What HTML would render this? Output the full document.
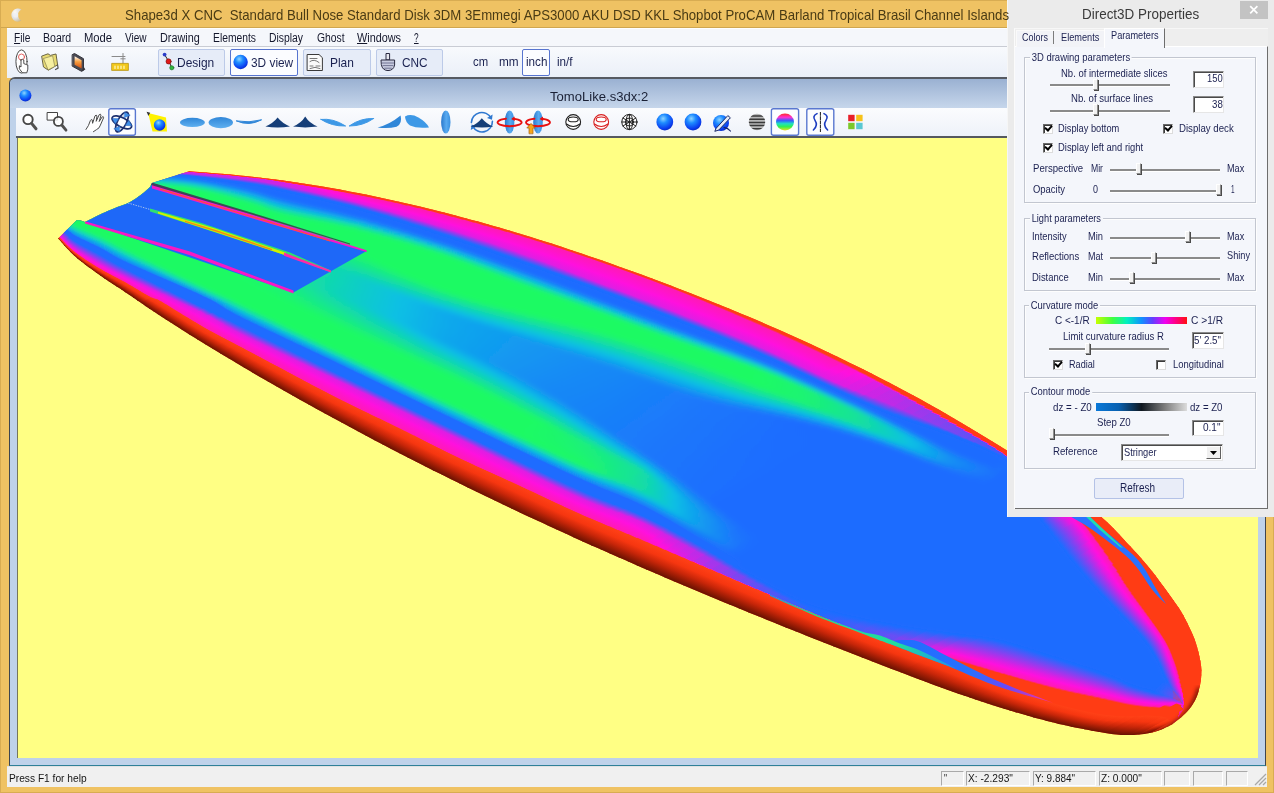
<!DOCTYPE html>
<html lang="en">
<head>
<meta charset="utf-8">
<title>Shape3d X CNC</title>
<style>
*{box-sizing:border-box;margin:0;padding:0}
html,body{width:1274px;height:793px;overflow:hidden;background:#efc263}
body{position:relative;font-family:"Liberation Sans",sans-serif;color:#1c2452;font-size:12px}
.abs{position:absolute}
.t{position:absolute;white-space:nowrap;line-height:1;transform-origin:0 50%}
#title{left:0;top:0;width:1274px;height:28px;background:#efc263;border-top:1px solid #d9ad52;border-left:1px solid #d9ad52;border-bottom:1px solid #cfa650}
#menubar{left:7px;top:28px;width:1260px;height:19px;background:#f5f7fb;border-bottom:1px solid #c9ccd4;border-top:1px solid #fff}
#tb{left:7px;top:47px;width:1260px;height:31px;background:linear-gradient(#f8fafd,#eaeff8)}
.btn{position:absolute;border:1px solid #bccae8;background:#e6ecf8;border-radius:2px}
.btn.sel{border:1.5px solid #5774cf;background:#fbfcff}
#mdi{left:9px;top:77px;width:1257px;height:689px;background:#bfd2ea;border:1px solid #3f454e;border-top:2px solid #565a62;border-radius:6px 6px 0 0;border-bottom:1.5px solid #2f8098}
#mdititle{left:0;top:0;width:1255px;height:29px;background:linear-gradient(#9ab1d2,#c6d6eb);border-radius:5px 5px 0 0}
#mditb{left:6px;top:29px;width:1243px;height:30px;background:linear-gradient(#fbfcfe,#eef2f9);border-bottom:2px solid #55595f}
#view{left:17px;top:138px;width:1241px;height:620px;background:#ffff84;overflow:hidden;border-left:1px solid #77775a}
#status{left:7px;top:766px;width:1260px;height:21px;background:#f0f0f0;border-top:1px solid #e2e2e2}
.pane{position:absolute;top:771px;height:15px;border:1px solid #fff;border-left-color:#a9a9a9;border-top-color:#a9a9a9}
/* panel */
#panel{left:1007px;top:0;width:267px;height:517px;background:#ebebeb;border-left:1px solid #f6f6f6}
#close{left:1240px;top:1px;width:28px;height:18px;background:#c3c3c3}
#dlg{left:1014px;top:28px;width:254px;height:481px;background:#eeeeee;border-left:1px solid #fbfbfb;border-top:1px solid #f7f7f7}
#page{left:1015px;top:46px;width:253px;height:463px;background:#f4f6fb;border-top:1px solid #fff;border-right:1px solid #6d6d6d;border-bottom:1px solid #6d6d6d}
.grp{position:absolute;border:1px solid #c2c6d0;left:1023.5px;width:232.5px;box-shadow:inset 1px 1px 0 #fdfdfd,1px 1px 0 #fdfdfd}
.edit{position:absolute;background:#fff;border:1px solid #8a8a8a;border-right-color:#e6e6e6;border-bottom-color:#e6e6e6;box-shadow:inset 1px 1px 0 #4a4a4a}
.sl{position:absolute;height:2px;background:#8a8a8a;border-bottom:1px solid #fff;box-sizing:content-box}
.th{position:absolute;width:5px;height:11px;background:#f2f2f2;border:1px solid #8e8e8e;border-left-color:#fff;border-top-color:#fff;box-shadow:1px 1px 0 #4a4a4a}
.cb{position:absolute;width:10px;height:10px;background:#fff;border:1px solid #6a6a6a;border-right-color:#dcdcdc;border-bottom-color:#dcdcdc;box-shadow:inset 1px 1px 0 #3a3a3a}
.cb.on:after{content:"";position:absolute;left:1.4px;top:.8px;width:5px;height:3px;border-left:2px solid #000;border-bottom:2px solid #000;transform:rotate(-48deg)}
</style>
</head>
<body>
<div id="title" class="abs">
  <svg class="abs" style="left:8px;top:6px" width="18" height="16" viewBox="0 0 18 16"><defs><radialGradient id="ico" cx=".35" cy=".3" r=".8"><stop offset="0" stop-color="#ffffff"/><stop offset=".6" stop-color="#dde2ee"/><stop offset="1" stop-color="#cdbb8c"/></radialGradient></defs><path d="M12.6 2.6 A6.6 6.6 0 1 0 12.6 13.600 A6 6 0 0 1 12.600 2.600Z" fill="url(#ico)" opacity=".92"/><circle cx="6.800" cy="8" r="2.600" fill="#eef1f7" opacity=".7"/></svg>
</div>
<div id="menubar" class="abs"></div>
<div id="tb" class="abs"></div>
<div class="btn" style="left:157.5px;top:48.5px;width:67px;height:27px"></div>
<div class="btn sel" style="left:230px;top:48.5px;width:68px;height:27px"></div>
<div class="btn" style="left:303px;top:48.5px;width:67.5px;height:27px"></div>
<div class="btn" style="left:375.5px;top:48.5px;width:67px;height:27px"></div>
<div class="btn sel" style="left:522.3px;top:48.5px;width:27.6px;height:27px"></div>
<!-- MDI child -->
<div id="mdi" class="abs">
  <div id="mdititle" class="abs"></div>
  <div id="mditb" class="abs"></div>
</div>
<div id="view" class="abs">
<svg class="abs" style="left:-18px;top:-138px" width="1274" height="793" viewBox="0 0 1274 793">
<defs>
<clipPath id="sil"><path d="M190.0 171.3 L195.4 171.7 L203.0 172.3 L211.9 173.0 L221.5 173.7 L231.1 174.6 L240.0 175.4 L248.3 176.3 L256.7 177.2 L265.0 178.2 L273.3 179.2 L281.7 180.3 L290.0 181.5 L298.2 182.7 L306.3 183.9 L314.4 185.2 L322.6 186.5 L331.1 188.0 L340.0 189.6 L349.4 191.4 L359.3 193.3 L369.4 195.3 L379.6 197.5 L389.9 199.7 L400.0 201.9 L410.0 204.2 L420.0 206.6 L430.0 209.0 L440.0 211.5 L450.0 214.1 L460.0 216.7 L470.0 219.4 L480.0 222.1 L490.0 224.9 L500.0 227.8 L510.0 230.7 L520.0 233.7 L530.0 236.8 L540.0 239.9 L550.0 243.1 L560.0 246.3 L570.0 249.7 L580.0 253.0 L590.0 256.4 L600.0 259.8 L610.0 263.3 L620.0 266.9 L630.0 270.5 L640.0 274.1 L650.0 277.8 L660.0 281.5 L670.0 285.3 L680.0 289.2 L690.0 293.1 L700.0 297.0 L710.0 301.0 L720.0 305.0 L730.0 309.1 L740.0 313.2 L750.0 317.3 L760.0 321.6 L770.0 325.9 L780.0 330.3 L790.0 334.8 L800.0 339.3 L810.0 343.8 L820.0 348.5 L830.0 353.2 L840.0 358.0 L850.0 362.9 L860.0 367.8 L870.0 372.8 L880.0 377.9 L889.9 383.0 L899.7 388.2 L909.6 393.4 L919.5 398.8 L929.6 404.4 L940.0 410.3 L951.0 416.7 L962.5 423.5 L974.2 430.5 L985.8 437.5 L996.9 444.3 L1007.0 450.6 L1016.1 456.4 L1024.5 461.9 L1032.4 467.1 L1039.9 472.2 L1047.4 477.4 L1055.0 482.7 L1062.9 488.3 L1071.0 494.0 L1079.1 499.8 L1086.8 505.5 L1094.0 511.0 L1100.4 516.2 L1105.9 521.0 L1110.6 525.4 L1114.8 529.7 L1118.6 533.8 L1122.5 538.0 L1126.5 542.4 L1130.7 546.8 L1134.7 551.2 L1138.8 555.6 L1142.8 560.2 L1146.9 565.0 L1151.0 570.0 L1155.4 575.6 L1160.1 581.9 L1164.8 588.3 L1169.3 594.5 L1173.4 600.2 L1176.7 605.0 L1179.2 608.6 L1180.9 611.3 L1182.2 613.4 L1183.3 615.3 L1184.4 617.4 L1185.7 620.0 L1187.3 623.1 L1188.9 626.5 L1190.6 630.0 L1192.2 633.6 L1193.7 637.1 L1195.0 640.5 L1196.1 643.8 L1197.1 647.2 L1198.0 650.4 L1198.8 653.6 L1199.4 656.6 L1200.0 659.4 L1200.5 661.8 L1200.8 664.0 L1201.1 666.0 L1201.3 667.9 L1201.4 669.9 L1201.4 672.0 L1201.3 674.3 L1201.2 676.6 L1201.0 679.0 L1200.7 681.4 L1200.3 683.8 L1199.8 686.2 L1199.2 688.6 L1198.6 691.0 L1197.9 693.4 L1197.1 695.8 L1196.1 698.1 L1195.0 700.4 L1193.8 702.6 L1192.4 704.8 L1190.9 706.9 L1189.3 708.9 L1187.6 711.0 L1185.7 713.0 L1183.5 715.1 L1181.0 717.4 L1178.3 719.6 L1175.7 721.6 L1173.5 723.3 L1172.0 724.6 L1172.0 724.6 L1170.4 725.3 L1168.2 726.4 L1165.6 727.6 L1162.8 728.9 L1160.0 730.0 L1157.3 731.0 L1154.7 731.8 L1152.1 732.4 L1149.5 733.0 L1146.8 733.5 L1144.1 733.9 L1141.5 734.3 L1138.9 734.6 L1136.3 734.8 L1133.7 734.9 L1131.0 735.0 L1128.4 735.0 L1125.8 735.0 L1123.4 735.0 L1121.3 734.9 L1119.1 734.8 L1116.7 734.6 L1113.7 734.2 L1110.0 733.7 L1105.3 733.0 L1099.7 732.0 L1093.6 731.0 L1087.2 729.8 L1080.9 728.6 L1075.0 727.4 L1069.5 726.2 L1064.2 725.1 L1058.9 723.9 L1053.6 722.6 L1048.0 721.2 L1042.0 719.6 L1035.6 717.9 L1029.0 716.1 L1022.1 714.1 L1014.9 712.0 L1007.6 709.8 L1000.0 707.5 L992.1 705.0 L983.9 702.3 L975.5 699.5 L967.0 696.6 L958.4 693.7 L950.0 690.7 L941.7 687.7 L933.3 684.7 L925.0 681.6 L916.7 678.4 L908.3 675.3 L900.0 672.1 L891.7 668.9 L883.3 665.7 L875.0 662.5 L866.7 659.3 L858.3 656.0 L850.0 652.8 L841.7 649.5 L833.3 646.3 L825.0 643.0 L816.7 639.7 L808.3 636.4 L800.0 633.1 L791.7 629.8 L783.3 626.4 L775.0 623.1 L766.7 619.7 L758.3 616.3 L750.0 612.9 L741.7 609.5 L733.3 606.1 L725.0 602.7 L716.7 599.2 L708.3 595.8 L700.0 592.3 L691.7 588.8 L683.3 585.3 L675.0 581.7 L666.7 578.2 L658.3 574.6 L650.0 571.0 L641.7 567.4 L633.3 563.8 L625.0 560.1 L616.7 556.5 L608.3 552.8 L600.0 549.1 L591.7 545.4 L583.3 541.7 L575.0 537.9 L566.7 534.1 L558.3 530.3 L550.0 526.5 L541.7 522.6 L533.3 518.8 L525.0 514.9 L516.7 510.9 L508.3 507.0 L500.0 503.0 L491.7 499.0 L483.3 495.0 L475.0 491.0 L466.7 486.9 L458.3 482.8 L450.0 478.7 L441.7 474.6 L433.3 470.4 L425.0 466.2 L416.7 462.0 L408.3 457.8 L400.0 453.5 L391.7 449.2 L383.3 444.8 L375.0 440.4 L366.7 436.0 L358.3 431.6 L350.0 427.1 L341.7 422.6 L333.3 418.1 L325.0 413.5 L316.7 409.0 L308.3 404.3 L300.0 399.7 L291.7 395.0 L283.3 390.3 L275.0 385.6 L266.7 380.8 L258.3 376.0 L250.0 371.1 L241.4 366.0 L232.4 360.6 L223.4 355.2 L214.8 350.0 L206.9 345.2 L200.0 341.0 L194.4 337.6 L189.8 334.7 L185.9 332.3 L182.4 330.0 L178.9 327.8 L175.0 325.3 L170.8 322.6 L166.7 319.9 L162.5 317.2 L158.3 314.5 L154.2 311.8 L150.0 309.0 L145.8 306.2 L141.7 303.3 L137.5 300.5 L133.3 297.6 L129.2 294.7 L125.0 291.9 L120.8 289.1 L116.7 286.4 L112.5 283.7 L108.3 281.0 L104.2 278.2 L100.0 275.3 L95.7 272.3 L91.4 269.1 L87.0 265.9 L82.7 262.6 L78.7 259.4 L75.0 256.3 L71.5 253.0 L68.2 249.6 L65.0 246.2 L62.3 243.0 L59.9 240.3 L58.2 238.4 L76.5 220.3 L80.0 220.2 L85.0 222.0 L86.6 221.2 L88.9 220.0 L91.6 218.7 L94.4 217.2 L97.3 215.8 L100.0 214.5 L102.5 213.3 L105.1 212.2 L107.6 211.1 L110.1 210.0 L112.6 209.0 L115.0 208.0 L117.3 207.1 L119.5 206.3 L121.7 205.6 L123.8 204.8 L125.9 204.0 L128.0 203.0 L130.1 201.9 L132.1 200.7 L134.2 199.5 L136.2 198.2 L138.1 196.8 L140.0 195.5 L141.9 194.0 L143.9 192.4 L145.8 190.8 L147.5 189.2 L148.9 187.9 L150.0 187.0 L152.0 183.0 L190.0 171.1 Z"/></clipPath>
<filter id="bl" x="-5%" y="-5%" width="110%" height="110%"><feGaussianBlur stdDeviation="2.2"/></filter>
<filter id="b2" x="-2%" y="-2%" width="104%" height="104%"><feGaussianBlur stdDeviation="2.5"/></filter>
<linearGradient id="g1" gradientUnits="userSpaceOnUse" x1="152.9" y1="169.4" x2="152.7" y2="173.7"><stop offset="0" stop-color="#ff3c14"/><stop offset="0.114" stop-color="#ff3c14"/><stop offset="0.207" stop-color="#ff10de"/><stop offset="0.229" stop-color="#c926e6"/><stop offset="0.545" stop-color="#c926e6"/><stop offset="1" stop-color="#1e6cff"/></linearGradient>
<linearGradient id="g2" gradientUnits="userSpaceOnUse" x1="145.5" y1="173.5" x2="120.6" y2="245.3"><stop offset="0" stop-color="#1e6cff"/><stop offset="0.062" stop-color="#1e6cff"/><stop offset="0.12" stop-color="#08c0e4"/><stop offset="0.185" stop-color="#1efa64"/><stop offset="0.248" stop-color="#1efa64"/><stop offset="0.434" stop-color="#1efa64"/><stop offset="0.803" stop-color="#1efa64"/><stop offset="0.891" stop-color="#1efa64"/><stop offset="0.942" stop-color="#1efa64"/><stop offset="0.973" stop-color="#08c0e4"/><stop offset="1" stop-color="#1e6cff"/></linearGradient>
<linearGradient id="g3" gradientUnits="userSpaceOnUse" x1="55.9" y1="222.8" x2="51.1" y2="228.3"><stop offset="0" stop-color="#1e6cff"/><stop offset="0.287" stop-color="#1e6cff"/><stop offset="0.774" stop-color="#df1de3"/><stop offset="0.849" stop-color="#ff10de"/><stop offset="0.956" stop-color="#ff19b6"/><stop offset="1" stop-color="#ff3c14"/></linearGradient>
<linearGradient id="g4" gradientUnits="userSpaceOnUse" x1="49.1" y1="226.5" x2="48.6" y2="226.9"><stop offset="0" stop-color="#ff4016"/><stop offset="0.3" stop-color="#f63610"/><stop offset="0.58" stop-color="#c82609"/><stop offset="0.82" stop-color="#921a04"/><stop offset="1" stop-color="#681202"/></linearGradient>
<linearGradient id="g5" gradientUnits="userSpaceOnUse" x1="161.3" y1="169.8" x2="161.1" y2="174.0"><stop offset="0" stop-color="#ff3c14"/><stop offset="0.108" stop-color="#ff3c14"/><stop offset="0.202" stop-color="#ff10de"/><stop offset="0.225" stop-color="#c926e6"/><stop offset="0.541" stop-color="#c926e6"/><stop offset="1" stop-color="#1e6cff"/></linearGradient>
<linearGradient id="g6" gradientUnits="userSpaceOnUse" x1="154.1" y1="173.8" x2="137.0" y2="244.2"><stop offset="0" stop-color="#1e6cff"/><stop offset="0.06" stop-color="#1e6cff"/><stop offset="0.116" stop-color="#08c0e4"/><stop offset="0.179" stop-color="#1efa64"/><stop offset="0.23" stop-color="#1efa64"/><stop offset="0.397" stop-color="#1efa64"/><stop offset="0.771" stop-color="#1efa64"/><stop offset="0.883" stop-color="#1efa64"/><stop offset="0.939" stop-color="#1efa64"/><stop offset="0.972" stop-color="#08c0e4"/><stop offset="1" stop-color="#1e6cff"/></linearGradient>
<linearGradient id="g7" gradientUnits="userSpaceOnUse" x1="60.0" y1="225.5" x2="54.4" y2="231.9"><stop offset="0" stop-color="#1e6cff"/><stop offset="0.274" stop-color="#1e6cff"/><stop offset="0.773" stop-color="#df1de3"/><stop offset="0.847" stop-color="#ff10de"/><stop offset="0.952" stop-color="#ff19b6"/><stop offset="1" stop-color="#ff3c14"/></linearGradient>
<linearGradient id="g8" gradientUnits="userSpaceOnUse" x1="52.0" y1="229.9" x2="51.4" y2="230.4"><stop offset="0" stop-color="#ff4016"/><stop offset="0.3" stop-color="#f63610"/><stop offset="0.58" stop-color="#c82609"/><stop offset="0.82" stop-color="#921a04"/><stop offset="1" stop-color="#681202"/></linearGradient>
<linearGradient id="g9" gradientUnits="userSpaceOnUse" x1="169.7" y1="170.2" x2="169.5" y2="174.4"><stop offset="0" stop-color="#ff3c14"/><stop offset="0.103" stop-color="#ff3c14"/><stop offset="0.198" stop-color="#ff10de"/><stop offset="0.22" stop-color="#c926e6"/><stop offset="0.538" stop-color="#c926e6"/><stop offset="1" stop-color="#1e6cff"/></linearGradient>
<linearGradient id="g10" gradientUnits="userSpaceOnUse" x1="162.6" y1="174.1" x2="144.1" y2="248.2"><stop offset="0" stop-color="#1e6cff"/><stop offset="0.059" stop-color="#1e6cff"/><stop offset="0.112" stop-color="#08c0e4"/><stop offset="0.173" stop-color="#1efa64"/><stop offset="0.222" stop-color="#1efa64"/><stop offset="0.382" stop-color="#1efa64"/><stop offset="0.751" stop-color="#1efa64"/><stop offset="0.873" stop-color="#1efa64"/><stop offset="0.935" stop-color="#1efa64"/><stop offset="0.97" stop-color="#08c0e4"/><stop offset="1" stop-color="#1e6cff"/></linearGradient>
<linearGradient id="g11" gradientUnits="userSpaceOnUse" x1="64.0" y1="228.3" x2="57.7" y2="235.6"><stop offset="0" stop-color="#1e6cff"/><stop offset="0.267" stop-color="#1e6cff"/><stop offset="0.774" stop-color="#df1de3"/><stop offset="0.847" stop-color="#ff10de"/><stop offset="0.951" stop-color="#ff19b6"/><stop offset="1" stop-color="#ff3c14"/></linearGradient>
<linearGradient id="g12" gradientUnits="userSpaceOnUse" x1="55.0" y1="233.2" x2="54.3" y2="233.8"><stop offset="0" stop-color="#ff4016"/><stop offset="0.3" stop-color="#f63610"/><stop offset="0.58" stop-color="#c82609"/><stop offset="0.82" stop-color="#921a04"/><stop offset="1" stop-color="#681202"/></linearGradient>
<linearGradient id="g13" gradientUnits="userSpaceOnUse" x1="178.0" y1="170.6" x2="177.8" y2="174.8"><stop offset="0" stop-color="#ff3c14"/><stop offset="0.104" stop-color="#ff3c14"/><stop offset="0.197" stop-color="#ff10de"/><stop offset="0.219" stop-color="#c926e6"/><stop offset="0.537" stop-color="#c926e6"/><stop offset="1" stop-color="#1e6cff"/></linearGradient>
<linearGradient id="g14" gradientUnits="userSpaceOnUse" x1="171.0" y1="174.5" x2="149.9" y2="253.0"><stop offset="0" stop-color="#1e6cff"/><stop offset="0.057" stop-color="#1e6cff"/><stop offset="0.108" stop-color="#08c0e4"/><stop offset="0.166" stop-color="#1efa64"/><stop offset="0.22" stop-color="#1efa64"/><stop offset="0.377" stop-color="#1efa64"/><stop offset="0.737" stop-color="#1efa64"/><stop offset="0.854" stop-color="#1efa64"/><stop offset="0.93" stop-color="#1efa64"/><stop offset="0.967" stop-color="#08c0e4"/><stop offset="1" stop-color="#1e6cff"/></linearGradient>
<linearGradient id="g15" gradientUnits="userSpaceOnUse" x1="68.1" y1="231.1" x2="61.0" y2="239.1"><stop offset="0" stop-color="#1e6cff"/><stop offset="0.267" stop-color="#1e6cff"/><stop offset="0.774" stop-color="#df1de3"/><stop offset="0.847" stop-color="#ff10de"/><stop offset="0.95" stop-color="#ff19b6"/><stop offset="1" stop-color="#ff3c14"/></linearGradient>
<linearGradient id="g16" gradientUnits="userSpaceOnUse" x1="58.0" y1="236.6" x2="57.2" y2="237.3"><stop offset="0" stop-color="#ff4016"/><stop offset="0.3" stop-color="#f63610"/><stop offset="0.58" stop-color="#c82609"/><stop offset="0.82" stop-color="#921a04"/><stop offset="1" stop-color="#681202"/></linearGradient>
<linearGradient id="g17" gradientUnits="userSpaceOnUse" x1="186.3" y1="171.1" x2="186.0" y2="175.4"><stop offset="0" stop-color="#ff3c14"/><stop offset="0.109" stop-color="#ff3c14"/><stop offset="0.201" stop-color="#ff10de"/><stop offset="0.223" stop-color="#c926e6"/><stop offset="0.538" stop-color="#c926e6"/><stop offset="1" stop-color="#1e6cff"/></linearGradient>
<linearGradient id="g18" gradientUnits="userSpaceOnUse" x1="179.2" y1="175.0" x2="153.8" y2="258.9"><stop offset="0" stop-color="#1e6cff"/><stop offset="0.055" stop-color="#1e6cff"/><stop offset="0.104" stop-color="#08c0e4"/><stop offset="0.16" stop-color="#1efa64"/><stop offset="0.219" stop-color="#1efa64"/><stop offset="0.374" stop-color="#1efa64"/><stop offset="0.722" stop-color="#1efa64"/><stop offset="0.825" stop-color="#1efa64"/><stop offset="0.918" stop-color="#1efa64"/><stop offset="0.962" stop-color="#08c0e4"/><stop offset="1" stop-color="#1e6cff"/></linearGradient>
<linearGradient id="g19" gradientUnits="userSpaceOnUse" x1="71.6" y1="234.1" x2="63.8" y2="242.4"><stop offset="0" stop-color="#1e6cff"/><stop offset="0.263" stop-color="#1e6cff"/><stop offset="0.768" stop-color="#df1de3"/><stop offset="0.843" stop-color="#ff10de"/><stop offset="0.95" stop-color="#ff19b6"/><stop offset="1" stop-color="#ff3c14"/></linearGradient>
<linearGradient id="g20" gradientUnits="userSpaceOnUse" x1="61.1" y1="239.9" x2="60.2" y2="240.7"><stop offset="0" stop-color="#ff4016"/><stop offset="0.3" stop-color="#f63610"/><stop offset="0.58" stop-color="#c82609"/><stop offset="0.82" stop-color="#921a04"/><stop offset="1" stop-color="#681202"/></linearGradient>
<linearGradient id="g21" gradientUnits="userSpaceOnUse" x1="194.4" y1="171.6" x2="194.0" y2="176.1"><stop offset="0" stop-color="#ff3c14"/><stop offset="0.119" stop-color="#ff3c14"/><stop offset="0.209" stop-color="#ff10de"/><stop offset="0.23" stop-color="#c926e6"/><stop offset="0.541" stop-color="#c926e6"/><stop offset="1" stop-color="#1e6cff"/></linearGradient>
<linearGradient id="g22" gradientUnits="userSpaceOnUse" x1="187.2" y1="175.6" x2="166.4" y2="259.2"><stop offset="0" stop-color="#1e6cff"/><stop offset="0.054" stop-color="#1e6cff"/><stop offset="0.101" stop-color="#08c0e4"/><stop offset="0.155" stop-color="#1efa64"/><stop offset="0.219" stop-color="#1efa64"/><stop offset="0.375" stop-color="#1efa64"/><stop offset="0.714" stop-color="#1efa64"/><stop offset="0.809" stop-color="#1efa64"/><stop offset="0.912" stop-color="#1efa64"/><stop offset="0.959" stop-color="#08c0e4"/><stop offset="1" stop-color="#1e6cff"/></linearGradient>
<linearGradient id="g23" gradientUnits="userSpaceOnUse" x1="75.9" y1="236.8" x2="68.8" y2="246.5"><stop offset="0" stop-color="#1e6cff"/><stop offset="0.347" stop-color="#1e6cff"/><stop offset="0.785" stop-color="#df1de3"/><stop offset="0.856" stop-color="#ff10de"/><stop offset="0.957" stop-color="#ff19b6"/><stop offset="1" stop-color="#ff3c14"/></linearGradient>
<linearGradient id="g24" gradientUnits="userSpaceOnUse" x1="64.3" y1="243.2" x2="63.2" y2="244.1"><stop offset="0" stop-color="#ff4016"/><stop offset="0.3" stop-color="#f63610"/><stop offset="0.58" stop-color="#c82609"/><stop offset="0.82" stop-color="#921a04"/><stop offset="1" stop-color="#681202"/></linearGradient>
<linearGradient id="g25" gradientUnits="userSpaceOnUse" x1="202.4" y1="172.2" x2="202.0" y2="176.9"><stop offset="0" stop-color="#ff3c14"/><stop offset="0.131" stop-color="#ff3c14"/><stop offset="0.218" stop-color="#ff10de"/><stop offset="0.239" stop-color="#c926e6"/><stop offset="0.546" stop-color="#c926e6"/><stop offset="1" stop-color="#1e6cff"/></linearGradient>
<linearGradient id="g26" gradientUnits="userSpaceOnUse" x1="194.9" y1="176.3" x2="173.6" y2="262.2"><stop offset="0" stop-color="#1e6cff"/><stop offset="0.054" stop-color="#1e6cff"/><stop offset="0.099" stop-color="#08c0e4"/><stop offset="0.15" stop-color="#1efa64"/><stop offset="0.219" stop-color="#1efa64"/><stop offset="0.378" stop-color="#1efa64"/><stop offset="0.71" stop-color="#1efa64"/><stop offset="0.805" stop-color="#1efa64"/><stop offset="0.91" stop-color="#1efa64"/><stop offset="0.958" stop-color="#08c0e4"/><stop offset="1" stop-color="#1e6cff"/></linearGradient>
<linearGradient id="g27" gradientUnits="userSpaceOnUse" x1="80.7" y1="239.1" x2="73.2" y2="250.2"><stop offset="0" stop-color="#1e6cff"/><stop offset="0.369" stop-color="#1e6cff"/><stop offset="0.801" stop-color="#df1de3"/><stop offset="0.869" stop-color="#ff10de"/><stop offset="0.965" stop-color="#ff19b6"/><stop offset="1" stop-color="#ff3c14"/></linearGradient>
<linearGradient id="g28" gradientUnits="userSpaceOnUse" x1="67.5" y1="246.4" x2="66.2" y2="247.6"><stop offset="0" stop-color="#ff4016"/><stop offset="0.3" stop-color="#f63610"/><stop offset="0.58" stop-color="#c82609"/><stop offset="0.82" stop-color="#921a04"/><stop offset="1" stop-color="#681202"/></linearGradient>
<linearGradient id="g29" gradientUnits="userSpaceOnUse" x1="210.4" y1="172.8" x2="209.9" y2="177.9"><stop offset="0" stop-color="#ff3c14"/><stop offset="0.14" stop-color="#ff3c14"/><stop offset="0.224" stop-color="#ff10de"/><stop offset="0.244" stop-color="#c926e6"/><stop offset="0.546" stop-color="#c926e6"/><stop offset="1" stop-color="#1e6cff"/></linearGradient>
<linearGradient id="g30" gradientUnits="userSpaceOnUse" x1="202.5" y1="177.1" x2="180.2" y2="265.4"><stop offset="0" stop-color="#1e6cff"/><stop offset="0.054" stop-color="#1e6cff"/><stop offset="0.098" stop-color="#08c0e4"/><stop offset="0.148" stop-color="#1efa64"/><stop offset="0.219" stop-color="#1efa64"/><stop offset="0.38" stop-color="#1efa64"/><stop offset="0.706" stop-color="#1efa64"/><stop offset="0.809" stop-color="#1efa64"/><stop offset="0.91" stop-color="#1efa64"/><stop offset="0.958" stop-color="#08c0e4"/><stop offset="1" stop-color="#1e6cff"/></linearGradient>
<linearGradient id="g31" gradientUnits="userSpaceOnUse" x1="85.6" y1="241.4" x2="77.7" y2="253.9"><stop offset="0" stop-color="#1e6cff"/><stop offset="0.364" stop-color="#1e6cff"/><stop offset="0.802" stop-color="#df1de3"/><stop offset="0.871" stop-color="#ff10de"/><stop offset="0.97" stop-color="#ff19b6"/><stop offset="1" stop-color="#ff3c14"/></linearGradient>
<linearGradient id="g32" gradientUnits="userSpaceOnUse" x1="70.9" y1="249.5" x2="69.4" y2="251.0"><stop offset="0" stop-color="#ff4016"/><stop offset="0.3" stop-color="#f63610"/><stop offset="0.58" stop-color="#c82609"/><stop offset="0.82" stop-color="#921a04"/><stop offset="1" stop-color="#681202"/></linearGradient>
<linearGradient id="g33" gradientUnits="userSpaceOnUse" x1="218.3" y1="173.4" x2="217.7" y2="178.9"><stop offset="0" stop-color="#ff3c14"/><stop offset="0.145" stop-color="#ff3c14"/><stop offset="0.227" stop-color="#ff10de"/><stop offset="0.246" stop-color="#c926e6"/><stop offset="0.543" stop-color="#c926e6"/><stop offset="1" stop-color="#1e6cff"/></linearGradient>
<linearGradient id="g34" gradientUnits="userSpaceOnUse" x1="210.0" y1="178.0" x2="186.4" y2="268.6"><stop offset="0" stop-color="#1e6cff"/><stop offset="0.056" stop-color="#1e6cff"/><stop offset="0.099" stop-color="#08c0e4"/><stop offset="0.148" stop-color="#1efa64"/><stop offset="0.218" stop-color="#1efa64"/><stop offset="0.382" stop-color="#1efa64"/><stop offset="0.703" stop-color="#1efa64"/><stop offset="0.813" stop-color="#1efa64"/><stop offset="0.911" stop-color="#1efa64"/><stop offset="0.958" stop-color="#08c0e4"/><stop offset="1" stop-color="#1e6cff"/></linearGradient>
<linearGradient id="g35" gradientUnits="userSpaceOnUse" x1="90.5" y1="243.7" x2="82.3" y2="257.3"><stop offset="0" stop-color="#1e6cff"/><stop offset="0.356" stop-color="#1e6cff"/><stop offset="0.795" stop-color="#df1de3"/><stop offset="0.868" stop-color="#ff10de"/><stop offset="0.972" stop-color="#ff19b6"/><stop offset="1" stop-color="#ff3c14"/></linearGradient>
<linearGradient id="g36" gradientUnits="userSpaceOnUse" x1="74.5" y1="252.5" x2="72.8" y2="254.3"><stop offset="0" stop-color="#ff4016"/><stop offset="0.3" stop-color="#f63610"/><stop offset="0.58" stop-color="#c82609"/><stop offset="0.82" stop-color="#921a04"/><stop offset="1" stop-color="#681202"/></linearGradient>
<linearGradient id="g37" gradientUnits="userSpaceOnUse" x1="226.2" y1="174.1" x2="225.5" y2="179.9"><stop offset="0" stop-color="#ff3c14"/><stop offset="0.146" stop-color="#ff3c14"/><stop offset="0.225" stop-color="#ff10de"/><stop offset="0.244" stop-color="#c926e6"/><stop offset="0.538" stop-color="#c926e6"/><stop offset="1" stop-color="#1e6cff"/></linearGradient>
<linearGradient id="g38" gradientUnits="userSpaceOnUse" x1="217.4" y1="178.9" x2="192.3" y2="272.1"><stop offset="0" stop-color="#1e6cff"/><stop offset="0.058" stop-color="#1e6cff"/><stop offset="0.101" stop-color="#08c0e4"/><stop offset="0.15" stop-color="#1efa64"/><stop offset="0.217" stop-color="#1efa64"/><stop offset="0.384" stop-color="#1efa64"/><stop offset="0.7" stop-color="#1efa64"/><stop offset="0.815" stop-color="#1efa64"/><stop offset="0.913" stop-color="#1efa64"/><stop offset="0.96" stop-color="#08c0e4"/><stop offset="1" stop-color="#1e6cff"/></linearGradient>
<linearGradient id="g39" gradientUnits="userSpaceOnUse" x1="95.4" y1="246.0" x2="86.9" y2="260.4"><stop offset="0" stop-color="#1e6cff"/><stop offset="0.347" stop-color="#1e6cff"/><stop offset="0.786" stop-color="#df1de3"/><stop offset="0.863" stop-color="#ff10de"/><stop offset="0.971" stop-color="#ff19b6"/><stop offset="1" stop-color="#ff3c14"/></linearGradient>
<linearGradient id="g40" gradientUnits="userSpaceOnUse" x1="78.4" y1="255.4" x2="76.5" y2="257.6"><stop offset="0" stop-color="#ff4016"/><stop offset="0.3" stop-color="#f63610"/><stop offset="0.58" stop-color="#c82609"/><stop offset="0.82" stop-color="#921a04"/><stop offset="1" stop-color="#681202"/></linearGradient>
<linearGradient id="g41" gradientUnits="userSpaceOnUse" x1="234.0" y1="174.8" x2="233.2" y2="180.9"><stop offset="0" stop-color="#ff3c14"/><stop offset="0.142" stop-color="#ff3c14"/><stop offset="0.218" stop-color="#ff10de"/><stop offset="0.237" stop-color="#c926e6"/><stop offset="0.532" stop-color="#c926e6"/><stop offset="1" stop-color="#1e6cff"/></linearGradient>
<linearGradient id="g42" gradientUnits="userSpaceOnUse" x1="224.7" y1="179.9" x2="197.3" y2="276.1"><stop offset="0" stop-color="#1e6cff"/><stop offset="0.06" stop-color="#1e6cff"/><stop offset="0.103" stop-color="#08c0e4"/><stop offset="0.153" stop-color="#1efa64"/><stop offset="0.216" stop-color="#1efa64"/><stop offset="0.386" stop-color="#1efa64"/><stop offset="0.696" stop-color="#1efa64"/><stop offset="0.813" stop-color="#1efa64"/><stop offset="0.916" stop-color="#1efa64"/><stop offset="0.961" stop-color="#08c0e4"/><stop offset="1" stop-color="#1e6cff"/></linearGradient>
<linearGradient id="g43" gradientUnits="userSpaceOnUse" x1="100.2" y1="248.4" x2="91.2" y2="263.5"><stop offset="0" stop-color="#1e6cff"/><stop offset="0.337" stop-color="#1e6cff"/><stop offset="0.777" stop-color="#df1de3"/><stop offset="0.856" stop-color="#ff10de"/><stop offset="0.97" stop-color="#ff19b6"/><stop offset="1" stop-color="#ff3c14"/></linearGradient>
<linearGradient id="g44" gradientUnits="userSpaceOnUse" x1="82.3" y1="258.2" x2="80.3" y2="260.7"><stop offset="0" stop-color="#ff4016"/><stop offset="0.3" stop-color="#f63610"/><stop offset="0.58" stop-color="#c82609"/><stop offset="0.82" stop-color="#921a04"/><stop offset="1" stop-color="#681202"/></linearGradient>
<linearGradient id="g45" gradientUnits="userSpaceOnUse" x1="241.7" y1="175.6" x2="240.9" y2="182.0"><stop offset="0" stop-color="#ff3c14"/><stop offset="0.133" stop-color="#ff3c14"/><stop offset="0.208" stop-color="#ff10de"/><stop offset="0.226" stop-color="#c926e6"/><stop offset="0.524" stop-color="#c926e6"/><stop offset="1" stop-color="#1e6cff"/></linearGradient>
<linearGradient id="g46" gradientUnits="userSpaceOnUse" x1="232.0" y1="180.9" x2="200.9" y2="280.8"><stop offset="0" stop-color="#1e6cff"/><stop offset="0.063" stop-color="#1e6cff"/><stop offset="0.107" stop-color="#08c0e4"/><stop offset="0.157" stop-color="#1efa64"/><stop offset="0.216" stop-color="#1efa64"/><stop offset="0.386" stop-color="#1efa64"/><stop offset="0.691" stop-color="#1efa64"/><stop offset="0.807" stop-color="#1efa64"/><stop offset="0.917" stop-color="#1efa64"/><stop offset="0.961" stop-color="#08c0e4"/><stop offset="1" stop-color="#1e6cff"/></linearGradient>
<linearGradient id="g47" gradientUnits="userSpaceOnUse" x1="104.7" y1="250.9" x2="95.0" y2="266.3"><stop offset="0" stop-color="#1e6cff"/><stop offset="0.323" stop-color="#1e6cff"/><stop offset="0.765" stop-color="#df1de3"/><stop offset="0.849" stop-color="#ff10de"/><stop offset="0.968" stop-color="#ff19b6"/><stop offset="1" stop-color="#ff3c14"/></linearGradient>
<linearGradient id="g48" gradientUnits="userSpaceOnUse" x1="86.4" y1="261.0" x2="84.2" y2="263.8"><stop offset="0" stop-color="#ff4016"/><stop offset="0.3" stop-color="#f63610"/><stop offset="0.58" stop-color="#c82609"/><stop offset="0.82" stop-color="#921a04"/><stop offset="1" stop-color="#681202"/></linearGradient>
<linearGradient id="g49" gradientUnits="userSpaceOnUse" x1="249.3" y1="176.4" x2="248.4" y2="183.1"><stop offset="0" stop-color="#ff3c14"/><stop offset="0.122" stop-color="#ff3c14"/><stop offset="0.195" stop-color="#ff10de"/><stop offset="0.213" stop-color="#c926e6"/><stop offset="0.517" stop-color="#c926e6"/><stop offset="1" stop-color="#1e6cff"/></linearGradient>
<linearGradient id="g50" gradientUnits="userSpaceOnUse" x1="239.3" y1="181.9" x2="206.6" y2="284.6"><stop offset="0" stop-color="#1e6cff"/><stop offset="0.065" stop-color="#1e6cff"/><stop offset="0.11" stop-color="#08c0e4"/><stop offset="0.161" stop-color="#1efa64"/><stop offset="0.215" stop-color="#1efa64"/><stop offset="0.387" stop-color="#1efa64"/><stop offset="0.685" stop-color="#1efa64"/><stop offset="0.798" stop-color="#1efa64"/><stop offset="0.915" stop-color="#1efa64"/><stop offset="0.961" stop-color="#08c0e4"/><stop offset="1" stop-color="#1e6cff"/></linearGradient>
<linearGradient id="g51" gradientUnits="userSpaceOnUse" x1="108.9" y1="253.6" x2="99.3" y2="269.0"><stop offset="0" stop-color="#1e6cff"/><stop offset="0.306" stop-color="#1e6cff"/><stop offset="0.75" stop-color="#df1de3"/><stop offset="0.839" stop-color="#ff10de"/><stop offset="0.966" stop-color="#ff19b6"/><stop offset="1" stop-color="#ff3c14"/></linearGradient>
<linearGradient id="g52" gradientUnits="userSpaceOnUse" x1="90.6" y1="263.6" x2="88.3" y2="266.8"><stop offset="0" stop-color="#ff4016"/><stop offset="0.3" stop-color="#f63610"/><stop offset="0.58" stop-color="#c82609"/><stop offset="0.82" stop-color="#921a04"/><stop offset="1" stop-color="#681202"/></linearGradient>
<linearGradient id="g53" gradientUnits="userSpaceOnUse" x1="256.8" y1="177.2" x2="255.9" y2="184.2"><stop offset="0" stop-color="#ff3c14"/><stop offset="0.111" stop-color="#ff3c14"/><stop offset="0.182" stop-color="#ff10de"/><stop offset="0.199" stop-color="#c926e6"/><stop offset="0.512" stop-color="#c926e6"/><stop offset="1" stop-color="#1e6cff"/></linearGradient>
<linearGradient id="g54" gradientUnits="userSpaceOnUse" x1="246.5" y1="182.9" x2="214.8" y2="287.0"><stop offset="0" stop-color="#1e6cff"/><stop offset="0.067" stop-color="#1e6cff"/><stop offset="0.113" stop-color="#08c0e4"/><stop offset="0.166" stop-color="#1efa64"/><stop offset="0.215" stop-color="#1efa64"/><stop offset="0.387" stop-color="#1efa64"/><stop offset="0.679" stop-color="#1efa64"/><stop offset="0.789" stop-color="#1efa64"/><stop offset="0.914" stop-color="#1efa64"/><stop offset="0.96" stop-color="#08c0e4"/><stop offset="1" stop-color="#1e6cff"/></linearGradient>
<linearGradient id="g55" gradientUnits="userSpaceOnUse" x1="113.3" y1="256.2" x2="104.2" y2="271.8"><stop offset="0" stop-color="#1e6cff"/><stop offset="0.301" stop-color="#1e6cff"/><stop offset="0.738" stop-color="#df1de3"/><stop offset="0.831" stop-color="#ff10de"/><stop offset="0.964" stop-color="#ff19b6"/><stop offset="1" stop-color="#ff3c14"/></linearGradient>
<linearGradient id="g56" gradientUnits="userSpaceOnUse" x1="94.9" y1="266.3" x2="92.3" y2="269.8"><stop offset="0" stop-color="#ff4016"/><stop offset="0.3" stop-color="#f63610"/><stop offset="0.58" stop-color="#c82609"/><stop offset="0.82" stop-color="#921a04"/><stop offset="1" stop-color="#681202"/></linearGradient>
<linearGradient id="g57" gradientUnits="userSpaceOnUse" x1="264.3" y1="178.1" x2="263.3" y2="185.3"><stop offset="0" stop-color="#ff3c14"/><stop offset="0.104" stop-color="#ff3c14"/><stop offset="0.17" stop-color="#ff10de"/><stop offset="0.185" stop-color="#c926e6"/><stop offset="0.507" stop-color="#c926e6"/><stop offset="1" stop-color="#1e6cff"/></linearGradient>
<linearGradient id="g58" gradientUnits="userSpaceOnUse" x1="253.6" y1="184.0" x2="223.0" y2="289.2"><stop offset="0" stop-color="#1e6cff"/><stop offset="0.07" stop-color="#1e6cff"/><stop offset="0.117" stop-color="#08c0e4"/><stop offset="0.171" stop-color="#1efa64"/><stop offset="0.215" stop-color="#1efa64"/><stop offset="0.388" stop-color="#1efa64"/><stop offset="0.676" stop-color="#1efa64"/><stop offset="0.781" stop-color="#1efa64"/><stop offset="0.915" stop-color="#1efa64"/><stop offset="0.96" stop-color="#08c0e4"/><stop offset="1" stop-color="#1e6cff"/></linearGradient>
<linearGradient id="g59" gradientUnits="userSpaceOnUse" x1="118.0" y1="258.6" x2="109.2" y2="274.5"><stop offset="0" stop-color="#1e6cff"/><stop offset="0.305" stop-color="#1e6cff"/><stop offset="0.731" stop-color="#df1de3"/><stop offset="0.827" stop-color="#ff10de"/><stop offset="0.963" stop-color="#ff19b6"/><stop offset="1" stop-color="#ff3c14"/></linearGradient>
<linearGradient id="g60" gradientUnits="userSpaceOnUse" x1="99.2" y1="268.9" x2="96.5" y2="272.8"><stop offset="0" stop-color="#ff4016"/><stop offset="0.3" stop-color="#f63610"/><stop offset="0.58" stop-color="#c82609"/><stop offset="0.82" stop-color="#921a04"/><stop offset="1" stop-color="#681202"/></linearGradient>
<linearGradient id="g61" gradientUnits="userSpaceOnUse" x1="271.7" y1="179.0" x2="270.6" y2="186.6"><stop offset="0" stop-color="#ff3c14"/><stop offset="0.124" stop-color="#ff3c14"/><stop offset="0.184" stop-color="#ff10de"/><stop offset="0.199" stop-color="#c926e6"/><stop offset="0.527" stop-color="#c926e6"/><stop offset="1" stop-color="#1e6cff"/></linearGradient>
<linearGradient id="g62" gradientUnits="userSpaceOnUse" x1="260.8" y1="185.1" x2="229.2" y2="292.3"><stop offset="0" stop-color="#1e6cff"/><stop offset="0.073" stop-color="#1e6cff"/><stop offset="0.121" stop-color="#08c0e4"/><stop offset="0.177" stop-color="#1efa64"/><stop offset="0.217" stop-color="#1efa64"/><stop offset="0.39" stop-color="#1efa64"/><stop offset="0.673" stop-color="#1efa64"/><stop offset="0.774" stop-color="#1efa64"/><stop offset="0.916" stop-color="#1efa64"/><stop offset="0.961" stop-color="#08c0e4"/><stop offset="1" stop-color="#1e6cff"/></linearGradient>
<linearGradient id="g63" gradientUnits="userSpaceOnUse" x1="122.8" y1="261.0" x2="114.4" y2="277.1"><stop offset="0" stop-color="#1e6cff"/><stop offset="0.31" stop-color="#1e6cff"/><stop offset="0.727" stop-color="#df1de3"/><stop offset="0.824" stop-color="#ff10de"/><stop offset="0.962" stop-color="#ff19b6"/><stop offset="1" stop-color="#ff3c14"/></linearGradient>
<linearGradient id="g64" gradientUnits="userSpaceOnUse" x1="103.6" y1="271.5" x2="100.6" y2="275.7"><stop offset="0" stop-color="#ff4016"/><stop offset="0.3" stop-color="#f63610"/><stop offset="0.58" stop-color="#c82609"/><stop offset="0.82" stop-color="#921a04"/><stop offset="1" stop-color="#681202"/></linearGradient>
<linearGradient id="g65" gradientUnits="userSpaceOnUse" x1="279.1" y1="180.0" x2="277.6" y2="188.2"><stop offset="0" stop-color="#ff3c14"/><stop offset="0.143" stop-color="#ff3c14"/><stop offset="0.202" stop-color="#ff10de"/><stop offset="0.215" stop-color="#c926e6"/><stop offset="0.561" stop-color="#c926e6"/><stop offset="1" stop-color="#1e6cff"/></linearGradient>
<linearGradient id="g66" gradientUnits="userSpaceOnUse" x1="267.5" y1="186.4" x2="232.6" y2="296.6"><stop offset="0" stop-color="#1e6cff"/><stop offset="0.075" stop-color="#1e6cff"/><stop offset="0.124" stop-color="#08c0e4"/><stop offset="0.18" stop-color="#1efa64"/><stop offset="0.217" stop-color="#1efa64"/><stop offset="0.391" stop-color="#1efa64"/><stop offset="0.67" stop-color="#1efa64"/><stop offset="0.768" stop-color="#1efa64"/><stop offset="0.918" stop-color="#1efa64"/><stop offset="0.962" stop-color="#08c0e4"/><stop offset="1" stop-color="#1e6cff"/></linearGradient>
<linearGradient id="g67" gradientUnits="userSpaceOnUse" x1="127.7" y1="263.3" x2="119.6" y2="279.6"><stop offset="0" stop-color="#1e6cff"/><stop offset="0.318" stop-color="#1e6cff"/><stop offset="0.722" stop-color="#df1de3"/><stop offset="0.821" stop-color="#ff10de"/><stop offset="0.962" stop-color="#ff19b6"/><stop offset="1" stop-color="#ff3c14"/></linearGradient>
<linearGradient id="g68" gradientUnits="userSpaceOnUse" x1="108.2" y1="274.0" x2="104.9" y2="278.7"><stop offset="0" stop-color="#ff4016"/><stop offset="0.3" stop-color="#f63610"/><stop offset="0.58" stop-color="#c82609"/><stop offset="0.82" stop-color="#921a04"/><stop offset="1" stop-color="#681202"/></linearGradient>
<linearGradient id="g69" gradientUnits="userSpaceOnUse" x1="286.4" y1="181.0" x2="284.7" y2="189.8"><stop offset="0" stop-color="#ff3c14"/><stop offset="0.153" stop-color="#ff3c14"/><stop offset="0.211" stop-color="#ff10de"/><stop offset="0.223" stop-color="#cf23e5"/><stop offset="0.583" stop-color="#c926e6"/><stop offset="1" stop-color="#1e6cff"/></linearGradient>
<linearGradient id="g70" gradientUnits="userSpaceOnUse" x1="274.0" y1="187.8" x2="238.2" y2="299.4"><stop offset="0" stop-color="#1e6cff"/><stop offset="0.079" stop-color="#1e6cff"/><stop offset="0.127" stop-color="#08c0e4"/><stop offset="0.182" stop-color="#1efa64"/><stop offset="0.217" stop-color="#1efa64"/><stop offset="0.391" stop-color="#1efa64"/><stop offset="0.667" stop-color="#1efa64"/><stop offset="0.762" stop-color="#1efa64"/><stop offset="0.92" stop-color="#1efa64"/><stop offset="0.963" stop-color="#08c0e4"/><stop offset="1" stop-color="#1e6cff"/></linearGradient>
<linearGradient id="g71" gradientUnits="userSpaceOnUse" x1="132.7" y1="265.5" x2="124.7" y2="282.1"><stop offset="0" stop-color="#1e6cff"/><stop offset="0.328" stop-color="#1e6cff"/><stop offset="0.719" stop-color="#df1de3"/><stop offset="0.819" stop-color="#ff10de"/><stop offset="0.962" stop-color="#ff19b6"/><stop offset="1" stop-color="#ff3c14"/></linearGradient>
<linearGradient id="g72" gradientUnits="userSpaceOnUse" x1="112.9" y1="276.4" x2="109.4" y2="281.7"><stop offset="0" stop-color="#ff4016"/><stop offset="0.3" stop-color="#f63610"/><stop offset="0.58" stop-color="#c82609"/><stop offset="0.82" stop-color="#921a04"/><stop offset="1" stop-color="#681202"/></linearGradient>
<linearGradient id="g73" gradientUnits="userSpaceOnUse" x1="293.6" y1="182.0" x2="291.8" y2="191.4"><stop offset="0" stop-color="#ff3c14"/><stop offset="0.157" stop-color="#ff3c14"/><stop offset="0.216" stop-color="#ff10de"/><stop offset="0.225" stop-color="#db1fe3"/><stop offset="0.598" stop-color="#cb25e6"/><stop offset="1" stop-color="#1e6cff"/></linearGradient>
<linearGradient id="g74" gradientUnits="userSpaceOnUse" x1="280.5" y1="189.2" x2="244.6" y2="301.9"><stop offset="0" stop-color="#1e6cff"/><stop offset="0.084" stop-color="#1e6cff"/><stop offset="0.131" stop-color="#08c0e4"/><stop offset="0.185" stop-color="#1efa64"/><stop offset="0.217" stop-color="#1efa64"/><stop offset="0.392" stop-color="#1efa64"/><stop offset="0.664" stop-color="#1efa64"/><stop offset="0.757" stop-color="#1efa64"/><stop offset="0.923" stop-color="#1efa64"/><stop offset="0.964" stop-color="#08c0e4"/><stop offset="1" stop-color="#1e6cff"/></linearGradient>
<linearGradient id="g75" gradientUnits="userSpaceOnUse" x1="137.7" y1="267.8" x2="129.6" y2="284.6"><stop offset="0" stop-color="#1e6cff"/><stop offset="0.339" stop-color="#1e6cff"/><stop offset="0.717" stop-color="#df1de3"/><stop offset="0.818" stop-color="#ff10de"/><stop offset="0.963" stop-color="#ff19b6"/><stop offset="1" stop-color="#ff3c14"/></linearGradient>
<linearGradient id="g76" gradientUnits="userSpaceOnUse" x1="117.6" y1="278.8" x2="113.8" y2="284.6"><stop offset="0" stop-color="#ff4016"/><stop offset="0.3" stop-color="#f63610"/><stop offset="0.58" stop-color="#c82609"/><stop offset="0.82" stop-color="#921a04"/><stop offset="1" stop-color="#681202"/></linearGradient>
<linearGradient id="g77" gradientUnits="userSpaceOnUse" x1="300.8" y1="183.1" x2="298.8" y2="193.0"><stop offset="0" stop-color="#ff3c14"/><stop offset="0.157" stop-color="#ff3c14"/><stop offset="0.218" stop-color="#ff10de"/><stop offset="0.226" stop-color="#e51be2"/><stop offset="0.611" stop-color="#ce24e5"/><stop offset="1" stop-color="#1e6cff"/></linearGradient>
<linearGradient id="g78" gradientUnits="userSpaceOnUse" x1="287.0" y1="190.7" x2="250.9" y2="304.3"><stop offset="0" stop-color="#1e6cff"/><stop offset="0.088" stop-color="#1e6cff"/><stop offset="0.135" stop-color="#08c0e4"/><stop offset="0.19" stop-color="#1efa64"/><stop offset="0.22" stop-color="#1efa64"/><stop offset="0.393" stop-color="#1efa64"/><stop offset="0.661" stop-color="#1efa64"/><stop offset="0.754" stop-color="#1efa64"/><stop offset="0.925" stop-color="#1efa64"/><stop offset="0.965" stop-color="#08c0e4"/><stop offset="1" stop-color="#1e6cff"/></linearGradient>
<linearGradient id="g79" gradientUnits="userSpaceOnUse" x1="142.7" y1="270.0" x2="134.4" y2="287.2"><stop offset="0" stop-color="#1e6cff"/><stop offset="0.348" stop-color="#1e6cff"/><stop offset="0.713" stop-color="#df1de3"/><stop offset="0.816" stop-color="#ff10de"/><stop offset="0.964" stop-color="#ff19b6"/><stop offset="1" stop-color="#ff3c14"/></linearGradient>
<linearGradient id="g80" gradientUnits="userSpaceOnUse" x1="122.2" y1="281.3" x2="118.2" y2="287.4"><stop offset="0" stop-color="#ff4016"/><stop offset="0.3" stop-color="#f63610"/><stop offset="0.58" stop-color="#c82609"/><stop offset="0.82" stop-color="#921a04"/><stop offset="1" stop-color="#681202"/></linearGradient>
<linearGradient id="g81" gradientUnits="userSpaceOnUse" x1="307.9" y1="184.1" x2="305.8" y2="194.6"><stop offset="0" stop-color="#ff3c14"/><stop offset="0.156" stop-color="#ff3c14"/><stop offset="0.219" stop-color="#ff10de"/><stop offset="0.224" stop-color="#ee17e1"/><stop offset="0.622" stop-color="#d023e5"/><stop offset="1" stop-color="#1e6cff"/></linearGradient>
<linearGradient id="g82" gradientUnits="userSpaceOnUse" x1="293.4" y1="192.1" x2="257.1" y2="306.8"><stop offset="0" stop-color="#1e6cff"/><stop offset="0.089" stop-color="#1e6cff"/><stop offset="0.14" stop-color="#08c0e4"/><stop offset="0.198" stop-color="#1efa64"/><stop offset="0.223" stop-color="#1efa64"/><stop offset="0.394" stop-color="#1efa64"/><stop offset="0.659" stop-color="#1efa64"/><stop offset="0.751" stop-color="#1efa64"/><stop offset="0.928" stop-color="#1efa64"/><stop offset="0.966" stop-color="#08c0e4"/><stop offset="1" stop-color="#1e6cff"/></linearGradient>
<linearGradient id="g83" gradientUnits="userSpaceOnUse" x1="147.8" y1="272.2" x2="139.0" y2="289.9"><stop offset="0" stop-color="#1e6cff"/><stop offset="0.356" stop-color="#1e6cff"/><stop offset="0.704" stop-color="#df1de3"/><stop offset="0.812" stop-color="#ff10de"/><stop offset="0.965" stop-color="#ff19b6"/><stop offset="1" stop-color="#ff3c14"/></linearGradient>
<linearGradient id="g84" gradientUnits="userSpaceOnUse" x1="126.8" y1="283.8" x2="122.5" y2="290.2"><stop offset="0" stop-color="#ff4016"/><stop offset="0.3" stop-color="#f63610"/><stop offset="0.58" stop-color="#c82609"/><stop offset="0.82" stop-color="#921a04"/><stop offset="1" stop-color="#681202"/></linearGradient>
<linearGradient id="g85" gradientUnits="userSpaceOnUse" x1="315.0" y1="185.3" x2="312.8" y2="196.2"><stop offset="0" stop-color="#ff3c14"/><stop offset="0.153" stop-color="#ff3c14"/><stop offset="0.218" stop-color="#ff10de"/><stop offset="0.22" stop-color="#f713df"/><stop offset="0.631" stop-color="#d223e5"/><stop offset="1" stop-color="#1e6cff"/></linearGradient>
<linearGradient id="g86" gradientUnits="userSpaceOnUse" x1="299.9" y1="193.6" x2="263.1" y2="309.4"><stop offset="0" stop-color="#1e6cff"/><stop offset="0.089" stop-color="#1e6cff"/><stop offset="0.143" stop-color="#08c0e4"/><stop offset="0.205" stop-color="#1efa64"/><stop offset="0.227" stop-color="#1efa64"/><stop offset="0.396" stop-color="#1efa64"/><stop offset="0.657" stop-color="#1efa64"/><stop offset="0.75" stop-color="#1efa64"/><stop offset="0.93" stop-color="#1efa64"/><stop offset="0.967" stop-color="#08c0e4"/><stop offset="1" stop-color="#1e6cff"/></linearGradient>
<linearGradient id="g87" gradientUnits="userSpaceOnUse" x1="152.9" y1="274.4" x2="143.6" y2="292.7"><stop offset="0" stop-color="#1e6cff"/><stop offset="0.361" stop-color="#1e6cff"/><stop offset="0.691" stop-color="#df1de3"/><stop offset="0.804" stop-color="#ff10de"/><stop offset="0.965" stop-color="#ff19b6"/><stop offset="1" stop-color="#ff3c14"/></linearGradient>
<linearGradient id="g88" gradientUnits="userSpaceOnUse" x1="131.2" y1="286.4" x2="126.7" y2="293.0"><stop offset="0" stop-color="#ff4016"/><stop offset="0.3" stop-color="#f63610"/><stop offset="0.58" stop-color="#c82609"/><stop offset="0.82" stop-color="#921a04"/><stop offset="1" stop-color="#681202"/></linearGradient>
<linearGradient id="g89" gradientUnits="userSpaceOnUse" x1="322.0" y1="186.4" x2="319.6" y2="197.8"><stop offset="0" stop-color="#ff3c14"/><stop offset="0.147" stop-color="#ff3c14"/><stop offset="0.215" stop-color="#ff10de"/><stop offset="0.218" stop-color="#ff10de"/><stop offset="0.639" stop-color="#d422e4"/><stop offset="1" stop-color="#1e6cff"/></linearGradient>
<linearGradient id="g90" gradientUnits="userSpaceOnUse" x1="306.3" y1="195.0" x2="269.0" y2="312.0"><stop offset="0" stop-color="#1e6cff"/><stop offset="0.089" stop-color="#1e6cff"/><stop offset="0.144" stop-color="#08c0e4"/><stop offset="0.207" stop-color="#1efa64"/><stop offset="0.232" stop-color="#1efa64"/><stop offset="0.398" stop-color="#1efa64"/><stop offset="0.655" stop-color="#1efa64"/><stop offset="0.751" stop-color="#1efa64"/><stop offset="0.933" stop-color="#1efa64"/><stop offset="0.969" stop-color="#08c0e4"/><stop offset="1" stop-color="#1e6cff"/></linearGradient>
<linearGradient id="g91" gradientUnits="userSpaceOnUse" x1="158.0" y1="276.6" x2="148.3" y2="295.5"><stop offset="0" stop-color="#1e6cff"/><stop offset="0.365" stop-color="#1e6cff"/><stop offset="0.677" stop-color="#df1de3"/><stop offset="0.796" stop-color="#ff10de"/><stop offset="0.965" stop-color="#ff19b6"/><stop offset="1" stop-color="#ff3c14"/></linearGradient>
<linearGradient id="g92" gradientUnits="userSpaceOnUse" x1="135.5" y1="289.0" x2="130.8" y2="295.9"><stop offset="0" stop-color="#ff4016"/><stop offset="0.3" stop-color="#f63610"/><stop offset="0.58" stop-color="#c82609"/><stop offset="0.82" stop-color="#921a04"/><stop offset="1" stop-color="#681202"/></linearGradient>
<linearGradient id="g93" gradientUnits="userSpaceOnUse" x1="328.9" y1="187.6" x2="326.4" y2="199.4"><stop offset="0" stop-color="#ff3c14"/><stop offset="0.14" stop-color="#ff3c14"/><stop offset="0.208" stop-color="#ff12d6"/><stop offset="0.284" stop-color="#ff10de"/><stop offset="0.645" stop-color="#d521e4"/><stop offset="1" stop-color="#1e6cff"/></linearGradient>
<linearGradient id="g94" gradientUnits="userSpaceOnUse" x1="312.7" y1="196.5" x2="274.9" y2="314.6"><stop offset="0" stop-color="#1e6cff"/><stop offset="0.088" stop-color="#1e6cff"/><stop offset="0.143" stop-color="#08c0e4"/><stop offset="0.207" stop-color="#1efa64"/><stop offset="0.238" stop-color="#1efa64"/><stop offset="0.401" stop-color="#1ef966"/><stop offset="0.653" stop-color="#1efa64"/><stop offset="0.753" stop-color="#1efa64"/><stop offset="0.935" stop-color="#1efa64"/><stop offset="0.97" stop-color="#08c0e4"/><stop offset="1" stop-color="#1e6cff"/></linearGradient>
<linearGradient id="g95" gradientUnits="userSpaceOnUse" x1="163.1" y1="278.8" x2="153.1" y2="298.3"><stop offset="0" stop-color="#1e6cff"/><stop offset="0.368" stop-color="#1e6cff"/><stop offset="0.663" stop-color="#df1de3"/><stop offset="0.787" stop-color="#ff10de"/><stop offset="0.964" stop-color="#ff19b6"/><stop offset="1" stop-color="#ff3c14"/></linearGradient>
<linearGradient id="g96" gradientUnits="userSpaceOnUse" x1="139.9" y1="291.6" x2="135.0" y2="298.7"><stop offset="0" stop-color="#ff4016"/><stop offset="0.3" stop-color="#f63610"/><stop offset="0.58" stop-color="#c82609"/><stop offset="0.82" stop-color="#921a04"/><stop offset="1" stop-color="#681202"/></linearGradient>
<linearGradient id="g97" gradientUnits="userSpaceOnUse" x1="335.8" y1="188.8" x2="333.1" y2="201.0"><stop offset="0" stop-color="#ff3c14"/><stop offset="0.132" stop-color="#ff3c14"/><stop offset="0.201" stop-color="#ff13cf"/><stop offset="0.335" stop-color="#ff10de"/><stop offset="0.651" stop-color="#d720e4"/><stop offset="1" stop-color="#1e6cff"/></linearGradient>
<linearGradient id="g98" gradientUnits="userSpaceOnUse" x1="319.1" y1="198.0" x2="280.6" y2="317.3"><stop offset="0" stop-color="#1e6cff"/><stop offset="0.087" stop-color="#1e6cff"/><stop offset="0.142" stop-color="#08c0e4"/><stop offset="0.205" stop-color="#1efa64"/><stop offset="0.244" stop-color="#1efa64"/><stop offset="0.404" stop-color="#1df76b"/><stop offset="0.651" stop-color="#1efa64"/><stop offset="0.756" stop-color="#1efa64"/><stop offset="0.937" stop-color="#1efa64"/><stop offset="0.971" stop-color="#08c0e4"/><stop offset="1" stop-color="#1e6cff"/></linearGradient>
<linearGradient id="g99" gradientUnits="userSpaceOnUse" x1="168.1" y1="281.0" x2="157.9" y2="301.2"><stop offset="0" stop-color="#1e6cff"/><stop offset="0.371" stop-color="#1e6cff"/><stop offset="0.649" stop-color="#df1de3"/><stop offset="0.778" stop-color="#ff10de"/><stop offset="0.962" stop-color="#ff19b6"/><stop offset="1" stop-color="#ff3c14"/></linearGradient>
<linearGradient id="g100" gradientUnits="userSpaceOnUse" x1="144.2" y1="294.2" x2="139.1" y2="301.6"><stop offset="0" stop-color="#ff4016"/><stop offset="0.3" stop-color="#f63610"/><stop offset="0.58" stop-color="#c82609"/><stop offset="0.82" stop-color="#921a04"/><stop offset="1" stop-color="#681202"/></linearGradient>
<linearGradient id="g101" gradientUnits="userSpaceOnUse" x1="342.6" y1="190.1" x2="339.8" y2="202.7"><stop offset="0" stop-color="#ff3c14"/><stop offset="0.124" stop-color="#ff3c14"/><stop offset="0.193" stop-color="#ff15c7"/><stop offset="0.378" stop-color="#ff10de"/><stop offset="0.656" stop-color="#d920e4"/><stop offset="1" stop-color="#1e6cff"/></linearGradient>
<linearGradient id="g102" gradientUnits="userSpaceOnUse" x1="325.5" y1="199.5" x2="286.2" y2="320.1"><stop offset="0" stop-color="#1e6cff"/><stop offset="0.086" stop-color="#1e6cff"/><stop offset="0.139" stop-color="#08c0e4"/><stop offset="0.201" stop-color="#1efa64"/><stop offset="0.251" stop-color="#1efa64"/><stop offset="0.408" stop-color="#1cf56f"/><stop offset="0.649" stop-color="#1efa64"/><stop offset="0.761" stop-color="#1efa64"/><stop offset="0.94" stop-color="#1efa64"/><stop offset="0.972" stop-color="#08c0e4"/><stop offset="1" stop-color="#1e6cff"/></linearGradient>
<linearGradient id="g103" gradientUnits="userSpaceOnUse" x1="173.2" y1="283.2" x2="163.1" y2="303.8"><stop offset="0" stop-color="#1e6cff"/><stop offset="0.375" stop-color="#1e6cff"/><stop offset="0.639" stop-color="#df1de3"/><stop offset="0.772" stop-color="#ff10de"/><stop offset="0.962" stop-color="#ff19b6"/><stop offset="1" stop-color="#ff3c14"/></linearGradient>
<linearGradient id="g104" gradientUnits="userSpaceOnUse" x1="148.6" y1="296.8" x2="143.3" y2="304.5"><stop offset="0" stop-color="#ff4016"/><stop offset="0.3" stop-color="#f63610"/><stop offset="0.58" stop-color="#c82609"/><stop offset="0.82" stop-color="#921a04"/><stop offset="1" stop-color="#681202"/></linearGradient>
<linearGradient id="g105" gradientUnits="userSpaceOnUse" x1="349.3" y1="191.4" x2="346.4" y2="204.3"><stop offset="0" stop-color="#ff3c14"/><stop offset="0.118" stop-color="#ff3c14"/><stop offset="0.185" stop-color="#ff17c0"/><stop offset="0.414" stop-color="#ff10de"/><stop offset="0.661" stop-color="#db1fe3"/><stop offset="1" stop-color="#1e6cff"/></linearGradient>
<linearGradient id="g106" gradientUnits="userSpaceOnUse" x1="331.8" y1="201.0" x2="291.6" y2="322.8"><stop offset="0" stop-color="#1e6cff"/><stop offset="0.084" stop-color="#1e6cff"/><stop offset="0.137" stop-color="#08c0e4"/><stop offset="0.197" stop-color="#1efa64"/><stop offset="0.257" stop-color="#1efa64"/><stop offset="0.412" stop-color="#1bf374"/><stop offset="0.647" stop-color="#1efa64"/><stop offset="0.766" stop-color="#1efa64"/><stop offset="0.942" stop-color="#1efa64"/><stop offset="0.973" stop-color="#08c0e4"/><stop offset="1" stop-color="#1e6cff"/></linearGradient>
<linearGradient id="g107" gradientUnits="userSpaceOnUse" x1="178.3" y1="285.4" x2="171.2" y2="305.0"><stop offset="0" stop-color="#1e6cff"/><stop offset="0.393" stop-color="#1e6cff"/><stop offset="0.654" stop-color="#df1de3"/><stop offset="0.797" stop-color="#ff10de"/><stop offset="1" stop-color="#ff19b6"/><stop offset="1" stop-color="#ff3c14"/></linearGradient>
<linearGradient id="g108" gradientUnits="userSpaceOnUse" x1="154.0" y1="298.8" x2="148.0" y2="307.6"><stop offset="0" stop-color="#ff4016"/><stop offset="0.3" stop-color="#f63610"/><stop offset="0.58" stop-color="#c82609"/><stop offset="0.82" stop-color="#921a04"/><stop offset="1" stop-color="#681202"/></linearGradient>
<linearGradient id="g109" gradientUnits="userSpaceOnUse" x1="356.1" y1="192.7" x2="353.0" y2="206.0"><stop offset="0" stop-color="#ff3c14"/><stop offset="0.112" stop-color="#ff3c14"/><stop offset="0.179" stop-color="#ff18b8"/><stop offset="0.447" stop-color="#ff10de"/><stop offset="0.666" stop-color="#dc1ee3"/><stop offset="1" stop-color="#1e6cff"/></linearGradient>
<linearGradient id="g110" gradientUnits="userSpaceOnUse" x1="338.1" y1="202.6" x2="296.9" y2="325.6"><stop offset="0" stop-color="#1e6cff"/><stop offset="0.083" stop-color="#1e6cff"/><stop offset="0.134" stop-color="#08c0e4"/><stop offset="0.192" stop-color="#1efa64"/><stop offset="0.264" stop-color="#1efa64"/><stop offset="0.417" stop-color="#1bf178"/><stop offset="0.645" stop-color="#1efa64"/><stop offset="0.771" stop-color="#1efa64"/><stop offset="0.944" stop-color="#1efa64"/><stop offset="0.974" stop-color="#08c0e4"/><stop offset="1" stop-color="#1e6cff"/></linearGradient>
<linearGradient id="g111" gradientUnits="userSpaceOnUse" x1="183.4" y1="287.7" x2="173.1" y2="308.5"><stop offset="0" stop-color="#1e6cff"/><stop offset="0.396" stop-color="#1e6cff"/><stop offset="0.645" stop-color="#df1de3"/><stop offset="0.791" stop-color="#ff10de"/><stop offset="1" stop-color="#ff19b6"/><stop offset="1" stop-color="#ff3c14"/></linearGradient>
<linearGradient id="g112" gradientUnits="userSpaceOnUse" x1="158.5" y1="301.3" x2="152.3" y2="310.5"><stop offset="0" stop-color="#ff4016"/><stop offset="0.3" stop-color="#f63610"/><stop offset="0.58" stop-color="#c82609"/><stop offset="0.82" stop-color="#921a04"/><stop offset="1" stop-color="#681202"/></linearGradient>
<linearGradient id="g113" gradientUnits="userSpaceOnUse" x1="362.7" y1="194.0" x2="359.5" y2="207.7"><stop offset="0" stop-color="#ff3c14"/><stop offset="0.108" stop-color="#ff3c14"/><stop offset="0.174" stop-color="#ff19b6"/><stop offset="0.461" stop-color="#ff10de"/><stop offset="0.671" stop-color="#de1de3"/><stop offset="1" stop-color="#1e6cff"/></linearGradient>
<linearGradient id="g114" gradientUnits="userSpaceOnUse" x1="344.3" y1="204.1" x2="301.9" y2="328.6"><stop offset="0" stop-color="#1e6cff"/><stop offset="0.081" stop-color="#1e6cff"/><stop offset="0.131" stop-color="#08c0e4"/><stop offset="0.187" stop-color="#1efa64"/><stop offset="0.27" stop-color="#1efa64"/><stop offset="0.422" stop-color="#1aef7d"/><stop offset="0.643" stop-color="#1efa64"/><stop offset="0.776" stop-color="#1efa64"/><stop offset="0.945" stop-color="#1efa64"/><stop offset="0.974" stop-color="#08c0e4"/><stop offset="1" stop-color="#1e6cff"/></linearGradient>
<linearGradient id="g115" gradientUnits="userSpaceOnUse" x1="188.4" y1="289.9" x2="177.4" y2="311.3"><stop offset="0" stop-color="#1e6cff"/><stop offset="0.399" stop-color="#1e6cff"/><stop offset="0.635" stop-color="#df1de3"/><stop offset="0.785" stop-color="#ff10de"/><stop offset="1" stop-color="#ff19b6"/><stop offset="1" stop-color="#ff3c14"/></linearGradient>
<linearGradient id="g116" gradientUnits="userSpaceOnUse" x1="162.9" y1="303.9" x2="156.6" y2="313.4"><stop offset="0" stop-color="#ff4016"/><stop offset="0.3" stop-color="#f63610"/><stop offset="0.58" stop-color="#c82609"/><stop offset="0.82" stop-color="#921a04"/><stop offset="1" stop-color="#681202"/></linearGradient>
<linearGradient id="g117" gradientUnits="userSpaceOnUse" x1="369.4" y1="195.3" x2="365.9" y2="209.5"><stop offset="0" stop-color="#ff3c14"/><stop offset="0.104" stop-color="#ff3c14"/><stop offset="0.17" stop-color="#ff19b6"/><stop offset="0.467" stop-color="#ff10de"/><stop offset="0.676" stop-color="#df1de3"/><stop offset="1" stop-color="#1e6cff"/></linearGradient>
<linearGradient id="g118" gradientUnits="userSpaceOnUse" x1="350.5" y1="205.7" x2="306.7" y2="331.5"><stop offset="0" stop-color="#1e6cff"/><stop offset="0.08" stop-color="#1e6cff"/><stop offset="0.127" stop-color="#08c0e4"/><stop offset="0.182" stop-color="#1efa64"/><stop offset="0.276" stop-color="#1efa64"/><stop offset="0.427" stop-color="#19ed81"/><stop offset="0.64" stop-color="#1efa64"/><stop offset="0.78" stop-color="#1efa64"/><stop offset="0.947" stop-color="#1efa64"/><stop offset="0.975" stop-color="#08c0e4"/><stop offset="1" stop-color="#1e6cff"/></linearGradient>
<linearGradient id="g119" gradientUnits="userSpaceOnUse" x1="193.4" y1="292.1" x2="182.0" y2="314.0"><stop offset="0" stop-color="#1e6cff"/><stop offset="0.401" stop-color="#1e6cff"/><stop offset="0.627" stop-color="#df1de3"/><stop offset="0.78" stop-color="#ff10de"/><stop offset="1" stop-color="#ff19b6"/><stop offset="1" stop-color="#ff3c14"/></linearGradient>
<linearGradient id="g120" gradientUnits="userSpaceOnUse" x1="167.4" y1="306.4" x2="160.9" y2="316.2"><stop offset="0" stop-color="#ff4016"/><stop offset="0.3" stop-color="#f63610"/><stop offset="0.58" stop-color="#c82609"/><stop offset="0.82" stop-color="#921a04"/><stop offset="1" stop-color="#681202"/></linearGradient>
<linearGradient id="g121" gradientUnits="userSpaceOnUse" x1="376.0" y1="196.7" x2="372.3" y2="211.3"><stop offset="0" stop-color="#ff3c14"/><stop offset="0.101" stop-color="#ff3c14"/><stop offset="0.164" stop-color="#ff19b6"/><stop offset="0.468" stop-color="#ff10de"/><stop offset="0.681" stop-color="#df1de3"/><stop offset="1" stop-color="#1e6cff"/></linearGradient>
<linearGradient id="g122" gradientUnits="userSpaceOnUse" x1="356.6" y1="207.4" x2="311.2" y2="334.6"><stop offset="0" stop-color="#1e6cff"/><stop offset="0.078" stop-color="#1e6cff"/><stop offset="0.124" stop-color="#08c0e4"/><stop offset="0.177" stop-color="#1efa64"/><stop offset="0.281" stop-color="#1efa64"/><stop offset="0.432" stop-color="#18eb86"/><stop offset="0.638" stop-color="#1df868"/><stop offset="0.784" stop-color="#1efa64"/><stop offset="0.948" stop-color="#1efa64"/><stop offset="0.976" stop-color="#08c0e4"/><stop offset="1" stop-color="#1e6cff"/></linearGradient>
<linearGradient id="g123" gradientUnits="userSpaceOnUse" x1="198.4" y1="294.4" x2="186.5" y2="316.8"><stop offset="0" stop-color="#1e6cff"/><stop offset="0.401" stop-color="#1e6cff"/><stop offset="0.618" stop-color="#df1de3"/><stop offset="0.775" stop-color="#ff10de"/><stop offset="1" stop-color="#ff19b6"/><stop offset="1" stop-color="#ff3c14"/></linearGradient>
<linearGradient id="g124" gradientUnits="userSpaceOnUse" x1="171.9" y1="309.0" x2="165.3" y2="319.1"><stop offset="0" stop-color="#ff4016"/><stop offset="0.3" stop-color="#f63610"/><stop offset="0.58" stop-color="#c82609"/><stop offset="0.82" stop-color="#921a04"/><stop offset="1" stop-color="#681202"/></linearGradient>
<linearGradient id="g125" gradientUnits="userSpaceOnUse" x1="382.6" y1="198.1" x2="378.7" y2="213.2"><stop offset="0" stop-color="#ff3c14"/><stop offset="0.097" stop-color="#ff3c14"/><stop offset="0.159" stop-color="#ff19b6"/><stop offset="0.468" stop-color="#ff10de"/><stop offset="0.685" stop-color="#df1de3"/><stop offset="1" stop-color="#1e6cff"/></linearGradient>
<linearGradient id="g126" gradientUnits="userSpaceOnUse" x1="362.6" y1="209.1" x2="315.5" y2="337.8"><stop offset="0" stop-color="#1e6cff"/><stop offset="0.076" stop-color="#1e6cff"/><stop offset="0.121" stop-color="#08c0e4"/><stop offset="0.171" stop-color="#1efa64"/><stop offset="0.286" stop-color="#1efa64"/><stop offset="0.436" stop-color="#17e98a"/><stop offset="0.636" stop-color="#1df66d"/><stop offset="0.786" stop-color="#1efa64"/><stop offset="0.948" stop-color="#1efa64"/><stop offset="0.976" stop-color="#08c0e4"/><stop offset="1" stop-color="#1e6cff"/></linearGradient>
<linearGradient id="g127" gradientUnits="userSpaceOnUse" x1="203.3" y1="296.7" x2="191.0" y2="319.5"><stop offset="0" stop-color="#1e6cff"/><stop offset="0.401" stop-color="#1e6cff"/><stop offset="0.609" stop-color="#df1de3"/><stop offset="0.77" stop-color="#ff10de"/><stop offset="1" stop-color="#ff19b6"/><stop offset="1" stop-color="#ff3c14"/></linearGradient>
<linearGradient id="g128" gradientUnits="userSpaceOnUse" x1="176.3" y1="311.5" x2="169.6" y2="321.9"><stop offset="0" stop-color="#ff4016"/><stop offset="0.3" stop-color="#f63610"/><stop offset="0.58" stop-color="#c82609"/><stop offset="0.82" stop-color="#921a04"/><stop offset="1" stop-color="#681202"/></linearGradient>
<linearGradient id="g129" gradientUnits="userSpaceOnUse" x1="389.1" y1="199.5" x2="385.0" y2="215.1"><stop offset="0" stop-color="#ff3c14"/><stop offset="0.094" stop-color="#ff3c14"/><stop offset="0.155" stop-color="#ff19b6"/><stop offset="0.469" stop-color="#ff10de"/><stop offset="0.688" stop-color="#df1de3"/><stop offset="1" stop-color="#1e6cff"/></linearGradient>
<linearGradient id="g130" gradientUnits="userSpaceOnUse" x1="368.6" y1="210.8" x2="319.0" y2="341.2"><stop offset="0" stop-color="#1e6cff"/><stop offset="0.075" stop-color="#1e6cff"/><stop offset="0.118" stop-color="#08c0e4"/><stop offset="0.167" stop-color="#1efa64"/><stop offset="0.29" stop-color="#1efa64"/><stop offset="0.441" stop-color="#17e78f"/><stop offset="0.634" stop-color="#1cf471"/><stop offset="0.788" stop-color="#1efa64"/><stop offset="0.947" stop-color="#1efa64"/><stop offset="0.975" stop-color="#08c0e4"/><stop offset="1" stop-color="#1e6cff"/></linearGradient>
<linearGradient id="g131" gradientUnits="userSpaceOnUse" x1="208.2" y1="299.0" x2="195.3" y2="322.1"><stop offset="0" stop-color="#1e6cff"/><stop offset="0.398" stop-color="#1e6cff"/><stop offset="0.6" stop-color="#df1de3"/><stop offset="0.764" stop-color="#ff10de"/><stop offset="1" stop-color="#ff19b6"/><stop offset="1" stop-color="#ff3c14"/></linearGradient>
<linearGradient id="g132" gradientUnits="userSpaceOnUse" x1="180.8" y1="314.1" x2="174.0" y2="324.7"><stop offset="0" stop-color="#ff4016"/><stop offset="0.3" stop-color="#f63610"/><stop offset="0.58" stop-color="#c82609"/><stop offset="0.82" stop-color="#921a04"/><stop offset="1" stop-color="#681202"/></linearGradient>
<linearGradient id="g133" gradientUnits="userSpaceOnUse" x1="395.6" y1="200.9" x2="391.3" y2="217.0"><stop offset="0" stop-color="#ff3c14"/><stop offset="0.091" stop-color="#ff3c14"/><stop offset="0.15" stop-color="#ff19b6"/><stop offset="0.469" stop-color="#ff10de"/><stop offset="0.692" stop-color="#df1de3"/><stop offset="1" stop-color="#1e6cff"/></linearGradient>
<linearGradient id="g134" gradientUnits="userSpaceOnUse" x1="374.6" y1="212.5" x2="321.7" y2="344.9"><stop offset="0" stop-color="#1e6cff"/><stop offset="0.074" stop-color="#1e6cff"/><stop offset="0.115" stop-color="#08c0e4"/><stop offset="0.162" stop-color="#1efa64"/><stop offset="0.293" stop-color="#1efa64"/><stop offset="0.444" stop-color="#16e593"/><stop offset="0.631" stop-color="#1bf276"/><stop offset="0.788" stop-color="#1efa64"/><stop offset="0.945" stop-color="#1efa64"/><stop offset="0.974" stop-color="#08c0e4"/><stop offset="1" stop-color="#1e6cff"/></linearGradient>
<linearGradient id="g135" gradientUnits="userSpaceOnUse" x1="212.9" y1="301.4" x2="199.3" y2="324.9"><stop offset="0" stop-color="#1e6cff"/><stop offset="0.39" stop-color="#1e6cff"/><stop offset="0.585" stop-color="#df1de3"/><stop offset="0.754" stop-color="#ff10de"/><stop offset="0.994" stop-color="#ff19b6"/><stop offset="1" stop-color="#ff3c14"/></linearGradient>
<linearGradient id="g136" gradientUnits="userSpaceOnUse" x1="185.1" y1="316.7" x2="178.2" y2="327.4"><stop offset="0" stop-color="#ff4016"/><stop offset="0.3" stop-color="#f63610"/><stop offset="0.58" stop-color="#c82609"/><stop offset="0.82" stop-color="#921a04"/><stop offset="1" stop-color="#681202"/></linearGradient>
<linearGradient id="g137" gradientUnits="userSpaceOnUse" x1="404.6" y1="203.0" x2="400.1" y2="219.6"><stop offset="0" stop-color="#ff3c14"/><stop offset="0.087" stop-color="#ff3c14"/><stop offset="0.145" stop-color="#ff19b6"/><stop offset="0.468" stop-color="#ff10de"/><stop offset="0.695" stop-color="#df1de3"/><stop offset="1" stop-color="#1e6cff"/></linearGradient>
<linearGradient id="g138" gradientUnits="userSpaceOnUse" x1="382.9" y1="214.9" x2="323.3" y2="350.8"><stop offset="0" stop-color="#1e6cff"/><stop offset="0.072" stop-color="#1e6cff"/><stop offset="0.111" stop-color="#08c0e4"/><stop offset="0.156" stop-color="#1efa64"/><stop offset="0.297" stop-color="#1efa64"/><stop offset="0.448" stop-color="#15e299"/><stop offset="0.626" stop-color="#19ee7e"/><stop offset="0.787" stop-color="#1efa64"/><stop offset="0.939" stop-color="#1efa64"/><stop offset="0.972" stop-color="#08c0e4"/><stop offset="1" stop-color="#1e6cff"/></linearGradient>
<linearGradient id="g139" gradientUnits="userSpaceOnUse" x1="219.0" y1="305.0" x2="204.3" y2="328.6"><stop offset="0" stop-color="#1e6cff"/><stop offset="0.369" stop-color="#1e6cff"/><stop offset="0.561" stop-color="#df1de3"/><stop offset="0.735" stop-color="#ff10de"/><stop offset="0.984" stop-color="#ff19b6"/><stop offset="1" stop-color="#ff3c14"/></linearGradient>
<linearGradient id="g140" gradientUnits="userSpaceOnUse" x1="191.1" y1="320.4" x2="184.2" y2="331.2"><stop offset="0" stop-color="#ff4016"/><stop offset="0.3" stop-color="#f63610"/><stop offset="0.58" stop-color="#c82609"/><stop offset="0.82" stop-color="#921a04"/><stop offset="1" stop-color="#681202"/></linearGradient>
<linearGradient id="g141" gradientUnits="userSpaceOnUse" x1="416.1" y1="205.6" x2="411.2" y2="223.1"><stop offset="0" stop-color="#ff3c14"/><stop offset="0.083" stop-color="#ff3c14"/><stop offset="0.138" stop-color="#ff19b6"/><stop offset="0.468" stop-color="#ff10de"/><stop offset="0.699" stop-color="#df1de3"/><stop offset="1" stop-color="#1e6cff"/></linearGradient>
<linearGradient id="g142" gradientUnits="userSpaceOnUse" x1="393.4" y1="218.1" x2="333.6" y2="356.3"><stop offset="0" stop-color="#1e6cff"/><stop offset="0.069" stop-color="#1e6cff"/><stop offset="0.107" stop-color="#08c0e4"/><stop offset="0.15" stop-color="#1efa64"/><stop offset="0.3" stop-color="#1efa64"/><stop offset="0.452" stop-color="#13dea1"/><stop offset="0.619" stop-color="#18e989"/><stop offset="0.784" stop-color="#1efa64"/><stop offset="0.932" stop-color="#1efa64"/><stop offset="0.968" stop-color="#08c0e4"/><stop offset="1" stop-color="#1e6cff"/></linearGradient>
<linearGradient id="g143" gradientUnits="userSpaceOnUse" x1="226.5" y1="309.9" x2="212.5" y2="333.2"><stop offset="0" stop-color="#1e6cff"/><stop offset="0.33" stop-color="#1e6cff"/><stop offset="0.531" stop-color="#df1de3"/><stop offset="0.713" stop-color="#ff10de"/><stop offset="0.973" stop-color="#ff19b6"/><stop offset="1" stop-color="#ff3c14"/></linearGradient>
<linearGradient id="g144" gradientUnits="userSpaceOnUse" x1="198.9" y1="325.1" x2="192.0" y2="336.1"><stop offset="0" stop-color="#ff4016"/><stop offset="0.3" stop-color="#f63610"/><stop offset="0.58" stop-color="#c82609"/><stop offset="0.82" stop-color="#921a04"/><stop offset="1" stop-color="#681202"/></linearGradient>
<linearGradient id="g145" gradientUnits="userSpaceOnUse" x1="427.5" y1="208.4" x2="422.2" y2="226.6"><stop offset="0" stop-color="#ff3c14"/><stop offset="0.08" stop-color="#ff3c14"/><stop offset="0.132" stop-color="#ff19b6"/><stop offset="0.467" stop-color="#ff10de"/><stop offset="0.702" stop-color="#df1de3"/><stop offset="1" stop-color="#1e6cff"/></linearGradient>
<linearGradient id="g146" gradientUnits="userSpaceOnUse" x1="403.9" y1="221.4" x2="347.4" y2="360.3"><stop offset="0" stop-color="#1e6cff"/><stop offset="0.067" stop-color="#1e6cff"/><stop offset="0.103" stop-color="#08c0e4"/><stop offset="0.144" stop-color="#1efa64"/><stop offset="0.306" stop-color="#1efa64"/><stop offset="0.455" stop-color="#12dba9"/><stop offset="0.616" stop-color="#16e494"/><stop offset="0.783" stop-color="#1efa64"/><stop offset="0.929" stop-color="#1efa64"/><stop offset="0.967" stop-color="#08c0e4"/><stop offset="1" stop-color="#1e6cff"/></linearGradient>
<linearGradient id="g147" gradientUnits="userSpaceOnUse" x1="234.6" y1="314.4" x2="221.9" y2="337.9"><stop offset="0" stop-color="#1e6cff"/><stop offset="0.302" stop-color="#1e6cff"/><stop offset="0.532" stop-color="#df1de3"/><stop offset="0.711" stop-color="#ff10de"/><stop offset="0.966" stop-color="#ff19b6"/><stop offset="1" stop-color="#ff3c14"/></linearGradient>
<linearGradient id="g148" gradientUnits="userSpaceOnUse" x1="206.9" y1="329.7" x2="199.9" y2="341.0"><stop offset="0" stop-color="#ff4016"/><stop offset="0.3" stop-color="#f63610"/><stop offset="0.58" stop-color="#c82609"/><stop offset="0.82" stop-color="#921a04"/><stop offset="1" stop-color="#681202"/></linearGradient>
<linearGradient id="g149" gradientUnits="userSpaceOnUse" x1="438.7" y1="211.2" x2="433.2" y2="230.2"><stop offset="0" stop-color="#ff3c14"/><stop offset="0.077" stop-color="#ff3c14"/><stop offset="0.129" stop-color="#ff19b6"/><stop offset="0.467" stop-color="#ff10de"/><stop offset="0.704" stop-color="#df1de3"/><stop offset="1" stop-color="#1e6cff"/></linearGradient>
<linearGradient id="g150" gradientUnits="userSpaceOnUse" x1="414.3" y1="224.6" x2="358.7" y2="364.6"><stop offset="0" stop-color="#1e6cff"/><stop offset="0.065" stop-color="#1e6cff"/><stop offset="0.1" stop-color="#08c0e4"/><stop offset="0.139" stop-color="#1efa64"/><stop offset="0.312" stop-color="#1efa64"/><stop offset="0.458" stop-color="#11d7b1"/><stop offset="0.615" stop-color="#14df9f"/><stop offset="0.784" stop-color="#1efa64"/><stop offset="0.929" stop-color="#1efa64"/><stop offset="0.967" stop-color="#08c0e4"/><stop offset="1" stop-color="#1e6cff"/></linearGradient>
<linearGradient id="g151" gradientUnits="userSpaceOnUse" x1="243.2" y1="318.8" x2="231.0" y2="342.4"><stop offset="0" stop-color="#1e6cff"/><stop offset="0.29" stop-color="#1e6cff"/><stop offset="0.55" stop-color="#df1de3"/><stop offset="0.72" stop-color="#ff10de"/><stop offset="0.964" stop-color="#ff19b6"/><stop offset="1" stop-color="#ff3c14"/></linearGradient>
<linearGradient id="g152" gradientUnits="userSpaceOnUse" x1="215.1" y1="334.2" x2="208.0" y2="345.9"><stop offset="0" stop-color="#ff4016"/><stop offset="0.3" stop-color="#f63610"/><stop offset="0.58" stop-color="#c82609"/><stop offset="0.82" stop-color="#921a04"/><stop offset="1" stop-color="#681202"/></linearGradient>
<linearGradient id="g153" gradientUnits="userSpaceOnUse" x1="449.9" y1="214.1" x2="444.0" y2="233.7"><stop offset="0" stop-color="#ff3c14"/><stop offset="0.076" stop-color="#ff3c14"/><stop offset="0.125" stop-color="#ff19b6"/><stop offset="0.467" stop-color="#ff10de"/><stop offset="0.707" stop-color="#df1de3"/><stop offset="1" stop-color="#1e6cff"/></linearGradient>
<linearGradient id="g154" gradientUnits="userSpaceOnUse" x1="424.7" y1="227.9" x2="368.9" y2="369.2"><stop offset="0" stop-color="#1e6cff"/><stop offset="0.064" stop-color="#1e6cff"/><stop offset="0.097" stop-color="#08c0e4"/><stop offset="0.136" stop-color="#1efa64"/><stop offset="0.317" stop-color="#1efa64"/><stop offset="0.461" stop-color="#10d4b8"/><stop offset="0.615" stop-color="#12dba9"/><stop offset="0.785" stop-color="#1efa64"/><stop offset="0.929" stop-color="#1efa64"/><stop offset="0.967" stop-color="#08c0e4"/><stop offset="1" stop-color="#1e6cff"/></linearGradient>
<linearGradient id="g155" gradientUnits="userSpaceOnUse" x1="251.8" y1="323.0" x2="239.9" y2="346.8"><stop offset="0" stop-color="#1e6cff"/><stop offset="0.288" stop-color="#1e6cff"/><stop offset="0.556" stop-color="#df1de3"/><stop offset="0.724" stop-color="#ff10de"/><stop offset="0.964" stop-color="#ff19b6"/><stop offset="1" stop-color="#ff3c14"/></linearGradient>
<linearGradient id="g156" gradientUnits="userSpaceOnUse" x1="223.4" y1="338.6" x2="216.0" y2="350.8"><stop offset="0" stop-color="#ff4016"/><stop offset="0.3" stop-color="#f63610"/><stop offset="0.58" stop-color="#c82609"/><stop offset="0.82" stop-color="#921a04"/><stop offset="1" stop-color="#681202"/></linearGradient>
<linearGradient id="g157" gradientUnits="userSpaceOnUse" x1="461.0" y1="217.0" x2="454.8" y2="237.3"><stop offset="0" stop-color="#ff3c14"/><stop offset="0.074" stop-color="#ff3c14"/><stop offset="0.123" stop-color="#ff19b6"/><stop offset="0.468" stop-color="#ff10de"/><stop offset="0.709" stop-color="#df1de3"/><stop offset="1" stop-color="#1e6cff"/></linearGradient>
<linearGradient id="g158" gradientUnits="userSpaceOnUse" x1="435.0" y1="231.3" x2="378.7" y2="373.8"><stop offset="0" stop-color="#1e6cff"/><stop offset="0.063" stop-color="#1e6cff"/><stop offset="0.095" stop-color="#08c0e4"/><stop offset="0.133" stop-color="#1efa64"/><stop offset="0.323" stop-color="#1efa64"/><stop offset="0.463" stop-color="#0ed1bf"/><stop offset="0.615" stop-color="#11d7b2"/><stop offset="0.787" stop-color="#1efa64"/><stop offset="0.93" stop-color="#1efa64"/><stop offset="0.967" stop-color="#08c0e4"/><stop offset="1" stop-color="#1e6cff"/></linearGradient>
<linearGradient id="g159" gradientUnits="userSpaceOnUse" x1="260.6" y1="327.2" x2="248.6" y2="351.3"><stop offset="0" stop-color="#1e6cff"/><stop offset="0.289" stop-color="#1e6cff"/><stop offset="0.557" stop-color="#df1de3"/><stop offset="0.726" stop-color="#ff10de"/><stop offset="0.967" stop-color="#ff19b6"/><stop offset="1" stop-color="#ff3c14"/></linearGradient>
<linearGradient id="g160" gradientUnits="userSpaceOnUse" x1="231.9" y1="343.0" x2="224.2" y2="355.7"><stop offset="0" stop-color="#ff4016"/><stop offset="0.3" stop-color="#f63610"/><stop offset="0.58" stop-color="#c82609"/><stop offset="0.82" stop-color="#921a04"/><stop offset="1" stop-color="#681202"/></linearGradient>
<linearGradient id="g161" gradientUnits="userSpaceOnUse" x1="472.0" y1="219.9" x2="465.5" y2="240.9"><stop offset="0" stop-color="#ff3c14"/><stop offset="0.072" stop-color="#ff3c14"/><stop offset="0.12" stop-color="#ff19b6"/><stop offset="0.468" stop-color="#ff10de"/><stop offset="0.711" stop-color="#df1de3"/><stop offset="1" stop-color="#1e6cff"/></linearGradient>
<linearGradient id="g162" gradientUnits="userSpaceOnUse" x1="445.3" y1="234.6" x2="388.2" y2="378.5"><stop offset="0" stop-color="#1e6cff"/><stop offset="0.062" stop-color="#1e6cff"/><stop offset="0.094" stop-color="#08c0e4"/><stop offset="0.13" stop-color="#1efa64"/><stop offset="0.328" stop-color="#1efa64"/><stop offset="0.465" stop-color="#0dcdc7"/><stop offset="0.616" stop-color="#0fd3ba"/><stop offset="0.789" stop-color="#1efa64"/><stop offset="0.931" stop-color="#1efa64"/><stop offset="0.968" stop-color="#08c0e4"/><stop offset="1" stop-color="#1e6cff"/></linearGradient>
<linearGradient id="g163" gradientUnits="userSpaceOnUse" x1="269.3" y1="331.4" x2="257.1" y2="355.8"><stop offset="0" stop-color="#1e6cff"/><stop offset="0.291" stop-color="#1e6cff"/><stop offset="0.554" stop-color="#df1de3"/><stop offset="0.724" stop-color="#ff10de"/><stop offset="0.968" stop-color="#ff19b6"/><stop offset="1" stop-color="#ff3c14"/></linearGradient>
<linearGradient id="g164" gradientUnits="userSpaceOnUse" x1="240.3" y1="347.3" x2="232.3" y2="360.6"><stop offset="0" stop-color="#ff4016"/><stop offset="0.3" stop-color="#f63610"/><stop offset="0.58" stop-color="#c82609"/><stop offset="0.82" stop-color="#921a04"/><stop offset="1" stop-color="#681202"/></linearGradient>
<linearGradient id="g165" gradientUnits="userSpaceOnUse" x1="482.9" y1="222.9" x2="476.1" y2="244.5"><stop offset="0" stop-color="#ff3c14"/><stop offset="0.07" stop-color="#ff3c14"/><stop offset="0.117" stop-color="#ff19b6"/><stop offset="0.468" stop-color="#ff10de"/><stop offset="0.713" stop-color="#df1de3"/><stop offset="1" stop-color="#1e6cff"/></linearGradient>
<linearGradient id="g166" gradientUnits="userSpaceOnUse" x1="455.5" y1="238.0" x2="397.5" y2="383.2"><stop offset="0" stop-color="#1e6cff"/><stop offset="0.061" stop-color="#1e6cff"/><stop offset="0.092" stop-color="#08c0e4"/><stop offset="0.128" stop-color="#1efa64"/><stop offset="0.333" stop-color="#1efa64"/><stop offset="0.467" stop-color="#0ccace"/><stop offset="0.616" stop-color="#0ed0c1"/><stop offset="0.79" stop-color="#1efa64"/><stop offset="0.933" stop-color="#1efa64"/><stop offset="0.969" stop-color="#08c0e4"/><stop offset="1" stop-color="#1e6cff"/></linearGradient>
<linearGradient id="g167" gradientUnits="userSpaceOnUse" x1="278.1" y1="335.5" x2="265.7" y2="360.3"><stop offset="0" stop-color="#1e6cff"/><stop offset="0.293" stop-color="#1e6cff"/><stop offset="0.548" stop-color="#df1de3"/><stop offset="0.721" stop-color="#ff10de"/><stop offset="0.968" stop-color="#ff19b6"/><stop offset="1" stop-color="#ff3c14"/></linearGradient>
<linearGradient id="g168" gradientUnits="userSpaceOnUse" x1="248.6" y1="351.8" x2="240.4" y2="365.4"><stop offset="0" stop-color="#ff4016"/><stop offset="0.3" stop-color="#f63610"/><stop offset="0.58" stop-color="#c82609"/><stop offset="0.82" stop-color="#921a04"/><stop offset="1" stop-color="#681202"/></linearGradient>
<linearGradient id="g169" gradientUnits="userSpaceOnUse" x1="493.7" y1="226.0" x2="486.5" y2="248.2"><stop offset="0" stop-color="#ff3c14"/><stop offset="0.067" stop-color="#ff3c14"/><stop offset="0.113" stop-color="#ff19b6"/><stop offset="0.467" stop-color="#ff10de"/><stop offset="0.715" stop-color="#df1de3"/><stop offset="1" stop-color="#1e6cff"/></linearGradient>
<linearGradient id="g170" gradientUnits="userSpaceOnUse" x1="465.6" y1="241.4" x2="406.8" y2="387.8"><stop offset="0" stop-color="#1e6cff"/><stop offset="0.06" stop-color="#1e6cff"/><stop offset="0.091" stop-color="#08c0e4"/><stop offset="0.127" stop-color="#1efa64"/><stop offset="0.337" stop-color="#1efa64"/><stop offset="0.468" stop-color="#0bc7d5"/><stop offset="0.617" stop-color="#0dcdc8"/><stop offset="0.791" stop-color="#1efa64"/><stop offset="0.934" stop-color="#1efa64"/><stop offset="0.969" stop-color="#08c0e4"/><stop offset="1" stop-color="#1e6cff"/></linearGradient>
<linearGradient id="g171" gradientUnits="userSpaceOnUse" x1="287.0" y1="339.7" x2="274.3" y2="364.9"><stop offset="0" stop-color="#1e6cff"/><stop offset="0.295" stop-color="#1e6cff"/><stop offset="0.541" stop-color="#df1de3"/><stop offset="0.717" stop-color="#ff10de"/><stop offset="0.969" stop-color="#ff19b6"/><stop offset="1" stop-color="#ff3c14"/></linearGradient>
<linearGradient id="g172" gradientUnits="userSpaceOnUse" x1="256.9" y1="356.2" x2="248.5" y2="370.3"><stop offset="0" stop-color="#ff4016"/><stop offset="0.3" stop-color="#f63610"/><stop offset="0.58" stop-color="#c82609"/><stop offset="0.82" stop-color="#921a04"/><stop offset="1" stop-color="#681202"/></linearGradient>
<linearGradient id="g173" gradientUnits="userSpaceOnUse" x1="504.4" y1="229.1" x2="497.0" y2="251.9"><stop offset="0" stop-color="#ff3c14"/><stop offset="0.064" stop-color="#ff3c14"/><stop offset="0.109" stop-color="#ff19b6"/><stop offset="0.467" stop-color="#ff10de"/><stop offset="0.717" stop-color="#df1de3"/><stop offset="1" stop-color="#1e6cff"/></linearGradient>
<linearGradient id="g174" gradientUnits="userSpaceOnUse" x1="475.7" y1="244.9" x2="416.1" y2="392.4"><stop offset="0" stop-color="#1e6cff"/><stop offset="0.06" stop-color="#1e6cff"/><stop offset="0.091" stop-color="#08c0e4"/><stop offset="0.127" stop-color="#1efa64"/><stop offset="0.339" stop-color="#1efa64"/><stop offset="0.469" stop-color="#09c4dc"/><stop offset="0.617" stop-color="#0ccace"/><stop offset="0.792" stop-color="#1efa64"/><stop offset="0.935" stop-color="#1efa64"/><stop offset="0.97" stop-color="#08c0e4"/><stop offset="1" stop-color="#1e6cff"/></linearGradient>
<linearGradient id="g175" gradientUnits="userSpaceOnUse" x1="295.8" y1="343.8" x2="282.9" y2="369.5"><stop offset="0" stop-color="#1e6cff"/><stop offset="0.297" stop-color="#1e6cff"/><stop offset="0.535" stop-color="#df1de3"/><stop offset="0.714" stop-color="#ff10de"/><stop offset="0.969" stop-color="#ff19b6"/><stop offset="1" stop-color="#ff3c14"/></linearGradient>
<linearGradient id="g176" gradientUnits="userSpaceOnUse" x1="265.2" y1="360.6" x2="256.7" y2="375.1"><stop offset="0" stop-color="#ff4016"/><stop offset="0.3" stop-color="#f63610"/><stop offset="0.58" stop-color="#c82609"/><stop offset="0.82" stop-color="#921a04"/><stop offset="1" stop-color="#681202"/></linearGradient>
<linearGradient id="g177" gradientUnits="userSpaceOnUse" x1="515.1" y1="232.2" x2="507.3" y2="255.5"><stop offset="0" stop-color="#ff3c14"/><stop offset="0.061" stop-color="#ff3c14"/><stop offset="0.105" stop-color="#ff19b6"/><stop offset="0.467" stop-color="#ff10de"/><stop offset="0.719" stop-color="#df1de3"/><stop offset="1" stop-color="#1e6cff"/></linearGradient>
<linearGradient id="g178" gradientUnits="userSpaceOnUse" x1="485.7" y1="248.4" x2="425.3" y2="397.0"><stop offset="0" stop-color="#1e6cff"/><stop offset="0.059" stop-color="#1e6cff"/><stop offset="0.091" stop-color="#08c0e4"/><stop offset="0.128" stop-color="#1efa64"/><stop offset="0.341" stop-color="#1efa64"/><stop offset="0.47" stop-color="#08c0e3"/><stop offset="0.618" stop-color="#0bc7d5"/><stop offset="0.793" stop-color="#1efa64"/><stop offset="0.936" stop-color="#1efa64"/><stop offset="0.97" stop-color="#08c0e4"/><stop offset="1" stop-color="#1e6cff"/></linearGradient>
<linearGradient id="g179" gradientUnits="userSpaceOnUse" x1="304.6" y1="348.0" x2="291.5" y2="374.1"><stop offset="0" stop-color="#1e6cff"/><stop offset="0.299" stop-color="#1e6cff"/><stop offset="0.528" stop-color="#df1de3"/><stop offset="0.71" stop-color="#ff10de"/><stop offset="0.97" stop-color="#ff19b6"/><stop offset="1" stop-color="#ff3c14"/></linearGradient>
<linearGradient id="g180" gradientUnits="userSpaceOnUse" x1="273.5" y1="365.1" x2="264.9" y2="379.8"><stop offset="0" stop-color="#ff4016"/><stop offset="0.3" stop-color="#f63610"/><stop offset="0.58" stop-color="#c82609"/><stop offset="0.82" stop-color="#921a04"/><stop offset="1" stop-color="#681202"/></linearGradient>
<linearGradient id="g181" gradientUnits="userSpaceOnUse" x1="525.6" y1="235.4" x2="517.6" y2="259.2"><stop offset="0" stop-color="#ff3c14"/><stop offset="0.058" stop-color="#ff3c14"/><stop offset="0.101" stop-color="#ff19b6"/><stop offset="0.467" stop-color="#ff10de"/><stop offset="0.723" stop-color="#df1de3"/><stop offset="1" stop-color="#1e6cff"/></linearGradient>
<linearGradient id="g182" gradientUnits="userSpaceOnUse" x1="495.7" y1="251.9" x2="434.7" y2="401.6"><stop offset="0" stop-color="#1e6cff"/><stop offset="0.059" stop-color="#1e6cff"/><stop offset="0.092" stop-color="#08c0e4"/><stop offset="0.129" stop-color="#1efa64"/><stop offset="0.341" stop-color="#1efa64"/><stop offset="0.464" stop-color="#08c0e4"/><stop offset="0.469" stop-color="#09bce5"/><stop offset="0.529" stop-color="#08c0e4"/><stop offset="0.619" stop-color="#09c4db"/><stop offset="0.794" stop-color="#1efa64"/><stop offset="0.937" stop-color="#1efa64"/><stop offset="0.97" stop-color="#08c0e4"/><stop offset="1" stop-color="#1e6cff"/></linearGradient>
<linearGradient id="g183" gradientUnits="userSpaceOnUse" x1="313.4" y1="352.1" x2="300.1" y2="378.6"><stop offset="0" stop-color="#1e6cff"/><stop offset="0.3" stop-color="#1e6cff"/><stop offset="0.521" stop-color="#df1de3"/><stop offset="0.707" stop-color="#ff10de"/><stop offset="0.971" stop-color="#ff19b6"/><stop offset="1" stop-color="#ff3c14"/></linearGradient>
<linearGradient id="g184" gradientUnits="userSpaceOnUse" x1="281.8" y1="369.5" x2="273.1" y2="384.5"><stop offset="0" stop-color="#ff4016"/><stop offset="0.3" stop-color="#f63610"/><stop offset="0.58" stop-color="#c82609"/><stop offset="0.82" stop-color="#921a04"/><stop offset="1" stop-color="#681202"/></linearGradient>
<linearGradient id="g185" gradientUnits="userSpaceOnUse" x1="536.1" y1="238.7" x2="527.9" y2="262.9"><stop offset="0" stop-color="#ff3c14"/><stop offset="0.056" stop-color="#ff3c14"/><stop offset="0.098" stop-color="#ff19b6"/><stop offset="0.468" stop-color="#ff10de"/><stop offset="0.726" stop-color="#df1de3"/><stop offset="1" stop-color="#1e6cff"/></linearGradient>
<linearGradient id="g186" gradientUnits="userSpaceOnUse" x1="505.7" y1="255.4" x2="444.0" y2="406.2"><stop offset="0" stop-color="#1e6cff"/><stop offset="0.059" stop-color="#1e6cff"/><stop offset="0.092" stop-color="#08c0e4"/><stop offset="0.13" stop-color="#1efa64"/><stop offset="0.34" stop-color="#1efa64"/><stop offset="0.457" stop-color="#08c0e4"/><stop offset="0.469" stop-color="#0ab7e7"/><stop offset="0.596" stop-color="#08c0e4"/><stop offset="0.62" stop-color="#08c1e2"/><stop offset="0.794" stop-color="#1efa64"/><stop offset="0.937" stop-color="#1efa64"/><stop offset="0.971" stop-color="#08c0e4"/><stop offset="1" stop-color="#1e6cff"/></linearGradient>
<linearGradient id="g187" gradientUnits="userSpaceOnUse" x1="322.2" y1="356.3" x2="308.6" y2="383.2"><stop offset="0" stop-color="#1e6cff"/><stop offset="0.301" stop-color="#1e6cff"/><stop offset="0.515" stop-color="#df1de3"/><stop offset="0.703" stop-color="#ff10de"/><stop offset="0.971" stop-color="#ff19b6"/><stop offset="1" stop-color="#ff3c14"/></linearGradient>
<linearGradient id="g188" gradientUnits="userSpaceOnUse" x1="290.1" y1="373.9" x2="281.4" y2="389.2"><stop offset="0" stop-color="#ff4016"/><stop offset="0.3" stop-color="#f63610"/><stop offset="0.58" stop-color="#c82609"/><stop offset="0.82" stop-color="#921a04"/><stop offset="1" stop-color="#681202"/></linearGradient>
<linearGradient id="g189" gradientUnits="userSpaceOnUse" x1="546.4" y1="242.0" x2="538.1" y2="266.5"><stop offset="0" stop-color="#ff3c14"/><stop offset="0.054" stop-color="#ff3c14"/><stop offset="0.095" stop-color="#ff19b6"/><stop offset="0.47" stop-color="#ff10de"/><stop offset="0.732" stop-color="#df1de3"/><stop offset="1" stop-color="#1e6cff"/></linearGradient>
<linearGradient id="g190" gradientUnits="userSpaceOnUse" x1="515.7" y1="258.9" x2="453.3" y2="410.7"><stop offset="0" stop-color="#1e6cff"/><stop offset="0.059" stop-color="#1e6cff"/><stop offset="0.093" stop-color="#08c0e4"/><stop offset="0.131" stop-color="#1efa64"/><stop offset="0.337" stop-color="#1efa64"/><stop offset="0.451" stop-color="#08c0e4"/><stop offset="0.468" stop-color="#0cb2e9"/><stop offset="0.621" stop-color="#09bde5"/><stop offset="0.626" stop-color="#08c0e4"/><stop offset="0.794" stop-color="#1efa64"/><stop offset="0.938" stop-color="#1efa64"/><stop offset="0.971" stop-color="#08c0e4"/><stop offset="1" stop-color="#1e6cff"/></linearGradient>
<linearGradient id="g191" gradientUnits="userSpaceOnUse" x1="330.9" y1="360.5" x2="317.1" y2="387.8"><stop offset="0" stop-color="#1e6cff"/><stop offset="0.3" stop-color="#1e6cff"/><stop offset="0.508" stop-color="#df1de3"/><stop offset="0.698" stop-color="#ff10de"/><stop offset="0.971" stop-color="#ff19b6"/><stop offset="1" stop-color="#ff3c14"/></linearGradient>
<linearGradient id="g192" gradientUnits="userSpaceOnUse" x1="298.4" y1="378.4" x2="289.6" y2="393.9"><stop offset="0" stop-color="#ff4016"/><stop offset="0.3" stop-color="#f63610"/><stop offset="0.58" stop-color="#c82609"/><stop offset="0.82" stop-color="#921a04"/><stop offset="1" stop-color="#681202"/></linearGradient>
<linearGradient id="g193" gradientUnits="userSpaceOnUse" x1="556.8" y1="245.3" x2="548.2" y2="270.2"><stop offset="0" stop-color="#ff3c14"/><stop offset="0.053" stop-color="#ff3c14"/><stop offset="0.093" stop-color="#ff19b6"/><stop offset="0.473" stop-color="#ff10de"/><stop offset="0.739" stop-color="#df1de3"/><stop offset="1" stop-color="#1e6cff"/></linearGradient>
<linearGradient id="g194" gradientUnits="userSpaceOnUse" x1="525.6" y1="262.4" x2="462.5" y2="415.3"><stop offset="0" stop-color="#1e6cff"/><stop offset="0.059" stop-color="#1e6cff"/><stop offset="0.093" stop-color="#08c0e4"/><stop offset="0.132" stop-color="#1efa64"/><stop offset="0.333" stop-color="#1efa64"/><stop offset="0.444" stop-color="#08c0e4"/><stop offset="0.466" stop-color="#0dadea"/><stop offset="0.622" stop-color="#0ab8e6"/><stop offset="0.635" stop-color="#08c0e4"/><stop offset="0.794" stop-color="#1efa64"/><stop offset="0.938" stop-color="#1efa64"/><stop offset="0.971" stop-color="#08c0e4"/><stop offset="1" stop-color="#1e6cff"/></linearGradient>
<linearGradient id="g195" gradientUnits="userSpaceOnUse" x1="339.7" y1="364.7" x2="325.7" y2="392.4"><stop offset="0" stop-color="#1e6cff"/><stop offset="0.299" stop-color="#1e6cff"/><stop offset="0.501" stop-color="#df1de3"/><stop offset="0.694" stop-color="#ff10de"/><stop offset="0.969" stop-color="#ff19b6"/><stop offset="1" stop-color="#ff3c14"/></linearGradient>
<linearGradient id="g196" gradientUnits="userSpaceOnUse" x1="306.7" y1="382.8" x2="297.9" y2="398.5"><stop offset="0" stop-color="#ff4016"/><stop offset="0.3" stop-color="#f63610"/><stop offset="0.58" stop-color="#c82609"/><stop offset="0.82" stop-color="#921a04"/><stop offset="1" stop-color="#681202"/></linearGradient>
<linearGradient id="g197" gradientUnits="userSpaceOnUse" x1="567.0" y1="248.7" x2="558.2" y2="273.8"><stop offset="0" stop-color="#ff3c14"/><stop offset="0.052" stop-color="#ff3c14"/><stop offset="0.092" stop-color="#ff19b6"/><stop offset="0.478" stop-color="#ff10de"/><stop offset="0.748" stop-color="#df1de3"/><stop offset="1" stop-color="#1e6cff"/></linearGradient>
<linearGradient id="g198" gradientUnits="userSpaceOnUse" x1="535.6" y1="265.9" x2="471.8" y2="420.0"><stop offset="0" stop-color="#1e6cff"/><stop offset="0.06" stop-color="#1e6cff"/><stop offset="0.094" stop-color="#08c0e4"/><stop offset="0.132" stop-color="#1efa64"/><stop offset="0.328" stop-color="#1efa64"/><stop offset="0.437" stop-color="#08c0e4"/><stop offset="0.464" stop-color="#0ea9ec"/><stop offset="0.623" stop-color="#0bb4e8"/><stop offset="0.643" stop-color="#08c0e4"/><stop offset="0.793" stop-color="#1efa64"/><stop offset="0.938" stop-color="#1efa64"/><stop offset="0.971" stop-color="#08c0e4"/><stop offset="1" stop-color="#1e6cff"/></linearGradient>
<linearGradient id="g199" gradientUnits="userSpaceOnUse" x1="348.4" y1="368.9" x2="334.3" y2="396.9"><stop offset="0" stop-color="#1e6cff"/><stop offset="0.297" stop-color="#1e6cff"/><stop offset="0.495" stop-color="#df1de3"/><stop offset="0.689" stop-color="#ff10de"/><stop offset="0.968" stop-color="#ff19b6"/><stop offset="1" stop-color="#ff3c14"/></linearGradient>
<linearGradient id="g200" gradientUnits="userSpaceOnUse" x1="315.1" y1="387.2" x2="306.1" y2="403.1"><stop offset="0" stop-color="#ff4016"/><stop offset="0.3" stop-color="#f63610"/><stop offset="0.58" stop-color="#c82609"/><stop offset="0.82" stop-color="#921a04"/><stop offset="1" stop-color="#681202"/></linearGradient>
<linearGradient id="g201" gradientUnits="userSpaceOnUse" x1="577.2" y1="252.1" x2="568.3" y2="277.4"><stop offset="0" stop-color="#ff3c14"/><stop offset="0.052" stop-color="#ff3c14"/><stop offset="0.091" stop-color="#ff19b6"/><stop offset="0.483" stop-color="#ff10de"/><stop offset="0.757" stop-color="#df1de3"/><stop offset="1" stop-color="#1e6cff"/></linearGradient>
<linearGradient id="g202" gradientUnits="userSpaceOnUse" x1="545.5" y1="269.5" x2="481.0" y2="424.6"><stop offset="0" stop-color="#1e6cff"/><stop offset="0.06" stop-color="#1e6cff"/><stop offset="0.094" stop-color="#08c0e4"/><stop offset="0.132" stop-color="#1efa64"/><stop offset="0.321" stop-color="#1efa64"/><stop offset="0.431" stop-color="#08c0e4"/><stop offset="0.461" stop-color="#0fa6ec"/><stop offset="0.625" stop-color="#0dafea"/><stop offset="0.65" stop-color="#08c0e4"/><stop offset="0.793" stop-color="#1efa64"/><stop offset="0.938" stop-color="#1efa64"/><stop offset="0.971" stop-color="#08c0e4"/><stop offset="1" stop-color="#1e6cff"/></linearGradient>
<linearGradient id="g203" gradientUnits="userSpaceOnUse" x1="357.2" y1="373.1" x2="343.0" y2="401.4"><stop offset="0" stop-color="#1e6cff"/><stop offset="0.295" stop-color="#1e6cff"/><stop offset="0.489" stop-color="#df1de3"/><stop offset="0.686" stop-color="#ff10de"/><stop offset="0.967" stop-color="#ff19b6"/><stop offset="1" stop-color="#ff3c14"/></linearGradient>
<linearGradient id="g204" gradientUnits="userSpaceOnUse" x1="323.4" y1="391.6" x2="314.4" y2="407.8"><stop offset="0" stop-color="#ff4016"/><stop offset="0.3" stop-color="#f63610"/><stop offset="0.58" stop-color="#c82609"/><stop offset="0.82" stop-color="#921a04"/><stop offset="1" stop-color="#681202"/></linearGradient>
<linearGradient id="g205" gradientUnits="userSpaceOnUse" x1="587.3" y1="255.5" x2="578.3" y2="281.1"><stop offset="0" stop-color="#ff3c14"/><stop offset="0.052" stop-color="#ff3c14"/><stop offset="0.091" stop-color="#ff19b6"/><stop offset="0.488" stop-color="#ff10de"/><stop offset="0.766" stop-color="#df1de3"/><stop offset="1" stop-color="#1e6cff"/></linearGradient>
<linearGradient id="g206" gradientUnits="userSpaceOnUse" x1="555.4" y1="273.0" x2="490.2" y2="429.2"><stop offset="0" stop-color="#1e6cff"/><stop offset="0.061" stop-color="#1e6cff"/><stop offset="0.094" stop-color="#08c0e4"/><stop offset="0.132" stop-color="#1efa64"/><stop offset="0.313" stop-color="#1efa64"/><stop offset="0.424" stop-color="#08c0e4"/><stop offset="0.457" stop-color="#0fa4ed"/><stop offset="0.626" stop-color="#0eaaeb"/><stop offset="0.657" stop-color="#08c0e4"/><stop offset="0.792" stop-color="#1efa64"/><stop offset="0.938" stop-color="#1efa64"/><stop offset="0.971" stop-color="#08c0e4"/><stop offset="1" stop-color="#1e6cff"/></linearGradient>
<linearGradient id="g207" gradientUnits="userSpaceOnUse" x1="365.9" y1="377.3" x2="351.7" y2="405.8"><stop offset="0" stop-color="#1e6cff"/><stop offset="0.292" stop-color="#1e6cff"/><stop offset="0.485" stop-color="#df1de3"/><stop offset="0.683" stop-color="#ff10de"/><stop offset="0.966" stop-color="#ff19b6"/><stop offset="1" stop-color="#ff3c14"/></linearGradient>
<linearGradient id="g208" gradientUnits="userSpaceOnUse" x1="331.9" y1="396.0" x2="322.8" y2="412.4"><stop offset="0" stop-color="#ff4016"/><stop offset="0.3" stop-color="#f63610"/><stop offset="0.58" stop-color="#c82609"/><stop offset="0.82" stop-color="#921a04"/><stop offset="1" stop-color="#681202"/></linearGradient>
<linearGradient id="g209" gradientUnits="userSpaceOnUse" x1="597.4" y1="258.9" x2="588.2" y2="284.8"><stop offset="0" stop-color="#ff3c14"/><stop offset="0.052" stop-color="#ff3c14"/><stop offset="0.09" stop-color="#ff19b6"/><stop offset="0.493" stop-color="#ff10de"/><stop offset="0.775" stop-color="#df1de3"/><stop offset="1" stop-color="#1e6cff"/></linearGradient>
<linearGradient id="g210" gradientUnits="userSpaceOnUse" x1="565.3" y1="276.6" x2="499.4" y2="433.8"><stop offset="0" stop-color="#1e6cff"/><stop offset="0.062" stop-color="#1e6cff"/><stop offset="0.094" stop-color="#08c0e4"/><stop offset="0.131" stop-color="#1efa64"/><stop offset="0.304" stop-color="#1efa64"/><stop offset="0.418" stop-color="#08c0e4"/><stop offset="0.453" stop-color="#10a2ee"/><stop offset="0.627" stop-color="#0fa6ec"/><stop offset="0.662" stop-color="#08c0e4"/><stop offset="0.792" stop-color="#1efa64"/><stop offset="0.938" stop-color="#1efa64"/><stop offset="0.971" stop-color="#08c0e4"/><stop offset="1" stop-color="#1e6cff"/></linearGradient>
<linearGradient id="g211" gradientUnits="userSpaceOnUse" x1="374.6" y1="381.5" x2="360.5" y2="410.2"><stop offset="0" stop-color="#1e6cff"/><stop offset="0.29" stop-color="#1e6cff"/><stop offset="0.482" stop-color="#df1de3"/><stop offset="0.682" stop-color="#ff10de"/><stop offset="0.967" stop-color="#ff19b6"/><stop offset="1" stop-color="#ff3c14"/></linearGradient>
<linearGradient id="g212" gradientUnits="userSpaceOnUse" x1="340.4" y1="400.3" x2="331.2" y2="417.0"><stop offset="0" stop-color="#ff4016"/><stop offset="0.3" stop-color="#f63610"/><stop offset="0.58" stop-color="#c82609"/><stop offset="0.82" stop-color="#921a04"/><stop offset="1" stop-color="#681202"/></linearGradient>
<linearGradient id="g213" gradientUnits="userSpaceOnUse" x1="607.4" y1="262.4" x2="598.1" y2="288.4"><stop offset="0" stop-color="#ff3c14"/><stop offset="0.052" stop-color="#ff3c14"/><stop offset="0.09" stop-color="#ff19b6"/><stop offset="0.497" stop-color="#ff10de"/><stop offset="0.783" stop-color="#df1de3"/><stop offset="1" stop-color="#1e6cff"/></linearGradient>
<linearGradient id="g214" gradientUnits="userSpaceOnUse" x1="575.1" y1="280.2" x2="508.6" y2="438.4"><stop offset="0" stop-color="#1e6cff"/><stop offset="0.062" stop-color="#1e6cff"/><stop offset="0.094" stop-color="#08c0e4"/><stop offset="0.13" stop-color="#1efa64"/><stop offset="0.295" stop-color="#1efa64"/><stop offset="0.41" stop-color="#08c0e4"/><stop offset="0.449" stop-color="#10a0ee"/><stop offset="0.628" stop-color="#0fa4ed"/><stop offset="0.665" stop-color="#08c0e4"/><stop offset="0.792" stop-color="#1efa64"/><stop offset="0.938" stop-color="#1efa64"/><stop offset="0.971" stop-color="#08c0e4"/><stop offset="1" stop-color="#1e6cff"/></linearGradient>
<linearGradient id="g215" gradientUnits="userSpaceOnUse" x1="383.3" y1="385.7" x2="369.3" y2="414.4"><stop offset="0" stop-color="#1e6cff"/><stop offset="0.289" stop-color="#1e6cff"/><stop offset="0.48" stop-color="#df1de3"/><stop offset="0.682" stop-color="#ff10de"/><stop offset="0.97" stop-color="#ff19b6"/><stop offset="1" stop-color="#ff3c14"/></linearGradient>
<linearGradient id="g216" gradientUnits="userSpaceOnUse" x1="349.0" y1="404.5" x2="339.7" y2="421.6"><stop offset="0" stop-color="#ff4016"/><stop offset="0.3" stop-color="#f63610"/><stop offset="0.58" stop-color="#c82609"/><stop offset="0.82" stop-color="#921a04"/><stop offset="1" stop-color="#681202"/></linearGradient>
<linearGradient id="g217" gradientUnits="userSpaceOnUse" x1="617.4" y1="265.9" x2="607.9" y2="292.1"><stop offset="0" stop-color="#ff3c14"/><stop offset="0.051" stop-color="#ff3c14"/><stop offset="0.088" stop-color="#ff19b6"/><stop offset="0.501" stop-color="#ff10de"/><stop offset="0.789" stop-color="#df1de3"/><stop offset="1" stop-color="#1e6cff"/></linearGradient>
<linearGradient id="g218" gradientUnits="userSpaceOnUse" x1="585.0" y1="283.8" x2="517.8" y2="443.0"><stop offset="0" stop-color="#1e6cff"/><stop offset="0.063" stop-color="#1e6cff"/><stop offset="0.094" stop-color="#08c0e4"/><stop offset="0.129" stop-color="#1efa64"/><stop offset="0.286" stop-color="#1efa64"/><stop offset="0.403" stop-color="#08c0e4"/><stop offset="0.444" stop-color="#119eef"/><stop offset="0.629" stop-color="#10a1ee"/><stop offset="0.668" stop-color="#08c0e4"/><stop offset="0.791" stop-color="#1efa64"/><stop offset="0.938" stop-color="#1efa64"/><stop offset="0.971" stop-color="#08c0e4"/><stop offset="1" stop-color="#1e6cff"/></linearGradient>
<linearGradient id="g219" gradientUnits="userSpaceOnUse" x1="392.0" y1="389.9" x2="378.1" y2="418.6"><stop offset="0" stop-color="#1e6cff"/><stop offset="0.288" stop-color="#1e6cff"/><stop offset="0.479" stop-color="#df1de3"/><stop offset="0.683" stop-color="#ff10de"/><stop offset="0.975" stop-color="#ff19b6"/><stop offset="1" stop-color="#ff3c14"/></linearGradient>
<linearGradient id="g220" gradientUnits="userSpaceOnUse" x1="357.7" y1="408.8" x2="348.3" y2="426.2"><stop offset="0" stop-color="#ff4016"/><stop offset="0.3" stop-color="#f63610"/><stop offset="0.58" stop-color="#c82609"/><stop offset="0.82" stop-color="#921a04"/><stop offset="1" stop-color="#681202"/></linearGradient>
<linearGradient id="g221" gradientUnits="userSpaceOnUse" x1="627.3" y1="269.5" x2="617.6" y2="295.8"><stop offset="0" stop-color="#ff3c14"/><stop offset="0.05" stop-color="#ff3c14"/><stop offset="0.087" stop-color="#ff19b6"/><stop offset="0.503" stop-color="#ff10de"/><stop offset="0.794" stop-color="#df1de3"/><stop offset="1" stop-color="#1e6cff"/></linearGradient>
<linearGradient id="g222" gradientUnits="userSpaceOnUse" x1="594.8" y1="287.4" x2="526.9" y2="447.6"><stop offset="0" stop-color="#1e6cff"/><stop offset="0.063" stop-color="#1e6cff"/><stop offset="0.093" stop-color="#08c0e4"/><stop offset="0.128" stop-color="#1efa64"/><stop offset="0.276" stop-color="#1efa64"/><stop offset="0.395" stop-color="#08c0e4"/><stop offset="0.439" stop-color="#119cf0"/><stop offset="0.629" stop-color="#119eef"/><stop offset="0.671" stop-color="#08c0e4"/><stop offset="0.791" stop-color="#1efa64"/><stop offset="0.938" stop-color="#1efa64"/><stop offset="0.971" stop-color="#08c0e4"/><stop offset="1" stop-color="#1e6cff"/></linearGradient>
<linearGradient id="g223" gradientUnits="userSpaceOnUse" x1="400.7" y1="394.1" x2="386.9" y2="422.8"><stop offset="0" stop-color="#1e6cff"/><stop offset="0.287" stop-color="#1e6cff"/><stop offset="0.478" stop-color="#df1de3"/><stop offset="0.685" stop-color="#ff10de"/><stop offset="0.98" stop-color="#ff19b6"/><stop offset="1" stop-color="#ff3c14"/></linearGradient>
<linearGradient id="g224" gradientUnits="userSpaceOnUse" x1="366.5" y1="412.9" x2="356.8" y2="430.8"><stop offset="0" stop-color="#ff4016"/><stop offset="0.3" stop-color="#f63610"/><stop offset="0.58" stop-color="#c82609"/><stop offset="0.82" stop-color="#921a04"/><stop offset="1" stop-color="#681202"/></linearGradient>
<linearGradient id="g225" gradientUnits="userSpaceOnUse" x1="637.2" y1="273.1" x2="627.4" y2="299.5"><stop offset="0" stop-color="#ff3c14"/><stop offset="0.05" stop-color="#ff3c14"/><stop offset="0.086" stop-color="#ff19b6"/><stop offset="0.504" stop-color="#ff10de"/><stop offset="0.796" stop-color="#df1de3"/><stop offset="1" stop-color="#1e6cff"/></linearGradient>
<linearGradient id="g226" gradientUnits="userSpaceOnUse" x1="604.5" y1="291.0" x2="536.0" y2="452.1"><stop offset="0" stop-color="#1e6cff"/><stop offset="0.064" stop-color="#1e6cff"/><stop offset="0.093" stop-color="#08c0e4"/><stop offset="0.126" stop-color="#1efa64"/><stop offset="0.266" stop-color="#1efa64"/><stop offset="0.387" stop-color="#08c0e4"/><stop offset="0.434" stop-color="#129af0"/><stop offset="0.63" stop-color="#119cf0"/><stop offset="0.675" stop-color="#08c0e4"/><stop offset="0.791" stop-color="#1efa64"/><stop offset="0.937" stop-color="#1efa64"/><stop offset="0.971" stop-color="#08c0e4"/><stop offset="1" stop-color="#1e6cff"/></linearGradient>
<linearGradient id="g227" gradientUnits="userSpaceOnUse" x1="409.4" y1="398.3" x2="395.7" y2="427.0"><stop offset="0" stop-color="#1e6cff"/><stop offset="0.286" stop-color="#1e6cff"/><stop offset="0.478" stop-color="#df1de3"/><stop offset="0.687" stop-color="#ff10de"/><stop offset="0.985" stop-color="#ff19b6"/><stop offset="1" stop-color="#ff3c14"/></linearGradient>
<linearGradient id="g228" gradientUnits="userSpaceOnUse" x1="375.2" y1="417.1" x2="365.4" y2="435.4"><stop offset="0" stop-color="#ff4016"/><stop offset="0.3" stop-color="#f63610"/><stop offset="0.58" stop-color="#c82609"/><stop offset="0.82" stop-color="#921a04"/><stop offset="1" stop-color="#681202"/></linearGradient>
<linearGradient id="g229" gradientUnits="userSpaceOnUse" x1="647.0" y1="276.7" x2="637.0" y2="303.2"><stop offset="0" stop-color="#ff3c14"/><stop offset="0.049" stop-color="#ff3c14"/><stop offset="0.086" stop-color="#ff19b6"/><stop offset="0.504" stop-color="#ff10de"/><stop offset="0.796" stop-color="#df1de3"/><stop offset="1" stop-color="#1e6cff"/></linearGradient>
<linearGradient id="g230" gradientUnits="userSpaceOnUse" x1="614.2" y1="294.7" x2="545.1" y2="456.7"><stop offset="0" stop-color="#1e6cff"/><stop offset="0.063" stop-color="#1e6cff"/><stop offset="0.092" stop-color="#08c0e4"/><stop offset="0.125" stop-color="#1efa64"/><stop offset="0.257" stop-color="#1efa64"/><stop offset="0.379" stop-color="#08c0e4"/><stop offset="0.429" stop-color="#1298f1"/><stop offset="0.631" stop-color="#1299f1"/><stop offset="0.678" stop-color="#08c0e4"/><stop offset="0.792" stop-color="#1efa64"/><stop offset="0.937" stop-color="#1efa64"/><stop offset="0.971" stop-color="#08c0e4"/><stop offset="1" stop-color="#1e6cff"/></linearGradient>
<linearGradient id="g231" gradientUnits="userSpaceOnUse" x1="418.2" y1="402.5" x2="404.4" y2="431.1"><stop offset="0" stop-color="#1e6cff"/><stop offset="0.286" stop-color="#1e6cff"/><stop offset="0.479" stop-color="#df1de3"/><stop offset="0.689" stop-color="#ff10de"/><stop offset="0.99" stop-color="#ff19b6"/><stop offset="1" stop-color="#ff3c14"/></linearGradient>
<linearGradient id="g232" gradientUnits="userSpaceOnUse" x1="384.0" y1="421.3" x2="374.0" y2="439.9"><stop offset="0" stop-color="#ff4016"/><stop offset="0.3" stop-color="#f63610"/><stop offset="0.58" stop-color="#c82609"/><stop offset="0.82" stop-color="#921a04"/><stop offset="1" stop-color="#681202"/></linearGradient>
<linearGradient id="g233" gradientUnits="userSpaceOnUse" x1="656.7" y1="280.3" x2="646.6" y2="306.9"><stop offset="0" stop-color="#ff3c14"/><stop offset="0.05" stop-color="#ff3c14"/><stop offset="0.087" stop-color="#ff19b6"/><stop offset="0.504" stop-color="#ff10de"/><stop offset="0.796" stop-color="#df1de3"/><stop offset="1" stop-color="#1e6cff"/></linearGradient>
<linearGradient id="g234" gradientUnits="userSpaceOnUse" x1="623.9" y1="298.3" x2="554.2" y2="461.2"><stop offset="0" stop-color="#1e6cff"/><stop offset="0.063" stop-color="#1e6cff"/><stop offset="0.091" stop-color="#08c0e4"/><stop offset="0.123" stop-color="#1efa64"/><stop offset="0.248" stop-color="#1efa64"/><stop offset="0.371" stop-color="#08c0e4"/><stop offset="0.424" stop-color="#1396f1"/><stop offset="0.633" stop-color="#1396f1"/><stop offset="0.681" stop-color="#08c0e4"/><stop offset="0.793" stop-color="#1efa64"/><stop offset="0.937" stop-color="#1efa64"/><stop offset="0.971" stop-color="#08c0e4"/><stop offset="1" stop-color="#1e6cff"/></linearGradient>
<linearGradient id="g235" gradientUnits="userSpaceOnUse" x1="426.9" y1="406.7" x2="413.0" y2="435.4"><stop offset="0" stop-color="#1e6cff"/><stop offset="0.285" stop-color="#1e6cff"/><stop offset="0.478" stop-color="#df1de3"/><stop offset="0.69" stop-color="#ff10de"/><stop offset="0.993" stop-color="#ff19b6"/><stop offset="1" stop-color="#ff3c14"/></linearGradient>
<linearGradient id="g236" gradientUnits="userSpaceOnUse" x1="392.7" y1="425.5" x2="382.6" y2="444.5"><stop offset="0" stop-color="#ff4016"/><stop offset="0.3" stop-color="#f63610"/><stop offset="0.58" stop-color="#c82609"/><stop offset="0.82" stop-color="#921a04"/><stop offset="1" stop-color="#681202"/></linearGradient>
<linearGradient id="g237" gradientUnits="userSpaceOnUse" x1="666.4" y1="284.0" x2="656.2" y2="310.7"><stop offset="0" stop-color="#ff3c14"/><stop offset="0.051" stop-color="#ff3c14"/><stop offset="0.088" stop-color="#ff19b6"/><stop offset="0.504" stop-color="#ff10de"/><stop offset="0.795" stop-color="#df1de3"/><stop offset="1" stop-color="#1e6cff"/></linearGradient>
<linearGradient id="g238" gradientUnits="userSpaceOnUse" x1="633.6" y1="302.0" x2="563.3" y2="465.7"><stop offset="0" stop-color="#1e6cff"/><stop offset="0.063" stop-color="#1e6cff"/><stop offset="0.09" stop-color="#08c0e4"/><stop offset="0.122" stop-color="#1efa64"/><stop offset="0.239" stop-color="#1efa64"/><stop offset="0.363" stop-color="#08c0e4"/><stop offset="0.419" stop-color="#1394f2"/><stop offset="0.635" stop-color="#1494f2"/><stop offset="0.685" stop-color="#08c0e4"/><stop offset="0.794" stop-color="#1efa64"/><stop offset="0.937" stop-color="#1efa64"/><stop offset="0.97" stop-color="#08c0e4"/><stop offset="1" stop-color="#1e6cff"/></linearGradient>
<linearGradient id="g239" gradientUnits="userSpaceOnUse" x1="435.6" y1="410.9" x2="421.6" y2="439.6"><stop offset="0" stop-color="#1e6cff"/><stop offset="0.283" stop-color="#1e6cff"/><stop offset="0.477" stop-color="#df1de3"/><stop offset="0.69" stop-color="#ff10de"/><stop offset="0.994" stop-color="#ff19b6"/><stop offset="1" stop-color="#ff3c14"/></linearGradient>
<linearGradient id="g240" gradientUnits="userSpaceOnUse" x1="401.3" y1="429.8" x2="391.2" y2="449.0"><stop offset="0" stop-color="#ff4016"/><stop offset="0.3" stop-color="#f63610"/><stop offset="0.58" stop-color="#c82609"/><stop offset="0.82" stop-color="#921a04"/><stop offset="1" stop-color="#681202"/></linearGradient>
<linearGradient id="g241" gradientUnits="userSpaceOnUse" x1="676.1" y1="287.7" x2="665.7" y2="314.4"><stop offset="0" stop-color="#ff3c14"/><stop offset="0.052" stop-color="#ff3c14"/><stop offset="0.09" stop-color="#ff19b6"/><stop offset="0.504" stop-color="#ff10de"/><stop offset="0.793" stop-color="#df1de3"/><stop offset="1" stop-color="#1e6cff"/></linearGradient>
<linearGradient id="g242" gradientUnits="userSpaceOnUse" x1="643.2" y1="305.7" x2="572.3" y2="470.3"><stop offset="0" stop-color="#1e6cff"/><stop offset="0.062" stop-color="#1e6cff"/><stop offset="0.089" stop-color="#08c0e4"/><stop offset="0.12" stop-color="#1efa64"/><stop offset="0.231" stop-color="#1efa64"/><stop offset="0.355" stop-color="#08c0e4"/><stop offset="0.414" stop-color="#1492f3"/><stop offset="0.637" stop-color="#1491f3"/><stop offset="0.689" stop-color="#08c0e4"/><stop offset="0.796" stop-color="#1efa64"/><stop offset="0.936" stop-color="#1efa64"/><stop offset="0.97" stop-color="#08c0e4"/><stop offset="1" stop-color="#1e6cff"/></linearGradient>
<linearGradient id="g243" gradientUnits="userSpaceOnUse" x1="444.4" y1="415.1" x2="430.1" y2="444.0"><stop offset="0" stop-color="#1e6cff"/><stop offset="0.282" stop-color="#1e6cff"/><stop offset="0.476" stop-color="#df1de3"/><stop offset="0.688" stop-color="#ff10de"/><stop offset="0.992" stop-color="#ff19b6"/><stop offset="1" stop-color="#ff3c14"/></linearGradient>
<linearGradient id="g244" gradientUnits="userSpaceOnUse" x1="409.9" y1="434.0" x2="399.8" y2="453.4"><stop offset="0" stop-color="#ff4016"/><stop offset="0.3" stop-color="#f63610"/><stop offset="0.58" stop-color="#c82609"/><stop offset="0.82" stop-color="#921a04"/><stop offset="1" stop-color="#681202"/></linearGradient>
<linearGradient id="g245" gradientUnits="userSpaceOnUse" x1="685.7" y1="291.4" x2="675.2" y2="318.2"><stop offset="0" stop-color="#ff3c14"/><stop offset="0.053" stop-color="#ff3c14"/><stop offset="0.093" stop-color="#ff19b6"/><stop offset="0.504" stop-color="#ff10de"/><stop offset="0.792" stop-color="#df1de3"/><stop offset="1" stop-color="#1e6cff"/></linearGradient>
<linearGradient id="g246" gradientUnits="userSpaceOnUse" x1="652.8" y1="309.5" x2="581.3" y2="474.7"><stop offset="0" stop-color="#1e6cff"/><stop offset="0.061" stop-color="#1e6cff"/><stop offset="0.088" stop-color="#08c0e4"/><stop offset="0.119" stop-color="#1efa64"/><stop offset="0.225" stop-color="#1efa64"/><stop offset="0.347" stop-color="#08c0e4"/><stop offset="0.408" stop-color="#1590f3"/><stop offset="0.64" stop-color="#158ff4"/><stop offset="0.694" stop-color="#08c0e4"/><stop offset="0.798" stop-color="#1efa64"/><stop offset="0.936" stop-color="#1efa64"/><stop offset="0.97" stop-color="#08c0e4"/><stop offset="1" stop-color="#1e6cff"/></linearGradient>
<linearGradient id="g247" gradientUnits="userSpaceOnUse" x1="453.1" y1="419.3" x2="438.7" y2="448.4"><stop offset="0" stop-color="#1e6cff"/><stop offset="0.28" stop-color="#1e6cff"/><stop offset="0.473" stop-color="#df1de3"/><stop offset="0.685" stop-color="#ff10de"/><stop offset="0.987" stop-color="#ff19b6"/><stop offset="1" stop-color="#ff3c14"/></linearGradient>
<linearGradient id="g248" gradientUnits="userSpaceOnUse" x1="418.4" y1="438.4" x2="408.3" y2="457.8"><stop offset="0" stop-color="#ff4016"/><stop offset="0.3" stop-color="#f63610"/><stop offset="0.58" stop-color="#c82609"/><stop offset="0.82" stop-color="#921a04"/><stop offset="1" stop-color="#681202"/></linearGradient>
<linearGradient id="g249" gradientUnits="userSpaceOnUse" x1="695.2" y1="295.1" x2="684.6" y2="322.0"><stop offset="0" stop-color="#ff3c14"/><stop offset="0.055" stop-color="#ff3c14"/><stop offset="0.097" stop-color="#ff19b6"/><stop offset="0.506" stop-color="#ff10de"/><stop offset="0.791" stop-color="#df1de3"/><stop offset="1" stop-color="#1e6cff"/></linearGradient>
<linearGradient id="g250" gradientUnits="userSpaceOnUse" x1="662.3" y1="313.2" x2="590.3" y2="479.2"><stop offset="0" stop-color="#1e6cff"/><stop offset="0.06" stop-color="#1e6cff"/><stop offset="0.087" stop-color="#08c0e4"/><stop offset="0.117" stop-color="#1efa64"/><stop offset="0.218" stop-color="#1efa64"/><stop offset="0.34" stop-color="#08c0e4"/><stop offset="0.403" stop-color="#158ef4"/><stop offset="0.644" stop-color="#168cf5"/><stop offset="0.699" stop-color="#08c0e4"/><stop offset="0.8" stop-color="#1efa64"/><stop offset="0.936" stop-color="#1efa64"/><stop offset="0.97" stop-color="#08c0e4"/><stop offset="1" stop-color="#1e6cff"/></linearGradient>
<linearGradient id="g251" gradientUnits="userSpaceOnUse" x1="461.9" y1="423.5" x2="447.4" y2="452.8"><stop offset="0" stop-color="#1e6cff"/><stop offset="0.278" stop-color="#1e6cff"/><stop offset="0.471" stop-color="#df1de3"/><stop offset="0.681" stop-color="#ff10de"/><stop offset="0.981" stop-color="#ff19b6"/><stop offset="1" stop-color="#ff3c14"/></linearGradient>
<linearGradient id="g252" gradientUnits="userSpaceOnUse" x1="426.9" y1="442.7" x2="416.9" y2="462.2"><stop offset="0" stop-color="#ff4016"/><stop offset="0.3" stop-color="#f63610"/><stop offset="0.58" stop-color="#c82609"/><stop offset="0.82" stop-color="#921a04"/><stop offset="1" stop-color="#681202"/></linearGradient>
<linearGradient id="g253" gradientUnits="userSpaceOnUse" x1="704.8" y1="298.9" x2="694.1" y2="325.8"><stop offset="0" stop-color="#ff3c14"/><stop offset="0.057" stop-color="#ff3c14"/><stop offset="0.102" stop-color="#ff19b6"/><stop offset="0.508" stop-color="#ff10de"/><stop offset="0.792" stop-color="#df1de3"/><stop offset="1" stop-color="#1e6cff"/></linearGradient>
<linearGradient id="g254" gradientUnits="userSpaceOnUse" x1="671.9" y1="317.0" x2="599.2" y2="483.7"><stop offset="0" stop-color="#1e6cff"/><stop offset="0.059" stop-color="#1e6cff"/><stop offset="0.085" stop-color="#08c0e4"/><stop offset="0.115" stop-color="#1efa64"/><stop offset="0.213" stop-color="#1efa64"/><stop offset="0.333" stop-color="#08c0e4"/><stop offset="0.398" stop-color="#168cf5"/><stop offset="0.648" stop-color="#168af5"/><stop offset="0.704" stop-color="#08c0e4"/><stop offset="0.802" stop-color="#1efa64"/><stop offset="0.936" stop-color="#1efa64"/><stop offset="0.97" stop-color="#08c0e4"/><stop offset="1" stop-color="#1e6cff"/></linearGradient>
<linearGradient id="g255" gradientUnits="userSpaceOnUse" x1="470.6" y1="427.7" x2="456.1" y2="457.2"><stop offset="0" stop-color="#1e6cff"/><stop offset="0.277" stop-color="#1e6cff"/><stop offset="0.469" stop-color="#df1de3"/><stop offset="0.678" stop-color="#ff10de"/><stop offset="0.976" stop-color="#ff19b6"/><stop offset="1" stop-color="#ff3c14"/></linearGradient>
<linearGradient id="g256" gradientUnits="userSpaceOnUse" x1="435.4" y1="447.0" x2="425.5" y2="466.5"><stop offset="0" stop-color="#ff4016"/><stop offset="0.3" stop-color="#f63610"/><stop offset="0.58" stop-color="#c82609"/><stop offset="0.82" stop-color="#921a04"/><stop offset="1" stop-color="#681202"/></linearGradient>
<linearGradient id="g257" gradientUnits="userSpaceOnUse" x1="714.2" y1="302.7" x2="703.5" y2="329.6"><stop offset="0" stop-color="#ff3c14"/><stop offset="0.058" stop-color="#ff3c14"/><stop offset="0.107" stop-color="#ff19b6"/><stop offset="0.51" stop-color="#ff10de"/><stop offset="0.792" stop-color="#df1de3"/><stop offset="1" stop-color="#1e6cff"/></linearGradient>
<linearGradient id="g258" gradientUnits="userSpaceOnUse" x1="681.3" y1="320.8" x2="608.3" y2="488.1"><stop offset="0" stop-color="#1e6cff"/><stop offset="0.058" stop-color="#1e6cff"/><stop offset="0.084" stop-color="#08c0e4"/><stop offset="0.113" stop-color="#1efa64"/><stop offset="0.207" stop-color="#1efa64"/><stop offset="0.326" stop-color="#08c0e4"/><stop offset="0.394" stop-color="#168af5"/><stop offset="0.653" stop-color="#1788f6"/><stop offset="0.709" stop-color="#08c0e4"/><stop offset="0.805" stop-color="#1efa64"/><stop offset="0.936" stop-color="#1efa64"/><stop offset="0.97" stop-color="#08c0e4"/><stop offset="1" stop-color="#1e6cff"/></linearGradient>
<linearGradient id="g259" gradientUnits="userSpaceOnUse" x1="479.4" y1="431.8" x2="464.9" y2="461.6"><stop offset="0" stop-color="#1e6cff"/><stop offset="0.276" stop-color="#1e6cff"/><stop offset="0.468" stop-color="#df1de3"/><stop offset="0.675" stop-color="#ff10de"/><stop offset="0.971" stop-color="#ff19b6"/><stop offset="1" stop-color="#ff3c14"/></linearGradient>
<linearGradient id="g260" gradientUnits="userSpaceOnUse" x1="443.9" y1="451.3" x2="434.1" y2="470.8"><stop offset="0" stop-color="#ff4016"/><stop offset="0.3" stop-color="#f63610"/><stop offset="0.58" stop-color="#c82609"/><stop offset="0.82" stop-color="#921a04"/><stop offset="1" stop-color="#681202"/></linearGradient>
<linearGradient id="g261" gradientUnits="userSpaceOnUse" x1="723.7" y1="306.5" x2="712.9" y2="333.4"><stop offset="0" stop-color="#ff3c14"/><stop offset="0.061" stop-color="#ff3c14"/><stop offset="0.112" stop-color="#ff19b6"/><stop offset="0.512" stop-color="#ff10de"/><stop offset="0.793" stop-color="#df1de3"/><stop offset="1" stop-color="#1e6cff"/></linearGradient>
<linearGradient id="g262" gradientUnits="userSpaceOnUse" x1="690.8" y1="324.5" x2="617.5" y2="492.5"><stop offset="0" stop-color="#1e6cff"/><stop offset="0.057" stop-color="#1e6cff"/><stop offset="0.082" stop-color="#08c0e4"/><stop offset="0.111" stop-color="#1efa64"/><stop offset="0.202" stop-color="#1efa64"/><stop offset="0.321" stop-color="#08c0e4"/><stop offset="0.389" stop-color="#1788f6"/><stop offset="0.658" stop-color="#1787f6"/><stop offset="0.714" stop-color="#08c0e4"/><stop offset="0.807" stop-color="#1efa64"/><stop offset="0.935" stop-color="#1efa64"/><stop offset="0.97" stop-color="#08c0e4"/><stop offset="1" stop-color="#1e6cff"/></linearGradient>
<linearGradient id="g263" gradientUnits="userSpaceOnUse" x1="488.2" y1="436.0" x2="473.8" y2="465.8"><stop offset="0" stop-color="#1e6cff"/><stop offset="0.277" stop-color="#1e6cff"/><stop offset="0.47" stop-color="#df1de3"/><stop offset="0.675" stop-color="#ff10de"/><stop offset="0.968" stop-color="#ff19b6"/><stop offset="1" stop-color="#ff3c14"/></linearGradient>
<linearGradient id="g264" gradientUnits="userSpaceOnUse" x1="452.5" y1="455.6" x2="442.7" y2="475.1"><stop offset="0" stop-color="#ff4016"/><stop offset="0.3" stop-color="#f63610"/><stop offset="0.58" stop-color="#c82609"/><stop offset="0.82" stop-color="#921a04"/><stop offset="1" stop-color="#681202"/></linearGradient>
<linearGradient id="g265" gradientUnits="userSpaceOnUse" x1="733.1" y1="310.3" x2="722.2" y2="337.2"><stop offset="0" stop-color="#ff3c14"/><stop offset="0.063" stop-color="#ff3c14"/><stop offset="0.118" stop-color="#ff19b6"/><stop offset="0.515" stop-color="#ff10de"/><stop offset="0.794" stop-color="#df1de3"/><stop offset="1" stop-color="#1e6cff"/></linearGradient>
<linearGradient id="g266" gradientUnits="userSpaceOnUse" x1="700.3" y1="328.3" x2="626.6" y2="496.9"><stop offset="0" stop-color="#1e6cff"/><stop offset="0.055" stop-color="#1e6cff"/><stop offset="0.08" stop-color="#08c0e4"/><stop offset="0.108" stop-color="#1efa64"/><stop offset="0.198" stop-color="#1efa64"/><stop offset="0.316" stop-color="#08c0e4"/><stop offset="0.386" stop-color="#1787f6"/><stop offset="0.664" stop-color="#1786f7"/><stop offset="0.719" stop-color="#08c0e4"/><stop offset="0.809" stop-color="#1efa64"/><stop offset="0.935" stop-color="#1efa64"/><stop offset="0.97" stop-color="#08c0e4"/><stop offset="1" stop-color="#1e6cff"/></linearGradient>
<linearGradient id="g267" gradientUnits="userSpaceOnUse" x1="496.9" y1="440.2" x2="482.8" y2="470.0"><stop offset="0" stop-color="#1e6cff"/><stop offset="0.279" stop-color="#1e6cff"/><stop offset="0.473" stop-color="#df1de3"/><stop offset="0.677" stop-color="#ff10de"/><stop offset="0.967" stop-color="#ff19b6"/><stop offset="1" stop-color="#ff3c14"/></linearGradient>
<linearGradient id="g268" gradientUnits="userSpaceOnUse" x1="461.3" y1="459.8" x2="451.5" y2="479.5"><stop offset="0" stop-color="#ff4016"/><stop offset="0.3" stop-color="#f63610"/><stop offset="0.58" stop-color="#c82609"/><stop offset="0.82" stop-color="#921a04"/><stop offset="1" stop-color="#681202"/></linearGradient>
<linearGradient id="g269" gradientUnits="userSpaceOnUse" x1="742.4" y1="314.2" x2="731.4" y2="341.0"><stop offset="0" stop-color="#ff3c14"/><stop offset="0.065" stop-color="#ff3c14"/><stop offset="0.123" stop-color="#ff19b6"/><stop offset="0.518" stop-color="#ff10de"/><stop offset="0.795" stop-color="#df1de3"/><stop offset="1" stop-color="#1e6cff"/></linearGradient>
<linearGradient id="g270" gradientUnits="userSpaceOnUse" x1="709.7" y1="332.1" x2="635.5" y2="501.3"><stop offset="0" stop-color="#1e6cff"/><stop offset="0.054" stop-color="#1e6cff"/><stop offset="0.078" stop-color="#08c0e4"/><stop offset="0.105" stop-color="#1efa64"/><stop offset="0.193" stop-color="#1efa64"/><stop offset="0.311" stop-color="#08c0e4"/><stop offset="0.383" stop-color="#1785f7"/><stop offset="0.671" stop-color="#1884f7"/><stop offset="0.725" stop-color="#08c0e4"/><stop offset="0.81" stop-color="#1ef966"/><stop offset="0.935" stop-color="#1efa64"/><stop offset="0.97" stop-color="#08c0e4"/><stop offset="1" stop-color="#1e6cff"/></linearGradient>
<linearGradient id="g271" gradientUnits="userSpaceOnUse" x1="505.7" y1="444.4" x2="491.8" y2="474.0"><stop offset="0" stop-color="#1e6cff"/><stop offset="0.282" stop-color="#1e6cff"/><stop offset="0.479" stop-color="#df1de3"/><stop offset="0.681" stop-color="#ff10de"/><stop offset="0.969" stop-color="#ff19b6"/><stop offset="1" stop-color="#ff3c14"/></linearGradient>
<linearGradient id="g272" gradientUnits="userSpaceOnUse" x1="470.2" y1="463.9" x2="460.3" y2="483.8"><stop offset="0" stop-color="#ff4016"/><stop offset="0.3" stop-color="#f63610"/><stop offset="0.58" stop-color="#c82609"/><stop offset="0.82" stop-color="#921a04"/><stop offset="1" stop-color="#681202"/></linearGradient>
<linearGradient id="g273" gradientUnits="userSpaceOnUse" x1="751.7" y1="318.1" x2="740.6" y2="344.8"><stop offset="0" stop-color="#ff3c14"/><stop offset="0.067" stop-color="#ff3c14"/><stop offset="0.127" stop-color="#ff19b6"/><stop offset="0.521" stop-color="#ff10de"/><stop offset="0.796" stop-color="#df1de3"/><stop offset="1" stop-color="#1e6cff"/></linearGradient>
<linearGradient id="g274" gradientUnits="userSpaceOnUse" x1="719.1" y1="336.0" x2="644.4" y2="505.7"><stop offset="0" stop-color="#1e6cff"/><stop offset="0.052" stop-color="#1e6cff"/><stop offset="0.075" stop-color="#08c0e4"/><stop offset="0.102" stop-color="#1efa64"/><stop offset="0.189" stop-color="#1efa64"/><stop offset="0.306" stop-color="#08c0e4"/><stop offset="0.38" stop-color="#1883f8"/><stop offset="0.677" stop-color="#1883f8"/><stop offset="0.731" stop-color="#08c0e4"/><stop offset="0.812" stop-color="#1df76a"/><stop offset="0.935" stop-color="#1efa64"/><stop offset="0.969" stop-color="#08c0e4"/><stop offset="1" stop-color="#1e6cff"/></linearGradient>
<linearGradient id="g275" gradientUnits="userSpaceOnUse" x1="514.5" y1="448.5" x2="500.8" y2="478.1"><stop offset="0" stop-color="#1e6cff"/><stop offset="0.286" stop-color="#1e6cff"/><stop offset="0.486" stop-color="#df1de3"/><stop offset="0.686" stop-color="#ff10de"/><stop offset="0.973" stop-color="#ff19b6"/><stop offset="1" stop-color="#ff3c14"/></linearGradient>
<linearGradient id="g276" gradientUnits="userSpaceOnUse" x1="479.1" y1="468.0" x2="469.2" y2="488.2"><stop offset="0" stop-color="#ff4016"/><stop offset="0.3" stop-color="#f63610"/><stop offset="0.58" stop-color="#c82609"/><stop offset="0.82" stop-color="#921a04"/><stop offset="1" stop-color="#681202"/></linearGradient>
<linearGradient id="g277" gradientUnits="userSpaceOnUse" x1="760.9" y1="322.0" x2="749.7" y2="348.7"><stop offset="0" stop-color="#ff3c14"/><stop offset="0.069" stop-color="#ff3c14"/><stop offset="0.131" stop-color="#ff19b6"/><stop offset="0.523" stop-color="#ff10de"/><stop offset="0.797" stop-color="#df1de3"/><stop offset="1" stop-color="#1e6cff"/></linearGradient>
<linearGradient id="g278" gradientUnits="userSpaceOnUse" x1="728.5" y1="339.8" x2="653.2" y2="510.2"><stop offset="0" stop-color="#1e6cff"/><stop offset="0.049" stop-color="#1e6cff"/><stop offset="0.072" stop-color="#08c0e4"/><stop offset="0.098" stop-color="#1efa64"/><stop offset="0.185" stop-color="#1efa64"/><stop offset="0.301" stop-color="#08c0e4"/><stop offset="0.377" stop-color="#1881f8"/><stop offset="0.684" stop-color="#1882f8"/><stop offset="0.737" stop-color="#08c0e4"/><stop offset="0.813" stop-color="#1cf56e"/><stop offset="0.934" stop-color="#1efa64"/><stop offset="0.969" stop-color="#08c0e4"/><stop offset="1" stop-color="#1e6cff"/></linearGradient>
<linearGradient id="g279" gradientUnits="userSpaceOnUse" x1="523.3" y1="452.7" x2="509.7" y2="482.0"><stop offset="0" stop-color="#1e6cff"/><stop offset="0.29" stop-color="#1e6cff"/><stop offset="0.494" stop-color="#df1de3"/><stop offset="0.693" stop-color="#ff10de"/><stop offset="0.977" stop-color="#ff19b6"/><stop offset="1" stop-color="#ff3c14"/></linearGradient>
<linearGradient id="g280" gradientUnits="userSpaceOnUse" x1="488.1" y1="472.1" x2="478.1" y2="492.5"><stop offset="0" stop-color="#ff4016"/><stop offset="0.3" stop-color="#f63610"/><stop offset="0.58" stop-color="#c82609"/><stop offset="0.82" stop-color="#921a04"/><stop offset="1" stop-color="#681202"/></linearGradient>
<linearGradient id="g281" gradientUnits="userSpaceOnUse" x1="770.1" y1="326.0" x2="758.8" y2="352.6"><stop offset="0" stop-color="#ff3c14"/><stop offset="0.072" stop-color="#ff3c14"/><stop offset="0.135" stop-color="#ff19b6"/><stop offset="0.525" stop-color="#ff10de"/><stop offset="0.798" stop-color="#df1de3"/><stop offset="1" stop-color="#1e6cff"/></linearGradient>
<linearGradient id="g282" gradientUnits="userSpaceOnUse" x1="737.8" y1="343.7" x2="661.8" y2="514.6"><stop offset="0" stop-color="#1e6cff"/><stop offset="0.047" stop-color="#1e6cff"/><stop offset="0.069" stop-color="#08c0e4"/><stop offset="0.095" stop-color="#1efa64"/><stop offset="0.181" stop-color="#1efa64"/><stop offset="0.296" stop-color="#08c0e4"/><stop offset="0.374" stop-color="#197ff9"/><stop offset="0.691" stop-color="#1980f8"/><stop offset="0.744" stop-color="#08c0e4"/><stop offset="0.814" stop-color="#1bf373"/><stop offset="0.934" stop-color="#1efa64"/><stop offset="0.969" stop-color="#08c0e4"/><stop offset="1" stop-color="#1e6cff"/></linearGradient>
<linearGradient id="g283" gradientUnits="userSpaceOnUse" x1="532.1" y1="456.9" x2="518.6" y2="486.0"><stop offset="0" stop-color="#1e6cff"/><stop offset="0.295" stop-color="#1e6cff"/><stop offset="0.503" stop-color="#df1de3"/><stop offset="0.7" stop-color="#ff10de"/><stop offset="0.981" stop-color="#ff19b6"/><stop offset="1" stop-color="#ff3c14"/></linearGradient>
<linearGradient id="g284" gradientUnits="userSpaceOnUse" x1="497.1" y1="476.1" x2="487.0" y2="496.8"><stop offset="0" stop-color="#ff4016"/><stop offset="0.3" stop-color="#f63610"/><stop offset="0.58" stop-color="#c82609"/><stop offset="0.82" stop-color="#921a04"/><stop offset="1" stop-color="#681202"/></linearGradient>
<linearGradient id="g285" gradientUnits="userSpaceOnUse" x1="779.2" y1="329.9" x2="767.7" y2="356.5"><stop offset="0" stop-color="#ff3c14"/><stop offset="0.075" stop-color="#ff3c14"/><stop offset="0.138" stop-color="#ff19b6"/><stop offset="0.527" stop-color="#ff10de"/><stop offset="0.8" stop-color="#df1de3"/><stop offset="1" stop-color="#1e6cff"/></linearGradient>
<linearGradient id="g286" gradientUnits="userSpaceOnUse" x1="747.1" y1="347.6" x2="670.3" y2="519.0"><stop offset="0" stop-color="#1e6cff"/><stop offset="0.045" stop-color="#1e6cff"/><stop offset="0.066" stop-color="#08c0e4"/><stop offset="0.091" stop-color="#1efa64"/><stop offset="0.177" stop-color="#1efa64"/><stop offset="0.291" stop-color="#08c0e4"/><stop offset="0.37" stop-color="#197ef9"/><stop offset="0.698" stop-color="#197ff9"/><stop offset="0.75" stop-color="#08c0e4"/><stop offset="0.815" stop-color="#1bf178"/><stop offset="0.934" stop-color="#1efa64"/><stop offset="0.969" stop-color="#08c0e4"/><stop offset="1" stop-color="#1e6cff"/></linearGradient>
<linearGradient id="g287" gradientUnits="userSpaceOnUse" x1="540.9" y1="461.0" x2="527.5" y2="490.0"><stop offset="0" stop-color="#1e6cff"/><stop offset="0.3" stop-color="#1e6cff"/><stop offset="0.511" stop-color="#df1de3"/><stop offset="0.706" stop-color="#ff10de"/><stop offset="0.985" stop-color="#ff19b6"/><stop offset="1" stop-color="#ff3c14"/></linearGradient>
<linearGradient id="g288" gradientUnits="userSpaceOnUse" x1="506.1" y1="480.2" x2="496.0" y2="501.1"><stop offset="0" stop-color="#ff4016"/><stop offset="0.3" stop-color="#f63610"/><stop offset="0.58" stop-color="#c82609"/><stop offset="0.82" stop-color="#921a04"/><stop offset="1" stop-color="#681202"/></linearGradient>
<linearGradient id="g289" gradientUnits="userSpaceOnUse" x1="788.2" y1="334.0" x2="776.6" y2="360.5"><stop offset="0" stop-color="#ff3c14"/><stop offset="0.078" stop-color="#ff3c14"/><stop offset="0.142" stop-color="#ff19b6"/><stop offset="0.53" stop-color="#ff10de"/><stop offset="0.801" stop-color="#df1de3"/><stop offset="1" stop-color="#1e6cff"/></linearGradient>
<linearGradient id="g290" gradientUnits="userSpaceOnUse" x1="756.2" y1="351.6" x2="678.6" y2="523.4"><stop offset="0" stop-color="#1e6cff"/><stop offset="0.043" stop-color="#1e6cff"/><stop offset="0.063" stop-color="#08c0e4"/><stop offset="0.086" stop-color="#1efa64"/><stop offset="0.174" stop-color="#1efa64"/><stop offset="0.285" stop-color="#08c0e4"/><stop offset="0.365" stop-color="#1a7cfa"/><stop offset="0.706" stop-color="#197ef9"/><stop offset="0.756" stop-color="#08c0e4"/><stop offset="0.815" stop-color="#1aef7d"/><stop offset="0.934" stop-color="#1efa64"/><stop offset="0.969" stop-color="#08c0e4"/><stop offset="1" stop-color="#1e6cff"/></linearGradient>
<linearGradient id="g291" gradientUnits="userSpaceOnUse" x1="549.7" y1="465.2" x2="536.3" y2="494.1"><stop offset="0" stop-color="#1e6cff"/><stop offset="0.304" stop-color="#1e6cff"/><stop offset="0.519" stop-color="#df1de3"/><stop offset="0.712" stop-color="#ff10de"/><stop offset="0.987" stop-color="#ff19b6"/><stop offset="1" stop-color="#ff3c14"/></linearGradient>
<linearGradient id="g292" gradientUnits="userSpaceOnUse" x1="515.0" y1="484.2" x2="504.9" y2="505.4"><stop offset="0" stop-color="#ff4016"/><stop offset="0.3" stop-color="#f63610"/><stop offset="0.58" stop-color="#c82609"/><stop offset="0.82" stop-color="#921a04"/><stop offset="1" stop-color="#681202"/></linearGradient>
<linearGradient id="g293" gradientUnits="userSpaceOnUse" x1="797.2" y1="338.0" x2="785.3" y2="364.6"><stop offset="0" stop-color="#ff3c14"/><stop offset="0.081" stop-color="#ff3c14"/><stop offset="0.144" stop-color="#ff19b6"/><stop offset="0.532" stop-color="#ff10de"/><stop offset="0.804" stop-color="#df1de3"/><stop offset="1" stop-color="#1e6cff"/></linearGradient>
<linearGradient id="g294" gradientUnits="userSpaceOnUse" x1="765.3" y1="355.6" x2="686.4" y2="527.8"><stop offset="0" stop-color="#1e6cff"/><stop offset="0.041" stop-color="#1e6cff"/><stop offset="0.06" stop-color="#08c0e4"/><stop offset="0.082" stop-color="#1efa64"/><stop offset="0.17" stop-color="#1efa64"/><stop offset="0.279" stop-color="#08c0e4"/><stop offset="0.359" stop-color="#1a7afb"/><stop offset="0.713" stop-color="#1a7cfa"/><stop offset="0.762" stop-color="#08c0e4"/><stop offset="0.816" stop-color="#19ec82"/><stop offset="0.933" stop-color="#1efa64"/><stop offset="0.969" stop-color="#08c0e4"/><stop offset="1" stop-color="#1e6cff"/></linearGradient>
<linearGradient id="g295" gradientUnits="userSpaceOnUse" x1="558.6" y1="469.3" x2="545.1" y2="498.2"><stop offset="0" stop-color="#1e6cff"/><stop offset="0.307" stop-color="#1e6cff"/><stop offset="0.526" stop-color="#df1de3"/><stop offset="0.715" stop-color="#ff10de"/><stop offset="0.987" stop-color="#ff19b6"/><stop offset="1" stop-color="#ff3c14"/></linearGradient>
<linearGradient id="g296" gradientUnits="userSpaceOnUse" x1="523.9" y1="488.3" x2="513.8" y2="509.6"><stop offset="0" stop-color="#ff4016"/><stop offset="0.3" stop-color="#f63610"/><stop offset="0.58" stop-color="#c82609"/><stop offset="0.82" stop-color="#921a04"/><stop offset="1" stop-color="#681202"/></linearGradient>
<linearGradient id="g297" gradientUnits="userSpaceOnUse" x1="806.2" y1="342.1" x2="793.9" y2="368.7"><stop offset="0" stop-color="#ff3c14"/><stop offset="0.084" stop-color="#ff3c14"/><stop offset="0.147" stop-color="#ff19b6"/><stop offset="0.535" stop-color="#ff10de"/><stop offset="0.807" stop-color="#df1de3"/><stop offset="1" stop-color="#1e6cff"/></linearGradient>
<linearGradient id="g298" gradientUnits="userSpaceOnUse" x1="774.3" y1="359.7" x2="694.5" y2="532.2"><stop offset="0" stop-color="#1e6cff"/><stop offset="0.04" stop-color="#1e6cff"/><stop offset="0.057" stop-color="#08c0e4"/><stop offset="0.077" stop-color="#1efa64"/><stop offset="0.167" stop-color="#1efa64"/><stop offset="0.272" stop-color="#08c0e4"/><stop offset="0.35" stop-color="#1b78fb"/><stop offset="0.72" stop-color="#1a7bfa"/><stop offset="0.768" stop-color="#08c0e4"/><stop offset="0.817" stop-color="#18ea87"/><stop offset="0.933" stop-color="#1ef966"/><stop offset="0.968" stop-color="#08c0e4"/><stop offset="1" stop-color="#1e6cff"/></linearGradient>
<linearGradient id="g299" gradientUnits="userSpaceOnUse" x1="567.4" y1="473.4" x2="553.9" y2="502.4"><stop offset="0" stop-color="#1e6cff"/><stop offset="0.31" stop-color="#1e6cff"/><stop offset="0.531" stop-color="#df1de3"/><stop offset="0.717" stop-color="#ff10de"/><stop offset="0.983" stop-color="#ff19b6"/><stop offset="1" stop-color="#ff3c14"/></linearGradient>
<linearGradient id="g300" gradientUnits="userSpaceOnUse" x1="532.7" y1="492.5" x2="522.6" y2="513.8"><stop offset="0" stop-color="#ff4016"/><stop offset="0.3" stop-color="#f63610"/><stop offset="0.58" stop-color="#c82609"/><stop offset="0.82" stop-color="#921a04"/><stop offset="1" stop-color="#681202"/></linearGradient>
<linearGradient id="g301" gradientUnits="userSpaceOnUse" x1="815.1" y1="346.2" x2="802.5" y2="372.9"><stop offset="0" stop-color="#ff3c14"/><stop offset="0.086" stop-color="#ff3c14"/><stop offset="0.148" stop-color="#ff19b6"/><stop offset="0.537" stop-color="#ff10de"/><stop offset="0.809" stop-color="#df1de3"/><stop offset="1" stop-color="#1e6cff"/></linearGradient>
<linearGradient id="g302" gradientUnits="userSpaceOnUse" x1="783.1" y1="363.8" x2="703.1" y2="536.3"><stop offset="0" stop-color="#1e6cff"/><stop offset="0.038" stop-color="#1e6cff"/><stop offset="0.055" stop-color="#08c0e4"/><stop offset="0.073" stop-color="#1ef966"/><stop offset="0.164" stop-color="#1efa64"/><stop offset="0.263" stop-color="#08c0e4"/><stop offset="0.34" stop-color="#1b76fc"/><stop offset="0.728" stop-color="#1a7afb"/><stop offset="0.774" stop-color="#08c0e4"/><stop offset="0.817" stop-color="#17e88c"/><stop offset="0.932" stop-color="#1df76b"/><stop offset="0.967" stop-color="#08c0e4"/><stop offset="1" stop-color="#1e6cff"/></linearGradient>
<linearGradient id="g303" gradientUnits="userSpaceOnUse" x1="576.4" y1="477.5" x2="562.8" y2="506.6"><stop offset="0" stop-color="#1e6cff"/><stop offset="0.311" stop-color="#1e6cff"/><stop offset="0.534" stop-color="#df1de3"/><stop offset="0.717" stop-color="#ff10de"/><stop offset="0.978" stop-color="#ff19b6"/><stop offset="1" stop-color="#ff3c14"/></linearGradient>
<linearGradient id="g304" gradientUnits="userSpaceOnUse" x1="541.5" y1="496.7" x2="531.4" y2="517.9"><stop offset="0" stop-color="#ff4016"/><stop offset="0.3" stop-color="#f63610"/><stop offset="0.58" stop-color="#c82609"/><stop offset="0.82" stop-color="#921a04"/><stop offset="1" stop-color="#681202"/></linearGradient>
<linearGradient id="g305" gradientUnits="userSpaceOnUse" x1="823.9" y1="350.3" x2="811.1" y2="377.2"><stop offset="0" stop-color="#ff3c14"/><stop offset="0.088" stop-color="#ff3c14"/><stop offset="0.149" stop-color="#ff19b6"/><stop offset="0.538" stop-color="#ff10de"/><stop offset="0.811" stop-color="#df1de3"/><stop offset="1" stop-color="#1e6cff"/></linearGradient>
<linearGradient id="g306" gradientUnits="userSpaceOnUse" x1="791.9" y1="368.0" x2="712.7" y2="540.1"><stop offset="0" stop-color="#1e6cff"/><stop offset="0.037" stop-color="#1e6cff"/><stop offset="0.052" stop-color="#08c0e4"/><stop offset="0.069" stop-color="#1df869"/><stop offset="0.16" stop-color="#1efa64"/><stop offset="0.254" stop-color="#08c0e4"/><stop offset="0.328" stop-color="#1c75fc"/><stop offset="0.735" stop-color="#1b78fb"/><stop offset="0.779" stop-color="#08c0e4"/><stop offset="0.817" stop-color="#16e591"/><stop offset="0.93" stop-color="#1bf275"/><stop offset="0.965" stop-color="#08c0e4"/><stop offset="1" stop-color="#1e6cff"/></linearGradient>
<linearGradient id="g307" gradientUnits="userSpaceOnUse" x1="585.4" y1="481.5" x2="571.9" y2="510.8"><stop offset="0" stop-color="#1e6cff"/><stop offset="0.313" stop-color="#1e6cff"/><stop offset="0.537" stop-color="#df1de3"/><stop offset="0.716" stop-color="#ff10de"/><stop offset="0.973" stop-color="#ff19b6"/><stop offset="1" stop-color="#ff3c14"/></linearGradient>
<linearGradient id="g308" gradientUnits="userSpaceOnUse" x1="550.2" y1="500.9" x2="540.3" y2="522.0"><stop offset="0" stop-color="#ff4016"/><stop offset="0.3" stop-color="#f63610"/><stop offset="0.58" stop-color="#c82609"/><stop offset="0.82" stop-color="#921a04"/><stop offset="1" stop-color="#681202"/></linearGradient>
<linearGradient id="g309" gradientUnits="userSpaceOnUse" x1="832.7" y1="354.5" x2="819.8" y2="381.4"><stop offset="0" stop-color="#ff3c14"/><stop offset="0.09" stop-color="#ff3c14"/><stop offset="0.15" stop-color="#ff19b6"/><stop offset="0.539" stop-color="#ff10de"/><stop offset="0.811" stop-color="#df1de3"/><stop offset="1" stop-color="#1e6cff"/></linearGradient>
<linearGradient id="g310" gradientUnits="userSpaceOnUse" x1="800.6" y1="372.2" x2="723.3" y2="543.6"><stop offset="0" stop-color="#1e6cff"/><stop offset="0.036" stop-color="#1e6cff"/><stop offset="0.05" stop-color="#08c0e4"/><stop offset="0.066" stop-color="#1df66c"/><stop offset="0.156" stop-color="#1ef967"/><stop offset="0.243" stop-color="#08c0e4"/><stop offset="0.314" stop-color="#1c74fc"/><stop offset="0.744" stop-color="#1b77fb"/><stop offset="0.786" stop-color="#08c0e4"/><stop offset="0.819" stop-color="#15e397"/><stop offset="0.928" stop-color="#19ec83"/><stop offset="0.961" stop-color="#08c0e4"/><stop offset="1" stop-color="#1e6cff"/></linearGradient>
<linearGradient id="g311" gradientUnits="userSpaceOnUse" x1="594.6" y1="485.5" x2="581.4" y2="515.0"><stop offset="0" stop-color="#1e6cff"/><stop offset="0.315" stop-color="#1e6cff"/><stop offset="0.54" stop-color="#df1de3"/><stop offset="0.716" stop-color="#ff10de"/><stop offset="0.968" stop-color="#ff19b6"/><stop offset="1" stop-color="#ff3c14"/></linearGradient>
<linearGradient id="g312" gradientUnits="userSpaceOnUse" x1="559.0" y1="505.0" x2="549.2" y2="526.2"><stop offset="0" stop-color="#ff4016"/><stop offset="0.3" stop-color="#f63610"/><stop offset="0.58" stop-color="#c82609"/><stop offset="0.82" stop-color="#921a04"/><stop offset="1" stop-color="#681202"/></linearGradient>
<linearGradient id="g313" gradientUnits="userSpaceOnUse" x1="841.4" y1="358.7" x2="828.4" y2="385.6"><stop offset="0" stop-color="#ff3c14"/><stop offset="0.091" stop-color="#ff3c14"/><stop offset="0.151" stop-color="#ff19b6"/><stop offset="0.536" stop-color="#ff10de"/><stop offset="0.811" stop-color="#df1de3"/><stop offset="1" stop-color="#1e6cff"/></linearGradient>
<linearGradient id="g314" gradientUnits="userSpaceOnUse" x1="809.3" y1="376.4" x2="733.7" y2="546.9"><stop offset="0" stop-color="#1e6cff"/><stop offset="0.035" stop-color="#1e6cff"/><stop offset="0.049" stop-color="#08c0e4"/><stop offset="0.063" stop-color="#1cf56f"/><stop offset="0.152" stop-color="#1df76a"/><stop offset="0.232" stop-color="#08c0e4"/><stop offset="0.299" stop-color="#1c72fd"/><stop offset="0.753" stop-color="#1b76fc"/><stop offset="0.794" stop-color="#08c0e4"/><stop offset="0.824" stop-color="#14e19b"/><stop offset="0.925" stop-color="#17e88c"/><stop offset="0.958" stop-color="#08c0e4"/><stop offset="1" stop-color="#1e6cff"/></linearGradient>
<linearGradient id="g315" gradientUnits="userSpaceOnUse" x1="603.9" y1="489.4" x2="591.0" y2="519.2"><stop offset="0" stop-color="#1e6cff"/><stop offset="0.316" stop-color="#1e6cff"/><stop offset="0.542" stop-color="#df1de3"/><stop offset="0.716" stop-color="#ff10de"/><stop offset="0.965" stop-color="#ff19b6"/><stop offset="1" stop-color="#ff3c14"/></linearGradient>
<linearGradient id="g316" gradientUnits="userSpaceOnUse" x1="567.9" y1="509.2" x2="558.1" y2="530.3"><stop offset="0" stop-color="#ff4016"/><stop offset="0.3" stop-color="#f63610"/><stop offset="0.58" stop-color="#c82609"/><stop offset="0.82" stop-color="#921a04"/><stop offset="1" stop-color="#681202"/></linearGradient>
<linearGradient id="g317" gradientUnits="userSpaceOnUse" x1="850.1" y1="362.9" x2="837.1" y2="389.8"><stop offset="0" stop-color="#ff3c14"/><stop offset="0.092" stop-color="#ff3c14"/><stop offset="0.153" stop-color="#ff16c3"/><stop offset="0.473" stop-color="#ff10de"/><stop offset="0.808" stop-color="#df1de3"/><stop offset="1" stop-color="#1e6cff"/></linearGradient>
<linearGradient id="g318" gradientUnits="userSpaceOnUse" x1="818.0" y1="380.6" x2="743.7" y2="550.2"><stop offset="0" stop-color="#1e6cff"/><stop offset="0.034" stop-color="#1e6cff"/><stop offset="0.047" stop-color="#08c0e4"/><stop offset="0.061" stop-color="#1cf373"/><stop offset="0.148" stop-color="#1df66d"/><stop offset="0.22" stop-color="#08c0e4"/><stop offset="0.285" stop-color="#1d71fd"/><stop offset="0.763" stop-color="#1c75fc"/><stop offset="0.807" stop-color="#08c0e4"/><stop offset="0.832" stop-color="#12daab"/><stop offset="0.923" stop-color="#16e494"/><stop offset="0.955" stop-color="#08c0e4"/><stop offset="1" stop-color="#1e6cff"/></linearGradient>
<linearGradient id="g319" gradientUnits="userSpaceOnUse" x1="613.4" y1="493.1" x2="600.7" y2="523.3"><stop offset="0" stop-color="#1e6cff"/><stop offset="0.314" stop-color="#1e6cff"/><stop offset="0.539" stop-color="#df1de3"/><stop offset="0.714" stop-color="#ff10de"/><stop offset="0.964" stop-color="#ff19b6"/><stop offset="1" stop-color="#ff3c14"/></linearGradient>
<linearGradient id="g320" gradientUnits="userSpaceOnUse" x1="576.8" y1="513.2" x2="567.1" y2="534.4"><stop offset="0" stop-color="#ff4016"/><stop offset="0.3" stop-color="#f63610"/><stop offset="0.58" stop-color="#c82609"/><stop offset="0.82" stop-color="#921a04"/><stop offset="1" stop-color="#681202"/></linearGradient>
<linearGradient id="g321" gradientUnits="userSpaceOnUse" x1="858.8" y1="367.2" x2="845.9" y2="394.0"><stop offset="0" stop-color="#ff3c14"/><stop offset="0.095" stop-color="#ff3c14"/><stop offset="0.156" stop-color="#ff13d1"/><stop offset="0.362" stop-color="#ff10de"/><stop offset="0.802" stop-color="#df1de3"/><stop offset="1" stop-color="#1e6cff"/></linearGradient>
<linearGradient id="g322" gradientUnits="userSpaceOnUse" x1="826.8" y1="384.8" x2="752.0" y2="554.0"><stop offset="0" stop-color="#1e6cff"/><stop offset="0.034" stop-color="#1e6cff"/><stop offset="0.047" stop-color="#08c0e4"/><stop offset="0.059" stop-color="#1bf178"/><stop offset="0.144" stop-color="#1cf570"/><stop offset="0.209" stop-color="#08c0e4"/><stop offset="0.27" stop-color="#1d70fe"/><stop offset="0.773" stop-color="#1c74fc"/><stop offset="0.822" stop-color="#08c0e4"/><stop offset="0.842" stop-color="#0fd3bb"/><stop offset="0.925" stop-color="#15e19a"/><stop offset="0.955" stop-color="#08c0e4"/><stop offset="1" stop-color="#1e6cff"/></linearGradient>
<linearGradient id="g323" gradientUnits="userSpaceOnUse" x1="622.8" y1="496.9" x2="610.0" y2="527.4"><stop offset="0" stop-color="#1e6cff"/><stop offset="0.307" stop-color="#1e6cff"/><stop offset="0.531" stop-color="#df1de3"/><stop offset="0.71" stop-color="#ff10de"/><stop offset="0.966" stop-color="#ff19b6"/><stop offset="1" stop-color="#ff3c14"/></linearGradient>
<linearGradient id="g324" gradientUnits="userSpaceOnUse" x1="586.0" y1="517.2" x2="576.2" y2="538.5"><stop offset="0" stop-color="#ff4016"/><stop offset="0.3" stop-color="#f63610"/><stop offset="0.58" stop-color="#c82609"/><stop offset="0.82" stop-color="#921a04"/><stop offset="1" stop-color="#681202"/></linearGradient>
<linearGradient id="g325" gradientUnits="userSpaceOnUse" x1="867.3" y1="371.5" x2="854.8" y2="398.0"><stop offset="0" stop-color="#ff3c14"/><stop offset="0.098" stop-color="#ff3c14"/><stop offset="0.16" stop-color="#ff10de"/><stop offset="0.161" stop-color="#fe11de"/><stop offset="0.791" stop-color="#dc1ee3"/><stop offset="1" stop-color="#1e6cff"/></linearGradient>
<linearGradient id="g326" gradientUnits="userSpaceOnUse" x1="835.6" y1="388.9" x2="758.7" y2="558.4"><stop offset="0" stop-color="#1e6cff"/><stop offset="0.034" stop-color="#1e6cff"/><stop offset="0.046" stop-color="#08c0e4"/><stop offset="0.058" stop-color="#19ee7f"/><stop offset="0.141" stop-color="#1bf373"/><stop offset="0.199" stop-color="#08c0e4"/><stop offset="0.255" stop-color="#1d6efe"/><stop offset="0.783" stop-color="#1c73fd"/><stop offset="0.838" stop-color="#08c0e4"/><stop offset="0.852" stop-color="#0cccca"/><stop offset="0.931" stop-color="#12dba9"/><stop offset="0.955" stop-color="#08c0e4"/><stop offset="1" stop-color="#1e6cff"/></linearGradient>
<linearGradient id="g327" gradientUnits="userSpaceOnUse" x1="632.0" y1="500.9" x2="618.7" y2="531.4"><stop offset="0" stop-color="#1e6cff"/><stop offset="0.294" stop-color="#1e6cff"/><stop offset="0.513" stop-color="#df1de3"/><stop offset="0.7" stop-color="#ff10de"/><stop offset="0.967" stop-color="#ff19b6"/><stop offset="1" stop-color="#ff3c14"/></linearGradient>
<linearGradient id="g328" gradientUnits="userSpaceOnUse" x1="595.1" y1="521.2" x2="585.4" y2="542.6"><stop offset="0" stop-color="#ff4016"/><stop offset="0.3" stop-color="#f63610"/><stop offset="0.58" stop-color="#c82609"/><stop offset="0.82" stop-color="#921a04"/><stop offset="1" stop-color="#681202"/></linearGradient>
<linearGradient id="g329" gradientUnits="userSpaceOnUse" x1="875.9" y1="375.8" x2="863.4" y2="402.0"><stop offset="0" stop-color="#ff3c14"/><stop offset="0.104" stop-color="#ff3c14"/><stop offset="0.163" stop-color="#ff10de"/><stop offset="0.168" stop-color="#ed17e1"/><stop offset="0.774" stop-color="#d720e4"/><stop offset="1" stop-color="#1e6cff"/></linearGradient>
<linearGradient id="g330" gradientUnits="userSpaceOnUse" x1="844.5" y1="393.0" x2="763.7" y2="563.3"><stop offset="0" stop-color="#1e6cff"/><stop offset="0.034" stop-color="#1e6cff"/><stop offset="0.046" stop-color="#08c0e4"/><stop offset="0.057" stop-color="#18ea86"/><stop offset="0.138" stop-color="#1af079"/><stop offset="0.189" stop-color="#08c0e4"/><stop offset="0.242" stop-color="#1e6dff"/><stop offset="0.792" stop-color="#1c72fd"/><stop offset="0.854" stop-color="#08c0e4"/><stop offset="0.86" stop-color="#0ac5d9"/><stop offset="0.937" stop-color="#0fd3ba"/><stop offset="0.954" stop-color="#08c0e4"/><stop offset="1" stop-color="#1e6cff"/></linearGradient>
<linearGradient id="g331" gradientUnits="userSpaceOnUse" x1="640.9" y1="505.0" x2="627.1" y2="535.4"><stop offset="0" stop-color="#1e6cff"/><stop offset="0.279" stop-color="#1e6cff"/><stop offset="0.489" stop-color="#df1de3"/><stop offset="0.686" stop-color="#ff10de"/><stop offset="0.968" stop-color="#ff19b6"/><stop offset="1" stop-color="#ff3c14"/></linearGradient>
<linearGradient id="g332" gradientUnits="userSpaceOnUse" x1="604.4" y1="525.1" x2="594.6" y2="546.8"><stop offset="0" stop-color="#ff4016"/><stop offset="0.3" stop-color="#f63610"/><stop offset="0.58" stop-color="#c82609"/><stop offset="0.82" stop-color="#921a04"/><stop offset="1" stop-color="#681202"/></linearGradient>
<linearGradient id="g333" gradientUnits="userSpaceOnUse" x1="884.3" y1="380.1" x2="872.1" y2="405.9"><stop offset="0" stop-color="#ff3c14"/><stop offset="0.11" stop-color="#ff3c14"/><stop offset="0.167" stop-color="#ff10de"/><stop offset="0.175" stop-color="#dd1ee3"/><stop offset="0.749" stop-color="#d123e5"/><stop offset="1" stop-color="#1e6cff"/></linearGradient>
<linearGradient id="g334" gradientUnits="userSpaceOnUse" x1="853.5" y1="397.1" x2="769.7" y2="568.3"><stop offset="0" stop-color="#1e6cff"/><stop offset="0.034" stop-color="#1e6cff"/><stop offset="0.047" stop-color="#08c0e4"/><stop offset="0.056" stop-color="#17e78e"/><stop offset="0.134" stop-color="#19ed81"/><stop offset="0.179" stop-color="#08c0e4"/><stop offset="0.23" stop-color="#1e6cff"/><stop offset="0.8" stop-color="#1d71fd"/><stop offset="0.867" stop-color="#09bde5"/><stop offset="0.877" stop-color="#08c0e4"/><stop offset="0.942" stop-color="#0dccc9"/><stop offset="0.953" stop-color="#08c0e4"/><stop offset="1" stop-color="#1e6cff"/></linearGradient>
<linearGradient id="g335" gradientUnits="userSpaceOnUse" x1="649.3" y1="509.4" x2="635.4" y2="539.1"><stop offset="0" stop-color="#1e6cff"/><stop offset="0.266" stop-color="#1e6cff"/><stop offset="0.467" stop-color="#df1de3"/><stop offset="0.673" stop-color="#ff10de"/><stop offset="0.967" stop-color="#ff19b6"/><stop offset="1" stop-color="#ff3c14"/></linearGradient>
<linearGradient id="g336" gradientUnits="userSpaceOnUse" x1="613.7" y1="529.0" x2="603.9" y2="550.9"><stop offset="0" stop-color="#ff4016"/><stop offset="0.3" stop-color="#f63610"/><stop offset="0.58" stop-color="#c82609"/><stop offset="0.82" stop-color="#921a04"/><stop offset="1" stop-color="#681202"/></linearGradient>
<linearGradient id="g337" gradientUnits="userSpaceOnUse" x1="892.7" y1="384.5" x2="880.8" y2="409.8"><stop offset="0" stop-color="#ff3c14"/><stop offset="0.117" stop-color="#ff3c14"/><stop offset="0.171" stop-color="#ff10de"/><stop offset="0.183" stop-color="#ce24e5"/><stop offset="0.72" stop-color="#cb25e6"/><stop offset="1" stop-color="#1e6cff"/></linearGradient>
<linearGradient id="g338" gradientUnits="userSpaceOnUse" x1="862.5" y1="401.1" x2="777.0" y2="573.2"><stop offset="0" stop-color="#1e6cff"/><stop offset="0.034" stop-color="#1e6cff"/><stop offset="0.047" stop-color="#08c0e4"/><stop offset="0.057" stop-color="#16e495"/><stop offset="0.131" stop-color="#18e989"/><stop offset="0.17" stop-color="#08c0e4"/><stop offset="0.218" stop-color="#1e6cff"/><stop offset="0.807" stop-color="#1d70fe"/><stop offset="0.873" stop-color="#0cb2e8"/><stop offset="0.919" stop-color="#08c0e4"/><stop offset="0.947" stop-color="#0ac5d8"/><stop offset="0.952" stop-color="#08c0e4"/><stop offset="1" stop-color="#1e6cff"/></linearGradient>
<linearGradient id="g339" gradientUnits="userSpaceOnUse" x1="657.6" y1="513.8" x2="643.7" y2="542.8"><stop offset="0" stop-color="#1e6cff"/><stop offset="0.257" stop-color="#1e6cff"/><stop offset="0.456" stop-color="#df1de3"/><stop offset="0.667" stop-color="#ff10de"/><stop offset="0.964" stop-color="#ff19b6"/><stop offset="1" stop-color="#ff3c14"/></linearGradient>
<linearGradient id="g340" gradientUnits="userSpaceOnUse" x1="623.0" y1="532.8" x2="613.2" y2="555.0"><stop offset="0" stop-color="#ff4016"/><stop offset="0.3" stop-color="#f63610"/><stop offset="0.58" stop-color="#c82609"/><stop offset="0.82" stop-color="#921a04"/><stop offset="1" stop-color="#681202"/></linearGradient>
<linearGradient id="g341" gradientUnits="userSpaceOnUse" x1="901.1" y1="388.9" x2="889.8" y2="413.5"><stop offset="0" stop-color="#ff3c14"/><stop offset="0.125" stop-color="#ff3c14"/><stop offset="0.178" stop-color="#ff10de"/><stop offset="0.192" stop-color="#c229e7"/><stop offset="0.696" stop-color="#c528e6"/><stop offset="1" stop-color="#1e6cff"/></linearGradient>
<linearGradient id="g342" gradientUnits="userSpaceOnUse" x1="871.6" y1="405.1" x2="785.6" y2="578.0"><stop offset="0" stop-color="#1e6cff"/><stop offset="0.035" stop-color="#1e6cff"/><stop offset="0.049" stop-color="#08c0e4"/><stop offset="0.058" stop-color="#14e19c"/><stop offset="0.129" stop-color="#16e690"/><stop offset="0.162" stop-color="#08c0e4"/><stop offset="0.207" stop-color="#1e6cff"/><stop offset="0.813" stop-color="#1d6ffe"/><stop offset="0.878" stop-color="#0fa7ec"/><stop offset="0.951" stop-color="#09bee5"/><stop offset="1" stop-color="#1e6cff"/></linearGradient>
<linearGradient id="g343" gradientUnits="userSpaceOnUse" x1="665.7" y1="518.4" x2="651.9" y2="546.4"><stop offset="0" stop-color="#1e6cff"/><stop offset="0.248" stop-color="#1e6cff"/><stop offset="0.453" stop-color="#da1fe3"/><stop offset="0.681" stop-color="#ff10de"/><stop offset="0.961" stop-color="#ff19b6"/><stop offset="1" stop-color="#ff3c14"/></linearGradient>
<linearGradient id="g344" gradientUnits="userSpaceOnUse" x1="632.3" y1="536.7" x2="622.4" y2="559.0"><stop offset="0" stop-color="#ff4016"/><stop offset="0.3" stop-color="#f63610"/><stop offset="0.58" stop-color="#c82609"/><stop offset="0.82" stop-color="#921a04"/><stop offset="1" stop-color="#681202"/></linearGradient>
<linearGradient id="g345" gradientUnits="userSpaceOnUse" x1="909.4" y1="393.3" x2="898.8" y2="417.1"><stop offset="0" stop-color="#ff3c14"/><stop offset="0.133" stop-color="#ff3c14"/><stop offset="0.186" stop-color="#ff10de"/><stop offset="0.202" stop-color="#b72de9"/><stop offset="0.683" stop-color="#c02ae7"/><stop offset="1" stop-color="#1e6cff"/></linearGradient>
<linearGradient id="g346" gradientUnits="userSpaceOnUse" x1="880.9" y1="409.0" x2="795.2" y2="582.9"><stop offset="0" stop-color="#1e6cff"/><stop offset="0.037" stop-color="#1e6cff"/><stop offset="0.052" stop-color="#08c0e4"/><stop offset="0.06" stop-color="#12dba8"/><stop offset="0.127" stop-color="#15e398"/><stop offset="0.156" stop-color="#08c0e4"/><stop offset="0.197" stop-color="#1e6cff"/><stop offset="0.818" stop-color="#1e6dff"/><stop offset="0.882" stop-color="#119fef"/><stop offset="0.954" stop-color="#0cb2e8"/><stop offset="1" stop-color="#1e6cff"/></linearGradient>
<linearGradient id="g347" gradientUnits="userSpaceOnUse" x1="673.6" y1="523.0" x2="660.1" y2="549.9"><stop offset="0" stop-color="#1e6cff"/><stop offset="0.24" stop-color="#1e6cff"/><stop offset="0.455" stop-color="#d621e4"/><stop offset="0.706" stop-color="#ff10de"/><stop offset="0.959" stop-color="#ff18b9"/><stop offset="1" stop-color="#ff3c14"/></linearGradient>
<linearGradient id="g348" gradientUnits="userSpaceOnUse" x1="641.6" y1="540.6" x2="631.7" y2="563.1"><stop offset="0" stop-color="#ff4016"/><stop offset="0.3" stop-color="#f63610"/><stop offset="0.58" stop-color="#c82609"/><stop offset="0.82" stop-color="#921a04"/><stop offset="1" stop-color="#681202"/></linearGradient>
<linearGradient id="g349" gradientUnits="userSpaceOnUse" x1="917.6" y1="397.8" x2="907.8" y2="420.4"><stop offset="0" stop-color="#ff3c14"/><stop offset="0.144" stop-color="#ff3c14"/><stop offset="0.195" stop-color="#ff10de"/><stop offset="0.214" stop-color="#ad32ea"/><stop offset="0.679" stop-color="#b52ee9"/><stop offset="1" stop-color="#1e6cff"/></linearGradient>
<linearGradient id="g350" gradientUnits="userSpaceOnUse" x1="890.3" y1="412.8" x2="806.0" y2="587.8"><stop offset="0" stop-color="#1e6cff"/><stop offset="0.04" stop-color="#1e6cff"/><stop offset="0.056" stop-color="#08c0e4"/><stop offset="0.064" stop-color="#10d6b4"/><stop offset="0.127" stop-color="#13dea1"/><stop offset="0.15" stop-color="#08c0e4"/><stop offset="0.19" stop-color="#1e6cff"/><stop offset="0.823" stop-color="#1e6cff"/><stop offset="0.886" stop-color="#1397f1"/><stop offset="0.955" stop-color="#0fa7ec"/><stop offset="1" stop-color="#1e6cff"/></linearGradient>
<linearGradient id="g351" gradientUnits="userSpaceOnUse" x1="681.4" y1="527.7" x2="668.4" y2="553.5"><stop offset="0" stop-color="#1e6cff"/><stop offset="0.234" stop-color="#1e6cff"/><stop offset="0.462" stop-color="#d123e5"/><stop offset="0.786" stop-color="#ff10de"/><stop offset="0.957" stop-color="#ff15c8"/><stop offset="1" stop-color="#ff3c14"/></linearGradient>
<linearGradient id="g352" gradientUnits="userSpaceOnUse" x1="650.8" y1="544.6" x2="640.9" y2="567.1"><stop offset="0" stop-color="#ff4016"/><stop offset="0.3" stop-color="#f63610"/><stop offset="0.58" stop-color="#c82609"/><stop offset="0.82" stop-color="#921a04"/><stop offset="1" stop-color="#681202"/></linearGradient>
<linearGradient id="g353" gradientUnits="userSpaceOnUse" x1="925.8" y1="402.3" x2="917.1" y2="423.4"><stop offset="0" stop-color="#ff3c14"/><stop offset="0.156" stop-color="#ff3c14"/><stop offset="0.208" stop-color="#ff10de"/><stop offset="0.229" stop-color="#a236ec"/><stop offset="0.685" stop-color="#ab32ea"/><stop offset="1" stop-color="#1e6cff"/></linearGradient>
<linearGradient id="g354" gradientUnits="userSpaceOnUse" x1="900.1" y1="416.4" x2="818.6" y2="592.3"><stop offset="0" stop-color="#1e6cff"/><stop offset="0.044" stop-color="#1e6cff"/><stop offset="0.063" stop-color="#08c0e4"/><stop offset="0.069" stop-color="#0ed0c0"/><stop offset="0.129" stop-color="#11d8ae"/><stop offset="0.147" stop-color="#08c0e4"/><stop offset="0.184" stop-color="#1e6cff"/><stop offset="0.828" stop-color="#1e6cff"/><stop offset="0.89" stop-color="#1590f3"/><stop offset="0.956" stop-color="#119eef"/><stop offset="1" stop-color="#1e6cff"/></linearGradient>
<linearGradient id="g355" gradientUnits="userSpaceOnUse" x1="689.3" y1="532.4" x2="676.8" y2="557.0"><stop offset="0" stop-color="#1e6cff"/><stop offset="0.229" stop-color="#1e6cff"/><stop offset="0.472" stop-color="#cc25e5"/><stop offset="0.901" stop-color="#ff10de"/><stop offset="0.955" stop-color="#ff11d8"/><stop offset="1" stop-color="#ff3c14"/></linearGradient>
<linearGradient id="g356" gradientUnits="userSpaceOnUse" x1="660.0" y1="548.5" x2="650.2" y2="571.1"><stop offset="0" stop-color="#ff4016"/><stop offset="0.3" stop-color="#f63610"/><stop offset="0.58" stop-color="#c82609"/><stop offset="0.82" stop-color="#921a04"/><stop offset="1" stop-color="#681202"/></linearGradient>
<linearGradient id="g357" gradientUnits="userSpaceOnUse" x1="933.9" y1="406.8" x2="926.1" y2="426.3"><stop offset="0" stop-color="#ff3c14"/><stop offset="0.171" stop-color="#ff3c14"/><stop offset="0.224" stop-color="#ff10de"/><stop offset="0.248" stop-color="#983aed"/><stop offset="0.702" stop-color="#a137ec"/><stop offset="1" stop-color="#1e6cff"/></linearGradient>
<linearGradient id="g358" gradientUnits="userSpaceOnUse" x1="910.2" y1="419.9" x2="830.4" y2="597.1"><stop offset="0" stop-color="#1e6cff"/><stop offset="0.05" stop-color="#1e6cff"/><stop offset="0.071" stop-color="#08c0e4"/><stop offset="0.075" stop-color="#0ccbcc"/><stop offset="0.132" stop-color="#0fd3bb"/><stop offset="0.145" stop-color="#08c0e4"/><stop offset="0.181" stop-color="#1e6cff"/><stop offset="0.834" stop-color="#1e6cff"/><stop offset="0.894" stop-color="#1788f6"/><stop offset="0.957" stop-color="#1396f1"/><stop offset="1" stop-color="#1e6cff"/></linearGradient>
<linearGradient id="g359" gradientUnits="userSpaceOnUse" x1="697.1" y1="537.1" x2="685.2" y2="560.5"><stop offset="0" stop-color="#1e6cff"/><stop offset="0.228" stop-color="#1e6cff"/><stop offset="0.485" stop-color="#c727e6"/><stop offset="0.952" stop-color="#f315e0"/><stop offset="0.955" stop-color="#ff10de"/><stop offset="1" stop-color="#ff3c14"/></linearGradient>
<linearGradient id="g360" gradientUnits="userSpaceOnUse" x1="669.2" y1="552.4" x2="659.4" y2="575.1"><stop offset="0" stop-color="#ff4016"/><stop offset="0.3" stop-color="#f63610"/><stop offset="0.58" stop-color="#c82609"/><stop offset="0.82" stop-color="#921a04"/><stop offset="1" stop-color="#681202"/></linearGradient>
<linearGradient id="g361" gradientUnits="userSpaceOnUse" x1="942.0" y1="411.4" x2="934.9" y2="429.1"><stop offset="0" stop-color="#ff3c14"/><stop offset="0.188" stop-color="#ff3c14"/><stop offset="0.243" stop-color="#ff10de"/><stop offset="0.271" stop-color="#8e3eef"/><stop offset="0.728" stop-color="#973bed"/><stop offset="1" stop-color="#1e6cff"/></linearGradient>
<linearGradient id="g362" gradientUnits="userSpaceOnUse" x1="920.4" y1="423.3" x2="839.5" y2="602.5"><stop offset="0" stop-color="#1e6cff"/><stop offset="0.056" stop-color="#1e6cff"/><stop offset="0.08" stop-color="#08c0e4"/><stop offset="0.082" stop-color="#0ac5d9"/><stop offset="0.136" stop-color="#0dcdc8"/><stop offset="0.145" stop-color="#08c0e4"/><stop offset="0.179" stop-color="#1e6cff"/><stop offset="0.839" stop-color="#1e6cff"/><stop offset="0.898" stop-color="#1980f9"/><stop offset="0.957" stop-color="#158ef4"/><stop offset="1" stop-color="#1e6cff"/></linearGradient>
<linearGradient id="g363" gradientUnits="userSpaceOnUse" x1="704.9" y1="541.8" x2="693.5" y2="564.1"><stop offset="0" stop-color="#1e6cff"/><stop offset="0.227" stop-color="#1e6cff"/><stop offset="0.496" stop-color="#c329e7"/><stop offset="0.95" stop-color="#e11ce2"/><stop offset="0.956" stop-color="#ff10de"/><stop offset="1" stop-color="#ff3c14"/></linearGradient>
<linearGradient id="g364" gradientUnits="userSpaceOnUse" x1="678.4" y1="556.4" x2="668.6" y2="579.0"><stop offset="0" stop-color="#ff4016"/><stop offset="0.3" stop-color="#f63610"/><stop offset="0.58" stop-color="#c82609"/><stop offset="0.82" stop-color="#921a04"/><stop offset="1" stop-color="#681202"/></linearGradient>
<linearGradient id="g365" gradientUnits="userSpaceOnUse" x1="949.9" y1="416.0" x2="943.5" y2="431.9"><stop offset="0" stop-color="#ff3c14"/><stop offset="0.21" stop-color="#ff3c14"/><stop offset="0.267" stop-color="#ff10de"/><stop offset="0.299" stop-color="#8442f0"/><stop offset="0.76" stop-color="#8d3fef"/><stop offset="1" stop-color="#1e6cff"/></linearGradient>
<linearGradient id="g366" gradientUnits="userSpaceOnUse" x1="930.6" y1="426.7" x2="847.2" y2="608.3"><stop offset="0" stop-color="#1e6cff"/><stop offset="0.063" stop-color="#1e6cff"/><stop offset="0.089" stop-color="#08bfe4"/><stop offset="0.094" stop-color="#08c0e4"/><stop offset="0.139" stop-color="#0bc7d5"/><stop offset="0.144" stop-color="#08c0e4"/><stop offset="0.179" stop-color="#1e6cff"/><stop offset="0.844" stop-color="#1e6cff"/><stop offset="0.901" stop-color="#1b77fc"/><stop offset="0.956" stop-color="#1786f7"/><stop offset="1" stop-color="#1e6cff"/></linearGradient>
<linearGradient id="g367" gradientUnits="userSpaceOnUse" x1="712.6" y1="546.5" x2="701.8" y2="567.6"><stop offset="0" stop-color="#1e6cff"/><stop offset="0.229" stop-color="#1e6cff"/><stop offset="0.503" stop-color="#bb2ce8"/><stop offset="0.947" stop-color="#cf24e5"/><stop offset="0.956" stop-color="#ff10de"/><stop offset="1" stop-color="#ff3c14"/></linearGradient>
<linearGradient id="g368" gradientUnits="userSpaceOnUse" x1="687.6" y1="560.3" x2="677.9" y2="583.0"><stop offset="0" stop-color="#ff4016"/><stop offset="0.3" stop-color="#f63610"/><stop offset="0.58" stop-color="#c82609"/><stop offset="0.82" stop-color="#921a04"/><stop offset="1" stop-color="#681202"/></linearGradient>
<linearGradient id="g369" gradientUnits="userSpaceOnUse" x1="957.8" y1="420.7" x2="951.8" y2="434.9"><stop offset="0" stop-color="#ff3c14"/><stop offset="0.234" stop-color="#ff3c14"/><stop offset="0.296" stop-color="#ff10de"/><stop offset="0.332" stop-color="#7947f2"/><stop offset="0.796" stop-color="#8343f0"/><stop offset="1" stop-color="#1e6cff"/></linearGradient>
<linearGradient id="g370" gradientUnits="userSpaceOnUse" x1="940.6" y1="430.2" x2="853.2" y2="614.4"><stop offset="0" stop-color="#1e6cff"/><stop offset="0.069" stop-color="#1e6cff"/><stop offset="0.094" stop-color="#0bb5e8"/><stop offset="0.139" stop-color="#08c0e4"/><stop offset="0.142" stop-color="#08c0e3"/><stop offset="0.142" stop-color="#08c0e4"/><stop offset="0.179" stop-color="#1e6cff"/><stop offset="0.849" stop-color="#1e6cff"/><stop offset="0.956" stop-color="#1a7cfa"/><stop offset="1" stop-color="#1e6cff"/></linearGradient>
<linearGradient id="g371" gradientUnits="userSpaceOnUse" x1="720.3" y1="551.3" x2="710.1" y2="571.1"><stop offset="0" stop-color="#1e6cff"/><stop offset="0.235" stop-color="#1e6cff"/><stop offset="0.509" stop-color="#ae31ea"/><stop offset="0.944" stop-color="#be2be8"/><stop offset="0.956" stop-color="#ff10de"/><stop offset="1" stop-color="#ff3c14"/></linearGradient>
<linearGradient id="g372" gradientUnits="userSpaceOnUse" x1="696.8" y1="564.3" x2="687.1" y2="586.9"><stop offset="0" stop-color="#ff4016"/><stop offset="0.3" stop-color="#f63610"/><stop offset="0.58" stop-color="#c82609"/><stop offset="0.82" stop-color="#921a04"/><stop offset="1" stop-color="#681202"/></linearGradient>
<linearGradient id="g373" gradientUnits="userSpaceOnUse" x1="965.7" y1="425.4" x2="960.0" y2="438.1"><stop offset="0" stop-color="#ff3c14"/><stop offset="0.258" stop-color="#ff3c14"/><stop offset="0.323" stop-color="#ff10de"/><stop offset="0.365" stop-color="#6f4bf3"/><stop offset="0.827" stop-color="#7847f2"/><stop offset="1" stop-color="#1e6cff"/></linearGradient>
<linearGradient id="g374" gradientUnits="userSpaceOnUse" x1="950.4" y1="433.8" x2="857.8" y2="620.5"><stop offset="0" stop-color="#1e6cff"/><stop offset="0.073" stop-color="#1e6cff"/><stop offset="0.099" stop-color="#0eaaeb"/><stop offset="0.143" stop-color="#0bb6e7"/><stop offset="0.179" stop-color="#1e6cff"/><stop offset="0.853" stop-color="#1e6cff"/><stop offset="0.955" stop-color="#1d70fe"/><stop offset="1" stop-color="#1e6cff"/></linearGradient>
<linearGradient id="g375" gradientUnits="userSpaceOnUse" x1="728.0" y1="556.1" x2="718.3" y2="574.6"><stop offset="0" stop-color="#1e6cff"/><stop offset="0.243" stop-color="#1e6cff"/><stop offset="0.516" stop-color="#a137ec"/><stop offset="0.94" stop-color="#af31ea"/><stop offset="0.956" stop-color="#ff10de"/><stop offset="1" stop-color="#ff3c14"/></linearGradient>
<linearGradient id="g376" gradientUnits="userSpaceOnUse" x1="706.0" y1="568.2" x2="696.4" y2="590.8"><stop offset="0" stop-color="#ff4016"/><stop offset="0.3" stop-color="#f63610"/><stop offset="0.58" stop-color="#c82609"/><stop offset="0.82" stop-color="#921a04"/><stop offset="1" stop-color="#681202"/></linearGradient>
<linearGradient id="g377" gradientUnits="userSpaceOnUse" x1="973.5" y1="430.0" x2="968.3" y2="441.5"><stop offset="0" stop-color="#ff3c14"/><stop offset="0.279" stop-color="#ff3c14"/><stop offset="0.349" stop-color="#ff10de"/><stop offset="0.396" stop-color="#654ff5"/><stop offset="0.844" stop-color="#6d4cf3"/><stop offset="1" stop-color="#1e6cff"/></linearGradient>
<linearGradient id="g378" gradientUnits="userSpaceOnUse" x1="959.9" y1="437.6" x2="865.3" y2="626.0"><stop offset="0" stop-color="#1e6cff"/><stop offset="0.076" stop-color="#1e6cff"/><stop offset="0.103" stop-color="#119fef"/><stop offset="0.144" stop-color="#0dabeb"/><stop offset="0.179" stop-color="#1e6cff"/><stop offset="0.857" stop-color="#1e6cff"/><stop offset="1" stop-color="#1e6cff"/></linearGradient>
<linearGradient id="g379" gradientUnits="userSpaceOnUse" x1="735.6" y1="560.9" x2="726.6" y2="578.1"><stop offset="0" stop-color="#1e6cff"/><stop offset="0.253" stop-color="#1e6cff"/><stop offset="0.523" stop-color="#943cee"/><stop offset="0.936" stop-color="#a136ec"/><stop offset="0.955" stop-color="#ff10de"/><stop offset="1" stop-color="#ff3c14"/></linearGradient>
<linearGradient id="g380" gradientUnits="userSpaceOnUse" x1="715.2" y1="572.2" x2="705.6" y2="594.7"><stop offset="0" stop-color="#ff4016"/><stop offset="0.3" stop-color="#f63610"/><stop offset="0.58" stop-color="#c82609"/><stop offset="0.82" stop-color="#921a04"/><stop offset="1" stop-color="#681202"/></linearGradient>
<linearGradient id="g381" gradientUnits="userSpaceOnUse" x1="981.3" y1="434.8" x2="976.7" y2="444.8"><stop offset="0" stop-color="#ff3c14"/><stop offset="0.307" stop-color="#ff3c14"/><stop offset="0.381" stop-color="#ff10de"/><stop offset="0.435" stop-color="#5b53f6"/><stop offset="0.855" stop-color="#6250f5"/><stop offset="1" stop-color="#1e6cff"/></linearGradient>
<linearGradient id="g382" gradientUnits="userSpaceOnUse" x1="969.4" y1="441.4" x2="874.5" y2="635.2"><stop offset="0" stop-color="#1e6cff"/><stop offset="0.075" stop-color="#1e6cff"/><stop offset="0.102" stop-color="#1395f2"/><stop offset="0.141" stop-color="#119fee"/><stop offset="0.174" stop-color="#1e6cff"/><stop offset="0.842" stop-color="#1e6cff"/><stop offset="0.979" stop-color="#1e6cff"/><stop offset="1" stop-color="#1e6cff"/></linearGradient>
<linearGradient id="g383" gradientUnits="userSpaceOnUse" x1="738.2" y1="568.5" x2="732.3" y2="580.1"><stop offset="0" stop-color="#1e6cff"/><stop offset="0.363" stop-color="#8741f0"/><stop offset="0.908" stop-color="#933cee"/><stop offset="0.938" stop-color="#ff10de"/><stop offset="1" stop-color="#ff3c14"/></linearGradient>
<linearGradient id="g384" gradientUnits="userSpaceOnUse" x1="724.4" y1="576.1" x2="714.9" y2="598.6"><stop offset="0" stop-color="#ff4016"/><stop offset="0.3" stop-color="#f63610"/><stop offset="0.58" stop-color="#c82609"/><stop offset="0.82" stop-color="#921a04"/><stop offset="1" stop-color="#681202"/></linearGradient>
<linearGradient id="g385" gradientUnits="userSpaceOnUse" x1="989.1" y1="439.5" x2="985.0" y2="448.1"><stop offset="0" stop-color="#ff3c14"/><stop offset="0.347" stop-color="#ff3c14"/><stop offset="0.427" stop-color="#ff10de"/><stop offset="0.488" stop-color="#5157f8"/><stop offset="0.863" stop-color="#5655f7"/><stop offset="1" stop-color="#1e6cff"/></linearGradient>
<linearGradient id="g386" gradientUnits="userSpaceOnUse" x1="978.8" y1="445.2" x2="882.0" y2="640.5"><stop offset="0" stop-color="#1e6cff"/><stop offset="0.075" stop-color="#1e6cff"/><stop offset="0.101" stop-color="#168cf5"/><stop offset="0.139" stop-color="#1494f2"/><stop offset="0.174" stop-color="#1e6cff"/><stop offset="0.846" stop-color="#1e6cff"/><stop offset="1" stop-color="#1e6cff"/></linearGradient>
<linearGradient id="g387" gradientUnits="userSpaceOnUse" x1="746.1" y1="573.1" x2="740.8" y2="583.7"><stop offset="0" stop-color="#1e6cff"/><stop offset="0.365" stop-color="#7a46f1"/><stop offset="0.9" stop-color="#8542f0"/><stop offset="0.935" stop-color="#ff10de"/><stop offset="1" stop-color="#ff3c14"/></linearGradient>
<linearGradient id="g388" gradientUnits="userSpaceOnUse" x1="733.5" y1="580.1" x2="724.2" y2="602.4"><stop offset="0" stop-color="#ff4016"/><stop offset="0.3" stop-color="#f63610"/><stop offset="0.58" stop-color="#c82609"/><stop offset="0.82" stop-color="#921a04"/><stop offset="1" stop-color="#681202"/></linearGradient>
<linearGradient id="g389" gradientUnits="userSpaceOnUse" x1="996.8" y1="444.2" x2="993.0" y2="451.8"><stop offset="0" stop-color="#ff3c14"/><stop offset="0.405" stop-color="#ff3c14"/><stop offset="0.489" stop-color="#ff10de"/><stop offset="0.558" stop-color="#465bf9"/><stop offset="0.868" stop-color="#4b5af8"/><stop offset="1" stop-color="#1e6cff"/></linearGradient>
<linearGradient id="g390" gradientUnits="userSpaceOnUse" x1="987.9" y1="449.2" x2="888.0" y2="645.7"><stop offset="0" stop-color="#1e6cff"/><stop offset="0.073" stop-color="#1e6cff"/><stop offset="0.097" stop-color="#1786f7"/><stop offset="0.133" stop-color="#168bf5"/><stop offset="0.172" stop-color="#1e6cff"/><stop offset="0.85" stop-color="#1e6cff"/><stop offset="1" stop-color="#1e6cff"/></linearGradient>
<linearGradient id="g391" gradientUnits="userSpaceOnUse" x1="754.1" y1="577.7" x2="749.4" y2="587.3"><stop offset="0" stop-color="#1e6cff"/><stop offset="0.369" stop-color="#6d4cf3"/><stop offset="0.891" stop-color="#7748f2"/><stop offset="0.932" stop-color="#ff10de"/><stop offset="1" stop-color="#ff3c14"/></linearGradient>
<linearGradient id="g392" gradientUnits="userSpaceOnUse" x1="742.7" y1="584.0" x2="733.5" y2="606.2"><stop offset="0" stop-color="#ff4016"/><stop offset="0.3" stop-color="#f63610"/><stop offset="0.58" stop-color="#c82609"/><stop offset="0.82" stop-color="#921a04"/><stop offset="1" stop-color="#681202"/></linearGradient>
<linearGradient id="g393" gradientUnits="userSpaceOnUse" x1="1004.5" y1="449.0" x2="1000.7" y2="455.8"><stop offset="0" stop-color="#ff3c14"/><stop offset="0.481" stop-color="#ff3c14"/><stop offset="0.565" stop-color="#ff10de"/><stop offset="0.638" stop-color="#3c60fb"/><stop offset="0.871" stop-color="#3f5ffa"/><stop offset="1" stop-color="#1e6cff"/></linearGradient>
<linearGradient id="g394" gradientUnits="userSpaceOnUse" x1="996.5" y1="453.4" x2="889.0" y2="651.1"><stop offset="0" stop-color="#1e6cff"/><stop offset="0.068" stop-color="#1e6cff"/><stop offset="0.091" stop-color="#197ff9"/><stop offset="0.123" stop-color="#1884f7"/><stop offset="0.169" stop-color="#1e6cff"/><stop offset="0.854" stop-color="#1e6cff"/><stop offset="1" stop-color="#1e6cff"/></linearGradient>
<linearGradient id="g395" gradientUnits="userSpaceOnUse" x1="762.3" y1="582.2" x2="758.1" y2="590.9"><stop offset="0" stop-color="#1e6cff"/><stop offset="0.375" stop-color="#6051f5"/><stop offset="0.881" stop-color="#684ef4"/><stop offset="0.929" stop-color="#ff10de"/><stop offset="1" stop-color="#ff3c14"/></linearGradient>
<linearGradient id="g396" gradientUnits="userSpaceOnUse" x1="751.9" y1="587.9" x2="742.9" y2="610.0"><stop offset="0" stop-color="#ff4016"/><stop offset="0.3" stop-color="#f63610"/><stop offset="0.58" stop-color="#c82609"/><stop offset="0.82" stop-color="#921a04"/><stop offset="1" stop-color="#681202"/></linearGradient>
<linearGradient id="g397" gradientUnits="userSpaceOnUse" x1="1012.1" y1="453.8" x2="1007.6" y2="460.4"><stop offset="0" stop-color="#ff3c14"/><stop offset="0.553" stop-color="#ff3c14"/><stop offset="0.63" stop-color="#ff10de"/><stop offset="0.701" stop-color="#3164fc"/><stop offset="0.862" stop-color="#3364fc"/><stop offset="1" stop-color="#1e6cff"/></linearGradient>
<linearGradient id="g398" gradientUnits="userSpaceOnUse" x1="1004.3" y1="458.1" x2="880.6" y2="655.7"><stop offset="0" stop-color="#1e6cff"/><stop offset="0.059" stop-color="#1e6cff"/><stop offset="0.08" stop-color="#1b79fb"/><stop offset="0.108" stop-color="#1a7dfa"/><stop offset="0.161" stop-color="#1e6cff"/><stop offset="0.857" stop-color="#1e6cff"/><stop offset="1" stop-color="#1e6cff"/></linearGradient>
<linearGradient id="g399" gradientUnits="userSpaceOnUse" x1="770.5" y1="586.7" x2="766.7" y2="594.5"><stop offset="0" stop-color="#1e6cff"/><stop offset="0.378" stop-color="#5555f7"/><stop offset="0.868" stop-color="#5a53f6"/><stop offset="0.924" stop-color="#ff10de"/><stop offset="1" stop-color="#ff3c14"/></linearGradient>
<linearGradient id="g400" gradientUnits="userSpaceOnUse" x1="761.2" y1="591.9" x2="752.2" y2="613.8"><stop offset="0" stop-color="#ff4016"/><stop offset="0.3" stop-color="#f63610"/><stop offset="0.58" stop-color="#c82609"/><stop offset="0.82" stop-color="#921a04"/><stop offset="1" stop-color="#681202"/></linearGradient>
<linearGradient id="g401" gradientUnits="userSpaceOnUse" x1="1019.7" y1="458.7" x2="1013.0" y2="465.8"><stop offset="0" stop-color="#ff3c14"/><stop offset="0.57" stop-color="#ff3c14"/><stop offset="0.635" stop-color="#ff10de"/><stop offset="0.691" stop-color="#3b60fb"/><stop offset="0.817" stop-color="#3c60fb"/><stop offset="1" stop-color="#1e6cff"/></linearGradient>
<linearGradient id="g402" gradientUnits="userSpaceOnUse" x1="1010.7" y1="463.6" x2="860.6" y2="655.4"><stop offset="0" stop-color="#1e6cff"/><stop offset="0.064" stop-color="#1d71fd"/><stop offset="0.088" stop-color="#1c75fc"/><stop offset="0.145" stop-color="#1e6cff"/><stop offset="0.859" stop-color="#1e6cff"/><stop offset="1" stop-color="#1e6cff"/></linearGradient>
<linearGradient id="g403" gradientUnits="userSpaceOnUse" x1="778.6" y1="591.3" x2="775.3" y2="598.1"><stop offset="0" stop-color="#1e6cff"/><stop offset="0.383" stop-color="#4c59f8"/><stop offset="0.852" stop-color="#5057f8"/><stop offset="0.917" stop-color="#ff10de"/><stop offset="1" stop-color="#ff3c14"/></linearGradient>
<linearGradient id="g404" gradientUnits="userSpaceOnUse" x1="770.4" y1="595.8" x2="761.5" y2="617.6"><stop offset="0" stop-color="#ff4016"/><stop offset="0.3" stop-color="#f63610"/><stop offset="0.58" stop-color="#c82609"/><stop offset="0.82" stop-color="#921a04"/><stop offset="1" stop-color="#681202"/></linearGradient>
<linearGradient id="g405" gradientUnits="userSpaceOnUse" x1="1027.1" y1="463.6" x2="1016.0" y2="471.7"><stop offset="0" stop-color="#ff3c14"/><stop offset="0.516" stop-color="#ff3c14"/><stop offset="0.564" stop-color="#ff10de"/><stop offset="0.604" stop-color="#475bf9"/><stop offset="0.729" stop-color="#4d59f8"/><stop offset="1" stop-color="#1e6cff"/></linearGradient>
<linearGradient id="g406" gradientUnits="userSpaceOnUse" x1="1015.0" y1="470.3" x2="839.7" y2="647.9"><stop offset="0" stop-color="#1e6cff"/><stop offset="0.116" stop-color="#1e6cff"/><stop offset="0.859" stop-color="#1e6cff"/><stop offset="1" stop-color="#1e6cff"/></linearGradient>
<linearGradient id="g407" gradientUnits="userSpaceOnUse" x1="786.8" y1="595.7" x2="784.0" y2="601.8"><stop offset="0" stop-color="#1e6cff"/><stop offset="0.394" stop-color="#425dfa"/><stop offset="0.835" stop-color="#455cf9"/><stop offset="0.91" stop-color="#ff10de"/><stop offset="1" stop-color="#ff3c14"/></linearGradient>
<linearGradient id="g408" gradientUnits="userSpaceOnUse" x1="779.6" y1="599.7" x2="770.8" y2="621.4"><stop offset="0" stop-color="#ff4016"/><stop offset="0.3" stop-color="#f63610"/><stop offset="0.58" stop-color="#c82609"/><stop offset="0.82" stop-color="#921a04"/><stop offset="1" stop-color="#681202"/></linearGradient>
<linearGradient id="g409" gradientUnits="userSpaceOnUse" x1="1034.5" y1="468.5" x2="1017.8" y2="478.2"><stop offset="0" stop-color="#ff3c14"/><stop offset="0.45" stop-color="#ff3c14"/><stop offset="0.487" stop-color="#ff10de"/><stop offset="0.516" stop-color="#5356f7"/><stop offset="0.651" stop-color="#5e52f6"/><stop offset="1" stop-color="#1e6cff"/></linearGradient>
<linearGradient id="g410" gradientUnits="userSpaceOnUse" x1="1017.6" y1="477.8" x2="837.0" y2="645.0"><stop offset="0" stop-color="#1e6cff"/><stop offset="0.072" stop-color="#1e6cff"/><stop offset="0.859" stop-color="#1e6cff"/><stop offset="1" stop-color="#1e6cff"/></linearGradient>
<linearGradient id="g411" gradientUnits="userSpaceOnUse" x1="795.4" y1="600.0" x2="792.9" y2="605.5"><stop offset="0" stop-color="#1e6cff"/><stop offset="0.413" stop-color="#3862fb"/><stop offset="0.819" stop-color="#3b60fb"/><stop offset="0.903" stop-color="#ff10de"/><stop offset="1" stop-color="#ff3c14"/></linearGradient>
<linearGradient id="g412" gradientUnits="userSpaceOnUse" x1="788.9" y1="603.6" x2="780.1" y2="625.1"><stop offset="0" stop-color="#ff4016"/><stop offset="0.3" stop-color="#f63610"/><stop offset="0.58" stop-color="#c82609"/><stop offset="0.82" stop-color="#921a04"/><stop offset="1" stop-color="#681202"/></linearGradient>
<linearGradient id="g413" gradientUnits="userSpaceOnUse" x1="1041.8" y1="473.5" x2="1021.0" y2="487.1"><stop offset="0" stop-color="#ff3c14"/><stop offset="0.412" stop-color="#ff3c14"/><stop offset="0.444" stop-color="#ff10de"/><stop offset="0.466" stop-color="#6051f5"/><stop offset="0.612" stop-color="#6f4bf3"/><stop offset="1" stop-color="#1e6cff"/></linearGradient>
<linearGradient id="g414" gradientUnits="userSpaceOnUse" x1="1019.9" y1="485.5" x2="861.0" y2="656.7"><stop offset="0" stop-color="#1e6cff"/><stop offset="1" stop-color="#1e6cff"/></linearGradient>
<linearGradient id="g415" gradientUnits="userSpaceOnUse" x1="804.4" y1="604.1" x2="802.2" y2="609.2"><stop offset="0" stop-color="#1e6cff"/><stop offset="0.439" stop-color="#2e66fd"/><stop offset="0.811" stop-color="#3065fc"/><stop offset="0.901" stop-color="#ff10de"/><stop offset="1" stop-color="#ff3c14"/></linearGradient>
<linearGradient id="g416" gradientUnits="userSpaceOnUse" x1="798.1" y1="607.5" x2="789.5" y2="628.9"><stop offset="0" stop-color="#ff4016"/><stop offset="0.3" stop-color="#f63610"/><stop offset="0.58" stop-color="#c82609"/><stop offset="0.82" stop-color="#921a04"/><stop offset="1" stop-color="#681202"/></linearGradient>
<linearGradient id="g417" gradientUnits="userSpaceOnUse" x1="1049.0" y1="478.5" x2="1027.0" y2="496.7"><stop offset="0" stop-color="#ff3c14"/><stop offset="0.405" stop-color="#ff3c14"/><stop offset="0.434" stop-color="#ff10de"/><stop offset="0.453" stop-color="#6d4cf3"/><stop offset="0.612" stop-color="#8143f0"/><stop offset="1" stop-color="#1e6cff"/></linearGradient>
<linearGradient id="g418" gradientUnits="userSpaceOnUse" x1="1023.5" y1="492.6" x2="895.1" y2="667.4"><stop offset="0" stop-color="#1e6cff"/><stop offset="1" stop-color="#1e6cff"/></linearGradient>
<linearGradient id="g419" gradientUnits="userSpaceOnUse" x1="814.0" y1="607.8" x2="812.0" y2="613.1"><stop offset="0" stop-color="#1e6cff"/><stop offset="0.468" stop-color="#246afe"/><stop offset="0.815" stop-color="#2669fe"/><stop offset="0.906" stop-color="#ff10de"/><stop offset="1" stop-color="#ff3c14"/></linearGradient>
<linearGradient id="g420" gradientUnits="userSpaceOnUse" x1="807.4" y1="611.4" x2="798.9" y2="632.7"><stop offset="0" stop-color="#ff4016"/><stop offset="0.3" stop-color="#f63610"/><stop offset="0.58" stop-color="#c82609"/><stop offset="0.82" stop-color="#921a04"/><stop offset="1" stop-color="#681202"/></linearGradient>
<linearGradient id="g421" gradientUnits="userSpaceOnUse" x1="1056.2" y1="483.6" x2="1032.2" y2="504.4"><stop offset="0" stop-color="#ff3c14"/><stop offset="0.401" stop-color="#ff3c14"/><stop offset="0.428" stop-color="#ff10de"/><stop offset="0.444" stop-color="#7b46f1"/><stop offset="0.608" stop-color="#933cee"/><stop offset="1" stop-color="#1e6cff"/></linearGradient>
<linearGradient id="g422" gradientUnits="userSpaceOnUse" x1="1027.8" y1="499.2" x2="916.3" y2="670.8"><stop offset="0" stop-color="#1e6cff"/><stop offset="1" stop-color="#1e6cff"/></linearGradient>
<linearGradient id="g423" gradientUnits="userSpaceOnUse" x1="824.3" y1="611.1" x2="822.2" y2="617.2"><stop offset="0" stop-color="#1e6cff"/><stop offset="0.495" stop-color="#226afe"/><stop offset="0.834" stop-color="#1f6cff"/><stop offset="0.917" stop-color="#ff10de"/><stop offset="1" stop-color="#ff3c14"/></linearGradient>
<linearGradient id="g424" gradientUnits="userSpaceOnUse" x1="816.8" y1="615.3" x2="808.3" y2="636.4"><stop offset="0" stop-color="#ff4016"/><stop offset="0.3" stop-color="#f63610"/><stop offset="0.58" stop-color="#c82609"/><stop offset="0.82" stop-color="#921a04"/><stop offset="1" stop-color="#681202"/></linearGradient>
<linearGradient id="g425" gradientUnits="userSpaceOnUse" x1="1063.4" y1="488.6" x2="1037.4" y2="511.7"><stop offset="0" stop-color="#ff3c14"/><stop offset="0.392" stop-color="#ff3c14"/><stop offset="0.419" stop-color="#ff10de"/><stop offset="0.431" stop-color="#993aed"/><stop offset="0.605" stop-color="#a435eb"/><stop offset="1" stop-color="#1e6cff"/></linearGradient>
<linearGradient id="g426" gradientUnits="userSpaceOnUse" x1="1032.2" y1="505.8" x2="933.5" y2="672.3"><stop offset="0" stop-color="#1e6cff"/><stop offset="1" stop-color="#1e6cff"/></linearGradient>
<linearGradient id="g427" gradientUnits="userSpaceOnUse" x1="835.3" y1="614.1" x2="833.0" y2="621.3"><stop offset="0" stop-color="#1e6cff"/><stop offset="0.518" stop-color="#2c66fd"/><stop offset="0.865" stop-color="#2968fd"/><stop offset="0.931" stop-color="#ff10de"/><stop offset="1" stop-color="#ff3c14"/></linearGradient>
<linearGradient id="g428" gradientUnits="userSpaceOnUse" x1="826.2" y1="619.1" x2="817.8" y2="640.2"><stop offset="0" stop-color="#ff4016"/><stop offset="0.3" stop-color="#f63610"/><stop offset="0.58" stop-color="#c82609"/><stop offset="0.82" stop-color="#921a04"/><stop offset="1" stop-color="#681202"/></linearGradient>
<linearGradient id="g429" gradientUnits="userSpaceOnUse" x1="1070.6" y1="493.7" x2="1042.6" y2="518.8"><stop offset="0" stop-color="#ff3c14"/><stop offset="0.382" stop-color="#ff3c14"/><stop offset="0.409" stop-color="#ff10de"/><stop offset="0.418" stop-color="#b62ee9"/><stop offset="0.604" stop-color="#b62ee9"/><stop offset="1" stop-color="#1e6cff"/></linearGradient>
<linearGradient id="g430" gradientUnits="userSpaceOnUse" x1="1036.7" y1="512.3" x2="947.0" y2="672.8"><stop offset="0" stop-color="#1e6cff"/><stop offset="1" stop-color="#1e6cff"/></linearGradient>
<linearGradient id="g431" gradientUnits="userSpaceOnUse" x1="846.8" y1="616.7" x2="844.2" y2="625.5"><stop offset="0" stop-color="#1e6cff"/><stop offset="0.534" stop-color="#3662fc"/><stop offset="0.897" stop-color="#3264fc"/><stop offset="0.946" stop-color="#ff10de"/><stop offset="1" stop-color="#ff3c14"/></linearGradient>
<linearGradient id="g432" gradientUnits="userSpaceOnUse" x1="835.6" y1="622.9" x2="827.3" y2="643.9"><stop offset="0" stop-color="#ff4016"/><stop offset="0.3" stop-color="#f63610"/><stop offset="0.58" stop-color="#c82609"/><stop offset="0.82" stop-color="#921a04"/><stop offset="1" stop-color="#681202"/></linearGradient>
<linearGradient id="g433" gradientUnits="userSpaceOnUse" x1="1077.7" y1="498.8" x2="1047.8" y2="526.0"><stop offset="0" stop-color="#ff3c14"/><stop offset="0.372" stop-color="#ff3c14"/><stop offset="0.4" stop-color="#ff10de"/><stop offset="0.406" stop-color="#d322e4"/><stop offset="0.601" stop-color="#c826e6"/><stop offset="1" stop-color="#1e6cff"/></linearGradient>
<linearGradient id="g434" gradientUnits="userSpaceOnUse" x1="1041.3" y1="518.8" x2="959.0" y2="672.8"><stop offset="0" stop-color="#1e6cff"/><stop offset="1" stop-color="#1e6cff"/></linearGradient>
<linearGradient id="g435" gradientUnits="userSpaceOnUse" x1="858.6" y1="619.2" x2="855.6" y2="629.8"><stop offset="0" stop-color="#1e6cff"/><stop offset="0.544" stop-color="#3f5efa"/><stop offset="0.922" stop-color="#3b60fb"/><stop offset="0.958" stop-color="#ff10de"/><stop offset="1" stop-color="#ff3c14"/></linearGradient>
<linearGradient id="g436" gradientUnits="userSpaceOnUse" x1="845.0" y1="626.7" x2="836.8" y2="647.7"><stop offset="0" stop-color="#ff4016"/><stop offset="0.3" stop-color="#f63610"/><stop offset="0.58" stop-color="#c82609"/><stop offset="0.82" stop-color="#921a04"/><stop offset="1" stop-color="#681202"/></linearGradient>
<linearGradient id="g437" gradientUnits="userSpaceOnUse" x1="1084.7" y1="503.9" x2="1054.0" y2="533.3"><stop offset="0" stop-color="#ff3c14"/><stop offset="0.366" stop-color="#ff3c14"/><stop offset="0.396" stop-color="#ff10de"/><stop offset="0.398" stop-color="#f116e0"/><stop offset="0.599" stop-color="#de1ee3"/><stop offset="1" stop-color="#1e6cff"/></linearGradient>
<linearGradient id="g438" gradientUnits="userSpaceOnUse" x1="1046.2" y1="525.1" x2="972.4" y2="672.5"><stop offset="0" stop-color="#1e6cff"/><stop offset="1" stop-color="#1e6cff"/></linearGradient>
<linearGradient id="g439" gradientUnits="userSpaceOnUse" x1="870.7" y1="621.6" x2="867.2" y2="634.1"><stop offset="0" stop-color="#1e6cff"/><stop offset="0.551" stop-color="#495bf9"/><stop offset="0.94" stop-color="#435dfa"/><stop offset="0.967" stop-color="#ff10de"/><stop offset="1" stop-color="#ff3c14"/></linearGradient>
<linearGradient id="g440" gradientUnits="userSpaceOnUse" x1="854.5" y1="630.5" x2="846.3" y2="651.4"><stop offset="0" stop-color="#ff4016"/><stop offset="0.3" stop-color="#f63610"/><stop offset="0.58" stop-color="#c82609"/><stop offset="0.82" stop-color="#921a04"/><stop offset="1" stop-color="#681202"/></linearGradient>
<linearGradient id="g441" gradientUnits="userSpaceOnUse" x1="1091.6" y1="509.1" x2="1058.5" y2="539.5"><stop offset="0" stop-color="#ff3c14"/><stop offset="0.363" stop-color="#ff3c14"/><stop offset="0.393" stop-color="#ff14cd"/><stop offset="0.461" stop-color="#ff10de"/><stop offset="0.576" stop-color="#df1de3"/><stop offset="1" stop-color="#1e6cff"/></linearGradient>
<linearGradient id="g442" gradientUnits="userSpaceOnUse" x1="1051.1" y1="531.4" x2="979.5" y2="672.8"><stop offset="0" stop-color="#1e6cff"/><stop offset="1" stop-color="#1e6cff"/></linearGradient>
<linearGradient id="g443" gradientUnits="userSpaceOnUse" x1="882.9" y1="623.9" x2="878.8" y2="638.5"><stop offset="0" stop-color="#1e6cff"/><stop offset="0.554" stop-color="#5357f7"/><stop offset="0.95" stop-color="#4c59f8"/><stop offset="0.972" stop-color="#ff10de"/><stop offset="1" stop-color="#ff3c14"/></linearGradient>
<linearGradient id="g444" gradientUnits="userSpaceOnUse" x1="864.0" y1="634.3" x2="855.8" y2="655.1"><stop offset="0" stop-color="#ff4016"/><stop offset="0.3" stop-color="#f63610"/><stop offset="0.58" stop-color="#c82609"/><stop offset="0.82" stop-color="#921a04"/><stop offset="1" stop-color="#681202"/></linearGradient>
<linearGradient id="g445" gradientUnits="userSpaceOnUse" x1="1098.3" y1="514.5" x2="1063.1" y2="545.9"><stop offset="0" stop-color="#ff3c14"/><stop offset="0.363" stop-color="#ff3c14"/><stop offset="0.393" stop-color="#ff19b6"/><stop offset="0.482" stop-color="#ff10de"/><stop offset="0.545" stop-color="#df1de3"/><stop offset="1" stop-color="#1e6cff"/></linearGradient>
<linearGradient id="g446" gradientUnits="userSpaceOnUse" x1="1055.9" y1="537.8" x2="986.9" y2="673.0"><stop offset="0" stop-color="#1e6cff"/><stop offset="1" stop-color="#1e6cff"/></linearGradient>
<linearGradient id="g447" gradientUnits="userSpaceOnUse" x1="895.1" y1="626.2" x2="890.4" y2="642.8"><stop offset="0" stop-color="#1e6cff"/><stop offset="0.554" stop-color="#5d52f6"/><stop offset="0.955" stop-color="#5456f7"/><stop offset="0.975" stop-color="#ff10de"/><stop offset="1" stop-color="#ff3c14"/></linearGradient>
<linearGradient id="g448" gradientUnits="userSpaceOnUse" x1="873.5" y1="638.1" x2="865.4" y2="658.8"><stop offset="0" stop-color="#ff4016"/><stop offset="0.3" stop-color="#f63610"/><stop offset="0.58" stop-color="#c82609"/><stop offset="0.82" stop-color="#921a04"/><stop offset="1" stop-color="#681202"/></linearGradient>
<linearGradient id="g449" gradientUnits="userSpaceOnUse" x1="1104.7" y1="519.9" x2="1067.6" y2="552.1"><stop offset="0" stop-color="#ff3c14"/><stop offset="0.37" stop-color="#ff3c14"/><stop offset="0.401" stop-color="#ff19b6"/><stop offset="0.493" stop-color="#ff10de"/><stop offset="0.557" stop-color="#df1de3"/><stop offset="1" stop-color="#1e6cff"/></linearGradient>
<linearGradient id="g450" gradientUnits="userSpaceOnUse" x1="1060.7" y1="544.1" x2="998.3" y2="672.6"><stop offset="0" stop-color="#1e6cff"/><stop offset="1" stop-color="#1e6cff"/></linearGradient>
<linearGradient id="g451" gradientUnits="userSpaceOnUse" x1="907.4" y1="628.4" x2="902.6" y2="646.9"><stop offset="0" stop-color="#1e6cff"/><stop offset="0.556" stop-color="#684ef4"/><stop offset="0.954" stop-color="#5e52f6"/><stop offset="0.97" stop-color="#ff10de"/><stop offset="0.991" stop-color="#ff3c14"/><stop offset="1" stop-color="#ff3c14"/></linearGradient>
<linearGradient id="g452" gradientUnits="userSpaceOnUse" x1="883.0" y1="641.8" x2="875.0" y2="662.5"><stop offset="0" stop-color="#ff4016"/><stop offset="0.3" stop-color="#f63610"/><stop offset="0.58" stop-color="#c82609"/><stop offset="0.82" stop-color="#921a04"/><stop offset="1" stop-color="#681202"/></linearGradient>
<linearGradient id="g453" gradientUnits="userSpaceOnUse" x1="1110.8" y1="525.6" x2="1072.1" y2="558.3"><stop offset="0" stop-color="#ff3c14"/><stop offset="0.385" stop-color="#ff3c14"/><stop offset="0.417" stop-color="#ff19b6"/><stop offset="0.514" stop-color="#ff10de"/><stop offset="0.582" stop-color="#df1de3"/><stop offset="1" stop-color="#1e6cff"/></linearGradient>
<linearGradient id="g454" gradientUnits="userSpaceOnUse" x1="1065.5" y1="550.5" x2="1010.3" y2="671.5"><stop offset="0" stop-color="#1e6cff"/><stop offset="1" stop-color="#1e6cff"/></linearGradient>
<linearGradient id="g455" gradientUnits="userSpaceOnUse" x1="920.2" y1="630.4" x2="915.2" y2="651.0"><stop offset="0" stop-color="#1e6cff"/><stop offset="0.562" stop-color="#7c45f1"/><stop offset="0.946" stop-color="#694df4"/><stop offset="0.966" stop-color="#ff10de"/><stop offset="0.996" stop-color="#ff3c14"/><stop offset="1" stop-color="#ff3c14"/></linearGradient>
<linearGradient id="g456" gradientUnits="userSpaceOnUse" x1="892.7" y1="645.5" x2="884.6" y2="666.3"><stop offset="0" stop-color="#ff4016"/><stop offset="0.3" stop-color="#f63610"/><stop offset="0.58" stop-color="#c82609"/><stop offset="0.82" stop-color="#921a04"/><stop offset="1" stop-color="#681202"/></linearGradient>
<linearGradient id="g457" gradientUnits="userSpaceOnUse" x1="1116.4" y1="531.5" x2="1076.9" y2="564.5"><stop offset="0" stop-color="#ff3c14"/><stop offset="0.401" stop-color="#ff3c14"/><stop offset="0.432" stop-color="#ff19b6"/><stop offset="0.536" stop-color="#ff10de"/><stop offset="0.608" stop-color="#df1de3"/><stop offset="1" stop-color="#1e6cff"/></linearGradient>
<linearGradient id="g458" gradientUnits="userSpaceOnUse" x1="1070.4" y1="556.8" x2="1020.3" y2="670.5"><stop offset="0" stop-color="#1e6cff"/><stop offset="1" stop-color="#1e6cff"/></linearGradient>
<linearGradient id="g459" gradientUnits="userSpaceOnUse" x1="933.4" y1="632.1" x2="928.0" y2="655.1"><stop offset="0" stop-color="#1e6cff"/><stop offset="0.563" stop-color="#953cee"/><stop offset="0.924" stop-color="#8940ef"/><stop offset="0.944" stop-color="#ff10de"/><stop offset="0.981" stop-color="#ff3c14"/><stop offset="1" stop-color="#ff3c14"/></linearGradient>
<linearGradient id="g460" gradientUnits="userSpaceOnUse" x1="902.4" y1="649.2" x2="894.4" y2="670.0"><stop offset="0" stop-color="#ff4016"/><stop offset="0.3" stop-color="#f63610"/><stop offset="0.58" stop-color="#c82609"/><stop offset="0.82" stop-color="#921a04"/><stop offset="1" stop-color="#681202"/></linearGradient>
<linearGradient id="g461" gradientUnits="userSpaceOnUse" x1="1121.9" y1="537.4" x2="1082.1" y2="571.0"><stop offset="0" stop-color="#ff3c14"/><stop offset="0.412" stop-color="#ff3c14"/><stop offset="0.443" stop-color="#ff19b6"/><stop offset="0.555" stop-color="#ff10de"/><stop offset="0.634" stop-color="#df1de3"/><stop offset="1" stop-color="#1e6cff"/></linearGradient>
<linearGradient id="g462" gradientUnits="userSpaceOnUse" x1="1075.4" y1="563.0" x2="1028.1" y2="670.0"><stop offset="0" stop-color="#1e6cff"/><stop offset="1" stop-color="#1e6cff"/></linearGradient>
<linearGradient id="g463" gradientUnits="userSpaceOnUse" x1="946.5" y1="633.9" x2="940.6" y2="659.3"><stop offset="0" stop-color="#1e6cff"/><stop offset="0.558" stop-color="#b030ea"/><stop offset="0.883" stop-color="#b230e9"/><stop offset="0.897" stop-color="#ff10de"/><stop offset="0.939" stop-color="#ff3c14"/><stop offset="1" stop-color="#ff3c14"/></linearGradient>
<linearGradient id="g464" gradientUnits="userSpaceOnUse" x1="912.3" y1="652.7" x2="904.2" y2="673.7"><stop offset="0" stop-color="#ff4016"/><stop offset="0.3" stop-color="#f63610"/><stop offset="0.58" stop-color="#c82609"/><stop offset="0.82" stop-color="#921a04"/><stop offset="1" stop-color="#681202"/></linearGradient>
<linearGradient id="g465" gradientUnits="userSpaceOnUse" x1="1127.4" y1="543.4" x2="1087.6" y2="577.6"><stop offset="0" stop-color="#ff3c14"/><stop offset="0.429" stop-color="#ff3c14"/><stop offset="0.46" stop-color="#ff19b6"/><stop offset="0.574" stop-color="#ff10de"/><stop offset="0.655" stop-color="#df1de3"/><stop offset="1" stop-color="#1e6cff"/></linearGradient>
<linearGradient id="g466" gradientUnits="userSpaceOnUse" x1="1080.5" y1="569.2" x2="1039.1" y2="668.7"><stop offset="0" stop-color="#1e6cff"/><stop offset="1" stop-color="#1e6cff"/></linearGradient>
<linearGradient id="g467" gradientUnits="userSpaceOnUse" x1="959.8" y1="635.6" x2="954.1" y2="662.9"><stop offset="0" stop-color="#1e6cff"/><stop offset="0.556" stop-color="#cc25e5"/><stop offset="0.832" stop-color="#e21ce2"/><stop offset="0.838" stop-color="#ff10de"/><stop offset="0.891" stop-color="#ff3c14"/><stop offset="1" stop-color="#ff3c14"/></linearGradient>
<linearGradient id="g468" gradientUnits="userSpaceOnUse" x1="922.3" y1="656.3" x2="914.2" y2="677.5"><stop offset="0" stop-color="#ff4016"/><stop offset="0.3" stop-color="#f63610"/><stop offset="0.58" stop-color="#c82609"/><stop offset="0.82" stop-color="#921a04"/><stop offset="1" stop-color="#681202"/></linearGradient>
<linearGradient id="g469" gradientUnits="userSpaceOnUse" x1="1133.0" y1="549.3" x2="1093.2" y2="584.1"><stop offset="0" stop-color="#ff3c14"/><stop offset="0.45" stop-color="#ff3c14"/><stop offset="0.481" stop-color="#ff19b6"/><stop offset="0.594" stop-color="#ff10de"/><stop offset="0.673" stop-color="#df1de3"/><stop offset="1" stop-color="#1e6cff"/></linearGradient>
<linearGradient id="g470" gradientUnits="userSpaceOnUse" x1="1085.6" y1="575.4" x2="1046.8" y2="668.0"><stop offset="0" stop-color="#1e6cff"/><stop offset="1" stop-color="#1e6cff"/></linearGradient>
<linearGradient id="g471" gradientUnits="userSpaceOnUse" x1="973.4" y1="637.2" x2="967.6" y2="666.3"><stop offset="0" stop-color="#1e6cff"/><stop offset="0.568" stop-color="#df1de3"/><stop offset="0.711" stop-color="#ff10de"/><stop offset="0.804" stop-color="#ff14cb"/><stop offset="0.867" stop-color="#ff3c14"/><stop offset="1" stop-color="#ff3c14"/></linearGradient>
<linearGradient id="g472" gradientUnits="userSpaceOnUse" x1="932.9" y1="659.4" x2="924.5" y2="681.4"><stop offset="0" stop-color="#ff4016"/><stop offset="0.3" stop-color="#f63610"/><stop offset="0.58" stop-color="#c82609"/><stop offset="0.82" stop-color="#921a04"/><stop offset="1" stop-color="#681202"/></linearGradient>
<linearGradient id="g473" gradientUnits="userSpaceOnUse" x1="1138.5" y1="555.3" x2="1098.7" y2="590.4"><stop offset="0" stop-color="#ff3c14"/><stop offset="0.475" stop-color="#ff3c14"/><stop offset="0.506" stop-color="#ff19b6"/><stop offset="0.614" stop-color="#ff10de"/><stop offset="0.69" stop-color="#df1de3"/><stop offset="1" stop-color="#1e6cff"/></linearGradient>
<linearGradient id="g474" gradientUnits="userSpaceOnUse" x1="1090.9" y1="581.5" x2="1050.7" y2="668.7"><stop offset="0" stop-color="#1e6cff"/><stop offset="1" stop-color="#1e6cff"/></linearGradient>
<linearGradient id="g475" gradientUnits="userSpaceOnUse" x1="986.3" y1="639.0" x2="978.1" y2="671.5"><stop offset="0" stop-color="#1e6cff"/><stop offset="0.57" stop-color="#df1de3"/><stop offset="0.662" stop-color="#ff10de"/><stop offset="0.794" stop-color="#ff19b6"/><stop offset="0.85" stop-color="#ff3c14"/><stop offset="1" stop-color="#ff3c14"/></linearGradient>
<linearGradient id="g476" gradientUnits="userSpaceOnUse" x1="943.2" y1="662.7" x2="934.7" y2="685.2"><stop offset="0" stop-color="#ff4016"/><stop offset="0.3" stop-color="#f63610"/><stop offset="0.58" stop-color="#c82609"/><stop offset="0.82" stop-color="#921a04"/><stop offset="1" stop-color="#681202"/></linearGradient>
<linearGradient id="g477" gradientUnits="userSpaceOnUse" x1="1142.7" y1="560.0" x2="1102.9" y2="595.2"><stop offset="0" stop-color="#ff3c14"/><stop offset="0.495" stop-color="#ff3c14"/><stop offset="0.527" stop-color="#ff19b6"/><stop offset="0.63" stop-color="#ff10de"/><stop offset="0.702" stop-color="#df1de3"/><stop offset="1" stop-color="#1e6cff"/></linearGradient>
<linearGradient id="g478" gradientUnits="userSpaceOnUse" x1="1095.0" y1="586.2" x2="1052.7" y2="669.7"><stop offset="0" stop-color="#1e6cff"/><stop offset="1" stop-color="#1e6cff"/></linearGradient>
<linearGradient id="g479" gradientUnits="userSpaceOnUse" x1="995.7" y1="640.8" x2="985.2" y2="675.9"><stop offset="0" stop-color="#1e6cff"/><stop offset="0.557" stop-color="#df1de3"/><stop offset="0.65" stop-color="#ff10de"/><stop offset="0.783" stop-color="#ff19b6"/><stop offset="0.834" stop-color="#ff3c14"/><stop offset="1" stop-color="#ff3c14"/></linearGradient>
<linearGradient id="g480" gradientUnits="userSpaceOnUse" x1="950.8" y1="665.6" x2="942.3" y2="688.1"><stop offset="0" stop-color="#ff4016"/><stop offset="0.3" stop-color="#f63610"/><stop offset="0.58" stop-color="#c82609"/><stop offset="0.82" stop-color="#921a04"/><stop offset="1" stop-color="#681202"/></linearGradient>
<linearGradient id="g481" gradientUnits="userSpaceOnUse" x1="1145.6" y1="563.4" x2="1106.0" y2="598.5"><stop offset="0" stop-color="#ff3c14"/><stop offset="0.508" stop-color="#ff3c14"/><stop offset="0.54" stop-color="#ff19b6"/><stop offset="0.64" stop-color="#ff10de"/><stop offset="0.709" stop-color="#df1de3"/><stop offset="1" stop-color="#1e6cff"/></linearGradient>
<linearGradient id="g482" gradientUnits="userSpaceOnUse" x1="1098.0" y1="589.6" x2="1055.2" y2="670.5"><stop offset="0" stop-color="#1e6cff"/><stop offset="1" stop-color="#1e6cff"/></linearGradient>
<linearGradient id="g483" gradientUnits="userSpaceOnUse" x1="1002.1" y1="642.4" x2="990.3" y2="678.8"><stop offset="0" stop-color="#1e6cff"/><stop offset="0.544" stop-color="#df1de3"/><stop offset="0.639" stop-color="#ff10de"/><stop offset="0.774" stop-color="#ff19b6"/><stop offset="0.821" stop-color="#ff3c14"/><stop offset="1" stop-color="#ff3c14"/></linearGradient>
<linearGradient id="g484" gradientUnits="userSpaceOnUse" x1="956.0" y1="667.7" x2="947.7" y2="690.0"><stop offset="0" stop-color="#ff4016"/><stop offset="0.3" stop-color="#f63610"/><stop offset="0.58" stop-color="#c82609"/><stop offset="0.82" stop-color="#921a04"/><stop offset="1" stop-color="#681202"/></linearGradient>
<linearGradient id="g485" gradientUnits="userSpaceOnUse" x1="1148.4" y1="566.9" x2="1109.1" y2="601.9"><stop offset="0" stop-color="#ff3c14"/><stop offset="0.522" stop-color="#ff3c14"/><stop offset="0.553" stop-color="#ff19b6"/><stop offset="0.649" stop-color="#ff10de"/><stop offset="0.716" stop-color="#df1de3"/><stop offset="1" stop-color="#1e6cff"/></linearGradient>
<linearGradient id="g486" gradientUnits="userSpaceOnUse" x1="1101.1" y1="592.9" x2="1058.1" y2="671.3"><stop offset="0" stop-color="#1e6cff"/><stop offset="1" stop-color="#1e6cff"/></linearGradient>
<linearGradient id="g487" gradientUnits="userSpaceOnUse" x1="1008.2" y1="644.0" x2="995.4" y2="681.5"><stop offset="0" stop-color="#1e6cff"/><stop offset="0.53" stop-color="#df1de3"/><stop offset="0.626" stop-color="#ff10de"/><stop offset="0.764" stop-color="#ff19b6"/><stop offset="0.808" stop-color="#ff3c14"/><stop offset="1" stop-color="#ff3c14"/></linearGradient>
<linearGradient id="g488" gradientUnits="userSpaceOnUse" x1="961.2" y1="669.8" x2="953.0" y2="691.9"><stop offset="0" stop-color="#ff4016"/><stop offset="0.3" stop-color="#f63610"/><stop offset="0.58" stop-color="#c82609"/><stop offset="0.82" stop-color="#921a04"/><stop offset="1" stop-color="#681202"/></linearGradient>
<linearGradient id="g489" gradientUnits="userSpaceOnUse" x1="1151.2" y1="570.3" x2="1112.2" y2="605.2"><stop offset="0" stop-color="#ff3c14"/><stop offset="0.534" stop-color="#ff3c14"/><stop offset="0.566" stop-color="#ff19b6"/><stop offset="0.658" stop-color="#ff10de"/><stop offset="0.722" stop-color="#df1de3"/><stop offset="1" stop-color="#1e6cff"/></linearGradient>
<linearGradient id="g490" gradientUnits="userSpaceOnUse" x1="1104.2" y1="596.2" x2="1061.7" y2="672.2"><stop offset="0" stop-color="#1e6cff"/><stop offset="1" stop-color="#1e6cff"/></linearGradient>
<linearGradient id="g491" gradientUnits="userSpaceOnUse" x1="1014.2" y1="645.7" x2="1000.7" y2="684.1"><stop offset="0" stop-color="#1e6cff"/><stop offset="0.515" stop-color="#df1de3"/><stop offset="0.614" stop-color="#ff10de"/><stop offset="0.755" stop-color="#ff19b6"/><stop offset="0.796" stop-color="#ff3c14"/><stop offset="1" stop-color="#ff3c14"/></linearGradient>
<linearGradient id="g492" gradientUnits="userSpaceOnUse" x1="966.4" y1="672.0" x2="958.4" y2="693.8"><stop offset="0" stop-color="#ff4016"/><stop offset="0.3" stop-color="#f63610"/><stop offset="0.58" stop-color="#c82609"/><stop offset="0.82" stop-color="#921a04"/><stop offset="1" stop-color="#681202"/></linearGradient>
<linearGradient id="g493" gradientUnits="userSpaceOnUse" x1="1154.0" y1="573.8" x2="1115.2" y2="608.4"><stop offset="0" stop-color="#ff3c14"/><stop offset="0.545" stop-color="#ff3c14"/><stop offset="0.576" stop-color="#ff19b6"/><stop offset="0.665" stop-color="#ff10de"/><stop offset="0.728" stop-color="#df1de3"/><stop offset="1" stop-color="#1e6cff"/></linearGradient>
<linearGradient id="g494" gradientUnits="userSpaceOnUse" x1="1107.3" y1="599.5" x2="1065.5" y2="673.2"><stop offset="0" stop-color="#1e6cff"/><stop offset="1" stop-color="#1e6cff"/></linearGradient>
<linearGradient id="g495" gradientUnits="userSpaceOnUse" x1="1020.1" y1="647.5" x2="1006.0" y2="686.5"><stop offset="0" stop-color="#1e6cff"/><stop offset="0.5" stop-color="#df1de3"/><stop offset="0.601" stop-color="#ff10de"/><stop offset="0.744" stop-color="#ff19b6"/><stop offset="0.783" stop-color="#ff3c14"/><stop offset="1" stop-color="#ff3c14"/></linearGradient>
<linearGradient id="g496" gradientUnits="userSpaceOnUse" x1="971.5" y1="674.2" x2="963.8" y2="695.7"><stop offset="0" stop-color="#ff4016"/><stop offset="0.3" stop-color="#f63610"/><stop offset="0.58" stop-color="#c82609"/><stop offset="0.82" stop-color="#921a04"/><stop offset="1" stop-color="#681202"/></linearGradient>
<linearGradient id="g497" gradientUnits="userSpaceOnUse" x1="1156.7" y1="577.3" x2="1118.2" y2="611.5"><stop offset="0" stop-color="#ff3c14"/><stop offset="0.555" stop-color="#ff3c14"/><stop offset="0.586" stop-color="#ff19b6"/><stop offset="0.672" stop-color="#ff10de"/><stop offset="0.732" stop-color="#df1de3"/><stop offset="1" stop-color="#1e6cff"/></linearGradient>
<linearGradient id="g498" gradientUnits="userSpaceOnUse" x1="1110.4" y1="602.8" x2="1069.5" y2="674.2"><stop offset="0" stop-color="#1e6cff"/><stop offset="1" stop-color="#1e6cff"/></linearGradient>
<linearGradient id="g499" gradientUnits="userSpaceOnUse" x1="1025.9" y1="649.3" x2="1011.4" y2="689.0"><stop offset="0" stop-color="#1e6cff"/><stop offset="0.487" stop-color="#df1de3"/><stop offset="0.588" stop-color="#ff10de"/><stop offset="0.732" stop-color="#ff19b6"/><stop offset="0.769" stop-color="#ff3c14"/><stop offset="1" stop-color="#ff3c14"/></linearGradient>
<linearGradient id="g500" gradientUnits="userSpaceOnUse" x1="976.7" y1="676.3" x2="969.2" y2="697.5"><stop offset="0" stop-color="#ff4016"/><stop offset="0.3" stop-color="#f63610"/><stop offset="0.58" stop-color="#c82609"/><stop offset="0.82" stop-color="#921a04"/><stop offset="1" stop-color="#681202"/></linearGradient>
<linearGradient id="g501" gradientUnits="userSpaceOnUse" x1="1159.3" y1="580.9" x2="1121.2" y2="614.7"><stop offset="0" stop-color="#ff3c14"/><stop offset="0.564" stop-color="#ff3c14"/><stop offset="0.595" stop-color="#ff19b6"/><stop offset="0.678" stop-color="#ff10de"/><stop offset="0.736" stop-color="#df1de3"/><stop offset="1" stop-color="#1e6cff"/></linearGradient>
<linearGradient id="g502" gradientUnits="userSpaceOnUse" x1="1113.6" y1="606.0" x2="1073.7" y2="675.3"><stop offset="0" stop-color="#1e6cff"/><stop offset="1" stop-color="#1e6cff"/></linearGradient>
<linearGradient id="g503" gradientUnits="userSpaceOnUse" x1="1031.6" y1="651.1" x2="1016.9" y2="691.3"><stop offset="0" stop-color="#1e6cff"/><stop offset="0.474" stop-color="#df1de3"/><stop offset="0.575" stop-color="#ff10de"/><stop offset="0.72" stop-color="#ff19b6"/><stop offset="0.756" stop-color="#ff3c14"/><stop offset="1" stop-color="#ff3c14"/></linearGradient>
<linearGradient id="g504" gradientUnits="userSpaceOnUse" x1="981.9" y1="678.5" x2="974.6" y2="699.3"><stop offset="0" stop-color="#ff4016"/><stop offset="0.3" stop-color="#f63610"/><stop offset="0.58" stop-color="#c82609"/><stop offset="0.82" stop-color="#921a04"/><stop offset="1" stop-color="#681202"/></linearGradient>
<linearGradient id="g505" gradientUnits="userSpaceOnUse" x1="1162.0" y1="584.4" x2="1124.2" y2="617.8"><stop offset="0" stop-color="#ff3c14"/><stop offset="0.572" stop-color="#ff3c14"/><stop offset="0.602" stop-color="#ff19b6"/><stop offset="0.682" stop-color="#ff10de"/><stop offset="0.739" stop-color="#df1de3"/><stop offset="1" stop-color="#1e6cff"/></linearGradient>
<linearGradient id="g506" gradientUnits="userSpaceOnUse" x1="1116.7" y1="609.3" x2="1077.9" y2="676.4"><stop offset="0" stop-color="#1e6cff"/><stop offset="1" stop-color="#1e6cff"/></linearGradient>
<linearGradient id="g507" gradientUnits="userSpaceOnUse" x1="1037.3" y1="653.0" x2="1022.5" y2="693.6"><stop offset="0" stop-color="#1e6cff"/><stop offset="0.462" stop-color="#df1de3"/><stop offset="0.563" stop-color="#ff10de"/><stop offset="0.707" stop-color="#ff19b6"/><stop offset="0.743" stop-color="#ff3c14"/><stop offset="1" stop-color="#ff3c14"/></linearGradient>
<linearGradient id="g508" gradientUnits="userSpaceOnUse" x1="987.1" y1="680.6" x2="980.0" y2="701.1"><stop offset="0" stop-color="#ff4016"/><stop offset="0.3" stop-color="#f63610"/><stop offset="0.58" stop-color="#c82609"/><stop offset="0.82" stop-color="#921a04"/><stop offset="1" stop-color="#681202"/></linearGradient>
<linearGradient id="g509" gradientUnits="userSpaceOnUse" x1="1164.6" y1="588.0" x2="1127.2" y2="620.9"><stop offset="0" stop-color="#ff3c14"/><stop offset="0.58" stop-color="#ff3c14"/><stop offset="0.61" stop-color="#ff19b6"/><stop offset="0.687" stop-color="#ff10de"/><stop offset="0.741" stop-color="#df1de3"/><stop offset="1" stop-color="#1e6cff"/></linearGradient>
<linearGradient id="g510" gradientUnits="userSpaceOnUse" x1="1119.9" y1="612.6" x2="1082.4" y2="677.5"><stop offset="0" stop-color="#1e6cff"/><stop offset="1" stop-color="#1e6cff"/></linearGradient>
<linearGradient id="g511" gradientUnits="userSpaceOnUse" x1="1043.1" y1="654.8" x2="1028.2" y2="695.8"><stop offset="0" stop-color="#1e6cff"/><stop offset="0.451" stop-color="#df1de3"/><stop offset="0.551" stop-color="#ff10de"/><stop offset="0.694" stop-color="#ff19b6"/><stop offset="0.731" stop-color="#ff3c14"/><stop offset="1" stop-color="#ff3c14"/></linearGradient>
<linearGradient id="g512" gradientUnits="userSpaceOnUse" x1="992.3" y1="682.7" x2="985.4" y2="702.9"><stop offset="0" stop-color="#ff4016"/><stop offset="0.3" stop-color="#f63610"/><stop offset="0.58" stop-color="#c82609"/><stop offset="0.82" stop-color="#921a04"/><stop offset="1" stop-color="#681202"/></linearGradient>
<linearGradient id="g513" gradientUnits="userSpaceOnUse" x1="1167.2" y1="591.6" x2="1130.2" y2="624.0"><stop offset="0" stop-color="#ff3c14"/><stop offset="0.587" stop-color="#ff3c14"/><stop offset="0.616" stop-color="#ff19b6"/><stop offset="0.691" stop-color="#ff10de"/><stop offset="0.744" stop-color="#df1de3"/><stop offset="1" stop-color="#1e6cff"/></linearGradient>
<linearGradient id="g514" gradientUnits="userSpaceOnUse" x1="1123.0" y1="615.8" x2="1087.0" y2="678.6"><stop offset="0" stop-color="#1e6cff"/><stop offset="1" stop-color="#1e6cff"/></linearGradient>
<linearGradient id="g515" gradientUnits="userSpaceOnUse" x1="1048.8" y1="656.7" x2="1034.2" y2="697.8"><stop offset="0" stop-color="#1e6cff"/><stop offset="0.442" stop-color="#df1de3"/><stop offset="0.541" stop-color="#ff10de"/><stop offset="0.683" stop-color="#ff19b6"/><stop offset="0.72" stop-color="#ff3c14"/><stop offset="1" stop-color="#ff3c14"/></linearGradient>
<linearGradient id="g516" gradientUnits="userSpaceOnUse" x1="997.6" y1="684.8" x2="990.8" y2="704.7"><stop offset="0" stop-color="#ff4016"/><stop offset="0.3" stop-color="#f63610"/><stop offset="0.58" stop-color="#c82609"/><stop offset="0.82" stop-color="#921a04"/><stop offset="1" stop-color="#681202"/></linearGradient>
<linearGradient id="g517" gradientUnits="userSpaceOnUse" x1="1169.8" y1="595.1" x2="1133.1" y2="627.1"><stop offset="0" stop-color="#ff3c14"/><stop offset="0.594" stop-color="#ff3c14"/><stop offset="0.623" stop-color="#ff19b6"/><stop offset="0.695" stop-color="#ff10de"/><stop offset="0.746" stop-color="#df1de3"/><stop offset="1" stop-color="#1e6cff"/></linearGradient>
<linearGradient id="g518" gradientUnits="userSpaceOnUse" x1="1126.1" y1="619.1" x2="1091.4" y2="679.6"><stop offset="0" stop-color="#1e6cff"/><stop offset="1" stop-color="#1e6cff"/></linearGradient>
<linearGradient id="g519" gradientUnits="userSpaceOnUse" x1="1054.6" y1="658.5" x2="1040.1" y2="699.9"><stop offset="0" stop-color="#1e6cff"/><stop offset="0.433" stop-color="#df1de3"/><stop offset="0.532" stop-color="#ff10de"/><stop offset="0.673" stop-color="#ff19b6"/><stop offset="0.711" stop-color="#ff3c14"/><stop offset="1" stop-color="#ff3c14"/></linearGradient>
<linearGradient id="g520" gradientUnits="userSpaceOnUse" x1="1002.9" y1="686.9" x2="996.4" y2="706.5"><stop offset="0" stop-color="#ff4016"/><stop offset="0.3" stop-color="#f63610"/><stop offset="0.58" stop-color="#c82609"/><stop offset="0.82" stop-color="#921a04"/><stop offset="1" stop-color="#681202"/></linearGradient>
<linearGradient id="g521" gradientUnits="userSpaceOnUse" x1="1172.3" y1="598.7" x2="1135.9" y2="630.1"><stop offset="0" stop-color="#ff3c14"/><stop offset="0.6" stop-color="#ff3c14"/><stop offset="0.63" stop-color="#ff19b6"/><stop offset="0.699" stop-color="#ff10de"/><stop offset="0.748" stop-color="#df1de3"/><stop offset="1" stop-color="#1e6cff"/></linearGradient>
<linearGradient id="g522" gradientUnits="userSpaceOnUse" x1="1129.3" y1="622.4" x2="1095.7" y2="680.7"><stop offset="0" stop-color="#1e6cff"/><stop offset="1" stop-color="#1e6cff"/></linearGradient>
<linearGradient id="g523" gradientUnits="userSpaceOnUse" x1="1060.3" y1="660.3" x2="1045.8" y2="702.0"><stop offset="0" stop-color="#1e6cff"/><stop offset="0.425" stop-color="#df1de3"/><stop offset="0.523" stop-color="#ff10de"/><stop offset="0.663" stop-color="#ff19b6"/><stop offset="0.702" stop-color="#ff3c14"/><stop offset="1" stop-color="#ff3c14"/></linearGradient>
<linearGradient id="g524" gradientUnits="userSpaceOnUse" x1="1008.3" y1="689.0" x2="1001.9" y2="708.2"><stop offset="0" stop-color="#ff4016"/><stop offset="0.3" stop-color="#f63610"/><stop offset="0.58" stop-color="#c82609"/><stop offset="0.82" stop-color="#921a04"/><stop offset="1" stop-color="#681202"/></linearGradient>
<linearGradient id="g525" gradientUnits="userSpaceOnUse" x1="1174.8" y1="602.3" x2="1138.7" y2="633.1"><stop offset="0" stop-color="#ff3c14"/><stop offset="0.607" stop-color="#ff3c14"/><stop offset="0.636" stop-color="#ff19b6"/><stop offset="0.703" stop-color="#ff10de"/><stop offset="0.75" stop-color="#df1de3"/><stop offset="1" stop-color="#1e6cff"/></linearGradient>
<linearGradient id="g526" gradientUnits="userSpaceOnUse" x1="1132.4" y1="625.7" x2="1099.8" y2="681.7"><stop offset="0" stop-color="#1e6cff"/><stop offset="1" stop-color="#1e6cff"/></linearGradient>
<linearGradient id="g527" gradientUnits="userSpaceOnUse" x1="1066.1" y1="662.2" x2="1051.6" y2="704.1"><stop offset="0" stop-color="#1e6cff"/><stop offset="0.417" stop-color="#df1de3"/><stop offset="0.514" stop-color="#ff10de"/><stop offset="0.652" stop-color="#ff19b6"/><stop offset="0.694" stop-color="#ff3c14"/><stop offset="1" stop-color="#ff3c14"/></linearGradient>
<linearGradient id="g528" gradientUnits="userSpaceOnUse" x1="1013.7" y1="691.0" x2="1007.5" y2="710.0"><stop offset="0" stop-color="#ff4016"/><stop offset="0.3" stop-color="#f63610"/><stop offset="0.58" stop-color="#c82609"/><stop offset="0.82" stop-color="#921a04"/><stop offset="1" stop-color="#681202"/></linearGradient>
<linearGradient id="g529" gradientUnits="userSpaceOnUse" x1="1177.4" y1="606.0" x2="1141.4" y2="636.1"><stop offset="0" stop-color="#ff3c14"/><stop offset="0.614" stop-color="#ff3c14"/><stop offset="0.642" stop-color="#ff19b6"/><stop offset="0.707" stop-color="#ff10de"/><stop offset="0.752" stop-color="#df1de3"/><stop offset="1" stop-color="#1e6cff"/></linearGradient>
<linearGradient id="g530" gradientUnits="userSpaceOnUse" x1="1135.4" y1="629.0" x2="1103.8" y2="682.8"><stop offset="0" stop-color="#1e6cff"/><stop offset="1" stop-color="#1e6cff"/></linearGradient>
<linearGradient id="g531" gradientUnits="userSpaceOnUse" x1="1071.8" y1="664.0" x2="1057.4" y2="706.1"><stop offset="0" stop-color="#1e6cff"/><stop offset="0.409" stop-color="#df1de3"/><stop offset="0.505" stop-color="#ff10de"/><stop offset="0.642" stop-color="#ff19b6"/><stop offset="0.685" stop-color="#ff3c14"/><stop offset="1" stop-color="#ff3c14"/></linearGradient>
<linearGradient id="g532" gradientUnits="userSpaceOnUse" x1="1019.1" y1="693.0" x2="1013.1" y2="711.7"><stop offset="0" stop-color="#ff4016"/><stop offset="0.3" stop-color="#f63610"/><stop offset="0.58" stop-color="#c82609"/><stop offset="0.82" stop-color="#921a04"/><stop offset="1" stop-color="#681202"/></linearGradient>
<linearGradient id="g533" gradientUnits="userSpaceOnUse" x1="1179.8" y1="609.6" x2="1143.7" y2="638.8"><stop offset="0" stop-color="#ff3c14"/><stop offset="0.619" stop-color="#ff3c14"/><stop offset="0.648" stop-color="#ff19b6"/><stop offset="0.71" stop-color="#ff10de"/><stop offset="0.753" stop-color="#df1de3"/><stop offset="1" stop-color="#1e6cff"/></linearGradient>
<linearGradient id="g534" gradientUnits="userSpaceOnUse" x1="1138.5" y1="632.3" x2="1107.7" y2="683.9"><stop offset="0" stop-color="#1e6cff"/><stop offset="1" stop-color="#1e6cff"/></linearGradient>
<linearGradient id="g535" gradientUnits="userSpaceOnUse" x1="1077.6" y1="665.8" x2="1063.3" y2="708.0"><stop offset="0" stop-color="#1e6cff"/><stop offset="0.401" stop-color="#df1de3"/><stop offset="0.496" stop-color="#ff10de"/><stop offset="0.632" stop-color="#ff19b6"/><stop offset="0.676" stop-color="#ff3c14"/><stop offset="1" stop-color="#ff3c14"/></linearGradient>
<linearGradient id="g536" gradientUnits="userSpaceOnUse" x1="1024.6" y1="695.0" x2="1018.8" y2="713.4"><stop offset="0" stop-color="#ff4016"/><stop offset="0.3" stop-color="#f63610"/><stop offset="0.58" stop-color="#c82609"/><stop offset="0.82" stop-color="#921a04"/><stop offset="1" stop-color="#681202"/></linearGradient>
<linearGradient id="g537" gradientUnits="userSpaceOnUse" x1="1182.2" y1="613.3" x2="1145.5" y2="641.1"><stop offset="0" stop-color="#ff3c14"/><stop offset="0.624" stop-color="#ff3c14"/><stop offset="0.652" stop-color="#ff19b6"/><stop offset="0.712" stop-color="#ff10de"/><stop offset="0.754" stop-color="#df1de3"/><stop offset="1" stop-color="#1e6cff"/></linearGradient>
<linearGradient id="g538" gradientUnits="userSpaceOnUse" x1="1141.4" y1="635.7" x2="1111.3" y2="684.9"><stop offset="0" stop-color="#1e6cff"/><stop offset="1" stop-color="#1e6cff"/></linearGradient>
<linearGradient id="g539" gradientUnits="userSpaceOnUse" x1="1083.3" y1="667.7" x2="1069.4" y2="709.8"><stop offset="0" stop-color="#1e6cff"/><stop offset="0.393" stop-color="#df1de3"/><stop offset="0.487" stop-color="#ff10de"/><stop offset="0.621" stop-color="#ff19b6"/><stop offset="0.667" stop-color="#ff3c14"/><stop offset="1" stop-color="#ff3c14"/></linearGradient>
<linearGradient id="g540" gradientUnits="userSpaceOnUse" x1="1030.2" y1="696.9" x2="1024.7" y2="715.0"><stop offset="0" stop-color="#ff4016"/><stop offset="0.3" stop-color="#f63610"/><stop offset="0.58" stop-color="#c82609"/><stop offset="0.82" stop-color="#921a04"/><stop offset="1" stop-color="#681202"/></linearGradient>
<linearGradient id="g541" gradientUnits="userSpaceOnUse" x1="1184.2" y1="617.2" x2="1147.2" y2="643.3"><stop offset="0" stop-color="#ff3c14"/><stop offset="0.625" stop-color="#ff3c14"/><stop offset="0.653" stop-color="#ff19b6"/><stop offset="0.712" stop-color="#ff10de"/><stop offset="0.753" stop-color="#df1de3"/><stop offset="1" stop-color="#1e6cff"/></linearGradient>
<linearGradient id="g542" gradientUnits="userSpaceOnUse" x1="1144.3" y1="639.1" x2="1114.9" y2="685.9"><stop offset="0" stop-color="#1e6cff"/><stop offset="1" stop-color="#1e6cff"/></linearGradient>
<linearGradient id="g543" gradientUnits="userSpaceOnUse" x1="1088.9" y1="669.6" x2="1075.4" y2="711.5"><stop offset="0" stop-color="#1e6cff"/><stop offset="0.386" stop-color="#df1de3"/><stop offset="0.478" stop-color="#ff10de"/><stop offset="0.61" stop-color="#ff19b6"/><stop offset="0.658" stop-color="#ff3c14"/><stop offset="1" stop-color="#ff3c14"/></linearGradient>
<linearGradient id="g544" gradientUnits="userSpaceOnUse" x1="1035.9" y1="698.7" x2="1030.6" y2="716.7"><stop offset="0" stop-color="#ff4016"/><stop offset="0.3" stop-color="#f63610"/><stop offset="0.58" stop-color="#c82609"/><stop offset="0.82" stop-color="#921a04"/><stop offset="1" stop-color="#681202"/></linearGradient>
<linearGradient id="g545" gradientUnits="userSpaceOnUse" x1="1186.2" y1="621.1" x2="1149.1" y2="645.8"><stop offset="0" stop-color="#ff3c14"/><stop offset="0.626" stop-color="#ff3c14"/><stop offset="0.654" stop-color="#ff19b6"/><stop offset="0.712" stop-color="#ff10de"/><stop offset="0.752" stop-color="#df1de3"/><stop offset="1" stop-color="#1e6cff"/></linearGradient>
<linearGradient id="g546" gradientUnits="userSpaceOnUse" x1="1147.0" y1="642.6" x2="1118.1" y2="686.8"><stop offset="0" stop-color="#1e6cff"/><stop offset="1" stop-color="#1e6cff"/></linearGradient>
<linearGradient id="g547" gradientUnits="userSpaceOnUse" x1="1094.6" y1="671.5" x2="1081.5" y2="713.1"><stop offset="0" stop-color="#1e6cff"/><stop offset="0.379" stop-color="#df1de3"/><stop offset="0.47" stop-color="#ff10de"/><stop offset="0.599" stop-color="#ff19b6"/><stop offset="0.648" stop-color="#ff3c14"/><stop offset="1" stop-color="#ff3c14"/></linearGradient>
<linearGradient id="g548" gradientUnits="userSpaceOnUse" x1="1041.8" y1="700.5" x2="1036.6" y2="718.3"><stop offset="0" stop-color="#ff4016"/><stop offset="0.3" stop-color="#f63610"/><stop offset="0.58" stop-color="#c82609"/><stop offset="0.82" stop-color="#921a04"/><stop offset="1" stop-color="#681202"/></linearGradient>
<linearGradient id="g549" gradientUnits="userSpaceOnUse" x1="1188.2" y1="625.0" x2="1150.7" y2="648.1"><stop offset="0" stop-color="#ff3c14"/><stop offset="0.626" stop-color="#ff3c14"/><stop offset="0.654" stop-color="#ff19b6"/><stop offset="0.712" stop-color="#ff10de"/><stop offset="0.752" stop-color="#df1de3"/><stop offset="1" stop-color="#1e6cff"/></linearGradient>
<linearGradient id="g550" gradientUnits="userSpaceOnUse" x1="1149.6" y1="646.2" x2="1121.1" y2="687.7"><stop offset="0" stop-color="#1e6cff"/><stop offset="1" stop-color="#1e6cff"/></linearGradient>
<linearGradient id="g551" gradientUnits="userSpaceOnUse" x1="1100.2" y1="673.4" x2="1087.4" y2="714.6"><stop offset="0" stop-color="#1e6cff"/><stop offset="0.373" stop-color="#df1de3"/><stop offset="0.462" stop-color="#ff10de"/><stop offset="0.588" stop-color="#ff19b6"/><stop offset="0.638" stop-color="#ff3c14"/><stop offset="1" stop-color="#ff3c14"/></linearGradient>
<linearGradient id="g552" gradientUnits="userSpaceOnUse" x1="1047.7" y1="702.3" x2="1042.7" y2="720.0"><stop offset="0" stop-color="#ff4016"/><stop offset="0.3" stop-color="#f63610"/><stop offset="0.58" stop-color="#c82609"/><stop offset="0.82" stop-color="#921a04"/><stop offset="1" stop-color="#681202"/></linearGradient>
<linearGradient id="g553" gradientUnits="userSpaceOnUse" x1="1190.1" y1="628.9" x2="1152.1" y2="650.2"><stop offset="0" stop-color="#ff3c14"/><stop offset="0.625" stop-color="#ff3c14"/><stop offset="0.654" stop-color="#ff19b6"/><stop offset="0.713" stop-color="#ff10de"/><stop offset="0.754" stop-color="#df1de3"/><stop offset="1" stop-color="#1e6cff"/></linearGradient>
<linearGradient id="g554" gradientUnits="userSpaceOnUse" x1="1152.0" y1="649.9" x2="1123.9" y2="688.5"><stop offset="0" stop-color="#1e6cff"/><stop offset="1" stop-color="#1e6cff"/></linearGradient>
<linearGradient id="g555" gradientUnits="userSpaceOnUse" x1="1105.8" y1="675.3" x2="1093.3" y2="716.1"><stop offset="0" stop-color="#1e6cff"/><stop offset="0.367" stop-color="#df1de3"/><stop offset="0.453" stop-color="#ff10de"/><stop offset="0.576" stop-color="#ff19b6"/><stop offset="0.627" stop-color="#ff3c14"/><stop offset="1" stop-color="#ff3c14"/></linearGradient>
<linearGradient id="g556" gradientUnits="userSpaceOnUse" x1="1053.8" y1="703.9" x2="1048.9" y2="721.6"><stop offset="0" stop-color="#ff4016"/><stop offset="0.3" stop-color="#f63610"/><stop offset="0.58" stop-color="#c82609"/><stop offset="0.82" stop-color="#921a04"/><stop offset="1" stop-color="#681202"/></linearGradient>
<linearGradient id="g557" gradientUnits="userSpaceOnUse" x1="1191.9" y1="632.9" x2="1153.6" y2="652.7"><stop offset="0" stop-color="#ff3c14"/><stop offset="0.624" stop-color="#ff3c14"/><stop offset="0.654" stop-color="#ff19b6"/><stop offset="0.715" stop-color="#ff10de"/><stop offset="0.758" stop-color="#df1de3"/><stop offset="1" stop-color="#1e6cff"/></linearGradient>
<linearGradient id="g558" gradientUnits="userSpaceOnUse" x1="1154.2" y1="653.7" x2="1126.7" y2="689.2"><stop offset="0" stop-color="#1e6cff"/><stop offset="1" stop-color="#1e6cff"/></linearGradient>
<linearGradient id="g559" gradientUnits="userSpaceOnUse" x1="1111.3" y1="677.3" x2="1098.7" y2="717.6"><stop offset="0" stop-color="#1e6cff"/><stop offset="0.36" stop-color="#df1de3"/><stop offset="0.444" stop-color="#ff10de"/><stop offset="0.564" stop-color="#ff19b6"/><stop offset="0.615" stop-color="#ff3c14"/><stop offset="1" stop-color="#ff3c14"/></linearGradient>
<linearGradient id="g560" gradientUnits="userSpaceOnUse" x1="1059.9" y1="705.5" x2="1055.2" y2="723.2"><stop offset="0" stop-color="#ff4016"/><stop offset="0.3" stop-color="#f63610"/><stop offset="0.58" stop-color="#c82609"/><stop offset="0.82" stop-color="#921a04"/><stop offset="1" stop-color="#681202"/></linearGradient>
<linearGradient id="g561" gradientUnits="userSpaceOnUse" x1="1193.6" y1="637.0" x2="1155.6" y2="656.1"><stop offset="0" stop-color="#ff3c14"/><stop offset="0.626" stop-color="#ff3c14"/><stop offset="0.657" stop-color="#ff19b6"/><stop offset="0.723" stop-color="#ff10de"/><stop offset="0.769" stop-color="#df1de3"/><stop offset="1" stop-color="#1e6cff"/></linearGradient>
<linearGradient id="g562" gradientUnits="userSpaceOnUse" x1="1156.3" y1="657.6" x2="1129.6" y2="690.0"><stop offset="0" stop-color="#1e6cff"/><stop offset="1" stop-color="#1e6cff"/></linearGradient>
<linearGradient id="g563" gradientUnits="userSpaceOnUse" x1="1116.6" y1="679.4" x2="1103.7" y2="719.3"><stop offset="0" stop-color="#1e6cff"/><stop offset="0.351" stop-color="#df1de3"/><stop offset="0.433" stop-color="#ff10de"/><stop offset="0.549" stop-color="#ff19b6"/><stop offset="0.602" stop-color="#ff3c14"/><stop offset="1" stop-color="#ff3c14"/></linearGradient>
<linearGradient id="g564" gradientUnits="userSpaceOnUse" x1="1066.2" y1="707.1" x2="1061.5" y2="724.7"><stop offset="0" stop-color="#ff4016"/><stop offset="0.3" stop-color="#f63610"/><stop offset="0.58" stop-color="#c82609"/><stop offset="0.82" stop-color="#921a04"/><stop offset="1" stop-color="#681202"/></linearGradient>
<linearGradient id="g565" gradientUnits="userSpaceOnUse" x1="1195.2" y1="641.1" x2="1157.2" y2="658.8"><stop offset="0" stop-color="#ff3c14"/><stop offset="0.633" stop-color="#ff3c14"/><stop offset="0.664" stop-color="#ff19b6"/><stop offset="0.732" stop-color="#ff10de"/><stop offset="0.78" stop-color="#df1de3"/><stop offset="1" stop-color="#1e6cff"/></linearGradient>
<linearGradient id="g566" gradientUnits="userSpaceOnUse" x1="1158.4" y1="661.4" x2="1132.1" y2="690.9"><stop offset="0" stop-color="#1e6cff"/><stop offset="1" stop-color="#1e6cff"/></linearGradient>
<linearGradient id="g567" gradientUnits="userSpaceOnUse" x1="1121.7" y1="681.6" x2="1108.3" y2="720.8"><stop offset="0" stop-color="#1e6cff"/><stop offset="0.339" stop-color="#df1de3"/><stop offset="0.419" stop-color="#ff10de"/><stop offset="0.533" stop-color="#ff19b6"/><stop offset="0.587" stop-color="#ff3c14"/><stop offset="1" stop-color="#ff3c14"/></linearGradient>
<linearGradient id="g568" gradientUnits="userSpaceOnUse" x1="1072.5" y1="708.6" x2="1068.0" y2="726.2"><stop offset="0" stop-color="#ff4016"/><stop offset="0.3" stop-color="#f63610"/><stop offset="0.58" stop-color="#c82609"/><stop offset="0.82" stop-color="#921a04"/><stop offset="1" stop-color="#681202"/></linearGradient>
<linearGradient id="g569" gradientUnits="userSpaceOnUse" x1="1196.6" y1="645.4" x2="1158.4" y2="660.7"><stop offset="0" stop-color="#ff3c14"/><stop offset="0.637" stop-color="#ff3c14"/><stop offset="0.668" stop-color="#ff19b6"/><stop offset="0.736" stop-color="#ff10de"/><stop offset="0.783" stop-color="#df1de3"/><stop offset="1" stop-color="#1e6cff"/></linearGradient>
<linearGradient id="g570" gradientUnits="userSpaceOnUse" x1="1160.3" y1="665.3" x2="1135.0" y2="692.0"><stop offset="0" stop-color="#1e6cff"/><stop offset="1" stop-color="#1e6cff"/></linearGradient>
<linearGradient id="g571" gradientUnits="userSpaceOnUse" x1="1126.5" y1="683.9" x2="1113.7" y2="721.9"><stop offset="0" stop-color="#1e6cff"/><stop offset="0.324" stop-color="#df1de3"/><stop offset="0.402" stop-color="#ff10de"/><stop offset="0.514" stop-color="#ff19b6"/><stop offset="0.569" stop-color="#ff3c14"/><stop offset="1" stop-color="#ff3c14"/></linearGradient>
<linearGradient id="g572" gradientUnits="userSpaceOnUse" x1="1078.8" y1="710.1" x2="1074.6" y2="727.7"><stop offset="0" stop-color="#ff4016"/><stop offset="0.3" stop-color="#f63610"/><stop offset="0.58" stop-color="#c82609"/><stop offset="0.82" stop-color="#921a04"/><stop offset="1" stop-color="#681202"/></linearGradient>
<linearGradient id="g573" gradientUnits="userSpaceOnUse" x1="1197.8" y1="649.7" x2="1159.9" y2="663.5"><stop offset="0" stop-color="#ff3c14"/><stop offset="0.636" stop-color="#ff3c14"/><stop offset="0.669" stop-color="#ff19b6"/><stop offset="0.736" stop-color="#ff10de"/><stop offset="0.782" stop-color="#df1de3"/><stop offset="1" stop-color="#1e6cff"/></linearGradient>
<linearGradient id="g574" gradientUnits="userSpaceOnUse" x1="1162.1" y1="669.4" x2="1140.3" y2="694.0"><stop offset="0" stop-color="#1e6cff"/><stop offset="1" stop-color="#1e6cff"/></linearGradient>
<linearGradient id="g575" gradientUnits="userSpaceOnUse" x1="1131.5" y1="686.2" x2="1120.7" y2="722.2"><stop offset="0" stop-color="#1e6cff"/><stop offset="0.312" stop-color="#df1de3"/><stop offset="0.388" stop-color="#ff10de"/><stop offset="0.496" stop-color="#ff19b6"/><stop offset="0.553" stop-color="#ff3c14"/><stop offset="1" stop-color="#ff3c14"/></linearGradient>
<linearGradient id="g576" gradientUnits="userSpaceOnUse" x1="1085.3" y1="711.6" x2="1081.3" y2="729.0"><stop offset="0" stop-color="#ff4016"/><stop offset="0.3" stop-color="#f63610"/><stop offset="0.58" stop-color="#c82609"/><stop offset="0.82" stop-color="#921a04"/><stop offset="1" stop-color="#681202"/></linearGradient>
<linearGradient id="g577" gradientUnits="userSpaceOnUse" x1="1198.9" y1="654.1" x2="1161.6" y2="667.3"><stop offset="0" stop-color="#ff3c14"/><stop offset="0.636" stop-color="#ff3c14"/><stop offset="0.671" stop-color="#ff19b6"/><stop offset="0.736" stop-color="#ff10de"/><stop offset="0.782" stop-color="#df1de3"/><stop offset="1" stop-color="#1e6cff"/></linearGradient>
<linearGradient id="g578" gradientUnits="userSpaceOnUse" x1="1163.8" y1="673.4" x2="1146.5" y2="695.5"><stop offset="0" stop-color="#1e6cff"/><stop offset="1" stop-color="#1e6cff"/></linearGradient>
<linearGradient id="g579" gradientUnits="userSpaceOnUse" x1="1137.0" y1="688.1" x2="1128.4" y2="722.2"><stop offset="0" stop-color="#1e6cff"/><stop offset="0.31" stop-color="#df1de3"/><stop offset="0.383" stop-color="#ff10de"/><stop offset="0.487" stop-color="#ff19b6"/><stop offset="0.544" stop-color="#ff3c14"/><stop offset="1" stop-color="#ff3c14"/></linearGradient>
<linearGradient id="g580" gradientUnits="userSpaceOnUse" x1="1091.9" y1="713.0" x2="1088.1" y2="730.3"><stop offset="0" stop-color="#ff4016"/><stop offset="0.3" stop-color="#f63610"/><stop offset="0.58" stop-color="#c82609"/><stop offset="0.82" stop-color="#921a04"/><stop offset="1" stop-color="#681202"/></linearGradient>
<linearGradient id="g581" gradientUnits="userSpaceOnUse" x1="1199.8" y1="658.6" x2="1163.5" y2="671.9"><stop offset="0" stop-color="#ff3c14"/><stop offset="0.639" stop-color="#ff3c14"/><stop offset="0.676" stop-color="#ff19b6"/><stop offset="0.74" stop-color="#ff10de"/><stop offset="0.785" stop-color="#df1de3"/><stop offset="1" stop-color="#1e6cff"/></linearGradient>
<linearGradient id="g582" gradientUnits="userSpaceOnUse" x1="1165.5" y1="677.5" x2="1152.2" y2="696.3"><stop offset="0" stop-color="#1e6cff"/><stop offset="1" stop-color="#1e6cff"/></linearGradient>
<linearGradient id="g583" gradientUnits="userSpaceOnUse" x1="1143.0" y1="689.8" x2="1136.0" y2="722.3"><stop offset="0" stop-color="#1e6cff"/><stop offset="0.313" stop-color="#df1de3"/><stop offset="0.384" stop-color="#ff10de"/><stop offset="0.485" stop-color="#ff19b6"/><stop offset="0.543" stop-color="#ff3c14"/><stop offset="1" stop-color="#ff3c14"/></linearGradient>
<linearGradient id="g584" gradientUnits="userSpaceOnUse" x1="1098.7" y1="714.2" x2="1095.1" y2="731.6"><stop offset="0" stop-color="#ff4016"/><stop offset="0.3" stop-color="#f63610"/><stop offset="0.58" stop-color="#c82609"/><stop offset="0.82" stop-color="#921a04"/><stop offset="1" stop-color="#681202"/></linearGradient>
<linearGradient id="g585" gradientUnits="userSpaceOnUse" x1="1200.7" y1="663.1" x2="1165.7" y2="676.9"><stop offset="0" stop-color="#ff3c14"/><stop offset="0.649" stop-color="#ff3c14"/><stop offset="0.688" stop-color="#ff19b6"/><stop offset="0.749" stop-color="#ff10de"/><stop offset="0.792" stop-color="#df1de3"/><stop offset="1" stop-color="#1e6cff"/></linearGradient>
<linearGradient id="g586" gradientUnits="userSpaceOnUse" x1="1167.4" y1="681.4" x2="1157.0" y2="696.8"><stop offset="0" stop-color="#1e6cff"/><stop offset="1" stop-color="#1e6cff"/></linearGradient>
<linearGradient id="g587" gradientUnits="userSpaceOnUse" x1="1149.2" y1="691.5" x2="1143.1" y2="722.6"><stop offset="0" stop-color="#1e6cff"/><stop offset="0.312" stop-color="#df1de3"/><stop offset="0.384" stop-color="#ff10de"/><stop offset="0.486" stop-color="#ff19b6"/><stop offset="0.548" stop-color="#ff3c14"/><stop offset="1" stop-color="#ff3c14"/></linearGradient>
<linearGradient id="g588" gradientUnits="userSpaceOnUse" x1="1105.8" y1="715.3" x2="1102.4" y2="732.8"><stop offset="0" stop-color="#ff4016"/><stop offset="0.3" stop-color="#f63610"/><stop offset="0.58" stop-color="#c82609"/><stop offset="0.82" stop-color="#921a04"/><stop offset="1" stop-color="#681202"/></linearGradient>
<linearGradient id="g589" gradientUnits="userSpaceOnUse" x1="1201.3" y1="667.8" x2="1168.4" y2="682.2"><stop offset="0" stop-color="#ff3c14"/><stop offset="0.667" stop-color="#ff3c14"/><stop offset="0.708" stop-color="#ff19b6"/><stop offset="0.766" stop-color="#ff10de"/><stop offset="0.807" stop-color="#df1de3"/><stop offset="1" stop-color="#2c66fd"/></linearGradient>
<linearGradient id="g590" gradientUnits="userSpaceOnUse" x1="1169.7" y1="685.2" x2="1161.4" y2="697.5"><stop offset="0" stop-color="#2c66fd"/><stop offset="1" stop-color="#1e6cff"/></linearGradient>
<linearGradient id="g591" gradientUnits="userSpaceOnUse" x1="1155.1" y1="693.2" x2="1149.6" y2="722.8"><stop offset="0" stop-color="#1e6cff"/><stop offset="0.299" stop-color="#df1de3"/><stop offset="0.374" stop-color="#ff10de"/><stop offset="0.481" stop-color="#ff19b6"/><stop offset="0.549" stop-color="#ff3c14"/><stop offset="1" stop-color="#ff3c14"/></linearGradient>
<linearGradient id="g592" gradientUnits="userSpaceOnUse" x1="1113.4" y1="716.1" x2="1110.1" y2="734.0"><stop offset="0" stop-color="#ff4016"/><stop offset="0.3" stop-color="#f63610"/><stop offset="0.58" stop-color="#c82609"/><stop offset="0.82" stop-color="#921a04"/><stop offset="1" stop-color="#681202"/></linearGradient>
<linearGradient id="g593" gradientUnits="userSpaceOnUse" x1="1201.4" y1="672.7" x2="1171.4" y2="686.6"><stop offset="0" stop-color="#ff3c14"/><stop offset="0.696" stop-color="#ff3c14"/><stop offset="0.738" stop-color="#ff18b8"/><stop offset="0.793" stop-color="#ff10de"/><stop offset="0.829" stop-color="#e41be2"/><stop offset="1" stop-color="#445cf9"/></linearGradient>
<linearGradient id="g594" gradientUnits="userSpaceOnUse" x1="1172.4" y1="688.7" x2="1166.2" y2="698.6"><stop offset="0" stop-color="#445cf9"/><stop offset="1" stop-color="#3164fc"/></linearGradient>
<linearGradient id="g595" gradientUnits="userSpaceOnUse" x1="1160.7" y1="695.1" x2="1156.8" y2="721.7"><stop offset="0" stop-color="#3164fc"/><stop offset="0.275" stop-color="#df1de3"/><stop offset="0.356" stop-color="#ff10de"/><stop offset="0.471" stop-color="#ff19b6"/><stop offset="0.543" stop-color="#ff3c14"/><stop offset="1" stop-color="#ff3c14"/></linearGradient>
<linearGradient id="g596" gradientUnits="userSpaceOnUse" x1="1121.6" y1="716.6" x2="1118.3" y2="735.3"><stop offset="0" stop-color="#ff4016"/><stop offset="0.3" stop-color="#f63610"/><stop offset="0.58" stop-color="#c82609"/><stop offset="0.82" stop-color="#921a04"/><stop offset="1" stop-color="#681202"/></linearGradient>
<linearGradient id="g597" gradientUnits="userSpaceOnUse" x1="1201.1" y1="677.9" x2="1174.2" y2="689.7"><stop offset="0" stop-color="#ff3c14"/><stop offset="0.733" stop-color="#ff3c14"/><stop offset="0.772" stop-color="#ff17c0"/><stop offset="0.82" stop-color="#ff10de"/><stop offset="0.851" stop-color="#e919e1"/><stop offset="1" stop-color="#5b53f6"/></linearGradient>
<linearGradient id="g598" gradientUnits="userSpaceOnUse" x1="1175.2" y1="692.1" x2="1170.8" y2="699.5"><stop offset="0" stop-color="#5b53f6"/><stop offset="1" stop-color="#4e59f8"/></linearGradient>
<linearGradient id="g599" gradientUnits="userSpaceOnUse" x1="1166.5" y1="696.9" x2="1164.2" y2="719.8"><stop offset="0" stop-color="#4e59f8"/><stop offset="0.258" stop-color="#df1de3"/><stop offset="0.344" stop-color="#ff10de"/><stop offset="0.467" stop-color="#ff19b6"/><stop offset="0.544" stop-color="#ff3c14"/><stop offset="1" stop-color="#ff3c14"/></linearGradient>
<linearGradient id="g600" gradientUnits="userSpaceOnUse" x1="1130.8" y1="716.5" x2="1127.5" y2="736.7"><stop offset="0" stop-color="#ff4016"/><stop offset="0.3" stop-color="#f63610"/><stop offset="0.58" stop-color="#c82609"/><stop offset="0.82" stop-color="#921a04"/><stop offset="1" stop-color="#681202"/></linearGradient>
<linearGradient id="g601" gradientUnits="userSpaceOnUse" x1="1200.4" y1="683.3" x2="1176.8" y2="692.0"><stop offset="0" stop-color="#ff3c14"/><stop offset="0.779" stop-color="#ff3c14"/><stop offset="0.811" stop-color="#ff15c8"/><stop offset="0.851" stop-color="#ff10de"/><stop offset="0.877" stop-color="#ef17e0"/><stop offset="1" stop-color="#724af3"/></linearGradient>
<linearGradient id="g602" gradientUnits="userSpaceOnUse" x1="1178.1" y1="695.5" x2="1174.9" y2="700.5"><stop offset="0" stop-color="#724af3"/><stop offset="1" stop-color="#694df4"/></linearGradient>
<linearGradient id="g603" gradientUnits="userSpaceOnUse" x1="1172.2" y1="698.8" x2="1170.1" y2="719.2"><stop offset="0" stop-color="#694df4"/><stop offset="0.213" stop-color="#e819e1"/><stop offset="0.292" stop-color="#ff10de"/><stop offset="0.443" stop-color="#ff18b7"/><stop offset="0.53" stop-color="#ff3c14"/><stop offset="1" stop-color="#ff3c14"/></linearGradient>
<linearGradient id="g604" gradientUnits="userSpaceOnUse" x1="1140.6" y1="716.2" x2="1137.3" y2="737.8"><stop offset="0" stop-color="#ff4016"/><stop offset="0.3" stop-color="#f63610"/><stop offset="0.58" stop-color="#c82609"/><stop offset="0.82" stop-color="#921a04"/><stop offset="1" stop-color="#681202"/></linearGradient>
<linearGradient id="g605" gradientUnits="userSpaceOnUse" x1="1199.1" y1="689.0" x2="1179.4" y2="693.9"><stop offset="0" stop-color="#ff3c14"/><stop offset="0.841" stop-color="#ff3c14"/><stop offset="0.864" stop-color="#ff13d0"/><stop offset="0.892" stop-color="#ff10de"/><stop offset="0.911" stop-color="#f514e0"/><stop offset="1" stop-color="#8b40ef"/></linearGradient>
<linearGradient id="g606" gradientUnits="userSpaceOnUse" x1="1180.7" y1="699.1" x2="1178.5" y2="701.7"><stop offset="0" stop-color="#8b40ef"/><stop offset="1" stop-color="#8542f0"/></linearGradient>
<linearGradient id="g607" gradientUnits="userSpaceOnUse" x1="1177.5" y1="700.9" x2="1174.0" y2="720.3"><stop offset="0" stop-color="#8542f0"/><stop offset="0.124" stop-color="#f116e0"/><stop offset="0.182" stop-color="#ff10de"/><stop offset="0.291" stop-color="#ff15c6"/><stop offset="0.399" stop-color="#ff3c14"/><stop offset="1" stop-color="#ff3c14"/></linearGradient>
<linearGradient id="g608" gradientUnits="userSpaceOnUse" x1="1150.0" y1="716.0" x2="1147.8" y2="737.8"><stop offset="0" stop-color="#ff4016"/><stop offset="0.3" stop-color="#f63610"/><stop offset="0.58" stop-color="#c82609"/><stop offset="0.82" stop-color="#921a04"/><stop offset="1" stop-color="#681202"/></linearGradient>
<linearGradient id="g609" gradientUnits="userSpaceOnUse" x1="1197.4" y1="695.0" x2="1182.4" y2="695.6"><stop offset="0" stop-color="#ff3c14"/><stop offset="0.935" stop-color="#ff3c14"/><stop offset="0.944" stop-color="#ff11d9"/><stop offset="0.955" stop-color="#ff10de"/><stop offset="0.963" stop-color="#fb12df"/><stop offset="1" stop-color="#a634eb"/></linearGradient>
<linearGradient id="g610" gradientUnits="userSpaceOnUse" x1="1182.7" y1="703.0" x2="1181.8" y2="703.6"><stop offset="0" stop-color="#a634eb"/><stop offset="1" stop-color="#a435eb"/></linearGradient>
<linearGradient id="g611" gradientUnits="userSpaceOnUse" x1="1181.8" y1="703.5" x2="1175.3" y2="722.3"><stop offset="0" stop-color="#a435eb"/><stop offset="0.027" stop-color="#fa12df"/><stop offset="0.039" stop-color="#ff10de"/><stop offset="0.062" stop-color="#ff12d6"/><stop offset="0.115" stop-color="#ff3c14"/><stop offset="1" stop-color="#ff3c14"/></linearGradient>
<linearGradient id="g612" gradientUnits="userSpaceOnUse" x1="1158.3" y1="716.4" x2="1157.9" y2="735.6"><stop offset="0" stop-color="#ff4016"/><stop offset="0.3" stop-color="#f63610"/><stop offset="0.58" stop-color="#c82609"/><stop offset="0.82" stop-color="#921a04"/><stop offset="1" stop-color="#681202"/></linearGradient>
<linearGradient id="g613" gradientUnits="userSpaceOnUse" x1="1194.3" y1="701.6" x2="1185.8" y2="698.6"><stop offset="0" stop-color="#ff3c14"/><stop offset="1" stop-color="#ff3c14"/><stop offset="1" stop-color="#ff16c3"/><stop offset="1" stop-color="#ff16c4"/><stop offset="1" stop-color="#ff10de"/><stop offset="1" stop-color="#da1fe3"/></linearGradient>
<linearGradient id="g614" gradientUnits="userSpaceOnUse" x1="1182.4" y1="708.2" x2="1166.0" y2="719.0"><stop offset="0" stop-color="#dd1ee3"/><stop offset="0" stop-color="#ff10de"/><stop offset="0" stop-color="#ff17bf"/><stop offset="0" stop-color="#ff17bc"/><stop offset="0" stop-color="#ff3c14"/><stop offset="1" stop-color="#ff3c14"/></linearGradient>
<linearGradient id="g615" gradientUnits="userSpaceOnUse" x1="1165.1" y1="717.7" x2="1165.8" y2="733.5"><stop offset="0" stop-color="#ff4016"/><stop offset="0.3" stop-color="#f63610"/><stop offset="0.58" stop-color="#c82609"/><stop offset="0.82" stop-color="#921a04"/><stop offset="1" stop-color="#681202"/></linearGradient>
<linearGradient id="g616" gradientUnits="userSpaceOnUse" x1="1188.6" y1="709.8" x2="1184.8" y2="706.9"><stop offset="0" stop-color="#ff3c14"/><stop offset="1" stop-color="#ff3c14"/><stop offset="1" stop-color="#ff2483"/><stop offset="1" stop-color="#ff2385"/><stop offset="1" stop-color="#ff1aaf"/></linearGradient>
<linearGradient id="g617" gradientUnits="userSpaceOnUse" x1="1178.4" y1="715.4" x2="1170.9" y2="713.5"><stop offset="0" stop-color="#ff1ca8"/><stop offset="0" stop-color="#ff257d"/><stop offset="0" stop-color="#ff2679"/><stop offset="0" stop-color="#ff3c14"/><stop offset="1" stop-color="#ff3c14"/></linearGradient>
<linearGradient id="g618" gradientUnits="userSpaceOnUse" x1="1169.2" y1="720.4" x2="1170.7" y2="729.6"><stop offset="0" stop-color="#ff4016"/><stop offset="0.3" stop-color="#f63610"/><stop offset="0.58" stop-color="#c82609"/><stop offset="0.82" stop-color="#921a04"/><stop offset="1" stop-color="#681202"/></linearGradient>
<linearGradient id="g619" gradientUnits="userSpaceOnUse" x1="1174.8" y1="722.4" x2="1174.3" y2="721.9"><stop offset="0" stop-color="#ff3c14"/><stop offset="1" stop-color="#ff3c14"/><stop offset="1" stop-color="#ff3827"/><stop offset="1" stop-color="#ff3828"/><stop offset="1" stop-color="#ff362e"/></linearGradient>
<linearGradient id="g620" gradientUnits="userSpaceOnUse" x1="1172.7" y1="723.5" x2="1172.0" y2="723.2"><stop offset="0" stop-color="#ff362e"/><stop offset="0" stop-color="#ff3827"/><stop offset="0" stop-color="#ff3826"/><stop offset="0" stop-color="#ff3c14"/><stop offset="1" stop-color="#ff3c14"/></linearGradient>
<linearGradient id="g621" gradientUnits="userSpaceOnUse" x1="1171.6" y1="724.1" x2="1172.2" y2="725.6"><stop offset="0" stop-color="#ff4016"/><stop offset="0.3" stop-color="#f63610"/><stop offset="0.58" stop-color="#c82609"/><stop offset="0.82" stop-color="#921a04"/><stop offset="1" stop-color="#681202"/></linearGradient>
</defs>
<path d="M190.0 171.3 L195.4 171.7 L203.0 172.3 L211.9 173.0 L221.5 173.7 L231.1 174.6 L240.0 175.4 L248.3 176.3 L256.7 177.2 L265.0 178.2 L273.3 179.2 L281.7 180.3 L290.0 181.5 L298.2 182.7 L306.3 183.9 L314.4 185.2 L322.6 186.5 L331.1 188.0 L340.0 189.6 L349.4 191.4 L359.3 193.3 L369.4 195.3 L379.6 197.5 L389.9 199.7 L400.0 201.9 L410.0 204.2 L420.0 206.6 L430.0 209.0 L440.0 211.5 L450.0 214.1 L460.0 216.7 L470.0 219.4 L480.0 222.1 L490.0 224.9 L500.0 227.8 L510.0 230.7 L520.0 233.7 L530.0 236.8 L540.0 239.9 L550.0 243.1 L560.0 246.3 L570.0 249.7 L580.0 253.0 L590.0 256.4 L600.0 259.8 L610.0 263.3 L620.0 266.9 L630.0 270.5 L640.0 274.1 L650.0 277.8 L660.0 281.5 L670.0 285.3 L680.0 289.2 L690.0 293.1 L700.0 297.0 L710.0 301.0 L720.0 305.0 L730.0 309.1 L740.0 313.2 L750.0 317.3 L760.0 321.6 L770.0 325.9 L780.0 330.3 L790.0 334.8 L800.0 339.3 L810.0 343.8 L820.0 348.5 L830.0 353.2 L840.0 358.0 L850.0 362.9 L860.0 367.8 L870.0 372.8 L880.0 377.9 L889.9 383.0 L899.7 388.2 L909.6 393.4 L919.5 398.8 L929.6 404.4 L940.0 410.3 L951.0 416.7 L962.5 423.5 L974.2 430.5 L985.8 437.5 L996.9 444.3 L1007.0 450.6 L1016.1 456.4 L1024.5 461.9 L1032.4 467.1 L1039.9 472.2 L1047.4 477.4 L1055.0 482.7 L1062.9 488.3 L1071.0 494.0 L1079.1 499.8 L1086.8 505.5 L1094.0 511.0 L1100.4 516.2 L1105.9 521.0 L1110.6 525.4 L1114.8 529.7 L1118.6 533.8 L1122.5 538.0 L1126.5 542.4 L1130.7 546.8 L1134.7 551.2 L1138.8 555.6 L1142.8 560.2 L1146.9 565.0 L1151.0 570.0 L1155.4 575.6 L1160.1 581.9 L1164.8 588.3 L1169.3 594.5 L1173.4 600.2 L1176.7 605.0 L1179.2 608.6 L1180.9 611.3 L1182.2 613.4 L1183.3 615.3 L1184.4 617.4 L1185.7 620.0 L1187.3 623.1 L1188.9 626.5 L1190.6 630.0 L1192.2 633.6 L1193.7 637.1 L1195.0 640.5 L1196.1 643.8 L1197.1 647.2 L1198.0 650.4 L1198.8 653.6 L1199.4 656.6 L1200.0 659.4 L1200.5 661.8 L1200.8 664.0 L1201.1 666.0 L1201.3 667.9 L1201.4 669.9 L1201.4 672.0 L1201.3 674.3 L1201.2 676.6 L1201.0 679.0 L1200.7 681.4 L1200.3 683.8 L1199.8 686.2 L1199.2 688.6 L1198.6 691.0 L1197.9 693.4 L1197.1 695.8 L1196.1 698.1 L1195.0 700.4 L1193.8 702.6 L1192.4 704.8 L1190.9 706.9 L1189.3 708.9 L1187.6 711.0 L1185.7 713.0 L1183.5 715.1 L1181.0 717.4 L1178.3 719.6 L1175.7 721.6 L1173.5 723.3 L1172.0 724.6 L1172.0 724.6 L1170.4 725.3 L1168.2 726.4 L1165.6 727.6 L1162.8 728.9 L1160.0 730.0 L1157.3 731.0 L1154.7 731.8 L1152.1 732.4 L1149.5 733.0 L1146.8 733.5 L1144.1 733.9 L1141.5 734.3 L1138.9 734.6 L1136.3 734.8 L1133.7 734.9 L1131.0 735.0 L1128.4 735.0 L1125.8 735.0 L1123.4 735.0 L1121.3 734.9 L1119.1 734.8 L1116.7 734.6 L1113.7 734.2 L1110.0 733.7 L1105.3 733.0 L1099.7 732.0 L1093.6 731.0 L1087.2 729.8 L1080.9 728.6 L1075.0 727.4 L1069.5 726.2 L1064.2 725.1 L1058.9 723.9 L1053.6 722.6 L1048.0 721.2 L1042.0 719.6 L1035.6 717.9 L1029.0 716.1 L1022.1 714.1 L1014.9 712.0 L1007.6 709.8 L1000.0 707.5 L992.1 705.0 L983.9 702.3 L975.5 699.5 L967.0 696.6 L958.4 693.7 L950.0 690.7 L941.7 687.7 L933.3 684.7 L925.0 681.6 L916.7 678.4 L908.3 675.3 L900.0 672.1 L891.7 668.9 L883.3 665.7 L875.0 662.5 L866.7 659.3 L858.3 656.0 L850.0 652.8 L841.7 649.5 L833.3 646.3 L825.0 643.0 L816.7 639.7 L808.3 636.4 L800.0 633.1 L791.7 629.8 L783.3 626.4 L775.0 623.1 L766.7 619.7 L758.3 616.3 L750.0 612.9 L741.7 609.5 L733.3 606.1 L725.0 602.7 L716.7 599.2 L708.3 595.8 L700.0 592.3 L691.7 588.8 L683.3 585.3 L675.0 581.7 L666.7 578.2 L658.3 574.6 L650.0 571.0 L641.7 567.4 L633.3 563.8 L625.0 560.1 L616.7 556.5 L608.3 552.8 L600.0 549.1 L591.7 545.4 L583.3 541.7 L575.0 537.9 L566.7 534.1 L558.3 530.3 L550.0 526.5 L541.7 522.6 L533.3 518.8 L525.0 514.9 L516.7 510.9 L508.3 507.0 L500.0 503.0 L491.7 499.0 L483.3 495.0 L475.0 491.0 L466.7 486.9 L458.3 482.8 L450.0 478.7 L441.7 474.6 L433.3 470.4 L425.0 466.2 L416.7 462.0 L408.3 457.8 L400.0 453.5 L391.7 449.2 L383.3 444.8 L375.0 440.4 L366.7 436.0 L358.3 431.6 L350.0 427.1 L341.7 422.6 L333.3 418.1 L325.0 413.5 L316.7 409.0 L308.3 404.3 L300.0 399.7 L291.7 395.0 L283.3 390.3 L275.0 385.6 L266.7 380.8 L258.3 376.0 L250.0 371.1 L241.4 366.0 L232.4 360.6 L223.4 355.2 L214.8 350.0 L206.9 345.2 L200.0 341.0 L194.4 337.6 L189.8 334.7 L185.9 332.3 L182.4 330.0 L178.9 327.8 L175.0 325.3 L170.8 322.6 L166.7 319.9 L162.5 317.2 L158.3 314.5 L154.2 311.8 L150.0 309.0 L145.8 306.2 L141.7 303.3 L137.5 300.5 L133.3 297.6 L129.2 294.7 L125.0 291.9 L120.8 289.1 L116.7 286.4 L112.5 283.7 L108.3 281.0 L104.2 278.2 L100.0 275.3 L95.7 272.3 L91.4 269.1 L87.0 265.9 L82.7 262.6 L78.7 259.4 L75.0 256.3 L71.5 253.0 L68.2 249.6 L65.0 246.2 L62.3 243.0 L59.9 240.3 L58.2 238.4 L76.5 220.3 L80.0 220.2 L85.0 222.0 L86.6 221.2 L88.9 220.0 L91.6 218.7 L94.4 217.2 L97.3 215.8 L100.0 214.5 L102.5 213.3 L105.1 212.2 L107.6 211.1 L110.1 210.0 L112.6 209.0 L115.0 208.0 L117.3 207.1 L119.5 206.3 L121.7 205.6 L123.8 204.8 L125.9 204.0 L128.0 203.0 L130.1 201.9 L132.1 200.7 L134.2 199.5 L136.2 198.2 L138.1 196.8 L140.0 195.5 L141.9 194.0 L143.9 192.4 L145.8 190.8 L147.5 189.2 L148.9 187.9 L150.0 187.0 L152.0 183.0 L190.0 171.1 Z" fill="#ff3c14"/>
<g clip-path="url(#sil)">
<polygon points="142.0,171.3 150.3,171.6 162.2,172.1 176.0,172.8 190.0,173.8 204.9,175.4 221.1,177.4 236.8,179.6 250.0,181.5 258.6,182.7 264.1,183.7 270.0,184.9 280.0,187.1 295.5,190.6 314.4,194.9 334.8,199.8 355.0,205.0 374.6,210.5 394.6,216.5 414.8,222.8 435.0,229.3 455.1,235.9 475.2,242.7 495.5,249.8 516.0,257.0 537.0,264.4 558.3,272.1 579.5,279.8 600.0,287.3 619.4,294.6 638.0,301.7 656.6,309.0 676.0,316.6 696.6,324.9 718.0,333.5 739.4,342.3 760.0,351.2 780.1,360.4 799.9,369.8 818.7,378.9 836.0,387.1 850.8,393.9 863.8,399.7 876.4,405.2 890.0,410.7 905.3,416.2 921.5,421.7 937.7,427.1 953.0,432.8 968.0,438.8 983.0,445.0 996.5,451.4 1007.0,458.1 1013.4,465.3 1016.8,472.9 1019.0,480.6 1022.0,488.0 1026.5,495.3 1031.3,502.6 1036.0,509.3 1040.0,515.0 1042.8,518.8 1044.7,521.3 1046.8,523.9 1050.0,528.0 1054.8,534.3 1060.5,541.9 1066.8,550.1 1073.0,558.0 1078.8,565.1 1084.4,572.0 1090.7,579.4 1098.4,588.0 1108.6,598.9 1120.6,611.3 1132.2,623.5 1141.5,633.8 1147.5,641.3 1151.4,647.0 1154.3,652.0 1157.3,657.4 1160.3,663.3 1162.8,669.3 1165.4,675.2 1168.3,681.0 1172.4,686.7 1174.6,723.2 1172.0,726.6 1172.0,726.6 1174.9,722.9 1172.5,700.9 1164.5,698.3 1157.3,696.0 1151.2,694.0 1145.3,692.4 1139.5,690.9 1133.6,689.0 1128.4,686.8 1123.6,684.5 1117.8,681.9 1109.5,678.6 1097.7,674.5 1083.3,669.7 1067.9,664.7 1053.0,660.0 1038.7,655.4 1024.3,650.8 1010.1,646.5 996.5,643.0 983.7,640.6 971.5,638.9 959.4,637.6 947.0,636.0 934.8,634.3 922.8,632.7 909.9,630.8 895.0,628.2 876.8,624.8 856.3,620.8 835.6,616.2 817.0,610.8 801.4,604.8 787.6,598.1 774.2,590.8 760.0,583.0 744.5,574.2 728.4,564.6 712.4,554.9 697.0,546.0 682.7,538.2 669.1,530.9 655.4,524.0 641.0,517.1 626.9,511.1 613.0,505.7 597.1,499.5 577.0,490.8 550.9,478.6 520.5,463.9 488.3,448.3 457.0,433.2 426.5,418.5 395.6,403.8 365.4,389.3 337.0,375.6 309.7,362.2 283.2,349.1 259.4,337.2 240.0,327.7 227.9,321.8 221.4,318.8 215.4,316.0 205.0,310.9 187.0,301.9 164.8,290.7 142.8,279.6 125.7,270.9 115.5,265.5 109.5,262.2 105.1,259.7 100.0,256.8 93.3,253.3 86.5,249.7 80.1,246.3 75.0,243.3 71.9,241.0 70.2,239.2 68.6,237.4 66.0,235.0 61.3,231.4 55.4,227.0 49.9,222.9 46.0,220.0" fill="#1e6cff"/>
<g filter="url(#b2)">
<polygon points="145.4,172.9 151.0,173.5 58.0,224.7 52.6,221.5" fill="url(#g2)"/>
<polygon points="149.6,173.2 159.5,173.8 62.1,227.4 56.7,224.3" fill="url(#g6)"/>
<polygon points="158.2,173.5 168.0,174.1 66.2,230.1 60.8,227.0" fill="url(#g10)"/>
<polygon points="166.6,173.8 176.3,174.6 70.1,233.0 64.9,229.8" fill="url(#g14)"/>
<polygon points="174.9,174.2 184.4,175.2 73.7,236.0 68.8,232.6" fill="url(#g18)"/>
<polygon points="183.1,174.8 192.3,175.8 78.4,238.4 72.4,235.6" fill="url(#g22)"/>
<polygon points="190.9,175.4 199.9,176.6 83.3,240.7 77.1,238.1" fill="url(#g26)"/>
<polygon points="198.6,176.2 207.4,177.4 88.2,243.0 81.9,240.4" fill="url(#g30)"/>
<polygon points="206.1,177.1 214.9,178.4 93.1,245.3 86.9,242.7" fill="url(#g34)"/>
<polygon points="213.5,178.0 222.3,179.3 98.0,247.7 91.8,245.0" fill="url(#g38)"/>
<polygon points="220.9,178.9 229.6,180.3 102.6,250.1 96.6,247.3" fill="url(#g42)"/>
<polygon points="228.2,179.9 236.8,181.3 107.0,252.7 101.3,249.7" fill="url(#g46)"/>
<polygon points="235.5,180.9 244.1,182.3 111.3,255.4 105.6,252.3" fill="url(#g50)"/>
<polygon points="242.7,181.9 251.3,183.4 115.8,257.9 109.9,255.0" fill="url(#g54)"/>
<polygon points="249.9,183.0 258.4,184.4 120.5,260.3 114.4,257.5" fill="url(#g58)"/>
<polygon points="257.1,184.0 265.4,185.6 125.3,262.6 119.2,259.9" fill="url(#g62)"/>
<polygon points="264.1,185.2 272.0,187.0 130.3,264.9 124.0,262.2" fill="url(#g66)"/>
<polygon points="270.7,186.6 278.5,188.4 135.3,267.2 129.0,264.5" fill="url(#g70)"/>
<polygon points="277.1,188.0 284.9,189.9 140.3,269.4 134.0,266.7" fill="url(#g74)"/>
<polygon points="283.6,189.5 291.4,191.3 145.4,271.6 139.0,269.0" fill="url(#g78)"/>
<polygon points="290.1,190.9 297.8,192.8 150.5,273.8 144.1,271.2" fill="url(#g82)"/>
<polygon points="296.5,192.3 304.3,194.2 155.6,276.0 149.1,273.4" fill="url(#g86)"/>
<polygon points="303.0,193.8 310.7,195.7 160.7,278.2 154.2,275.6" fill="url(#g90)"/>
<polygon points="309.4,195.3 317.1,197.2 165.7,280.4 159.3,277.8" fill="url(#g94)"/>
<polygon points="315.8,196.7 323.5,198.7 170.8,282.6 164.4,280.0" fill="url(#g98)"/>
<polygon points="322.2,198.2 329.8,200.2 175.9,284.8 169.5,282.2" fill="url(#g102)"/>
<polygon points="328.5,199.7 336.1,201.7 181.0,287.1 174.6,284.4" fill="url(#g106)"/>
<polygon points="334.8,201.3 342.4,203.3 186.0,289.3 179.6,286.6" fill="url(#g110)"/>
<polygon points="341.0,202.8 348.6,204.9 191.1,291.5 184.7,288.8" fill="url(#g114)"/>
<polygon points="347.2,204.4 354.7,206.5 196.1,293.8 189.7,291.1" fill="url(#g118)"/>
<polygon points="353.4,206.0 360.8,208.2 201.0,296.0 194.7,293.3" fill="url(#g122)"/>
<polygon points="359.5,207.7 366.8,209.9 205.9,298.4 199.7,295.6" fill="url(#g126)"/>
<polygon points="365.5,209.4 372.8,211.6 210.7,300.7 204.6,297.9" fill="url(#g130)"/>
<polygon points="371.5,211.1 378.7,213.3 215.2,303.2 209.4,300.2" fill="url(#g134)"/>
<polygon points="377.4,212.8 389.3,216.5 222.8,308.1 214.0,302.7" fill="url(#g138)"/>
<polygon points="388.0,216.0 399.8,219.7 230.6,312.8 221.6,307.5" fill="url(#g142)"/>
<polygon points="398.5,219.2 410.3,223.0 239.0,317.2 229.3,312.2" fill="url(#g146)"/>
<polygon points="409.0,222.4 420.7,226.2 247.6,321.4 237.7,316.6" fill="url(#g150)"/>
<polygon points="419.4,225.7 431.0,229.6 256.3,325.6 246.3,320.9" fill="url(#g154)"/>
<polygon points="429.7,229.0 441.3,232.9 265.1,329.8 255.0,325.1" fill="url(#g158)"/>
<polygon points="440.0,232.4 451.5,236.3 273.9,334.0 263.8,329.3" fill="url(#g162)"/>
<polygon points="450.2,235.8 461.7,239.7 282.7,338.1 272.6,333.5" fill="url(#g166)"/>
<polygon points="460.4,239.2 471.8,243.1 291.5,342.3 281.4,337.6" fill="url(#g170)"/>
<polygon points="470.5,242.6 481.9,246.6 300.3,346.5 290.2,341.8" fill="url(#g174)"/>
<polygon points="480.6,246.1 491.9,250.1 309.1,350.6 299.0,345.9" fill="url(#g178)"/>
<polygon points="490.6,249.6 501.9,253.6 317.9,354.8 307.8,350.1" fill="url(#g182)"/>
<polygon points="500.6,253.1 511.9,257.1 326.7,358.9 316.6,354.2" fill="url(#g186)"/>
<polygon points="510.6,256.6 521.8,260.6 335.4,363.1 325.4,358.4" fill="url(#g190)"/>
<polygon points="520.5,260.1 531.8,264.1 344.2,367.3 334.1,362.6" fill="url(#g194)"/>
<polygon points="530.5,263.6 541.7,267.7 352.9,371.5 342.9,366.8" fill="url(#g198)"/>
<polygon points="540.4,267.1 551.6,271.2 361.6,375.7 351.6,371.0" fill="url(#g202)"/>
<polygon points="550.3,270.7 561.5,274.8 370.4,379.9 360.3,375.2" fill="url(#g206)"/>
<polygon points="560.2,274.2 571.4,278.4 379.1,384.1 369.1,379.4" fill="url(#g210)"/>
<polygon points="570.1,277.8 581.2,282.0 387.8,388.4 377.8,383.6" fill="url(#g214)"/>
<polygon points="579.9,281.4 591.0,285.6 396.5,392.6 386.5,387.8" fill="url(#g218)"/>
<polygon points="589.7,285.0 600.8,289.2 405.2,396.8 395.2,392.0" fill="url(#g222)"/>
<polygon points="599.5,288.6 610.5,292.8 413.9,401.0 403.9,396.2" fill="url(#g226)"/>
<polygon points="609.3,292.3 620.3,296.5 422.6,405.2 412.6,400.4" fill="url(#g230)"/>
<polygon points="619.0,295.9 629.9,300.2 431.4,409.4 421.3,404.6" fill="url(#g234)"/>
<polygon points="628.6,299.6 639.6,303.9 440.1,413.6 430.1,408.8" fill="url(#g238)"/>
<polygon points="638.3,303.3 649.2,307.6 448.8,417.8 438.8,413.0" fill="url(#g242)"/>
<polygon points="647.9,307.0 658.7,311.3 457.6,422.0 447.6,417.2" fill="url(#g246)"/>
<polygon points="657.5,310.8 668.3,315.1 466.4,426.1 456.3,421.4" fill="url(#g250)"/>
<polygon points="667.0,314.5 677.8,318.9 475.1,430.3 465.1,425.6" fill="url(#g254)"/>
<polygon points="676.5,318.3 687.2,322.6 483.9,434.5 473.8,429.8" fill="url(#g258)"/>
<polygon points="686.0,322.1 696.7,326.4 492.7,438.7 482.6,433.9" fill="url(#g262)"/>
<polygon points="695.4,325.9 706.2,330.2 501.4,442.8 491.4,438.1" fill="url(#g266)"/>
<polygon points="704.9,329.7 715.6,334.0 510.2,447.0 500.2,442.3" fill="url(#g270)"/>
<polygon points="714.3,333.5 725.0,337.9 519.0,451.2 508.9,446.5" fill="url(#g274)"/>
<polygon points="723.7,337.3 734.3,341.7 527.8,455.4 517.7,450.6" fill="url(#g278)"/>
<polygon points="733.1,341.2 743.6,345.6 536.6,459.5 526.5,454.8" fill="url(#g282)"/>
<polygon points="742.3,345.1 752.8,349.6 545.4,463.7 535.3,458.9" fill="url(#g286)"/>
<polygon points="751.6,349.0 762.0,353.6 554.3,467.8 544.1,463.1" fill="url(#g290)"/>
<polygon points="760.7,353.0 771.0,357.6 563.1,471.9 553.0,467.2" fill="url(#g294)"/>
<polygon points="769.7,357.0 779.9,361.7 572.0,476.0 561.8,471.3" fill="url(#g298)"/>
<polygon points="778.6,361.1 788.7,365.9 581.0,480.1 570.7,475.5" fill="url(#g302)"/>
<polygon points="787.4,365.3 797.4,370.1 590.0,484.1 579.7,479.5" fill="url(#g306)"/>
<polygon points="796.1,369.5 806.1,374.3 599.3,488.0 588.8,483.5" fill="url(#g310)"/>
<polygon points="804.8,373.7 814.8,378.5 608.7,491.8 598.0,487.4" fill="url(#g314)"/>
<polygon points="813.5,377.9 823.5,382.7 618.2,495.6 607.5,491.3" fill="url(#g318)"/>
<polygon points="822.3,382.1 832.3,386.8 627.6,499.5 616.9,495.0" fill="url(#g322)"/>
<polygon points="831.1,386.3 841.2,391.0 636.6,503.5 626.3,498.9" fill="url(#g326)"/>
<polygon points="840.0,390.4 850.2,395.1 645.2,507.8 635.3,502.9" fill="url(#g330)"/>
<polygon points="848.9,394.4 859.1,399.1 653.6,512.2 644.0,507.2" fill="url(#g334)"/>
<polygon points="857.9,398.5 868.2,403.2 661.7,516.7 652.3,511.6" fill="url(#g338)"/>
<polygon points="866.9,402.5 877.3,407.1 669.7,521.3 660.5,516.1" fill="url(#g342)"/>
<polygon points="876.1,406.5 886.7,411.0 677.6,526.0 668.5,520.7" fill="url(#g346)"/>
<polygon points="885.5,410.3 896.3,414.7 685.5,530.7 676.4,525.3" fill="url(#g350)"/>
<polygon points="895.1,414.1 906.3,418.2 693.3,535.3 684.2,530.1" fill="url(#g354)"/>
<polygon points="905.0,417.6 916.4,421.6 701.1,540.0 692.0,534.8" fill="url(#g358)"/>
<polygon points="915.2,421.0 926.7,425.0 708.9,544.7 699.8,539.4" fill="url(#g362)"/>
<polygon points="925.4,424.4 936.8,428.4 716.6,549.5 707.6,544.2" fill="url(#g366)"/>
<polygon points="935.5,427.8 946.7,432.0 724.2,554.3 715.3,548.9" fill="url(#g370)"/>
<polygon points="945.4,431.4 956.3,435.7 731.9,559.1 723.0,553.7" fill="url(#g374)"/>
<polygon points="955.0,435.1 965.8,439.5 739.5,563.9 730.6,558.5" fill="url(#g378)"/>
<polygon points="964.5,438.9 975.2,443.3 742.3,571.4 733.2,566.1" fill="url(#g382)"/>
<polygon points="974.0,442.7 984.5,447.2 750.2,576.0 741.0,570.8" fill="url(#g386)"/>
<polygon points="983.3,446.5 993.4,451.3 758.3,580.6 749.0,575.4" fill="url(#g390)"/>
<polygon points="992.2,450.6 1001.7,455.7 766.5,585.1 757.1,579.9" fill="url(#g394)"/>
<polygon points="1000.5,455.0 1008.8,460.8 774.6,589.7 765.3,584.4" fill="url(#g398)"/>
<polygon points="1007.7,460.0 1014.1,467.0 782.7,594.2 773.4,588.9" fill="url(#g402)"/>
<polygon points="1013.1,466.0 1017.4,474.2 791.0,598.7 781.7,593.3" fill="url(#g406)"/>
<polygon points="1016.5,473.2 1019.7,481.9 799.8,602.9 790.1,597.7" fill="url(#g410)"/>
<polygon points="1018.7,481.0 1022.6,489.3 809.1,606.8 798.8,601.9" fill="url(#g414)"/>
<polygon points="1021.5,488.4 1026.7,496.0 819.1,610.2 808.0,605.9" fill="url(#g418)"/>
<polygon points="1025.5,495.2 1031.1,502.6 829.8,613.3 818.0,609.4" fill="url(#g422)"/>
<polygon points="1029.9,501.9 1035.6,509.1 841.1,616.1 828.6,612.6" fill="url(#g426)"/>
<polygon points="1034.3,508.4 1040.1,515.6 852.8,618.6 839.9,615.4" fill="url(#g430)"/>
<polygon points="1038.9,514.9 1044.8,522.0 864.7,621.1 851.6,618.0" fill="url(#g434)"/>
<polygon points="1043.5,521.4 1049.8,528.3 876.9,623.4 863.5,620.4" fill="url(#g438)"/>
<polygon points="1048.5,527.6 1054.6,534.6 889.1,625.7 875.6,622.7" fill="url(#g442)"/>
<polygon points="1053.4,534.0 1059.4,541.0 901.3,628.0 887.8,625.0" fill="url(#g446)"/>
<polygon points="1058.2,540.4 1064.2,547.3 913.8,630.0 900.0,627.3" fill="url(#g450)"/>
<polygon points="1063.0,546.7 1069.1,553.6 926.9,631.9 912.6,629.4" fill="url(#g454)"/>
<polygon points="1067.8,553.1 1074.1,559.9 940.1,633.6 925.6,631.3" fill="url(#g458)"/>
<polygon points="1072.8,559.3 1079.1,566.1 953.2,635.4 938.8,633.0" fill="url(#g462)"/>
<polygon points="1077.8,565.6 1084.2,572.3 966.7,636.9 951.9,634.8" fill="url(#g466)"/>
<polygon points="1082.9,571.8 1089.4,578.5 980.1,638.6 965.4,636.4" fill="url(#g470)"/>
<polygon points="1088.1,577.9 1094.7,584.6 992.6,640.7 978.8,638.0" fill="url(#g474)"/>
<polygon points="1093.4,584.0 1097.7,587.9 999.0,642.2 991.3,640.1" fill="url(#g478)"/>
<polygon points="1096.4,587.3 1100.7,591.3 1005.3,643.8 997.8,641.5" fill="url(#g482)"/>
<polygon points="1099.5,590.6 1103.8,594.6 1011.3,645.5 1004.0,643.1" fill="url(#g486)"/>
<polygon points="1102.5,593.9 1106.9,597.9 1017.2,647.2 1010.1,644.8" fill="url(#g490)"/>
<polygon points="1105.6,597.2 1110.0,601.2 1023.1,649.0 1016.0,646.5" fill="url(#g494)"/>
<polygon points="1108.8,600.5 1113.1,604.5 1028.8,650.8 1021.8,648.3" fill="url(#g498)"/>
<polygon points="1111.9,603.8 1116.3,607.7 1034.6,652.7 1027.6,650.1" fill="url(#g502)"/>
<polygon points="1115.0,607.0 1119.4,611.0 1040.3,654.5 1033.4,652.0" fill="url(#g506)"/>
<polygon points="1118.2,610.3 1122.6,614.3 1046.0,656.4 1039.1,653.8" fill="url(#g510)"/>
<polygon points="1121.3,613.6 1125.7,617.5 1051.8,658.2 1044.8,655.7" fill="url(#g514)"/>
<polygon points="1124.5,616.8 1128.8,620.8 1057.5,660.0 1050.5,657.5" fill="url(#g518)"/>
<polygon points="1127.6,620.1 1132.0,624.1 1063.3,661.9 1056.3,659.3" fill="url(#g522)"/>
<polygon points="1130.7,623.4 1135.0,627.4 1069.0,663.7 1062.1,661.2" fill="url(#g526)"/>
<polygon points="1133.8,626.7 1138.1,630.7 1074.8,665.6 1067.8,663.0" fill="url(#g530)"/>
<polygon points="1136.9,630.0 1141.1,634.1 1080.5,667.4 1073.6,664.9" fill="url(#g534)"/>
<polygon points="1139.9,633.4 1144.0,637.5 1086.2,669.3 1079.3,666.7" fill="url(#g538)"/>
<polygon points="1142.8,636.8 1146.8,641.0 1091.8,671.2 1085.0,668.6" fill="url(#g542)"/>
<polygon points="1145.6,640.2 1149.4,644.5 1097.5,673.1 1090.7,670.4" fill="url(#g546)"/>
<polygon points="1148.3,643.7 1151.9,648.2 1103.1,675.0 1096.3,672.3" fill="url(#g550)"/>
<polygon points="1150.8,647.4 1154.2,651.9 1108.6,677.0 1101.9,674.2" fill="url(#g554)"/>
<polygon points="1153.1,651.1 1156.3,655.8 1114.0,679.0 1107.5,676.1" fill="url(#g558)"/>
<polygon points="1155.2,654.9 1158.4,659.6 1119.2,681.2 1112.9,678.1" fill="url(#g562)"/>
<polygon points="1157.3,658.7 1160.4,663.5 1124.1,683.5 1118.1,680.3" fill="url(#g566)"/>
<polygon points="1159.4,662.6 1162.2,667.5 1128.9,685.9 1123.0,682.6" fill="url(#g570)"/>
<polygon points="1161.2,666.6 1164.0,671.6 1134.2,688.0 1127.9,684.9" fill="url(#g574)"/>
<polygon points="1162.9,670.7 1165.7,675.6 1140.0,689.7 1133.1,687.1" fill="url(#g578)"/>
<polygon points="1164.6,674.8 1167.5,679.6 1146.1,691.3 1138.9,688.9" fill="url(#g582)"/>
<polygon points="1166.4,678.8 1169.6,683.4 1152.2,693.0 1145.0,690.5" fill="url(#g586)"/>
<polygon points="1168.4,682.6 1172.1,687.1 1157.9,694.9 1151.1,692.2" fill="url(#g590)"/>
<polygon points="1170.9,686.3 1174.9,690.5 1163.6,696.7 1156.7,694.1" fill="url(#g594)"/>
<polygon points="1173.7,689.8 1177.8,693.9 1169.4,698.5 1162.4,696.0" fill="url(#g598)"/>
<polygon points="1176.6,693.2 1180.6,697.4 1175.0,700.5 1168.3,697.8" fill="url(#g602)"/>
<polygon points="1179.5,696.6 1182.9,701.1 1179.8,702.8 1173.9,699.6" fill="url(#g606)"/>
<polygon points="1182.0,700.1 1184.2,705.5 1183.1,706.1 1178.9,701.8" fill="url(#g610)"/>
</g>
<polygon points="155.7,167.5 161.3,167.7 150.0,173.9 144.3,173.7" fill="url(#g1)"/>
<polygon points="53.8,220.7 59.0,224.3 50.5,229.0 46.5,224.7" fill="url(#g3)"/>
<polygon points="47.7,224.0 51.5,228.5 46.8,231.0 43.1,226.5" fill="url(#g4)"/>
<polygon points="159.9,167.7 169.7,168.1 158.5,174.2 148.6,173.9" fill="url(#g5)"/>
<polygon points="57.9,223.4 63.0,227.1 53.5,232.3 49.5,228.0" fill="url(#g7)"/>
<polygon points="50.6,227.4 54.5,231.8 49.7,234.5 46.0,229.9" fill="url(#g8)"/>
<polygon points="168.3,168.0 178.1,168.5 167.0,174.6 157.1,174.2" fill="url(#g9)"/>
<polygon points="62.0,226.2 67.1,229.8 56.5,235.7 52.4,231.4" fill="url(#g11)"/>
<polygon points="53.6,230.7 57.5,235.2 52.6,237.9 48.8,233.4" fill="url(#g12)"/>
<polygon points="176.7,168.4 186.4,168.9 175.3,175.0 165.6,174.5" fill="url(#g13)"/>
<polygon points="66.1,228.9 71.0,232.7 59.6,239.0 55.5,234.7" fill="url(#g15)"/>
<polygon points="56.6,234.1 60.6,238.5 55.5,241.3 51.7,236.8" fill="url(#g16)"/>
<polygon points="185.0,168.8 194.5,169.4 183.4,175.6 173.9,174.9" fill="url(#g17)"/>
<polygon points="70.0,231.7 74.6,235.7 62.7,242.3 58.6,238.0" fill="url(#g19)"/>
<polygon points="59.7,237.4 63.7,241.8 58.4,244.6 54.6,240.2" fill="url(#g20)"/>
<polygon points="193.1,169.3 202.6,170.0 191.3,176.3 182.0,175.5" fill="url(#g21)"/>
<polygon points="73.6,234.8 79.4,238.1 65.9,245.5 61.6,241.4" fill="url(#g23)"/>
<polygon points="62.8,240.7 66.8,245.0 61.4,248.0 57.5,243.6" fill="url(#g24)"/>
<polygon points="201.2,169.9 210.6,170.6 198.9,177.1 189.9,176.1" fill="url(#g25)"/>
<polygon points="78.2,237.3 84.2,240.4 69.2,248.7 64.7,244.7" fill="url(#g27)"/>
<polygon points="65.9,244.0 70.1,248.2 64.4,251.4 60.4,247.0" fill="url(#g28)"/>
<polygon points="209.2,170.5 218.6,171.2 206.4,177.9 197.5,176.9" fill="url(#g29)"/>
<polygon points="83.1,239.6 89.2,242.6 72.7,251.7 68.0,247.9" fill="url(#g31)"/>
<polygon points="69.2,247.2 73.7,251.2 67.6,254.6 63.4,250.3" fill="url(#g32)"/>
<polygon points="217.2,171.1 226.5,171.9 213.8,178.8 205.0,177.8" fill="url(#g33)"/>
<polygon points="88.0,241.9 94.1,244.9 76.5,254.6 71.5,251.0" fill="url(#g35)"/>
<polygon points="72.7,250.3 77.4,254.2 70.9,257.7 66.6,253.6" fill="url(#g36)"/>
<polygon points="225.1,171.7 234.3,172.6 221.2,179.8 212.5,178.7" fill="url(#g37)"/>
<polygon points="92.9,244.2 98.9,247.3 80.4,257.5 75.3,253.9" fill="url(#g39)"/>
<polygon points="76.4,253.2 81.4,257.0 74.5,260.8 69.9,256.8" fill="url(#g40)"/>
<polygon points="232.9,172.4 242.0,173.3 228.5,180.8 219.8,179.6" fill="url(#g41)"/>
<polygon points="97.7,246.6 103.6,249.7 84.5,260.2 79.2,256.7" fill="url(#g43)"/>
<polygon points="80.3,256.1 85.5,259.7 78.2,263.8 73.4,259.9" fill="url(#g44)"/>
<polygon points="240.7,173.2 249.7,174.1 235.8,181.8 227.1,180.6" fill="url(#g45)"/>
<polygon points="102.4,249.0 107.9,252.3 88.6,263.0 83.3,259.5" fill="url(#g47)"/>
<polygon points="84.4,258.9 89.6,262.4 81.9,266.7 77.1,262.9" fill="url(#g48)"/>
<polygon points="248.3,174.0 257.3,175.0 243.0,182.8 234.4,181.6" fill="url(#g49)"/>
<polygon points="106.8,251.6 112.2,255.0 92.8,265.6 87.4,262.2" fill="url(#g51)"/>
<polygon points="88.5,261.6 93.8,265.1 85.8,269.5 80.8,265.8" fill="url(#g52)"/>
<polygon points="255.9,174.8 264.8,175.8 250.2,183.9 241.6,182.6" fill="url(#g53)"/>
<polygon points="111.0,254.2 116.8,257.5 97.1,268.3 91.6,264.9" fill="url(#g55)"/>
<polygon points="92.7,264.3 98.1,267.7 89.7,272.4 84.7,268.7" fill="url(#g56)"/>
<polygon points="263.4,175.6 272.2,176.7 257.4,184.9 248.8,183.7" fill="url(#g57)"/>
<polygon points="115.5,256.8 121.5,259.9 101.5,270.9 95.9,267.6" fill="url(#g59)"/>
<polygon points="97.0,266.9 102.5,270.3 93.7,275.2 88.6,271.6" fill="url(#g60)"/>
<polygon points="270.9,176.5 279.6,177.7 264.4,186.1 256.0,184.7" fill="url(#g61)"/>
<polygon points="120.3,259.2 126.4,262.2 106.0,273.4 100.3,270.2" fill="url(#g63)"/>
<polygon points="101.4,269.5 107.0,272.9 97.6,278.0 92.5,274.4" fill="url(#g64)"/>
<polygon points="278.2,177.5 286.9,178.7 271.0,187.5 263.0,185.8" fill="url(#g65)"/>
<polygon points="125.1,261.5 131.3,264.4 110.6,275.8 104.8,272.7" fill="url(#g67)"/>
<polygon points="105.9,272.1 111.6,275.3 101.7,280.8 96.5,277.2" fill="url(#g68)"/>
<polygon points="285.6,178.4 294.2,179.7 277.4,188.9 269.6,187.2" fill="url(#g69)"/>
<polygon points="130.0,263.8 136.3,266.7 115.3,278.2 109.4,275.2" fill="url(#g71)"/>
<polygon points="110.5,274.5 116.3,277.7 105.8,283.5 100.5,280.0" fill="url(#g72)"/>
<polygon points="292.8,179.4 301.4,180.7 283.9,190.4 276.0,188.7" fill="url(#g73)"/>
<polygon points="135.1,266.1 141.4,268.9 120.0,280.6 114.1,277.6" fill="url(#g75)"/>
<polygon points="115.2,277.0 121.0,280.1 109.9,286.2 104.6,282.8" fill="url(#g76)"/>
<polygon points="300.0,180.5 308.6,181.8 290.4,191.8 282.5,190.1" fill="url(#g77)"/>
<polygon points="140.1,268.3 146.4,271.1 124.6,283.1 118.8,280.0" fill="url(#g79)"/>
<polygon points="119.9,279.4 125.6,282.6 114.1,289.0 108.7,285.5" fill="url(#g80)"/>
<polygon points="307.2,181.5 315.6,182.9 296.8,193.3 289.0,191.5" fill="url(#g81)"/>
<polygon points="145.2,270.5 151.5,273.3 129.1,285.7 123.4,282.5" fill="url(#g83)"/>
<polygon points="124.5,281.8 130.1,285.2 118.3,291.7 112.9,288.2" fill="url(#g84)"/>
<polygon points="314.3,182.6 322.7,184.0 303.3,194.7 295.4,193.0" fill="url(#g85)"/>
<polygon points="150.2,272.7 156.6,275.5 133.5,288.3 127.8,285.0" fill="url(#g87)"/>
<polygon points="128.9,284.4 134.5,287.8 122.4,294.4 117.1,290.9" fill="url(#g88)"/>
<polygon points="321.3,183.8 329.6,185.2 309.7,196.2 301.9,194.4" fill="url(#g89)"/>
<polygon points="155.3,274.9 161.7,277.7 137.8,290.9 132.2,287.6" fill="url(#g91)"/>
<polygon points="133.3,287.0 138.8,290.4 126.4,297.2 121.2,293.6" fill="url(#g92)"/>
<polygon points="328.3,184.9 336.5,186.4 316.1,197.7 308.3,195.9" fill="url(#g93)"/>
<polygon points="160.4,277.1 166.7,279.9 142.1,293.5 136.5,290.2" fill="url(#g95)"/>
<polygon points="137.6,289.6 143.1,293.0 130.5,300.0 125.3,296.4" fill="url(#g96)"/>
<polygon points="335.2,186.1 343.4,187.7 322.5,199.2 314.7,197.4" fill="url(#g97)"/>
<polygon points="165.5,279.3 171.8,282.2 146.5,296.1 140.9,292.9" fill="url(#g99)"/>
<polygon points="142.0,292.2 147.5,295.6 134.5,302.7 129.3,299.2" fill="url(#g100)"/>
<polygon points="342.0,187.4 350.2,188.9 328.8,200.7 321.1,198.9" fill="url(#g101)"/>
<polygon points="170.6,281.5 176.9,284.3 151.1,298.6 145.2,295.5" fill="url(#g103)"/>
<polygon points="146.4,294.8 152.1,298.1 138.5,305.5 133.3,301.9" fill="url(#g104)"/>
<polygon points="348.8,188.6 356.9,190.2 335.1,202.2 327.4,200.4" fill="url(#g105)"/>
<polygon points="175.6,283.8 182.0,286.5 157.0,300.3 149.8,298.0" fill="url(#g107)"/>
<polygon points="150.9,297.3 158.0,299.8 142.6,308.3 137.4,304.7" fill="url(#g108)"/>
<polygon points="355.5,189.9 363.6,191.6 341.3,203.8 333.7,201.9" fill="url(#g109)"/>
<polygon points="180.7,285.9 187.0,288.8 161.5,302.8 155.7,299.7" fill="url(#g111)"/>
<polygon points="156.8,299.0 162.5,302.3 146.7,311.0 141.4,307.5" fill="url(#g112)"/>
<polygon points="362.2,191.2 370.3,192.9 347.5,205.4 340.0,203.5" fill="url(#g113)"/>
<polygon points="185.8,288.2 192.1,291.0 165.9,305.4 160.3,302.2" fill="url(#g115)"/>
<polygon points="161.4,301.5 166.9,304.9 150.8,313.8 145.5,310.3" fill="url(#g116)"/>
<polygon points="368.9,192.6 376.9,194.3 353.7,207.0 346.2,205.1" fill="url(#g117)"/>
<polygon points="190.8,290.4 197.1,293.3 170.2,308.1 164.6,304.8" fill="url(#g119)"/>
<polygon points="165.7,304.1 171.2,307.5 154.9,316.5 149.6,313.0" fill="url(#g120)"/>
<polygon points="375.5,193.9 383.5,195.6 359.7,208.7 352.3,206.7" fill="url(#g121)"/>
<polygon points="195.8,292.6 202.0,295.6 174.5,310.7 169.0,307.4" fill="url(#g123)"/>
<polygon points="170.0,306.8 175.5,310.2 159.1,319.2 153.7,315.7" fill="url(#g124)"/>
<polygon points="382.1,195.3 390.0,197.0 365.8,210.4 358.4,208.3" fill="url(#g125)"/>
<polygon points="200.8,294.9 206.9,297.9 178.8,313.3 173.3,310.0" fill="url(#g127)"/>
<polygon points="174.3,309.4 179.8,312.8 163.2,321.9 157.9,318.5" fill="url(#g128)"/>
<polygon points="388.7,196.7 396.5,198.5 371.7,212.1 364.4,210.0" fill="url(#g129)"/>
<polygon points="205.7,297.2 211.7,300.3 183.1,316.0 177.5,312.7" fill="url(#g131)"/>
<polygon points="178.6,312.1 184.1,315.5 167.4,324.6 162.1,321.2" fill="url(#g132)"/>
<polygon points="395.2,198.1 403.0,199.9 377.7,213.8 370.4,211.7" fill="url(#g133)"/>
<polygon points="210.5,299.6 216.3,302.7 187.3,318.6 181.8,315.3" fill="url(#g135)"/>
<polygon points="182.9,314.7 188.4,318.1 171.6,327.3 166.2,323.9" fill="url(#g136)"/>
<polygon points="401.7,199.5 414.6,202.5 388.3,217.0 376.3,213.5" fill="url(#g137)"/>
<polygon points="215.1,302.0 223.8,307.6 195.1,323.4 186.1,317.9" fill="url(#g139)"/>
<polygon points="187.2,317.3 196.1,322.8 179.2,332.2 170.4,326.6" fill="url(#g140)"/>
<polygon points="413.2,202.2 426.0,205.3 398.8,220.2 387.0,216.6" fill="url(#g141)"/>
<polygon points="222.6,306.9 231.6,312.3 203.0,328.1 193.9,322.7" fill="url(#g143)"/>
<polygon points="195.0,322.1 204.0,327.5 186.8,337.0 178.0,331.4" fill="url(#g144)"/>
<polygon points="424.6,204.9 437.3,208.0 409.3,223.5 397.5,219.8" fill="url(#g145)"/>
<polygon points="230.4,311.6 240.0,316.7 211.0,332.6 201.7,327.4" fill="url(#g147)"/>
<polygon points="202.8,326.8 212.1,332.1 194.5,341.7 185.6,336.2" fill="url(#g148)"/>
<polygon points="436.0,207.7 448.5,210.9 419.6,226.8 407.9,223.1" fill="url(#g149)"/>
<polygon points="238.8,316.0 248.6,320.9 219.3,337.0 209.8,332.0" fill="url(#g151)"/>
<polygon points="210.9,331.3 220.4,336.5 202.3,346.4 193.3,341.0" fill="url(#g152)"/>
<polygon points="447.2,210.5 459.6,213.8 430.0,230.1 418.3,226.4" fill="url(#g153)"/>
<polygon points="247.4,320.3 257.4,325.1 227.8,341.4 218.1,336.4" fill="url(#g155)"/>
<polygon points="219.2,335.8 228.8,340.9 210.0,351.2 201.1,345.7" fill="url(#g156)"/>
<polygon points="458.3,213.4 470.7,216.7 440.3,233.4 428.6,229.7" fill="url(#g157)"/>
<polygon points="256.1,324.5 266.1,329.3 236.2,345.7 226.5,340.8" fill="url(#g159)"/>
<polygon points="227.6,340.1 237.2,345.2 217.8,355.9 208.8,350.4" fill="url(#g160)"/>
<polygon points="469.3,216.3 481.6,219.7 450.5,236.8 438.9,233.0" fill="url(#g161)"/>
<polygon points="264.9,328.7 274.9,333.5 244.5,350.2 235.0,345.1" fill="url(#g163)"/>
<polygon points="236.0,344.5 245.6,349.6 225.6,360.6 216.6,355.2" fill="url(#g164)"/>
<polygon points="480.3,219.3 492.5,222.7 460.7,240.2 449.2,236.4" fill="url(#g165)"/>
<polygon points="273.6,332.8 283.7,337.6 252.9,354.6 243.3,349.5" fill="url(#g167)"/>
<polygon points="244.4,348.9 253.9,354.1 233.4,365.3 224.4,359.9" fill="url(#g168)"/>
<polygon points="491.1,222.3 503.2,225.8 470.8,243.7 459.3,239.8" fill="url(#g169)"/>
<polygon points="282.4,337.0 292.5,341.8 261.1,359.0 251.6,354.0" fill="url(#g171)"/>
<polygon points="252.7,353.3 262.2,358.5 241.3,370.0 232.2,364.6" fill="url(#g172)"/>
<polygon points="501.9,225.4 513.9,228.9 480.8,247.1 469.4,243.2" fill="url(#g173)"/>
<polygon points="291.3,341.2 301.3,345.9 269.4,363.5 259.9,358.4" fill="url(#g175)"/>
<polygon points="261.0,357.8 270.5,362.9 249.2,374.6 240.1,369.3" fill="url(#g176)"/>
<polygon points="512.6,228.5 524.5,232.1 490.8,250.6 479.5,246.7" fill="url(#g177)"/>
<polygon points="300.1,345.3 310.1,350.1 277.8,367.9 268.2,362.8" fill="url(#g179)"/>
<polygon points="269.3,362.2 278.8,367.3 257.2,379.2 248.0,373.9" fill="url(#g180)"/>
<polygon points="523.2,231.7 535.0,235.3 500.8,254.1 489.5,250.2" fill="url(#g181)"/>
<polygon points="308.9,349.5 318.9,354.2 286.1,372.3 276.5,367.3" fill="url(#g183)"/>
<polygon points="277.6,366.6 287.1,371.8 265.1,383.9 255.9,378.5" fill="url(#g184)"/>
<polygon points="533.7,234.9 545.4,238.6 510.8,257.6 499.5,253.7" fill="url(#g185)"/>
<polygon points="317.7,353.6 327.7,358.4 294.4,376.7 284.8,371.7" fill="url(#g187)"/>
<polygon points="285.9,371.1 295.4,376.2 273.2,388.4 263.9,383.2" fill="url(#g188)"/>
<polygon points="544.1,238.1 555.8,241.9 520.8,261.2 509.5,257.2" fill="url(#g189)"/>
<polygon points="326.5,357.8 336.5,362.6 302.7,381.2 293.1,376.1" fill="url(#g191)"/>
<polygon points="294.2,375.5 303.7,380.6 281.2,393.0 271.9,387.8" fill="url(#g192)"/>
<polygon points="554.5,241.5 566.0,245.3 530.7,264.7 519.5,260.7" fill="url(#g193)"/>
<polygon points="335.2,362.0 345.2,366.8 311.0,385.6 301.4,380.6" fill="url(#g195)"/>
<polygon points="302.5,379.9 312.0,385.1 289.3,397.6 280.0,392.3" fill="url(#g196)"/>
<polygon points="564.7,244.8 576.3,248.7 540.7,268.2 529.4,264.2" fill="url(#g197)"/>
<polygon points="344.0,366.2 353.9,371.0 319.3,390.0 309.7,385.0" fill="url(#g199)"/>
<polygon points="310.8,384.4 320.4,389.5 297.4,402.1 288.1,396.9" fill="url(#g200)"/>
<polygon points="574.9,248.2 586.4,252.1 550.6,271.8 539.4,267.8" fill="url(#g201)"/>
<polygon points="352.7,370.4 362.7,375.2 327.7,394.4 318.1,389.4" fill="url(#g203)"/>
<polygon points="319.2,388.8 328.8,393.8 305.5,406.7 296.2,401.4" fill="url(#g204)"/>
<polygon points="585.1,251.6 596.5,255.5 560.5,275.3 549.3,271.3" fill="url(#g205)"/>
<polygon points="361.4,374.6 371.4,379.4 336.2,398.7 326.5,393.8" fill="url(#g207)"/>
<polygon points="327.6,393.2 337.3,398.2 313.7,411.2 304.3,406.0" fill="url(#g208)"/>
<polygon points="595.2,255.0 606.6,259.0 570.3,278.9 559.2,274.9" fill="url(#g209)"/>
<polygon points="370.1,378.8 380.1,383.6 344.8,403.0 335.0,398.1" fill="url(#g211)"/>
<polygon points="336.0,397.5 345.8,402.5 321.8,415.7 312.4,410.5" fill="url(#g212)"/>
<polygon points="605.3,258.5 616.6,262.5 580.2,282.5 569.0,278.4" fill="url(#g213)"/>
<polygon points="378.8,383.0 388.8,387.8 353.5,407.2 343.5,402.4" fill="url(#g215)"/>
<polygon points="344.6,401.8 354.5,406.7 330.1,420.1 320.6,415.0" fill="url(#g216)"/>
<polygon points="615.3,262.0 626.5,266.0 590.0,286.1 578.9,282.0" fill="url(#g217)"/>
<polygon points="387.5,387.2 397.5,392.0 362.2,411.4 352.2,406.6" fill="url(#g219)"/>
<polygon points="353.3,406.0 363.2,410.9 338.3,424.6 328.8,419.5" fill="url(#g220)"/>
<polygon points="625.2,265.5 636.4,269.6 599.8,289.7 588.7,285.6" fill="url(#g221)"/>
<polygon points="396.3,391.4 406.2,396.2 370.9,415.6 360.9,410.8" fill="url(#g223)"/>
<polygon points="362.0,410.2 372.0,415.1 346.6,429.1 337.1,423.9" fill="url(#g224)"/>
<polygon points="635.1,269.1 646.2,273.2 609.5,293.4 598.5,289.2" fill="url(#g225)"/>
<polygon points="405.0,395.6 415.0,400.4 379.7,419.8 369.7,415.0" fill="url(#g227)"/>
<polygon points="370.7,414.4 380.7,419.3 354.8,433.5 345.3,428.4" fill="url(#g228)"/>
<polygon points="644.9,272.7 656.0,276.8 619.2,297.0 608.2,292.9" fill="url(#g229)"/>
<polygon points="413.7,399.8 423.7,404.6 388.4,424.0 378.4,419.2" fill="url(#g231)"/>
<polygon points="379.5,418.6 389.5,423.5 363.1,437.9 353.6,432.8" fill="url(#g232)"/>
<polygon points="654.7,276.3 665.7,280.5 628.9,300.7 617.9,296.5" fill="url(#g233)"/>
<polygon points="422.4,404.0 432.4,408.8 397.1,428.2 387.2,423.4" fill="url(#g235)"/>
<polygon points="388.2,422.8 398.2,427.7 371.5,442.4 361.9,437.3" fill="url(#g236)"/>
<polygon points="664.4,280.0 675.4,284.1 638.5,304.4 627.6,300.2" fill="url(#g237)"/>
<polygon points="431.1,408.2 441.1,413.0 405.7,432.5 395.9,427.6" fill="url(#g239)"/>
<polygon points="396.9,427.0 406.8,431.9 379.8,446.8 370.2,441.7" fill="url(#g240)"/>
<polygon points="674.1,283.6 685.0,287.8 648.1,308.1 637.2,303.9" fill="url(#g241)"/>
<polygon points="439.9,412.4 449.9,417.2 414.3,436.8 404.5,431.9" fill="url(#g243)"/>
<polygon points="405.5,431.3 415.3,436.2 388.2,451.1 378.6,446.1" fill="url(#g244)"/>
<polygon points="683.7,287.3 694.6,291.6 657.7,311.9 646.8,307.6" fill="url(#g245)"/>
<polygon points="448.6,416.6 458.6,421.4 422.8,441.1 413.0,436.2" fill="url(#g247)"/>
<polygon points="414.1,435.6 423.8,440.6 396.6,455.5 387.0,450.5" fill="url(#g248)"/>
<polygon points="693.3,291.1 704.2,295.3 667.2,315.6 656.4,311.4" fill="url(#g249)"/>
<polygon points="457.4,420.8 467.4,425.6 431.2,445.5 421.5,440.5" fill="url(#g251)"/>
<polygon points="422.6,439.9 432.3,444.9 405.1,459.9 395.4,454.9" fill="url(#g252)"/>
<polygon points="702.9,294.8 713.7,299.1 676.7,319.4 665.9,315.1" fill="url(#g253)"/>
<polygon points="466.1,425.0 476.2,429.8 439.7,449.8 430.0,444.9" fill="url(#g255)"/>
<polygon points="431.0,444.3 440.8,449.2 413.6,464.2 403.9,459.2" fill="url(#g256)"/>
<polygon points="712.4,298.6 723.1,302.9 686.2,323.2 675.4,318.9" fill="url(#g257)"/>
<polygon points="474.9,429.1 484.9,433.9 448.3,454.1 438.5,449.2" fill="url(#g259)"/>
<polygon points="439.5,448.6 449.4,453.5 422.1,468.5 412.4,463.5" fill="url(#g260)"/>
<polygon points="721.8,302.4 732.5,306.7 695.7,327.0 684.9,322.7" fill="url(#g261)"/>
<polygon points="483.7,433.3 493.7,438.1 457.0,458.3 447.1,453.5" fill="url(#g263)"/>
<polygon points="448.1,452.9 458.1,457.7 430.7,472.8 420.9,467.9" fill="url(#g264)"/>
<polygon points="731.2,306.2 741.9,310.6 705.1,330.8 694.4,326.5" fill="url(#g265)"/>
<polygon points="492.4,437.5 502.5,442.3 465.8,462.4 455.7,457.7" fill="url(#g267)"/>
<polygon points="456.8,457.1 466.9,461.9 439.3,477.1 429.4,472.1" fill="url(#g268)"/>
<polygon points="740.6,310.0 751.2,314.5 714.6,334.6 703.8,330.3" fill="url(#g269)"/>
<polygon points="501.2,441.7 511.3,446.5 474.7,466.5 464.6,461.9" fill="url(#g271)"/>
<polygon points="465.6,461.3 475.8,466.0 447.9,481.3 438.0,476.4" fill="url(#g272)"/>
<polygon points="749.9,313.9 760.5,318.4 724.0,338.4 713.3,334.1" fill="url(#g273)"/>
<polygon points="510.0,445.9 520.0,450.6 483.7,470.6 473.5,466.0" fill="url(#g275)"/>
<polygon points="474.5,465.4 484.7,470.0 456.5,485.6 446.6,480.7" fill="url(#g276)"/>
<polygon points="759.2,317.8 769.7,322.3 733.3,342.3 722.7,337.9" fill="url(#g277)"/>
<polygon points="518.8,450.0 528.8,454.8 492.7,474.7 482.4,470.0" fill="url(#g279)"/>
<polygon points="483.5,469.4 493.7,474.1 465.2,489.8 455.3,485.0" fill="url(#g280)"/>
<polygon points="768.4,321.8 778.8,326.3 742.6,346.2 732.0,341.8" fill="url(#g281)"/>
<polygon points="527.6,454.2 537.6,458.9 501.7,478.7 491.4,474.1" fill="url(#g283)"/>
<polygon points="492.5,473.5 502.7,478.1 473.9,494.0 463.9,489.2" fill="url(#g284)"/>
<polygon points="777.5,325.7 787.9,330.3 751.8,350.1 741.3,345.7" fill="url(#g285)"/>
<polygon points="536.4,458.4 546.5,463.1 510.7,482.8 500.4,478.1" fill="url(#g287)"/>
<polygon points="501.5,477.5 511.7,482.2 482.6,498.2 472.6,493.4" fill="url(#g288)"/>
<polygon points="786.6,329.7 796.9,334.3 760.9,354.1 750.5,349.6" fill="url(#g289)"/>
<polygon points="545.2,462.5 555.3,467.2 519.6,486.9 509.4,482.2" fill="url(#g291)"/>
<polygon points="510.5,481.6 520.7,486.3 491.3,502.4 481.3,497.6" fill="url(#g292)"/>
<polygon points="795.6,333.8 805.9,338.4 769.9,358.2 759.6,353.6" fill="url(#g293)"/>
<polygon points="554.0,466.6 564.2,471.4 528.5,491.0 518.3,486.3" fill="url(#g295)"/>
<polygon points="519.4,485.7 529.5,490.4 500.0,506.6 490.0,501.8" fill="url(#g296)"/>
<polygon points="804.6,337.8 814.8,342.5 778.8,362.3 768.6,357.6" fill="url(#g297)"/>
<polygon points="562.9,470.8 573.1,475.5 537.2,495.2 527.2,490.4" fill="url(#g299)"/>
<polygon points="528.2,489.8 538.3,494.6 508.8,510.8 498.8,506.0" fill="url(#g300)"/>
<polygon points="813.5,341.9 823.6,346.6 787.6,366.5 777.5,361.7" fill="url(#g301)"/>
<polygon points="571.8,474.9 582.0,479.5 546.0,499.4 536.0,494.6" fill="url(#g303)"/>
<polygon points="537.0,494.0 547.0,498.8 517.6,515.0 507.6,510.2" fill="url(#g304)"/>
<polygon points="822.4,346.0 832.5,350.8 796.3,370.7 786.3,365.9" fill="url(#g305)"/>
<polygon points="580.7,479.0 591.1,483.5 554.7,503.5 544.7,498.8" fill="url(#g307)"/>
<polygon points="545.8,498.2 555.8,503.0 526.4,519.1 516.4,514.4" fill="url(#g308)"/>
<polygon points="831.2,350.2 841.2,355.0 805.0,374.9 795.1,370.1" fill="url(#g309)"/>
<polygon points="589.8,483.0 600.4,487.4 563.6,507.7 553.5,503.0" fill="url(#g311)"/>
<polygon points="554.5,502.4 564.6,507.1 535.3,523.2 525.2,518.5" fill="url(#g312)"/>
<polygon points="840.0,354.4 849.9,359.2 813.8,379.1 803.8,374.3" fill="url(#g313)"/>
<polygon points="599.1,486.9 609.8,491.2 572.5,511.8 562.3,507.1" fill="url(#g315)"/>
<polygon points="563.3,506.5 573.5,511.2 544.2,527.4 534.0,522.6" fill="url(#g316)"/>
<polygon points="848.7,358.6 858.6,363.4 822.5,383.3 812.5,378.5" fill="url(#g317)"/>
<polygon points="608.5,490.7 619.3,495.0 581.5,515.8 571.2,511.2" fill="url(#g319)"/>
<polygon points="572.2,510.6 582.5,515.2 553.1,531.5 542.9,526.8" fill="url(#g320)"/>
<polygon points="857.3,362.8 867.2,367.7 831.3,387.4 821.2,382.7" fill="url(#g321)"/>
<polygon points="618.0,494.5 628.6,498.9 590.7,519.8 580.2,515.3" fill="url(#g323)"/>
<polygon points="581.3,514.7 591.7,519.2 562.0,535.5 551.8,530.9" fill="url(#g324)"/>
<polygon points="865.9,367.1 875.7,372.0 840.2,391.5 830.0,386.8" fill="url(#g325)"/>
<polygon points="627.3,498.3 637.7,502.9 599.9,523.7 589.4,519.2" fill="url(#g327)"/>
<polygon points="590.4,518.6 600.9,523.1 571.0,539.6 560.7,535.0" fill="url(#g328)"/>
<polygon points="874.5,371.4 884.2,376.3 849.1,395.6 838.9,390.9" fill="url(#g329)"/>
<polygon points="636.4,502.4 646.3,507.2 609.2,527.6 598.6,523.1" fill="url(#g331)"/>
<polygon points="599.7,522.5 610.2,527.0 580.0,543.6 569.7,539.0" fill="url(#g332)"/>
<polygon points="883.0,375.7 892.7,380.7 858.1,399.7 847.9,395.0" fill="url(#g333)"/>
<polygon points="645.0,506.6 654.6,511.6 618.5,531.5 607.9,527.0" fill="url(#g335)"/>
<polygon points="608.9,526.4 619.5,530.9 589.0,547.7 578.7,543.1" fill="url(#g336)"/>
<polygon points="891.4,380.1 901.1,385.1 867.1,403.7 856.8,399.1" fill="url(#g337)"/>
<polygon points="653.4,511.0 662.8,516.1 627.8,535.4 617.2,530.9" fill="url(#g339)"/>
<polygon points="618.3,530.3 628.8,534.8 598.0,551.7 587.7,547.1" fill="url(#g340)"/>
<polygon points="899.8,384.5 909.4,389.5 876.3,407.7 865.8,403.1" fill="url(#g341)"/>
<polygon points="661.5,515.5 670.8,520.7 637.1,539.3 626.5,534.8" fill="url(#g343)"/>
<polygon points="627.6,534.2 638.1,538.7 607.1,555.7 596.8,551.1" fill="url(#g344)"/>
<polygon points="908.1,388.9 917.7,393.9 885.7,411.5 875.0,407.1" fill="url(#g345)"/>
<polygon points="669.5,520.1 678.7,525.4 646.3,543.2 635.8,538.7" fill="url(#g347)"/>
<polygon points="636.8,538.1 647.3,542.6 616.2,559.7 605.8,555.2" fill="url(#g348)"/>
<polygon points="916.4,393.4 925.9,398.4 895.3,415.2 884.4,410.9" fill="url(#g349)"/>
<polygon points="677.4,524.8 686.5,530.1 655.5,547.1 645.0,542.6" fill="url(#g351)"/>
<polygon points="646.1,542.0 656.6,546.5 625.3,563.7 614.9,559.2" fill="url(#g352)"/>
<polygon points="924.6,397.9 934.0,402.9 905.3,418.7 894.0,414.7" fill="url(#g353)"/>
<polygon points="685.3,529.5 694.3,534.8 664.7,551.1 654.2,546.5" fill="url(#g355)"/>
<polygon points="655.3,546.0 665.8,550.5 634.4,567.7 624.0,563.2" fill="url(#g356)"/>
<polygon points="932.7,402.4 942.1,407.5 915.4,422.1 904.0,418.2" fill="url(#g357)"/>
<polygon points="693.1,534.2 702.2,539.5 673.9,555.0 663.5,550.4" fill="url(#g359)"/>
<polygon points="664.5,549.9 675.0,554.4 643.6,571.7 633.1,567.1" fill="url(#g360)"/>
<polygon points="940.8,406.9 950.1,412.1 925.6,425.5 914.1,421.6" fill="url(#g361)"/>
<polygon points="700.9,538.8 709.9,544.2 683.1,559.0 672.7,554.4" fill="url(#g363)"/>
<polygon points="673.7,553.8 684.2,558.3 652.7,575.6 642.3,571.1" fill="url(#g364)"/>
<polygon points="948.8,411.5 958.0,416.7 935.7,429.0 924.3,425.0" fill="url(#g365)"/>
<polygon points="708.7,543.6 717.6,549.0 692.3,562.9 681.9,558.3" fill="url(#g367)"/>
<polygon points="682.9,557.8 693.4,562.3 661.9,579.6 651.5,575.1" fill="url(#g368)"/>
<polygon points="956.7,416.2 965.9,421.4 945.7,432.5 934.5,428.4" fill="url(#g369)"/>
<polygon points="716.4,548.3 725.3,553.8 701.5,566.8 691.1,562.3" fill="url(#g371)"/>
<polygon points="692.1,561.7 702.6,566.2 671.1,583.5 660.6,579.0" fill="url(#g372)"/>
<polygon points="964.7,420.8 973.8,426.1 955.2,436.3 944.4,432.0" fill="url(#g373)"/>
<polygon points="724.0,553.1 732.9,558.6 710.7,570.8 700.3,566.2" fill="url(#g375)"/>
<polygon points="701.3,565.7 711.8,570.2 680.4,587.4 669.8,583.0" fill="url(#g376)"/>
<polygon points="972.5,425.5 981.6,430.8 964.7,440.0 954.0,435.7" fill="url(#g377)"/>
<polygon points="731.7,557.9 740.5,563.4 719.9,574.7 709.4,570.1" fill="url(#g379)"/>
<polygon points="710.5,569.6 720.9,574.1 689.6,591.3 679.1,586.9" fill="url(#g380)"/>
<polygon points="980.3,430.2 989.4,435.5 974.2,443.8 963.5,439.5" fill="url(#g381)"/>
<polygon points="734.2,565.5 743.3,570.8 729.1,578.7 718.6,574.1" fill="url(#g383)"/>
<polygon points="719.7,573.6 730.1,578.1 698.9,595.2 688.3,590.8" fill="url(#g384)"/>
<polygon points="988.1,434.9 997.1,440.2 983.5,447.7 972.9,443.2" fill="url(#g385)"/>
<polygon points="742.1,570.2 751.3,575.5 738.2,582.6 727.8,578.1" fill="url(#g387)"/>
<polygon points="728.8,577.5 739.3,582.0 708.2,599.1 697.6,594.7" fill="url(#g388)"/>
<polygon points="995.8,439.6 1004.8,445.0 992.4,451.9 982.2,447.1" fill="url(#g389)"/>
<polygon points="750.0,574.8 759.4,580.0 747.4,586.6 737.0,582.0" fill="url(#g391)"/>
<polygon points="738.0,581.5 748.5,585.9 717.5,603.0 706.9,598.6" fill="url(#g392)"/>
<polygon points="1003.6,444.4 1012.4,449.8 1000.6,456.3 991.1,451.2" fill="url(#g393)"/>
<polygon points="758.1,579.4 767.6,584.5 756.6,590.5 746.2,586.0" fill="url(#g395)"/>
<polygon points="747.2,585.4 757.7,589.9 726.9,606.8 716.3,602.4" fill="url(#g396)"/>
<polygon points="1011.2,449.1 1020.0,454.7 1007.8,461.4 999.4,455.6" fill="url(#g397)"/>
<polygon points="766.3,583.9 775.7,589.0 765.9,594.4 755.4,589.9" fill="url(#g399)"/>
<polygon points="756.4,589.3 766.9,593.8 736.3,610.7 725.6,606.3" fill="url(#g400)"/>
<polygon points="1018.9,453.9 1027.4,459.7 1013.1,467.6 1006.7,460.6" fill="url(#g401)"/>
<polygon points="774.4,588.4 783.8,593.5 775.1,598.3 764.6,593.8" fill="url(#g403)"/>
<polygon points="765.6,593.3 776.2,597.7 745.7,614.5 735.0,610.1" fill="url(#g404)"/>
<polygon points="1026.5,458.6 1034.7,464.7 1016.3,474.8 1012.1,466.5" fill="url(#g405)"/>
<polygon points="782.6,592.9 792.2,597.9 784.3,602.3 773.8,597.7" fill="url(#g407)"/>
<polygon points="774.9,597.2 785.4,601.6 755.1,618.3 744.4,614.0" fill="url(#g408)"/>
<polygon points="1034.0,463.5 1042.0,469.7 1018.5,482.6 1015.5,473.7" fill="url(#g409)"/>
<polygon points="790.9,597.3 801.0,602.1 793.6,606.2 783.1,601.7" fill="url(#g411)"/>
<polygon points="784.1,601.1 794.7,605.6 764.5,622.1 753.8,617.8" fill="url(#g412)"/>
<polygon points="1041.3,468.5 1049.3,474.7 1021.4,490.0 1017.8,481.4" fill="url(#g413)"/>
<polygon points="799.7,601.5 810.3,606.0 802.9,610.0 792.3,605.6" fill="url(#g415)"/>
<polygon points="793.4,605.0 804.0,609.4 773.9,626.0 763.2,621.6" fill="url(#g416)"/>
<polygon points="1048.5,473.5 1056.6,479.7 1025.5,496.7 1020.6,488.9" fill="url(#g417)"/>
<polygon points="809.0,605.4 820.3,609.5 812.2,613.9 801.6,609.5" fill="url(#g419)"/>
<polygon points="802.7,608.9 813.3,613.3 783.4,629.8 772.6,625.4" fill="url(#g420)"/>
<polygon points="1055.7,478.6 1063.8,484.7 1029.9,503.4 1024.6,495.7" fill="url(#g421)"/>
<polygon points="818.9,609.0 830.9,612.6 821.6,617.7 810.9,613.4" fill="url(#g423)"/>
<polygon points="812.0,612.8 822.7,617.2 792.8,633.6 782.1,629.2" fill="url(#g424)"/>
<polygon points="1062.9,483.6 1071.0,489.7 1034.4,509.9 1029.0,502.3" fill="url(#g425)"/>
<polygon points="829.6,612.1 842.2,615.4 831.0,621.5 820.3,617.3" fill="url(#g427)"/>
<polygon points="821.4,616.6 832.1,621.0 802.3,637.3 791.5,633.0" fill="url(#g428)"/>
<polygon points="1070.0,488.7 1078.1,494.8 1038.9,516.4 1033.4,508.8" fill="url(#g429)"/>
<polygon points="840.9,614.9 853.9,617.9 840.4,625.3 829.7,621.1" fill="url(#g431)"/>
<polygon points="830.8,620.5 841.5,624.8 811.8,641.1 801.0,636.8" fill="url(#g432)"/>
<polygon points="1077.1,493.8 1085.1,499.9 1043.6,522.8 1038.0,515.3" fill="url(#g433)"/>
<polygon points="852.5,617.5 865.8,620.4 849.9,629.1 839.1,624.9" fill="url(#g435)"/>
<polygon points="840.2,624.3 850.9,628.6 821.3,644.9 810.5,640.6" fill="url(#g436)"/>
<polygon points="1084.2,498.9 1092.1,505.1 1048.6,529.0 1042.6,521.8" fill="url(#g437)"/>
<polygon points="864.5,620.0 878.0,622.7 859.4,632.9 848.5,628.7" fill="url(#g439)"/>
<polygon points="849.6,628.1 860.4,632.4 830.9,648.6 820.0,644.4" fill="url(#g440)"/>
<polygon points="1091.2,504.1 1098.9,510.4 1053.4,535.4 1047.6,528.0" fill="url(#g441)"/>
<polygon points="876.6,622.3 890.2,625.0 868.9,636.7 858.0,632.5" fill="url(#g443)"/>
<polygon points="859.1,631.9 869.9,636.2 840.4,652.4 829.6,648.1" fill="url(#g444)"/>
<polygon points="1098.0,509.3 1105.5,515.8 1058.2,541.8 1052.5,534.4" fill="url(#g445)"/>
<polygon points="888.8,624.6 902.4,627.2 878.4,640.4 867.5,636.3" fill="url(#g447)"/>
<polygon points="868.6,635.7 879.4,639.9 850.0,656.1 839.1,651.9" fill="url(#g448)"/>
<polygon points="1104.6,514.7 1111.7,521.3 1063.0,548.1 1057.3,540.7" fill="url(#g449)"/>
<polygon points="901.0,626.9 914.9,629.3 888.0,644.1 877.0,640.1" fill="url(#g451)"/>
<polygon points="878.1,639.4 889.0,643.6 859.6,659.8 848.7,655.6" fill="url(#g452)"/>
<polygon points="1110.8,520.3 1117.6,527.1 1067.9,554.4 1062.1,547.1" fill="url(#g453)"/>
<polygon points="913.6,629.0 928.0,631.2 897.7,647.8 886.6,643.8" fill="url(#g455)"/>
<polygon points="887.7,643.1 898.7,647.3 869.2,663.6 858.3,659.3" fill="url(#g456)"/>
<polygon points="1116.7,526.0 1123.1,533.1 1072.8,560.7 1067.0,553.4" fill="url(#g457)"/>
<polygon points="926.6,630.8 941.2,632.9 907.5,651.4 896.3,647.5" fill="url(#g459)"/>
<polygon points="897.4,646.8 908.5,650.9 878.8,667.3 867.9,663.1" fill="url(#g460)"/>
<polygon points="1122.2,532.0 1128.6,539.0 1077.9,567.0 1071.9,559.6" fill="url(#g461)"/>
<polygon points="939.8,632.6 954.3,634.7 917.4,655.0 906.1,651.1" fill="url(#g463)"/>
<polygon points="907.2,650.4 918.4,654.5 888.4,671.0 877.5,666.8" fill="url(#g464)"/>
<polygon points="1127.7,538.0 1134.2,545.0 1083.0,573.1 1077.0,565.9" fill="url(#g465)"/>
<polygon points="952.9,634.4 967.8,636.2 927.6,658.3 916.0,654.7" fill="url(#g467)"/>
<polygon points="917.1,654.0 928.7,657.9 898.1,674.6 887.1,670.5" fill="url(#g468)"/>
<polygon points="1133.3,543.9 1139.7,550.9 1088.2,579.3 1082.1,572.1" fill="url(#g469)"/>
<polygon points="966.4,635.9 981.2,637.9 938.3,661.4 926.3,658.0" fill="url(#g471)"/>
<polygon points="927.3,657.4 939.3,661.0 907.8,678.3 896.8,674.1" fill="url(#g472)"/>
<polygon points="1138.8,549.9 1145.1,556.9 1093.5,585.4 1087.2,578.2" fill="url(#g473)"/>
<polygon points="979.8,637.6 993.7,640.0 948.2,665.0 937.0,661.1" fill="url(#g475)"/>
<polygon points="938.0,660.5 949.3,664.5 917.5,682.0 906.5,677.8" fill="url(#g476)"/>
<polygon points="1144.2,555.9 1148.1,560.3 1096.5,588.7 1092.5,584.3" fill="url(#g477)"/>
<polygon points="992.3,639.7 1000.1,641.5 953.5,667.1 946.9,664.6" fill="url(#g479)"/>
<polygon points="948.0,664.0 954.6,666.6 922.9,684.0 916.2,681.5" fill="url(#g480)"/>
<polygon points="1147.2,559.3 1151.0,563.7 1099.5,592.1 1095.5,587.7" fill="url(#g481)"/>
<polygon points="998.8,641.1 1006.4,643.1 958.8,669.3 952.2,666.7" fill="url(#g483)"/>
<polygon points="953.3,666.1 959.8,668.7 928.3,686.0 921.6,683.5" fill="url(#g484)"/>
<polygon points="1150.1,562.7 1153.8,567.2 1102.6,595.4 1098.6,591.0" fill="url(#g485)"/>
<polygon points="1005.0,642.6 1012.4,644.8 963.9,671.4 957.4,668.8" fill="url(#g487)"/>
<polygon points="958.5,668.2 965.0,670.9 933.8,688.0 927.0,685.5" fill="url(#g488)"/>
<polygon points="1152.9,566.1 1156.6,570.7 1105.7,598.7 1101.6,594.3" fill="url(#g489)"/>
<polygon points="1011.1,644.3 1018.3,646.5 969.1,673.6 962.6,671.0" fill="url(#g491)"/>
<polygon points="963.7,670.4 970.1,673.0 939.2,690.0 932.4,687.6" fill="url(#g492)"/>
<polygon points="1155.7,569.6 1159.3,574.2 1108.8,602.0 1104.7,597.6" fill="url(#g493)"/>
<polygon points="1017.0,646.0 1024.2,648.3 974.3,675.8 967.8,673.1" fill="url(#g495)"/>
<polygon points="968.8,672.5 975.3,675.2 944.7,692.0 937.9,689.6" fill="url(#g496)"/>
<polygon points="1158.4,573.1 1162.0,577.7 1111.9,605.2 1107.8,600.9" fill="url(#g497)"/>
<polygon points="1022.8,647.8 1029.9,650.1 979.4,677.9 972.9,675.3" fill="url(#g499)"/>
<polygon points="974.0,674.7 980.5,677.3 950.3,694.0 943.4,691.5" fill="url(#g500)"/>
<polygon points="1161.1,576.6 1164.6,581.2 1115.1,608.5 1111.0,604.2" fill="url(#g501)"/>
<polygon points="1028.6,649.7 1035.7,652.0 984.6,680.1 978.1,677.4" fill="url(#g503)"/>
<polygon points="979.1,676.9 985.6,679.5 955.8,695.9 948.9,693.5" fill="url(#g504)"/>
<polygon points="1163.7,580.2 1167.3,584.8 1118.2,611.8 1114.1,607.4" fill="url(#g505)"/>
<polygon points="1034.4,651.5 1041.4,653.8 989.8,682.2 983.3,679.6" fill="url(#g507)"/>
<polygon points="984.3,679.0 990.9,681.6 961.4,697.8 954.5,695.4" fill="url(#g508)"/>
<polygon points="1166.3,583.7 1169.9,588.4 1121.4,615.0 1117.3,610.7" fill="url(#g509)"/>
<polygon points="1040.1,653.4 1047.1,655.7 995.0,684.3 988.5,681.7" fill="url(#g511)"/>
<polygon points="989.5,681.2 996.1,683.7 967.0,699.7 960.1,697.4" fill="url(#g512)"/>
<polygon points="1168.9,587.3 1172.4,591.9 1124.5,618.3 1120.4,614.0" fill="url(#g513)"/>
<polygon points="1045.8,655.2 1052.9,657.5 1000.3,686.4 993.7,683.9" fill="url(#g515)"/>
<polygon points="994.8,683.3 1001.4,685.8 972.6,701.6 965.7,699.3" fill="url(#g516)"/>
<polygon points="1171.5,590.9 1175.0,595.5 1127.6,621.6 1123.6,617.2" fill="url(#g517)"/>
<polygon points="1051.5,657.1 1058.6,659.3 1005.7,688.5 999.0,685.9" fill="url(#g519)"/>
<polygon points="1000.1,685.4 1006.8,687.9 978.3,703.5 971.3,701.2" fill="url(#g520)"/>
<polygon points="1174.1,594.5 1177.5,599.1 1130.8,624.9 1126.7,620.5" fill="url(#g521)"/>
<polygon points="1057.3,658.9 1064.4,661.2 1011.1,690.5 1004.4,688.0" fill="url(#g523)"/>
<polygon points="1005.4,687.4 1012.1,689.9 984.0,705.4 977.0,703.1" fill="url(#g524)"/>
<polygon points="1176.6,598.1 1180.1,602.7 1133.8,628.2 1129.8,623.8" fill="url(#g525)"/>
<polygon points="1063.1,660.7 1070.1,663.0 1016.5,692.5 1009.8,690.0" fill="url(#g527)"/>
<polygon points="1010.8,689.5 1017.6,691.9 989.7,707.3 982.6,705.0" fill="url(#g528)"/>
<polygon points="1179.2,601.7 1182.6,606.4 1136.9,631.5 1132.9,627.1" fill="url(#g529)"/>
<polygon points="1068.8,662.6 1075.9,664.9 1022.0,694.5 1015.2,692.1" fill="url(#g531)"/>
<polygon points="1016.2,691.5 1023.0,693.9 995.4,709.1 988.3,706.8" fill="url(#g532)"/>
<polygon points="1181.7,605.3 1185.0,610.1 1139.9,634.9 1136.0,630.4" fill="url(#g533)"/>
<polygon points="1074.6,664.4 1081.6,666.7 1027.5,696.4 1020.7,694.1" fill="url(#g535)"/>
<polygon points="1021.7,693.5 1028.6,695.9 1001.2,710.9 994.1,708.7" fill="url(#g536)"/>
<polygon points="1184.1,609.0 1187.2,613.9 1142.8,638.3 1139.0,633.8" fill="url(#g537)"/>
<polygon points="1080.3,666.3 1087.3,668.6 1033.2,698.3 1026.2,696.0" fill="url(#g539)"/>
<polygon points="1027.3,695.4 1034.3,697.7 1007.1,712.7 999.9,710.5" fill="url(#g540)"/>
<polygon points="1186.3,612.7 1189.2,617.8 1145.5,641.7 1141.9,637.1" fill="url(#g541)"/>
<polygon points="1086.0,668.1 1093.0,670.4 1039.0,700.1 1031.9,697.9" fill="url(#g543)"/>
<polygon points="1032.9,697.3 1040.0,699.6 1013.0,714.4 1005.7,712.3" fill="url(#g544)"/>
<polygon points="1188.4,616.6 1191.1,621.7 1148.2,645.3 1144.7,640.6" fill="url(#g545)"/>
<polygon points="1091.6,670.0 1098.6,672.3 1044.9,701.9 1037.6,699.7" fill="url(#g547)"/>
<polygon points="1038.7,699.2 1045.9,701.3 1018.9,716.2 1011.6,714.0" fill="url(#g548)"/>
<polygon points="1190.4,620.5 1193.0,625.6 1150.6,648.9 1147.4,644.1" fill="url(#g549)"/>
<polygon points="1097.3,671.9 1104.2,674.2 1050.9,703.6 1043.5,701.5" fill="url(#g551)"/>
<polygon points="1044.6,700.9 1051.9,703.0 1024.9,717.8 1017.6,715.8" fill="url(#g552)"/>
<polygon points="1192.3,624.4 1194.9,629.6 1152.9,652.7 1149.9,647.7" fill="url(#g553)"/>
<polygon points="1102.9,673.8 1109.8,676.2 1057.0,705.2 1049.5,703.2" fill="url(#g555)"/>
<polygon points="1050.6,702.6 1058.0,704.6 1031.0,719.5 1023.6,717.5" fill="url(#g556)"/>
<polygon points="1194.2,628.4 1196.6,633.7 1155.0,656.5 1152.2,651.5" fill="url(#g557)"/>
<polygon points="1108.4,675.8 1115.2,678.2 1063.2,706.8 1055.7,704.8" fill="url(#g559)"/>
<polygon points="1056.7,704.3 1064.2,706.2 1037.1,721.2 1029.6,719.1" fill="url(#g560)"/>
<polygon points="1196.0,632.4 1198.3,637.7 1157.1,660.4 1154.4,655.3" fill="url(#g561)"/>
<polygon points="1113.9,677.8 1120.4,680.4 1069.4,708.4 1061.8,706.4" fill="url(#g563)"/>
<polygon points="1062.9,705.9 1070.5,707.8 1043.2,722.8 1035.7,720.8" fill="url(#g564)"/>
<polygon points="1197.7,636.5 1199.7,641.9 1159.1,664.3 1156.5,659.1" fill="url(#g565)"/>
<polygon points="1119.0,679.9 1125.3,682.7 1075.8,709.9 1068.1,708.0" fill="url(#g567)"/>
<polygon points="1069.1,707.4 1076.8,709.3 1049.5,724.3 1041.9,722.4" fill="url(#g568)"/>
<polygon points="1199.2,640.7 1201.0,646.3 1160.9,668.3 1158.6,663.0" fill="url(#g569)"/>
<polygon points="1123.9,682.2 1130.1,685.0 1082.2,711.4 1074.4,709.5" fill="url(#g571)"/>
<polygon points="1075.5,708.9 1083.3,710.7 1055.8,725.9 1048.1,724.0" fill="url(#g572)"/>
<polygon points="1200.5,644.9 1202.1,650.6 1162.6,672.4 1160.4,667.0" fill="url(#g573)"/>
<polygon points="1128.8,684.6 1135.4,687.1 1088.7,712.8 1080.9,711.0" fill="url(#g575)"/>
<polygon points="1081.9,710.4 1089.8,712.2 1062.2,727.3 1054.4,725.5" fill="url(#g576)"/>
<polygon points="1201.6,649.3 1203.1,655.1 1164.3,676.4 1162.1,671.0" fill="url(#g577)"/>
<polygon points="1134.0,686.7 1141.2,688.9 1095.4,714.1 1087.4,712.4" fill="url(#g579)"/>
<polygon points="1088.4,711.8 1096.4,713.5 1068.7,728.7 1060.8,727.0" fill="url(#g580)"/>
<polygon points="1202.6,653.8 1204.0,659.6 1166.2,680.4 1163.8,675.1" fill="url(#g581)"/>
<polygon points="1139.8,688.6 1147.3,690.5 1102.3,715.3 1094.0,713.8" fill="url(#g583)"/>
<polygon points="1095.1,713.2 1103.4,714.7 1075.3,730.1 1067.3,728.5" fill="url(#g584)"/>
<polygon points="1203.5,658.3 1204.8,664.2 1168.2,684.3 1165.7,679.1" fill="url(#g585)"/>
<polygon points="1145.9,690.2 1153.4,692.2 1109.7,716.2 1100.9,715.0" fill="url(#g587)"/>
<polygon points="1102.0,714.4 1110.7,715.6 1082.0,731.4 1073.9,729.8" fill="url(#g588)"/>
<polygon points="1204.3,662.9 1205.2,668.9 1170.7,687.9 1167.7,683.0" fill="url(#g589)"/>
<polygon points="1152.0,691.9 1159.1,694.0 1117.6,716.8 1108.3,715.9" fill="url(#g591)"/>
<polygon points="1109.4,715.3 1118.7,716.2 1088.8,732.7 1080.6,731.1" fill="url(#g592)"/>
<polygon points="1204.6,667.7 1205.1,674.0 1173.6,691.3 1170.2,686.6" fill="url(#g593)"/>
<polygon points="1157.7,693.8 1164.8,695.9 1126.3,717.0 1116.2,716.6" fill="url(#g595)"/>
<polygon points="1117.3,716.0 1127.3,716.5 1095.7,733.9 1087.4,732.4" fill="url(#g596)"/>
<polygon points="1204.5,672.7 1204.6,679.3 1176.4,694.8 1173.0,690.1" fill="url(#g597)"/>
<polygon points="1163.4,695.7 1170.6,697.6 1135.9,716.7 1124.9,716.9" fill="url(#g599)"/>
<polygon points="1125.9,716.2 1136.9,716.2 1102.7,735.0 1094.3,733.6" fill="url(#g600)"/>
<polygon points="1204.1,678.0 1203.6,684.8 1179.2,698.2 1175.9,693.5" fill="url(#g601)"/>
<polygon points="1169.2,697.5 1176.2,699.6 1145.6,716.4 1134.5,716.6" fill="url(#g603)"/>
<polygon points="1135.5,716.0 1146.7,715.8 1109.8,736.1 1101.3,734.8" fill="url(#g604)"/>
<polygon points="1203.2,683.5 1202.0,690.7 1181.5,702.0 1178.8,696.9" fill="url(#g605)"/>
<polygon points="1174.8,699.4 1181.0,701.9 1154.4,716.6 1144.2,716.2" fill="url(#g607)"/>
<polygon points="1145.3,715.6 1155.5,715.9 1117.5,736.9 1108.4,735.9" fill="url(#g608)"/>
<polygon points="1201.8,689.3 1199.6,696.9 1182.8,706.2 1181.3,700.6" fill="url(#g609)"/>
<polygon points="1179.7,701.6 1184.4,705.2 1162.1,717.4 1153.1,716.2" fill="url(#g611)"/>
<polygon points="1154.1,715.9 1163.2,716.6 1126.2,737.0 1116.1,736.8" fill="url(#g612)"/>
<polygon points="1199.8,695.6 1195.2,704.2 1181.2,711.8 1183.0,704.8" fill="url(#g613)"/>
<polygon points="1183.4,704.3 1183.4,710.9 1167.4,719.7 1161.1,716.6" fill="url(#g614)"/>
<polygon points="1161.8,716.6 1168.8,718.5 1136.1,736.5 1124.8,737.0" fill="url(#g615)"/>
<polygon points="1195.8,703.0 1186.7,713.6 1175.6,719.7 1181.9,710.6" fill="url(#g616)"/>
<polygon points="1183.2,709.6 1177.1,719.2 1169.8,723.2 1167.2,718.5" fill="url(#g617)"/>
<polygon points="1167.4,718.7 1171.7,721.8 1149.0,734.3 1134.7,736.6" fill="url(#g618)"/>
<polygon points="1187.7,712.6 1177.8,720.9 1171.7,724.3 1176.6,718.7" fill="url(#g619)"/>
<polygon points="1177.5,717.9 1172.9,723.9 1170.8,725.0 1170.3,721.9" fill="url(#g620)"/>
<polygon points="1170.4,722.2 1172.8,723.6 1160.8,730.2 1147.7,734.6" fill="url(#g621)"/>
<polygon points="1050.0,503.0 1052.3,504.5 1055.6,506.7 1059.4,509.2 1063.5,511.9 1067.6,514.6 1071.4,517.0 1074.8,519.0 1077.9,520.8 1081.0,522.5 1084.4,524.4 1088.2,526.9 1092.7,530.0 1098.2,534.0 1104.6,538.7 1111.5,543.9 1118.4,549.4 1124.8,554.8 1130.4,560.0 1135.1,565.2 1139.2,570.6 1143.0,576.0 1146.3,581.2 1149.5,585.9 1152.5,590.0 1155.4,593.4 1158.1,596.4 1160.6,598.9 1162.8,601.0 1164.6,602.7 1166.0,604.0 1166.0,604.0 1165.1,602.7 1164.0,601.0 1162.6,598.9 1160.9,596.4 1159.0,593.4 1156.8,590.0 1154.4,585.9 1151.8,581.2 1148.9,576.0 1145.7,570.6 1142.1,565.2 1138.0,560.0 1133.0,554.8 1127.0,549.4 1120.7,543.9 1114.4,538.7 1108.7,534.0 1104.0,530.0 1100.5,526.9 1097.9,524.4 1095.9,522.5 1094.1,520.8 1092.3,519.0 1090.2,517.0 1087.7,514.6 1085.0,511.9 1082.2,509.2 1079.7,506.7 1077.5,504.5 1076.0,503.0" fill="#2a72ff"/>
<polygon points="1071,503 1086.3,517 1100,530 1120,547 1123,548 1104,530 1090.2,517 1076,503" fill="#20dcb0"/>
<linearGradient id="slv" gradientUnits="userSpaceOnUse" x1="888" y1="0" x2="1053" y2="0"><stop offset="0" stop-color="#1e6cff"/><stop offset=".5" stop-color="#2a70ff"/><stop offset=".72" stop-color="#6a48f8"/><stop offset="1" stop-color="#ff30a0"/></linearGradient>
<polygon points="888.0,641.5 889.9,641.3 892.5,641.0 895.6,640.6 898.9,640.3 902.1,640.1 905.0,640.0 907.5,640.0 909.7,640.0 911.9,640.0 914.2,640.3 916.8,640.9 920.0,642.0 923.5,643.5 927.3,645.4 931.3,647.6 935.9,650.1 941.1,652.9 947.0,656.0 953.9,659.5 961.6,663.5 969.9,667.7 978.6,672.1 987.6,676.4 996.5,680.5 1006.2,684.6 1016.9,688.9 1027.8,693.2 1038.1,697.1 1046.8,700.4 1053.0,702.8 1053.0,702.8 1046.8,701.0 1038.1,698.6 1027.8,695.7 1016.9,692.5 1006.2,689.2 996.5,686.0 987.6,682.7 978.6,679.1 969.9,675.4 961.6,671.8 953.9,668.4 947.0,665.6 941.1,663.3 936.1,661.4 931.7,659.8 927.6,658.3 923.8,656.9 920.0,655.5 916.2,654.0 912.5,652.7 909.1,651.3 905.8,650.1 902.8,648.9 900.0,647.8 897.4,646.7 895.0,645.7 892.8,644.7 890.8,643.8 889.2,643.0 888.0,642.5" fill="url(#slv)"/>
<linearGradient id="slg" gradientUnits="userSpaceOnUse" x1="770" y1="0" x2="955" y2="0"><stop offset="0" stop-color="#1e8cf0"/><stop offset=".2" stop-color="#20e090"/><stop offset=".7" stop-color="#20dca0"/><stop offset="1" stop-color="#2090f0"/></linearGradient>
<polygon points="770.0,594.6 775.2,596.9 782.3,600.0 790.8,603.7 799.9,607.7 808.9,611.5 817.0,614.9 824.7,618.0 832.5,621.0 840.2,623.9 847.5,626.6 854.2,629.0 860.0,631.0 864.7,632.4 868.4,633.3 871.4,633.8 874.2,634.2 876.9,634.8 880.0,635.6 883.3,636.7 886.7,638.0 890.0,639.4 893.3,640.8 896.7,642.2 900.0,643.5 903.2,644.6 906.1,645.5 909.1,646.4 912.2,647.4 915.8,648.7 920.0,650.5 925.4,653.0 931.9,656.2 938.8,659.7 945.4,663.1 951.0,666.0 955.0,668.0 955.0,668.6 951.0,667.1 945.4,665.0 938.8,662.5 931.9,660.0 925.4,657.5 920.0,655.5 915.8,653.9 912.2,652.5 909.1,651.3 906.1,650.1 903.2,649.0 900.0,647.8 896.7,646.6 893.3,645.3 890.0,644.1 886.7,642.9 883.3,641.6 880.0,640.4 876.9,639.2 874.2,638.2 871.4,637.2 868.4,636.0 864.7,634.6 860.0,632.8 854.2,630.6 847.5,628.1 840.2,625.4 832.5,622.5 824.7,619.5 817.0,616.4 808.9,613.0 799.9,609.1 790.8,605.2 782.3,601.4 775.2,598.3 770.0,596.0" fill="url(#slg)"/>
<polygon points="85.0,222.0 86.6,221.2 88.9,220.0 91.6,218.7 94.4,217.2 97.3,215.8 100.0,214.5 102.5,213.3 105.1,212.2 107.6,211.1 110.1,210.0 112.6,209.0 115.0,208.0 117.3,207.1 119.5,206.3 121.7,205.6 123.8,204.8 125.9,204.0 128.0,203.0 130.1,201.9 132.1,200.7 134.2,199.5 136.2,198.2 138.1,196.8 140.0,195.5 141.9,194.1 143.8,192.6 145.6,191.0 147.3,189.5 148.8,188.2 150.0,187.0 150.8,186.0 151.3,185.2 151.6,184.5 151.8,183.9 151.9,183.4 152.0,183.0 366.6,251.0 293.5,292.5" fill="#1e68f8"/>
<path d="M128 203 L160 212.4" stroke="#c8d8e8" stroke-width="1" stroke-dasharray="1.4 1.2" fill="none" opacity=".8"/>
<polygon points="150,208.6 200,222.6 290,252.6 331,270.6 331,272.4 290,256.8 200,227.4 150,211.4" fill="#30e070"/>
<polygon points="158,211.8 215,228.6 286,252.8 286,255.4 215,232 158,213.6" fill="#d4ee00"/>
<polygon points="185,220.8 215,229.800 272,249 272,250.400 215,231.200 185,222" fill="#f08818"/>
<polygon points="284,252.600 331,270.400 331,272.600 284,255.800" fill="#ff28a8"/>
<polygon points="85,221.200 190,251.600 293.500,290.600 293.500,293.400 190,255.200 85,223.400" fill="#f818c4"/>
<polygon points="152,184.400 260,217 366.600,250.200 366.600,252 260,220.800 152,188.600" fill="#f418c8"/>
<polygon points="160,188.400 260,218.600 330,240.600 330,241.400 260,219.800 160,189.800" fill="#ff5030"/>
<polygon points="151,182.200 260,215.200 350,243.600 350,244.600 260,217 151,185" fill="#3e3c4c" opacity=".9"/>
<path d="M1150 735.5 Q1176 729 1189 712 Q1197 701 1200.5 688" stroke="#5a1002" stroke-width="6" fill="none" filter="url(#bl)" opacity=".85"/>
</g>
</svg>
</div>
<svg class="abs" style="left:0;top:0;pointer-events:none" width="1274" height="793" viewBox="0 0 1274 793">
<defs>
<radialGradient id="sph" cx=".4" cy=".3" r=".75"><stop offset="0" stop-color="#8fd4ff"/><stop offset=".35" stop-color="#1e8cff"/><stop offset=".8" stop-color="#0a3cf0"/><stop offset="1" stop-color="#0828b8"/></radialGradient>
<linearGradient id="lens" x1="0" y1="0" x2="0" y2="1"><stop offset="0" stop-color="#2f86d8"/><stop offset="1" stop-color="#5fb0f0"/></linearGradient>
<linearGradient id="lensv" x1="0" y1="0" x2="1" y2="0"><stop offset="0" stop-color="#2a78cc"/><stop offset=".55" stop-color="#58aaf0"/><stop offset="1" stop-color="#3a90e0"/></linearGradient>
<linearGradient id="rb" x1="0" y1="0" x2="0" y2="1"><stop offset="0" stop-color="#ff2a2a"/><stop offset=".22" stop-color="#ff30d0"/><stop offset=".42" stop-color="#3060ff"/><stop offset=".6" stop-color="#20e0c0"/><stop offset=".78" stop-color="#30f050"/><stop offset="1" stop-color="#e8e020"/></linearGradient>
<linearGradient id="bk" x1="0" y1="0" x2="0" y2="1"><stop offset="0" stop-color="#fff"/><stop offset=".45" stop-color="#f9a040"/><stop offset="1" stop-color="#d04a10"/></linearGradient>
</defs>
<!-- ===== main toolbar ===== -->
<g stroke-linejoin="round" stroke-linecap="round">
<!-- hand on oval -->
<ellipse cx="21.5" cy="61.5" rx="5.6" ry="11.6" fill="#fff" stroke="#4a4a4a" stroke-width="1"/>
<circle cx="21.5" cy="57" r="3" fill="none" stroke="#e05050" stroke-width=".9"/>
<path d="M21 60 v7 l-1.6-1.2 v3 l3 4 h4.4 l1-3.6 v-4.2 l-1.4-.4 -1.3-.5 -1.3-.5 v-3.6 q-1.4-1.6 -2.8 0z" fill="#fff" stroke="#3a3a3a" stroke-width=".9"/>
<!-- folder -->
<path d="M42 56 l6-2.2 2.4 1.6 5.6-1.4 1.6 10.8 -9.2 5.4 -4.6-3z" fill="#e9dc74" stroke="#6a6444" stroke-width="1"/>
<path d="M43.8 58.4 l8.8-2.6 2.2 10.6 -6.4 3.4z" fill="#f6efa0" stroke="#8a8458" stroke-width=".7"/>
<path d="M55.5 69.5 l2.6-1.4 -.6-3.4" fill="none" stroke="#555" stroke-width="1.2"/>
<!-- book -->
<path d="M72.5 54.5 l2-1 9 5.2 v11.6 l-2 1 -9-5z" fill="#4a4a52" stroke="#33333a" stroke-width="1"/>
<path d="M74.6 56.2 l7 4 v8.4 l-7-3.8z" fill="url(#bk)"/>
<path d="M81.4 71.4 l4-1.8 -1.6-2.6" fill="#33333a"/>
<!-- ruler -->
<path d="M112 56.5 h13 M123 53.5 v10 M120.8 58.8 h4.4" stroke="#8a8a8a" stroke-width="1" fill="none"/>
<rect x="112" y="63.4" width="16.4" height="7" fill="#f2c81a" stroke="#b89410" stroke-width=".8"/>
<path d="M115 66 v2.4 M118 66 v2.4 M121 66 v2.4 M124 66 v2.4" stroke="#fff8c0" stroke-width="1.2"/>
<!-- Design icon -->
<path d="M164.5 54.5 L168.8 61.5 L171.8 67.5" stroke="#222" stroke-width="1" fill="none"/>
<circle cx="164.6" cy="54.6" r="1.9" fill="#2a3cc8"/>
<circle cx="168.6" cy="61.4" r="2.6" fill="#e01818" stroke="#701010" stroke-width=".6"/>
<circle cx="171.8" cy="67.8" r="2.1" fill="#30b840" stroke="#1a6a20" stroke-width=".6"/>
<!-- 3D view sphere -->
<circle cx="240.6" cy="62" r="7.2" fill="url(#sph)"/>
<!-- Plan icon -->
<path d="M307.5 54.5 h11.5 l3.4 3.2 v12.8 h-14.9z" fill="#fafafa" stroke="#3a3a3a" stroke-width="1"/>
<path d="M310 58.5 h7 M310 61.5 q4-3 9 1 M310 66 h3 M316 66 h4 M310 68.5 q5-2.5 10 0" stroke="#555" stroke-width=".8" fill="none"/>
<!-- CNC icon -->
<path d="M386.4 53.5 h3.2 v6.4 h-3.2z" fill="#e8e8f0" stroke="#2a2a40" stroke-width="1"/>
<path d="M381.4 60 h13.2 v5 q-1 5.4 -6.6 5.6 q-5.6-.2 -6.6-5.6z" fill="#c8cce0" stroke="#2a2a40" stroke-width="1"/>
<path d="M382.4 63 h11.2 M383 65.6 h10 M384.6 68.2 h6.8" stroke="#5a5e80" stroke-width=".8"/>
</g>
<!-- ===== MDI child ===== -->
<circle cx="25.4" cy="95.4" r="6" fill="url(#sph)"/>
<g stroke-linejoin="round" stroke-linecap="round">
<!-- magnifier -->
<circle cx="28" cy="119.400" r="4.700" fill="#fff" stroke="#454545" stroke-width="1.900"/>
<path d="M31.600 123.400 l4.400 5.400" stroke="#505050" stroke-width="3"/>
<!-- zoom box -->
<rect x="47.5" y="112.5" width="10" height="7.6" fill="#fff" stroke="#444" stroke-width="1"/>
<circle cx="58.400" cy="121.400" r="4.500" fill="#fff" fill-opacity=".8" stroke="#454545" stroke-width="1.800"/>
<path d="M61.800 125 l4.200 5.200" stroke="#505050" stroke-width="2.800"/>
<!-- hand -->
<path d="M86 129.5 q2.8-3.6 4.4-9 q.8-1.6 1.8-.6 l.4 3.4 2.4-7.4 q1.2-1.6 2 0 l-.8 5.4 3-6.6 q1.4-1.2 1.8.4 l-1.8 6.4 3-4.6 q1.4-.8 1.4.8 l-3.2 7.4 q-.8 3.2 -4 4.6 l-3 2" fill="#fff" stroke="#4a4a4a" stroke-width="1"/>
<!-- rotate (selected) -->
<rect x="108.8" y="108.8" width="26.6" height="26.4" rx="2" fill="#fcfdff" stroke="#5a78d0" stroke-width="1.4"/>
<ellipse cx="122" cy="122" rx="11" ry="4.400" fill="none" stroke="#1c2f6e" stroke-width="1.700" transform="rotate(-62 122 122)"/>
<ellipse cx="122" cy="122.400" rx="10.800" ry="4.600" fill="none" stroke="#1c2f6e" stroke-width="1.700" transform="rotate(28 122 122)"/>
<path d="M124.600 112.200 l5.600 3 -6 2.600z M119.400 131.800 l-5.600-3 6-2.600z M112.400 118.400 l6.400.400 -3.600 5z M131.600 125.800 l-6.400-.400 3.600-5z" fill="#3e90ea" stroke="#2a62b8" stroke-width=".500"/>
<!-- light + sphere -->
<path d="M148.200 113 L166 117.500 L167 131.500 L152.500 131.500Z" fill="#fff200"/>
<path d="M146.6 111.8 l3.6 1 -1.8 3.2z" fill="#333"/>
<circle cx="159.600" cy="125" r="5.800" fill="url(#sph)"/>
<!-- shape icons -->
<ellipse cx="192.4" cy="122.4" rx="12.4" ry="4.6" fill="url(#lens)"/>
<ellipse cx="220.8" cy="122.6" rx="12.2" ry="5.6" fill="url(#lens)"/>
<path d="M236.6 121 q12.4 5.6 25 -1.2 q-12.4 3.4 -25 1.2z" fill="#2f86d8" stroke="#2f86d8" stroke-width="1"/>
<path d="M265.4 126.6 q8-3.4 12.2-9 q4.4 5.6 12.4 9 q-12.4 2 -24.600 0z" fill="#153e78"/>
<path d="M293 126.6 q8.400-3.400 12.200-10 q4 6.600 12.400 10 q-12.400 1.600 -24.600 0z" fill="#153e78"/>
<path d="M321 119.400 q12-1.400 24.600 6.600 q-14 .400 -24.600-6.600z" fill="#3d98e6" stroke="#3d98e6" stroke-width="1"/>
<path d="M373.400 118.600 q-12-1 -24.200 7.400 q14 0 24.200-7.400z" fill="#3d98e6" stroke="#3d98e6" stroke-width="1"/>
<path d="M377.600 127.400 q12-3 23-12 q2 8 -4 11.400 q-9 2 -19 .600z" fill="#2f86d8"/>
<path d="M405 116.400 q6-3 13.400 1 q8 4.600 10.600 10 q-12 1.400 -19-2 q-4.600-3.400 -5-9z" fill="#3d98e6"/>
<ellipse cx="445.800" cy="122" rx="4.700" ry="11.600" fill="url(#lensv)"/>
<!-- rotate view -->
<path d="M471.400 122.600 a10.400 10.400 0 0 1 19.600-4.600" fill="none" stroke="#2f78d0" stroke-width="1.600"/>
<path d="M492.400 121.400 a10.400 10.400 0 0 1 -19.600 5" fill="none" stroke="#2f78d0" stroke-width="1.600"/>
<path d="M492.600 114.400 l-.600 5.400 -5-1.800z M470.800 130 l.800-5.600 5 2.200z" fill="#2f78d0"/>
<path d="M470.600 126.600 q7-3 11.200-8.400 q4.400 5.400 11.400 8.400 q-11 2 -22.600 0z" fill="#153e78"/>
<!-- lens + red ring -->
<ellipse cx="509.600" cy="122" rx="4.800" ry="11.600" fill="url(#lensv)"/>
<path d="M506 118.800 a12 3.800 0 1 0 7.200 0" fill="none" stroke="#e81010" stroke-width="1.900"/>
<path d="M514.600 116.600 l-3.400 2.400 3.600 2z" fill="#e81010"/>
<ellipse cx="538" cy="122" rx="4.800" ry="11.600" fill="url(#lensv)"/>
<path d="M534.400 118.800 a12 3.800 0 1 0 7.200 0" fill="none" stroke="#e81010" stroke-width="1.900"/>
<path d="M543 116.600 l-3.400 2.400 3.600 2z" fill="#e81010"/>
<path d="M529 133.400 v-5.400 h-2.200 l4.200-4.600 4.200 4.600 h-2.200 v5.400z" fill="#f7a61a" stroke="#a86008" stroke-width=".700"/>
<!-- wire spheres -->
<g fill="none" stroke="#222" stroke-width="1.100">
<circle cx="573.200" cy="122" r="7.400" fill="#fff"/><ellipse cx="573.200" cy="119.400" rx="5" ry="2.400"/><path d="M566.400 124 q6.800 5 13.600 0"/>
</g>
<g fill="none" stroke="#d82020" stroke-width="1.100">
<circle cx="601.200" cy="122" r="7.400" fill="#fff"/><ellipse cx="601.200" cy="119.400" rx="5" ry="2.400"/><path d="M594.400 124 q6.800 5 13.600 0"/>
</g>
<g fill="none" stroke="#222" stroke-width="1">
<circle cx="629.400" cy="122" r="7.600" fill="#fff"/><ellipse cx="629.400" cy="122" rx="3.400" ry="7.600"/><path d="M621.800 122 h15.200 M623 118 l12.800 8 M623 126 l12.800-8 M629.400 114.400 v15.200"/><circle cx="629.400" cy="122" r="4"/>
</g>
<!-- blue spheres -->
<circle cx="664.800" cy="122" r="8.400" fill="url(#sph)"/>
<circle cx="693" cy="122" r="8.400" fill="url(#sph)"/>
<circle cx="721" cy="123" r="8" fill="url(#sph)"/>
<path d="M716.400 128 l11.400-12.400 2.600 2.200 -11.600 12.200 -3.600 1.200z" fill="#e8ecf6" stroke="#1a2a6a" stroke-width="1"/>
<path d="M724 127.400 q4 .6 6.400 3.600" stroke="#1a2a6a" stroke-width="1.200" fill="none"/>
<!-- grey striped sphere -->
<clipPath id="gs"><circle cx="757" cy="122" r="8.200"/></clipPath>
<circle cx="757" cy="122" r="8.200" fill="#b8b8b8"/>
<g clip-path="url(#gs)" stroke="#3a3a3a" stroke-width="1.500"><path d="M748 116 h18 M748 119.200 h18 M748 122.400 h18 M748 125.600 h18 M748 128.800 h18"/></g>
<!-- rainbow sphere (selected) -->
<rect x="771.400" y="108.800" width="27.200" height="26.400" rx="2" fill="#fcfdff" stroke="#5a78d0" stroke-width="1.400"/>
<ellipse cx="785" cy="122" rx="9" ry="8.400" fill="url(#rb)"/>
<!-- S|S (selected) -->
<rect x="806.800" y="108.800" width="27" height="26.400" rx="2" fill="#fcfdff" stroke="#5a78d0" stroke-width="1.400"/>
<path d="M820.400 112.400 v19.200" stroke="#1a1a1a" stroke-width="1" stroke-dasharray="3 1.200"/>
<path d="M817 113.600 q-5 2.400 -2 6.800 q3.400 5 -1.600 9.600" fill="none" stroke="#1c3cc0" stroke-width="1.600"/>
<path d="M824 113.600 q5 2.400 2 6.800 q-3.400 5 1.600 9.600" fill="none" stroke="#1c3cc0" stroke-width="1.600"/>
<!-- 4 squares -->
<rect x="848.200" y="114.800" width="6.400" height="6.400" fill="#e8202a"/><rect x="856.200" y="114.800" width="6.400" height="6.400" fill="#f6c21a"/>
<rect x="848.200" y="122.800" width="6.400" height="6.400" fill="#7cc82a"/><rect x="856.200" y="122.800" width="6.400" height="6.400" fill="#5ac8d2"/>
</g>
</svg>

<!-- status bar -->
<div id="status" class="abs"></div>
<div class="pane" style="left:941px;width:23px"></div>
<div class="pane" style="left:966px;width:64px"></div>
<div class="pane" style="left:1032.6px;width:63px"></div>
<div class="pane" style="left:1098.5px;width:63px"></div>
<div class="pane" style="left:1164.4px;width:25.6px"></div>
<div class="pane" style="left:1192.7px;width:30px"></div>
<div class="pane" style="left:1225.6px;width:22.4px"></div>
<svg class="abs" style="left:1253px;top:772px" width="14" height="14" viewBox="0 0 14 14"><path d="M13 2L2 13M13 6L6 13M13 10L10 13" stroke="#a8a8a8" stroke-width="1.3"/></svg>
<div class="abs" style="left:0;top:0;width:1274px;height:793px;border:1px solid #d8ac52;pointer-events:none"></div>
<div id="panel" class="abs"></div>
<div id="close" class="abs"><svg width="28" height="18" viewBox="0 0 28 18"><path d="M10.2 5.2l7.2 7.2M17.400 5.200l-7.200 7.200" stroke="#fff" stroke-width="1.700"/></svg></div>
<div id="dlg" class="abs"></div>
<div id="page" class="abs"></div>
<!-- tabs -->
<div class="abs" style="left:1016px;top:30px;width:88px;height:17px;background:#f2f3f7;border-top:1px solid #fafafa;border-left:1px solid #fafafa"></div>
<div class="abs" style="left:1053px;top:31px;width:1px;height:13px;background:#7c7c7c"></div>
<div class="abs" style="left:1104px;top:28px;width:61px;height:20px;background:#f4f6fb;border-left:1px solid #fff;border-top:1px solid #fff;border-right:1px solid #6d6d6d"></div>
<!-- groups -->
<div class="grp" style="top:57px;height:146px"></div>
<div class="grp" style="top:218px;height:73px"></div>
<div class="grp" style="top:305px;height:72.500px"></div>
<div class="grp" style="top:392px;height:76.500px"></div>
<!-- sliders -->
<div class="sl" style="left:1050px;top:84px;width:120px"></div><div class="th" style="left:1092.500px;top:78.500px"></div>
<div class="sl" style="left:1050px;top:109.500px;width:120px"></div><div class="th" style="left:1092.500px;top:104px"></div>
<div class="sl" style="left:1110px;top:168.500px;width:110px"></div><div class="th" style="left:1135.500px;top:163px"></div>
<div class="sl" style="left:1110px;top:189.500px;width:110px"></div><div class="th" style="left:1215.500px;top:184px"></div>
<div class="sl" style="left:1110px;top:236.500px;width:110px"></div><div class="th" style="left:1185px;top:231px"></div>
<div class="sl" style="left:1110px;top:257px;width:110px"></div><div class="th" style="left:1150.500px;top:251.500px"></div>
<div class="sl" style="left:1110px;top:277.500px;width:110px"></div><div class="th" style="left:1128.500px;top:272px"></div>
<div class="sl" style="left:1048.800px;top:348.200px;width:120px"></div><div class="th" style="left:1085px;top:342.700px"></div>
<div class="sl" style="left:1048.800px;top:433.500px;width:120px"></div><div class="th" style="left:1048.500px;top:428px"></div>
<!-- edits -->
<div class="edit" style="left:1193px;top:70.500px;width:31px;height:17px"></div>
<div class="edit" style="left:1193px;top:96px;width:31px;height:17px"></div>
<div class="edit" style="left:1191.700px;top:332.300px;width:32px;height:16.500px"></div>
<div class="edit" style="left:1191.700px;top:419.500px;width:32px;height:16.500px"></div>
<div class="edit" style="left:1121px;top:443.500px;width:102px;height:17.500px"></div>
<div class="abs" style="left:1206px;top:445.500px;width:15px;height:13.500px;background:#f0f0f0;border:1px solid #fff;border-right-color:#606060;border-bottom-color:#606060"><svg width="13" height="11" viewBox="0 0 13 11" style="display:block"><path d="M3 4h7l-3.500 4z" fill="#000"/></svg></div>
<!-- checkboxes -->
<div class="cb on" style="left:1042.500px;top:123.500px"></div>
<div class="cb on" style="left:1163px;top:123.500px"></div>
<div class="cb on" style="left:1042.500px;top:142.500px"></div>
<div class="cb on" style="left:1053px;top:359.600px"></div>
<div class="cb" style="left:1156px;top:359.600px"></div>
<!-- gradient bars -->
<div class="abs" style="left:1096px;top:316.800px;width:91px;height:7.600px;background:linear-gradient(90deg,#c8ff00,#40ff40 18%,#00f0c0 34%,#1090ff 50%,#6040ff 62%,#f000f0 76%,#ff0080 88%,#ff1010)"></div>
<div class="abs" style="left:1096px;top:403px;width:91px;height:8px;background:linear-gradient(90deg,#0a78d8,#0860b0 25%,#101820 50%,#7a7a7a 75%,#dcdcdc)"></div>
<!-- refresh -->
<div class="abs" style="left:1094px;top:478px;width:90px;height:21px;background:#e9edf8;border:1px solid #b4c2e6;border-radius:2px"></div>

<div class="abs" style="left:0;top:0;width:1274px;height:793px;pointer-events:none">
<span class="t" id="t0" style="left:125.3px;top:6.8px;font-size:15px;color:#4a3b14;transform:scaleX(0.8789);">Shape3d X CNC&nbsp; Standard Bull Nose Standard Disk 3DM 3Emmegi APS3000 AKU DSD KKL Shopbot ProCAM Barland Tropical Brasil Channel Islands</span>
<span class="t" id="t1" style="left:13.8px;top:31.6px;font-size:12px;color:#14172c;transform:scaleX(0.8471);"><u>F</u>ile</span>
<span class="t" id="t2" style="left:42.7px;top:31.6px;font-size:12px;color:#14172c;transform:scaleX(0.8804);">Board</span>
<span class="t" id="t3" style="left:83.7px;top:31.6px;font-size:12px;color:#14172c;transform:scaleX(0.9357);">Mode</span>
<span class="t" id="t4" style="left:124.9px;top:31.6px;font-size:12px;color:#14172c;transform:scaleX(0.8373);">View</span>
<span class="t" id="t5" style="left:160.0px;top:31.6px;font-size:12px;color:#14172c;transform:scaleX(0.9020);">Drawing</span>
<span class="t" id="t6" style="left:212.8px;top:31.6px;font-size:12px;color:#14172c;transform:scaleX(0.8595);">Elements</span>
<span class="t" id="t7" style="left:268.8px;top:31.6px;font-size:12px;color:#14172c;transform:scaleX(0.8638);">Display</span>
<span class="t" id="t8" style="left:316.6px;top:31.6px;font-size:12px;color:#14172c;transform:scaleX(0.8621);">Ghost</span>
<span class="t" id="t9" style="left:357.2px;top:31.6px;font-size:12px;color:#14172c;transform:scaleX(0.9037);"><u>W</u>indows</span>
<span class="t" id="t10" style="left:414.2px;top:31.6px;font-size:12px;color:#14172c;transform:scaleX(0.6879);"><u>?</u></span>
<span class="t" id="t11" style="left:177.1px;top:55.5px;font-size:13px;color:#1a2150;transform:scaleX(0.9192);">Design</span>
<span class="t" id="t12" style="left:251.3px;top:55.5px;font-size:13px;color:#1a2150;transform:scaleX(0.9124);">3D view</span>
<span class="t" id="t13" style="left:329.5px;top:55.5px;font-size:13px;color:#1a2150;transform:scaleX(0.9181);">Plan</span>
<span class="t" id="t14" style="left:401.7px;top:55.5px;font-size:13px;color:#1a2150;transform:scaleX(0.9087);">CNC</span>
<span class="t" id="t15" style="left:472.5px;top:56.0px;font-size:12px;color:#1a2150;transform:scaleX(0.9437);">cm</span>
<span class="t" id="t16" style="left:498.9px;top:56.0px;font-size:12px;color:#1a2150;transform:scaleX(0.9800);">mm</span>
<span class="t" id="t17" style="left:526.0px;top:56.0px;font-size:12px;color:#1a2150;transform:scaleX(0.9720);">inch</span>
<span class="t" id="t18" style="left:556.9px;top:56.0px;font-size:12px;color:#1a2150;transform:scaleX(0.9740);">in/f</span>
<span class="t" id="t19" style="left:549.9px;top:89.8px;font-size:13px;color:#1a2035;transform:scaleX(1.0065);">TomoLike.s3dx:2</span>
<span class="t" id="t20" style="left:9.4px;top:772.8px;font-size:11px;color:#151515;transform:scaleX(0.9264);">Press F1 for help</span>
<span class="t" id="t21" style="left:943.7px;top:772.8px;font-size:11px;color:#151515;transform:scaleX(0.7680);">"</span>
<span class="t" id="t22" style="left:968.2px;top:772.8px;font-size:11px;color:#151515;transform:scaleX(0.9249);">X: -2.293"</span>
<span class="t" id="t23" style="left:1035.0px;top:772.8px;font-size:11px;color:#151515;transform:scaleX(0.9033);">Y: 9.884"</span>
<span class="t" id="t24" style="left:1100.7px;top:772.8px;font-size:11px;color:#151515;transform:scaleX(0.9217);">Z: 0.000"</span>
<span class="t" id="t25" style="left:1082.0px;top:6.2px;font-size:15px;color:#3a3a3a;transform:scaleX(0.8962);">Direct3D Properties</span>
<span class="t" id="t26" style="left:1022.3px;top:31.5px;font-size:11px;color:#1b2050;transform:scaleX(0.8145);">Colors</span>
<span class="t" id="t27" style="left:1060.7px;top:31.5px;font-size:11px;color:#1b2050;transform:scaleX(0.8352);">Elements</span>
<span class="t" id="t28" style="left:1110.8px;top:29.5px;font-size:11px;color:#1b2050;transform:scaleX(0.8372);">Parameters</span>
<span class="t" id="t29" style="left:1031.8px;top:51.8px;font-size:11px;color:#1b2050;transform:scaleX(0.8606);background:#f4f6fb;padding:0 2px;margin-left:-2px">3D drawing parameters</span>
<span class="t" id="t30" style="left:1060.7px;top:68.0px;font-size:11px;color:#1b2050;transform:scaleX(0.8623);">Nb. of intermediate slices</span>
<span class="t" id="t31" style="left:1070.5px;top:93.2px;font-size:11px;color:#1b2050;transform:scaleX(0.8709);">Nb. of surface lines</span>
<span class="t" id="t32" style="left:1206.6px;top:73.3px;font-size:11px;color:#1b2050;transform:scaleX(0.8551);">150</span>
<span class="t" id="t33" style="left:1211.5px;top:98.7px;font-size:11px;color:#1b2050;transform:scaleX(0.8816);">38</span>
<span class="t" id="t34" style="left:1058.4px;top:123.0px;font-size:11px;color:#1b2050;transform:scaleX(0.8424);">Display bottom</span>
<span class="t" id="t35" style="left:1178.7px;top:123.0px;font-size:11px;color:#1b2050;transform:scaleX(0.8772);">Display deck</span>
<span class="t" id="t36" style="left:1058.4px;top:142.0px;font-size:11px;color:#1b2050;transform:scaleX(0.8548);">Display left and right</span>
<span class="t" id="t37" style="left:1033.4px;top:162.5px;font-size:11px;color:#1b2050;transform:scaleX(0.8733);">Perspective</span>
<span class="t" id="t38" style="left:1091.1px;top:162.5px;font-size:11px;color:#1b2050;transform:scaleX(0.7853);">Mir</span>
<span class="t" id="t39" style="left:1227.2px;top:162.5px;font-size:11px;color:#1b2050;transform:scaleX(0.8277);">Max</span>
<span class="t" id="t40" style="left:1033.2px;top:183.5px;font-size:11px;color:#1b2050;transform:scaleX(0.8580);">Opacity</span>
<span class="t" id="t41" style="left:1093.4px;top:183.5px;font-size:11px;color:#1b2050;transform:scaleX(0.8163);">0</span>
<span class="t" id="t42" style="left:1231.4px;top:183.5px;font-size:11px;color:#1b2050;transform:scaleX(0.5878);">1</span>
<span class="t" id="t43" style="left:1032.0px;top:212.5px;font-size:11px;color:#1b2050;transform:scaleX(0.8395);background:#f4f6fb;padding:0 2px;margin-left:-2px">Light parameters</span>
<span class="t" id="t44" style="left:1032.0px;top:230.8px;font-size:11px;color:#1b2050;transform:scaleX(0.8445);">Intensity</span>
<span class="t" id="t45" style="left:1088.3px;top:230.8px;font-size:11px;color:#1b2050;transform:scaleX(0.8458);">Min</span>
<span class="t" id="t46" style="left:1227.2px;top:230.8px;font-size:11px;color:#1b2050;transform:scaleX(0.8277);">Max</span>
<span class="t" id="t47" style="left:1032.0px;top:251.0px;font-size:11px;color:#1b2050;transform:scaleX(0.8673);">Reflections</span>
<span class="t" id="t48" style="left:1088.3px;top:251.0px;font-size:11px;color:#1b2050;transform:scaleX(0.8177);">Mat</span>
<span class="t" id="t49" style="left:1227.2px;top:249.8px;font-size:11px;color:#1b2050;transform:scaleX(0.8354);">Shiny</span>
<span class="t" id="t50" style="left:1032.0px;top:271.5px;font-size:11px;color:#1b2050;transform:scaleX(0.8575);">Distance</span>
<span class="t" id="t51" style="left:1088.3px;top:271.5px;font-size:11px;color:#1b2050;transform:scaleX(0.8458);">Min</span>
<span class="t" id="t52" style="left:1227.2px;top:271.5px;font-size:11px;color:#1b2050;transform:scaleX(0.8277);">Max</span>
<span class="t" id="t53" style="left:1031.3px;top:299.5px;font-size:11px;color:#1b2050;transform:scaleX(0.8558);background:#f4f6fb;padding:0 2px;margin-left:-2px">Curvature mode</span>
<span class="t" id="t54" style="left:1055.0px;top:315.3px;font-size:11px;color:#1b2050;transform:scaleX(0.9053);">C &lt;-1/R</span>
<span class="t" id="t55" style="left:1190.8px;top:315.3px;font-size:11px;color:#1b2050;transform:scaleX(0.9263);">C &gt;1/R</span>
<span class="t" id="t56" style="left:1062.5px;top:330.5px;font-size:11px;color:#1b2050;transform:scaleX(0.8678);">Limit curvature radius R</span>
<span class="t" id="t57" style="left:1193.8px;top:335.0px;font-size:11px;color:#1b2050;transform:scaleX(0.8857);">5' 2.5"</span>
<span class="t" id="t58" style="left:1069.2px;top:359.3px;font-size:11px;color:#1b2050;transform:scaleX(0.8273);">Radial</span>
<span class="t" id="t59" style="left:1172.9px;top:359.3px;font-size:11px;color:#1b2050;transform:scaleX(0.8560);">Longitudinal</span>
<span class="t" id="t60" style="left:1031.3px;top:386.2px;font-size:11px;color:#1b2050;transform:scaleX(0.8549);background:#f4f6fb;padding:0 2px;margin-left:-2px">Contour mode</span>
<span class="t" id="t61" style="left:1052.9px;top:401.5px;font-size:11px;color:#1b2050;transform:scaleX(0.8875);">dz = - Z0</span>
<span class="t" id="t62" style="left:1190.4px;top:401.5px;font-size:11px;color:#1b2050;transform:scaleX(0.8784);">dz = Z0</span>
<span class="t" id="t63" style="left:1096.7px;top:417.1px;font-size:11px;color:#1b2050;transform:scaleX(0.8746);">Step Z0</span>
<span class="t" id="t64" style="left:1203.3px;top:422.1px;font-size:11px;color:#1b2050;transform:scaleX(0.9113);">0.1"</span>
<span class="t" id="t65" style="left:1053.3px;top:446.2px;font-size:11px;color:#1b2050;transform:scaleX(0.8785);">Reference</span>
<span class="t" id="t66" style="left:1123.8px;top:446.5px;font-size:11px;color:#1b2050;transform:scaleX(0.8435);">Stringer</span>
<span class="t" id="t67" style="left:1119.8px;top:482.3px;font-size:12px;color:#1b2050;transform:scaleX(0.8327);">Refresh</span>
</div>
</body>
</html>
